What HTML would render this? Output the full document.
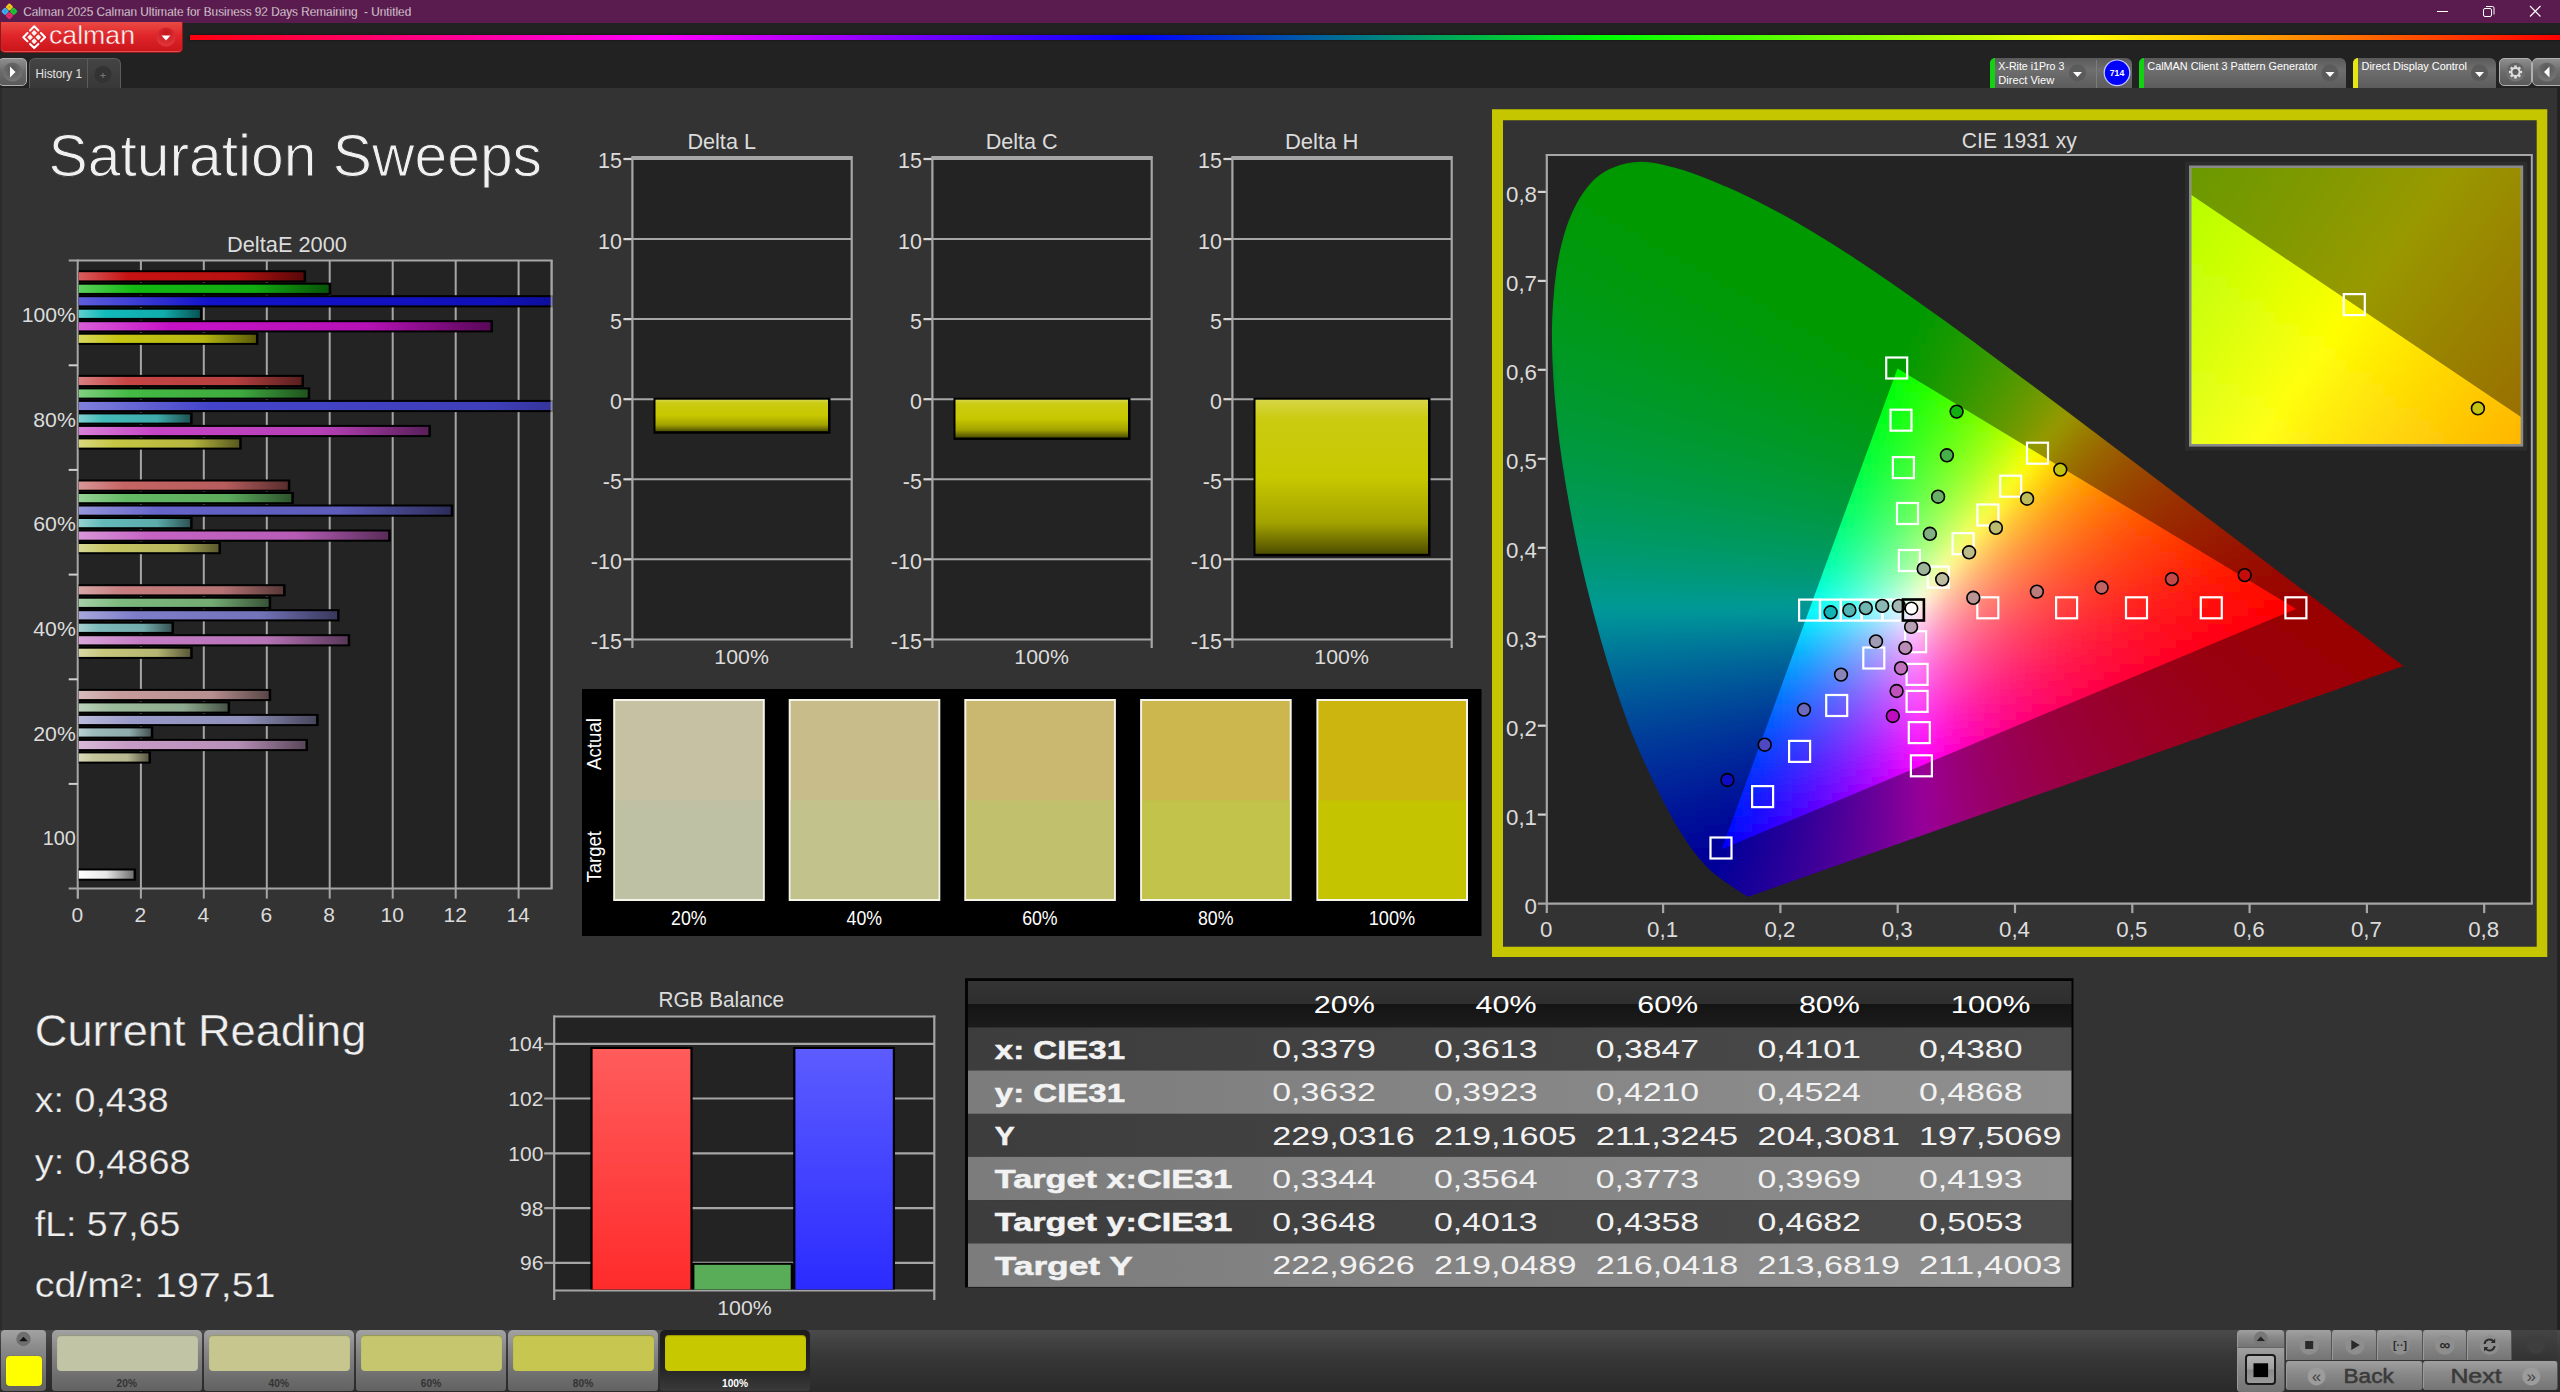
<!DOCTYPE html>
<html><head><meta charset="utf-8"><title>Calman - Saturation Sweeps</title>
<style>
html,body{margin:0;padding:0;background:#333;overflow:hidden}
body{width:2560px;height:1392px;font-family:"Liberation Sans",sans-serif}
#app{position:relative;width:2560px;height:1392px;overflow:hidden;background:#333}
#app div{position:absolute;box-sizing:border-box}
#main{position:absolute;left:0;top:0}
.titlebar{left:0;top:0;width:2560px;height:23px;background:#5a1b4e}
.toolband{left:0;top:23px;width:2560px;height:65px;background:#222}
.redbtn{left:0;top:22px;width:183px;height:31px;border-radius:0 0 5px 5px;background:linear-gradient(#ea4a44,#e0262a 45%,#c8141a);border:1px solid #8c1a1c;border-top:none;box-shadow:inset 0 -1px 0 #e0504c}
.rainbow{left:190px;top:35px;width:2370px;height:5px;background:linear-gradient(90deg,#ff0010,#ff00ff 20%,#0000ff 40%,#00ff00 60%,#ffff00 80%,#ff0000);box-shadow:0 0 3px rgba(0,0,0,.6)}
.gbtn{background:linear-gradient(#8e8e8e,#6a6a6a 50%,#5a5a5a);border:1px solid #b0b0b0;border-radius:5px}
.tab{background:linear-gradient(#444,#383838);border:1px solid #5c5c5c;border-bottom:none;border-radius:6px 6px 0 0}
.dev{background:linear-gradient(#5a5a5a,#6e6e6e 40%,#5c5c5c 100%);border-radius:6px 6px 0 0;top:58px;height:30px}
.strip{left:0;top:1330px;width:2560px;height:62px;background:linear-gradient(#4a4a4a,#383838 40%,#2a2a2a)}
.sbtn{top:1330px;height:61px;width:150px;border-radius:5px 5px 3px 3px;background:linear-gradient(#a2a2a2,#8a8a8a 30%,#6c6c6c 80%,#626262)}
.sbtn.sel{background:linear-gradient(#1c1c1c,#242424 60%,#3a3a3a)}
.sw{left:5.3px;top:5.3px;width:140.5px;height:36px;border-radius:4px;box-shadow:inset 0 1px 1px rgba(0,0,0,.25)}
.cbtn{background:linear-gradient(#a0a0a0,#8a8a8a 40%,#747474);border-right:1px solid #555;border-left:1px solid #999}
.cg rect{width:1.06px;height:1.06px}

</style></head><body>
<div id="app">
<div class="titlebar"></div><div class="toolband"></div><div style="left:2557px;top:88px;width:3px;height:1242px;background:#222"></div><div style="left:0;top:88px;width:2px;height:1242px;background:#2b2b2b"></div><div class="rainbow"></div><div class="redbtn"></div><div class="gbtn" style="left:-2px;top:58px;width:29px;height:28px"></div><div class="tab" style="left:29px;top:58px;width:92px;height:30px"></div><div style="left:87px;top:59px;width:1px;height:29px;background:#5c5c5c"></div><div class="dev" style="left:1990px;width:142px"></div><div style="left:1990px;top:58px;width:5px;height:30px;background:#12d312;border-radius:5px 0 0 0"></div><div style="left:2096px;top:60px;width:1px;height:28px;background:#7c7c7c"></div><div class="dev" style="left:2139px;width:207px"></div><div style="left:2139px;top:58px;width:5px;height:30px;background:#12d312;border-radius:5px 0 0 0"></div><div class="dev" style="left:2353px;width:143px"></div><div style="left:2353px;top:58px;width:5px;height:30px;background:#e6e610;border-radius:5px 0 0 0"></div><div class="gbtn" style="left:2499px;top:58px;width:33px;height:28px"></div><div class="gbtn" style="left:2532px;top:58px;width:33px;height:28px"></div><div class="strip"></div><div class="sbtn" style="left:1px;width:45px;border-radius:4px"></div><div style="left:5.5px;top:1355.5px;width:36px;height:30.5px;border-radius:4px;background:#ffff00;box-shadow:0 0 1px #550"></div><div class="sbtn" style="left:51.8px"><div class="sw" style="background:#c2c4a6"></div></div><div class="sbtn" style="left:203.8px"><div class="sw" style="background:#c6c68e"></div></div><div class="sbtn" style="left:356.0px"><div class="sw" style="background:#c6c66e"></div></div><div class="sbtn" style="left:508.0px"><div class="sw" style="background:#c6c650"></div></div><div class="sbtn sel" style="left:660.0px"><div class="sw" style="background:#c8c800"></div></div><div class="cbtn" style="left:2237px;top:1330px;width:48px;height:18px;border-radius:4px 4px 0 0;border-bottom:1px solid #666"></div><div class="cbtn" style="left:2237px;top:1348px;width:48px;height:44px;border-radius:0 0 4px 4px"></div><div style="left:2245px;top:1354px;width:31px;height:31px;border:2.5px solid #1a1a1a;border-radius:4px;background:linear-gradient(#b4b4b4,#a0a0a0 48%,#8a8a8a 52%,#9a9a9a)"></div><div class="cbtn" style="left:2286px;top:1330px;width:46.3px;height:30px;border-radius:3px 3px 0 0"></div><div class="cbtn" style="left:2332.3px;top:1330px;width:45.0px;height:30px;border-radius:3px 3px 0 0"></div><div class="cbtn" style="left:2377.3px;top:1330px;width:45.3px;height:30px;border-radius:3px 3px 0 0"></div><div class="cbtn" style="left:2422.6px;top:1330px;width:44.5px;height:30px;border-radius:3px 3px 0 0"></div><div class="cbtn" style="left:2467.1px;top:1330px;width:44.9px;height:30px;border-radius:3px 3px 0 0"></div><div style="left:2512px;top:1330px;width:45px;height:30px;background:linear-gradient(#444,#333)"></div><div class="cbtn" style="left:2286px;top:1361px;width:136.6px;height:29px;border-radius:3px"></div><div class="cbtn" style="left:2422.6px;top:1361px;width:135.6px;height:29px;border-radius:3px"></div>
<svg id="main" width="2560" height="1392" viewBox="0 0 2560 1392" font-family='"Liberation Sans", sans-serif'>
<defs>
<radialGradient id="rdc" cx="50%" cy="30%" r="70%"><stop offset="0" stop-color="#c4141c"/><stop offset="1" stop-color="#e4383c"/></radialGradient><radialGradient id="gc" cx="50%" cy="35%" r="70%"><stop offset="0" stop-color="#555"/><stop offset="1" stop-color="#7a7a7a"/></radialGradient><linearGradient id="b1" x1="0" x2="1" y1="0" y2="0"><stop offset="0" stop-color="#d85e5e"/><stop offset=".22" stop-color="#c61212"/><stop offset=".7" stop-color="#b61111"/><stop offset="1" stop-color="#590808"/></linearGradient><linearGradient id="b2" x1="0" x2="1" y1="0" y2="0"><stop offset="0" stop-color="#5ed05e"/><stop offset=".22" stop-color="#12ba12"/><stop offset=".7" stop-color="#11ab11"/><stop offset="1" stop-color="#085408"/></linearGradient><linearGradient id="b3" x1="0" x2="1.25" y1="0" y2="0"><stop offset="0" stop-color="#5e5edb"/><stop offset=".22" stop-color="#1212ca"/><stop offset=".7" stop-color="#1111ba"/><stop offset="1" stop-color="#08085b"/></linearGradient><linearGradient id="b4" x1="0" x2="1" y1="0" y2="0"><stop offset="0" stop-color="#5ed0d0"/><stop offset=".22" stop-color="#12baba"/><stop offset=".7" stop-color="#11abab"/><stop offset="1" stop-color="#085454"/></linearGradient><linearGradient id="b5" x1="0" x2="1" y1="0" y2="0"><stop offset="0" stop-color="#d85ed8"/><stop offset=".22" stop-color="#c612c6"/><stop offset=".7" stop-color="#b611b6"/><stop offset="1" stop-color="#590859"/></linearGradient><linearGradient id="b6" x1="0" x2="1" y1="0" y2="0"><stop offset="0" stop-color="#d8d85e"/><stop offset=".22" stop-color="#c6c612"/><stop offset=".7" stop-color="#b6b611"/><stop offset="1" stop-color="#595908"/></linearGradient><linearGradient id="b7" x1="0" x2="1" y1="0" y2="0"><stop offset="0" stop-color="#d88080"/><stop offset=".22" stop-color="#c64444"/><stop offset=".7" stop-color="#b63f3f"/><stop offset="1" stop-color="#591f1f"/></linearGradient><linearGradient id="b8" x1="0" x2="1" y1="0" y2="0"><stop offset="0" stop-color="#80d080"/><stop offset=".22" stop-color="#44ba44"/><stop offset=".7" stop-color="#3fab3f"/><stop offset="1" stop-color="#1f541f"/></linearGradient><linearGradient id="b9" x1="0" x2="1.25" y1="0" y2="0"><stop offset="0" stop-color="#8080db"/><stop offset=".22" stop-color="#4444ca"/><stop offset=".7" stop-color="#3f3fba"/><stop offset="1" stop-color="#1f1f5b"/></linearGradient><linearGradient id="b10" x1="0" x2="1" y1="0" y2="0"><stop offset="0" stop-color="#80d0d0"/><stop offset=".22" stop-color="#44baba"/><stop offset=".7" stop-color="#3fabab"/><stop offset="1" stop-color="#1f5454"/></linearGradient><linearGradient id="b11" x1="0" x2="1" y1="0" y2="0"><stop offset="0" stop-color="#d880d8"/><stop offset=".22" stop-color="#c644c6"/><stop offset=".7" stop-color="#b63fb6"/><stop offset="1" stop-color="#591f59"/></linearGradient><linearGradient id="b12" x1="0" x2="1" y1="0" y2="0"><stop offset="0" stop-color="#d8d880"/><stop offset=".22" stop-color="#c6c644"/><stop offset=".7" stop-color="#b6b63f"/><stop offset="1" stop-color="#59591f"/></linearGradient><linearGradient id="b13" x1="0" x2="1" y1="0" y2="0"><stop offset="0" stop-color="#d89696"/><stop offset=".22" stop-color="#c66464"/><stop offset=".7" stop-color="#b65c5c"/><stop offset="1" stop-color="#592d2d"/></linearGradient><linearGradient id="b14" x1="0" x2="1" y1="0" y2="0"><stop offset="0" stop-color="#96d096"/><stop offset=".22" stop-color="#64ba64"/><stop offset=".7" stop-color="#5cab5c"/><stop offset="1" stop-color="#2d542d"/></linearGradient><linearGradient id="b15" x1="0" x2="1" y1="0" y2="0"><stop offset="0" stop-color="#9696db"/><stop offset=".22" stop-color="#6464ca"/><stop offset=".7" stop-color="#5c5cba"/><stop offset="1" stop-color="#2d2d5b"/></linearGradient><linearGradient id="b16" x1="0" x2="1" y1="0" y2="0"><stop offset="0" stop-color="#96d0d0"/><stop offset=".22" stop-color="#64baba"/><stop offset=".7" stop-color="#5cabab"/><stop offset="1" stop-color="#2d5454"/></linearGradient><linearGradient id="b17" x1="0" x2="1" y1="0" y2="0"><stop offset="0" stop-color="#d896d8"/><stop offset=".22" stop-color="#c664c6"/><stop offset=".7" stop-color="#b65cb6"/><stop offset="1" stop-color="#592d59"/></linearGradient><linearGradient id="b18" x1="0" x2="1" y1="0" y2="0"><stop offset="0" stop-color="#d8d896"/><stop offset=".22" stop-color="#c6c664"/><stop offset=".7" stop-color="#b6b65c"/><stop offset="1" stop-color="#59592d"/></linearGradient><linearGradient id="b19" x1="0" x2="1" y1="0" y2="0"><stop offset="0" stop-color="#d8a7a7"/><stop offset=".22" stop-color="#c67d7d"/><stop offset=".7" stop-color="#b67373"/><stop offset="1" stop-color="#593838"/></linearGradient><linearGradient id="b20" x1="0" x2="1" y1="0" y2="0"><stop offset="0" stop-color="#a7d0a7"/><stop offset=".22" stop-color="#7dba7d"/><stop offset=".7" stop-color="#73ab73"/><stop offset="1" stop-color="#385438"/></linearGradient><linearGradient id="b21" x1="0" x2="1" y1="0" y2="0"><stop offset="0" stop-color="#a7a7db"/><stop offset=".22" stop-color="#7d7dca"/><stop offset=".7" stop-color="#7373ba"/><stop offset="1" stop-color="#38385b"/></linearGradient><linearGradient id="b22" x1="0" x2="1" y1="0" y2="0"><stop offset="0" stop-color="#a7d0d0"/><stop offset=".22" stop-color="#7dbaba"/><stop offset=".7" stop-color="#73abab"/><stop offset="1" stop-color="#385454"/></linearGradient><linearGradient id="b23" x1="0" x2="1" y1="0" y2="0"><stop offset="0" stop-color="#d8a7d8"/><stop offset=".22" stop-color="#c67dc6"/><stop offset=".7" stop-color="#b673b6"/><stop offset="1" stop-color="#593859"/></linearGradient><linearGradient id="b24" x1="0" x2="1" y1="0" y2="0"><stop offset="0" stop-color="#d8d8a7"/><stop offset=".22" stop-color="#c6c67d"/><stop offset=".7" stop-color="#b6b673"/><stop offset="1" stop-color="#595938"/></linearGradient><linearGradient id="b25" x1="0" x2="1" y1="0" y2="0"><stop offset="0" stop-color="#d8bbbb"/><stop offset=".22" stop-color="#c69b9b"/><stop offset=".7" stop-color="#b68f8f"/><stop offset="1" stop-color="#594646"/></linearGradient><linearGradient id="b26" x1="0" x2="1" y1="0" y2="0"><stop offset="0" stop-color="#bbd0bb"/><stop offset=".22" stop-color="#9bba9b"/><stop offset=".7" stop-color="#8fab8f"/><stop offset="1" stop-color="#465446"/></linearGradient><linearGradient id="b27" x1="0" x2="1" y1="0" y2="0"><stop offset="0" stop-color="#bbbbdb"/><stop offset=".22" stop-color="#9b9bca"/><stop offset=".7" stop-color="#8f8fba"/><stop offset="1" stop-color="#46465b"/></linearGradient><linearGradient id="b28" x1="0" x2="1" y1="0" y2="0"><stop offset="0" stop-color="#bbd0d0"/><stop offset=".22" stop-color="#9bbaba"/><stop offset=".7" stop-color="#8fabab"/><stop offset="1" stop-color="#465454"/></linearGradient><linearGradient id="b29" x1="0" x2="1" y1="0" y2="0"><stop offset="0" stop-color="#d8bbd8"/><stop offset=".22" stop-color="#c69bc6"/><stop offset=".7" stop-color="#b68fb6"/><stop offset="1" stop-color="#594659"/></linearGradient><linearGradient id="b30" x1="0" x2="1" y1="0" y2="0"><stop offset="0" stop-color="#d8d8bb"/><stop offset=".22" stop-color="#c6c69b"/><stop offset=".7" stop-color="#b6b68f"/><stop offset="1" stop-color="#595946"/></linearGradient><linearGradient id="bw" x1="0" x2="1" y1="0" y2="0"><stop offset="0" stop-color="#fff"/><stop offset=".5" stop-color="#e8e8e8"/><stop offset="1" stop-color="#707070"/></linearGradient><linearGradient id="yb" x1="0" x2="0" y1="0" y2="1"><stop offset="0" stop-color="#d6d648"/><stop offset=".12" stop-color="#cbcb12"/><stop offset=".5" stop-color="#c8c800"/><stop offset=".8" stop-color="#a2a200"/><stop offset="1" stop-color="#4e4e00"/></linearGradient><clipPath id="lc"><path d="M1749.0 898.3C1748.9 898.3 1748.8 898.3 1748.7 898.3C1748.5 898.3 1748.4 898.3 1748.2 898.3C1748.0 898.3 1747.8 898.4 1747.6 898.3C1747.4 898.3 1747.1 898.2 1746.8 898.1C1746.4 897.9 1746.0 897.7 1745.5 897.4C1745.0 897.2 1744.5 896.9 1743.9 896.5C1743.2 896.0 1742.4 895.5 1741.5 894.9C1740.6 894.4 1739.7 893.7 1738.6 892.9C1737.4 892.1 1736.2 891.3 1734.7 890.3C1733.2 889.3 1731.4 888.2 1729.4 886.8C1727.5 885.5 1725.3 884.2 1722.9 882.4C1720.4 880.6 1717.7 878.7 1714.7 876.2C1711.6 873.6 1708.6 871.3 1704.7 867.1C1700.8 862.9 1696.4 858.1 1691.3 851.2C1686.3 844.2 1680.8 836.5 1674.4 825.3C1667.9 814.2 1660.9 801.4 1652.9 784.5C1644.9 767.6 1635.4 748.1 1626.4 724.0C1617.5 699.9 1607.9 671.5 1599.1 640.0C1590.3 608.6 1580.7 571.4 1573.4 535.3C1566.2 499.2 1559.3 459.3 1555.5 423.4C1551.7 387.5 1549.4 351.2 1550.5 319.8C1551.6 288.4 1555.4 258.2 1562.2 234.9C1569.0 211.6 1579.7 192.3 1591.5 179.9C1603.3 167.5 1618.3 162.6 1633.0 160.5C1647.7 158.4 1664.0 163.1 1679.7 167.3C1695.4 171.4 1711.8 178.7 1727.2 185.3C1742.6 192.0 1757.3 199.3 1772.0 207.0C1786.6 214.6 1800.8 222.8 1815.0 231.3C1829.2 239.8 1843.4 248.8 1857.4 258.0C1871.5 267.2 1885.4 276.8 1899.4 286.5C1913.3 296.2 1927.2 306.1 1941.2 316.2C1955.2 326.2 1969.2 336.5 1983.2 346.8C1997.1 357.1 2011.0 367.5 2024.9 377.9C2038.8 388.2 2052.7 398.6 2066.4 408.9C2080.1 419.2 2093.7 429.5 2107.1 439.6C2120.4 449.7 2133.7 459.8 2146.6 469.5C2159.4 479.3 2172.2 488.9 2184.4 498.2C2196.7 507.4 2208.7 516.5 2220.0 525.1C2231.4 533.7 2242.4 542.0 2252.5 549.7C2262.6 557.4 2271.9 564.4 2280.7 571.1C2289.6 577.8 2298.0 584.1 2305.6 589.9C2313.2 595.6 2320.0 600.6 2326.2 605.3C2332.4 610.0 2338.0 614.3 2343.0 618.1C2348.0 621.9 2352.3 625.2 2356.3 628.2C2360.3 631.2 2363.8 633.8 2367.0 636.2C2370.2 638.6 2372.9 640.7 2375.6 642.7C2378.2 644.7 2380.5 646.5 2382.7 648.1C2384.9 649.8 2386.8 651.3 2388.6 652.6C2390.3 653.9 2391.9 655.0 2393.3 656.1C2394.6 657.1 2395.7 658.0 2396.8 658.7C2397.8 659.5 2398.7 660.2 2399.5 660.8C2400.2 661.4 2400.9 661.9 2401.5 662.3C2402.0 662.7 2402.4 663.0 2402.7 663.3C2403.1 663.6 2403.5 663.8 2403.8 664.1C2404.1 664.3 2404.4 664.5 2404.6 664.7C2404.9 664.9 2405.2 665.1 2405.4 665.3C2405.7 665.5 2406.0 665.7 2406.1 665.9C2406.3 666.0 2406.5 666.1 2406.6 666.2C2406.7 666.3 2406.8 666.3 2406.9 666.4C2406.9 666.4 2406.9 666.5 2407.0 666.5Z"/></clipPath><filter id="bl" x="-5%" y="-5%" width="110%" height="110%"><feGaussianBlur stdDeviation="6.8"/></filter><clipPath id="ic"><rect x="2191.5" y="168.0" width="329.1999999999998" height="276.1"/></clipPath><filter id="bl2" x="-5%" y="-5%" width="110%" height="110%"><feGaussianBlur stdDeviation="7"/></filter><linearGradient id="gr" x1="0" x2="0" y1="0" y2="1"><stop offset="0" stop-color="#ff5c5c"/><stop offset="1" stop-color="#ff2b2b"/></linearGradient><linearGradient id="gb" x1="0" x2="0" y1="0" y2="1"><stop offset="0" stop-color="#5c5cff"/><stop offset="1" stop-color="#2b2bff"/></linearGradient><linearGradient id="th" x1="0" x2="0" y1="0" y2="1"><stop offset="0" stop-color="#343434"/><stop offset=".49" stop-color="#2e2e2e"/><stop offset=".5" stop-color="#141414"/><stop offset="1" stop-color="#1c1c1c"/></linearGradient><linearGradient id="trd" x1="0" x2="1" y1="0" y2="0"><stop offset="0" stop-color="#3d3d3d"/><stop offset="1" stop-color="#4b4b4b"/></linearGradient><linearGradient id="trl" x1="0" x2="1" y1="0" y2="0"><stop offset="0" stop-color="#7c7c7c"/><stop offset="1" stop-color="#8f8f8f"/></linearGradient>
</defs>
<rect x="6.55" y="4.15" width="5.7" height="5.7" rx="1.2" fill="#f4c51c" transform="rotate(45 9.4 7.0)"/>
<rect x="8.6" y="6.2" width="1.6" height="1.6" fill="#000" fill-opacity=".18" transform="rotate(45 9.4 7.0)"/>
<rect x="2.25" y="8.45" width="5.7" height="5.7" rx="1.2" fill="#3cb0ee" transform="rotate(45 5.1 11.3)"/>
<rect x="4.3" y="10.5" width="1.6" height="1.6" fill="#000" fill-opacity=".18" transform="rotate(45 5.1 11.3)"/>
<rect x="10.85" y="8.45" width="5.7" height="5.7" rx="1.2" fill="#1cc634" transform="rotate(45 13.7 11.3)"/>
<rect x="12.9" y="10.5" width="1.6" height="1.6" fill="#000" fill-opacity=".18" transform="rotate(45 13.7 11.3)"/>
<rect x="6.55" y="12.75" width="5.7" height="5.7" rx="1.2" fill="#e62c6c" transform="rotate(45 9.4 15.6)"/>
<rect x="8.6" y="14.8" width="1.6" height="1.6" fill="#000" fill-opacity=".18" transform="rotate(45 9.4 15.6)"/>
<text x="23.2" y="16.2" font-size="12.6" fill="#fff" textLength="388.0" lengthAdjust="spacingAndGlyphs" xml:space="preserve" style="white-space:pre" stroke="#5a1b4e" stroke-width=".3">Calman 2025 Calman Ultimate for Business 92 Days Remaining  - Untitled</text>
<line x1="2437.0" y1="11.5" x2="2448.0" y2="11.5" stroke="#fff" stroke-width="1" />
<rect x="2483.5" y="8.5" width="8" height="8" rx="1.5" fill="none" stroke="#fff" stroke-width="1"/>
<path d="M2486 6.5h6.5a1.5 1.5 0 0 1 1.5 1.5v6.5" fill="none" stroke="#fff" stroke-width="1"/>
<path d="M2530 6l10.5 10.5M2540.5 6l-10.5 10.5" stroke="#fff" stroke-width="1.1"/>
<g transform="translate(34.2 37.2) rotate(45)"><path d="M-7.7 -1.8V-7.7H-1.8M1.8 -7.7H7.7V-1.8M7.7 1.8V7.7H1.8M-1.8 7.7H-7.7V1.8" fill="none" stroke="#fff" stroke-width="2.1" stroke-linejoin="round" stroke-linecap="round"/><rect x="-5.0" y="-5.0" width="4.2" height="4.2" rx=".7" fill="#fff0f0"/><rect x="-5.0" y="0.8" width="4.2" height="4.2" rx=".7" fill="#fff0f0"/><rect x="0.8" y="-5.0" width="4.2" height="4.2" rx=".7" fill="#fff0f0"/><rect x="0.8" y="0.8" width="4.2" height="4.2" rx=".7" fill="#fff0f0"/></g>
<text x="49.0" y="44.0" font-size="26" fill="#fff" textLength="86.0" lengthAdjust="spacingAndGlyphs" stroke="#d9282b" stroke-width=".5">calman</text>
<circle cx="166" cy="37" r="9.5" fill="url(#rdc)"/>
<path d="M161.5 35.5h9l-4.5 5z" fill="#fff"/>
<circle cx="12.5" cy="72" r="9.5" fill="url(#gc)"/>
<path d="M10 66.5l5.5 5.5l-5.5 5.5z" fill="#fff"/>
<text x="35.5" y="78.0" font-size="13" fill="#e4e4e4" textLength="46.5" lengthAdjust="spacingAndGlyphs">History 1</text>
<circle cx="103" cy="74.5" r="8.5" fill="#333"/>
<path d="M100.5 75.5h5M103 73v5" stroke="#777" stroke-width="1"/>
<circle cx="2077.5" cy="73" r="8.5" fill="#585858" opacity=".8"/>
<path d="M2073.0 72h9l-4.5 5z" fill="#fff"/>
<text x="1998.3" y="69.5" font-size="11.3" fill="#fff" textLength="66.0" lengthAdjust="spacingAndGlyphs">X-Rite i1Pro 3</text>
<text x="1998.3" y="84.0" font-size="11.3" fill="#fff" textLength="56.0" lengthAdjust="spacingAndGlyphs">Direct View</text>
<circle cx="2117" cy="72.8" r="12.8" fill="#0000fe" stroke="#c8c8ff" stroke-width="1.2"/>
<text x="2117.0" y="76.2" font-size="9" fill="#fff" text-anchor="middle" textLength="14.5" lengthAdjust="spacingAndGlyphs" font-weight="bold">714</text>
<circle cx="2330" cy="73" r="8.5" fill="#585858" opacity=".8"/>
<path d="M2325.5 72h9l-4.5 5z" fill="#fff"/>
<text x="2147.3" y="69.5" font-size="11.3" fill="#fff" textLength="170.0" lengthAdjust="spacingAndGlyphs">CalMAN Client 3 Pattern Generator</text>
<circle cx="2479.5" cy="73" r="8.5" fill="#585858" opacity=".8"/>
<path d="M2475.0 72h9l-4.5 5z" fill="#fff"/>
<text x="2361.5" y="69.5" font-size="11.3" fill="#fff" textLength="105.5" lengthAdjust="spacingAndGlyphs">Direct Display Control</text>
<circle cx="2515.5" cy="72" r="9.5" fill="url(#gc)"/>
<circle cx="2547" cy="72" r="9.5" fill="url(#gc)"/>
<g transform="translate(2515.5 72)" fill="#ddd"><rect x="-1.3" y="-6.6" width="2.6" height="3" transform="rotate(0)"/><rect x="-1.3" y="-6.6" width="2.6" height="3" transform="rotate(45)"/><rect x="-1.3" y="-6.6" width="2.6" height="3" transform="rotate(90)"/><rect x="-1.3" y="-6.6" width="2.6" height="3" transform="rotate(135)"/><rect x="-1.3" y="-6.6" width="2.6" height="3" transform="rotate(180)"/><rect x="-1.3" y="-6.6" width="2.6" height="3" transform="rotate(225)"/><rect x="-1.3" y="-6.6" width="2.6" height="3" transform="rotate(270)"/><rect x="-1.3" y="-6.6" width="2.6" height="3" transform="rotate(315)"/><circle r="4" fill="none" stroke="#ddd" stroke-width="1.8"/></g>
<path d="M2549.5 66.5l-5.5 5.5l5.5 5.5z" fill="#fff"/>
<text x="48.5" y="176.3" font-size="59.5" fill="#f0f0f0" textLength="493.5" lengthAdjust="spacingAndGlyphs" stroke="#333" stroke-width="1">Saturation Sweeps</text>
<rect x="77.7" y="260.6" width="473.9" height="628.0" fill="#232323" />
<text x="287.0" y="252.2" font-size="21.5" fill="#dcdcdc" text-anchor="middle" textLength="120.0" lengthAdjust="spacingAndGlyphs">DeltaE 2000</text>
<line x1="140.9" y1="260.6" x2="140.9" y2="888.6" stroke="#a6a6a6" stroke-width="2" />
<line x1="203.8" y1="260.6" x2="203.8" y2="888.6" stroke="#a6a6a6" stroke-width="2" />
<line x1="266.8" y1="260.6" x2="266.8" y2="888.6" stroke="#a6a6a6" stroke-width="2" />
<line x1="329.7" y1="260.6" x2="329.7" y2="888.6" stroke="#a6a6a6" stroke-width="2" />
<line x1="392.7" y1="260.6" x2="392.7" y2="888.6" stroke="#a6a6a6" stroke-width="2" />
<line x1="455.7" y1="260.6" x2="455.7" y2="888.6" stroke="#a6a6a6" stroke-width="2" />
<line x1="518.6" y1="260.6" x2="518.6" y2="888.6" stroke="#a6a6a6" stroke-width="2" />
<line x1="68.7" y1="260.6" x2="552.6" y2="260.6" stroke="#a6a6a6" stroke-width="2" />
<line x1="551.6" y1="260.6" x2="551.6" y2="888.6" stroke="#a6a6a6" stroke-width="2" />
<line x1="77.7" y1="259.6" x2="77.7" y2="898.6" stroke="#a6a6a6" stroke-width="2" />
<line x1="68.7" y1="888.6" x2="552.6" y2="888.6" stroke="#a6a6a6" stroke-width="2" />
<line x1="68.7" y1="365.3" x2="77.7" y2="365.3" stroke="#d0d0d0" stroke-width="2" />
<line x1="68.7" y1="469.9" x2="77.7" y2="469.9" stroke="#d0d0d0" stroke-width="2" />
<line x1="68.7" y1="574.6" x2="77.7" y2="574.6" stroke="#d0d0d0" stroke-width="2" />
<line x1="68.7" y1="679.3" x2="77.7" y2="679.3" stroke="#d0d0d0" stroke-width="2" />
<line x1="68.7" y1="783.9" x2="77.7" y2="783.9" stroke="#d0d0d0" stroke-width="2" />
<line x1="77.9" y1="888.6" x2="77.9" y2="898.6" stroke="#a6a6a6" stroke-width="2" />
<text x="77.4" y="922.0" font-size="21" fill="#dcdcdc" text-anchor="middle">0</text>
<line x1="140.9" y1="888.6" x2="140.9" y2="898.6" stroke="#a6a6a6" stroke-width="2" />
<text x="140.4" y="922.0" font-size="21" fill="#dcdcdc" text-anchor="middle">2</text>
<line x1="203.8" y1="888.6" x2="203.8" y2="898.6" stroke="#a6a6a6" stroke-width="2" />
<text x="203.3" y="922.0" font-size="21" fill="#dcdcdc" text-anchor="middle">4</text>
<line x1="266.8" y1="888.6" x2="266.8" y2="898.6" stroke="#a6a6a6" stroke-width="2" />
<text x="266.3" y="922.0" font-size="21" fill="#dcdcdc" text-anchor="middle">6</text>
<line x1="329.7" y1="888.6" x2="329.7" y2="898.6" stroke="#a6a6a6" stroke-width="2" />
<text x="329.2" y="922.0" font-size="21" fill="#dcdcdc" text-anchor="middle">8</text>
<line x1="392.7" y1="888.6" x2="392.7" y2="898.6" stroke="#a6a6a6" stroke-width="2" />
<text x="392.2" y="922.0" font-size="21" fill="#dcdcdc" text-anchor="middle">10</text>
<line x1="455.7" y1="888.6" x2="455.7" y2="898.6" stroke="#a6a6a6" stroke-width="2" />
<text x="455.2" y="922.0" font-size="21" fill="#dcdcdc" text-anchor="middle">12</text>
<line x1="518.6" y1="888.6" x2="518.6" y2="898.6" stroke="#a6a6a6" stroke-width="2" />
<text x="518.1" y="922.0" font-size="21" fill="#dcdcdc" text-anchor="middle">14</text>
<text x="75.8" y="321.8" font-size="20.5" fill="#dcdcdc" text-anchor="end" textLength="54.0" lengthAdjust="spacingAndGlyphs">100%</text>
<text x="75.8" y="426.5" font-size="20.5" fill="#dcdcdc" text-anchor="end" textLength="42.5" lengthAdjust="spacingAndGlyphs">80%</text>
<text x="75.8" y="531.2" font-size="20.5" fill="#dcdcdc" text-anchor="end" textLength="42.5" lengthAdjust="spacingAndGlyphs">60%</text>
<text x="75.8" y="635.8" font-size="20.5" fill="#dcdcdc" text-anchor="end" textLength="42.5" lengthAdjust="spacingAndGlyphs">40%</text>
<text x="75.8" y="740.5" font-size="20.5" fill="#dcdcdc" text-anchor="end" textLength="42.5" lengthAdjust="spacingAndGlyphs">20%</text>
<text x="75.8" y="845.2" font-size="20.5" fill="#dcdcdc" text-anchor="end" textLength="33.0" lengthAdjust="spacingAndGlyphs">100</text>
<rect x="78.7" y="270.2" width="227.4" height="12.2" fill="#000" />
<rect x="78.7" y="272.2" width="224.9" height="8.2" fill="url(#b1)" />
<rect x="78.7" y="282.7" width="252.5" height="12.2" fill="#000" />
<rect x="78.7" y="284.7" width="250.0" height="8.2" fill="url(#b2)" />
<rect x="78.7" y="295.2" width="473.9" height="12.2" fill="#000" />
<rect x="78.7" y="297.2" width="473.9" height="8.2" fill="url(#b3)" />
<rect x="78.7" y="307.7" width="123.7" height="12.2" fill="#000" />
<rect x="78.7" y="309.7" width="121.2" height="8.2" fill="url(#b4)" />
<rect x="78.7" y="320.2" width="414.3" height="12.2" fill="#000" />
<rect x="78.7" y="322.2" width="411.8" height="8.2" fill="url(#b5)" />
<rect x="78.7" y="332.7" width="179.7" height="12.2" fill="#000" />
<rect x="78.7" y="334.7" width="177.2" height="8.2" fill="url(#b6)" />
<rect x="78.7" y="374.9" width="225.3" height="12.2" fill="#000" />
<rect x="78.7" y="376.9" width="222.8" height="8.2" fill="url(#b7)" />
<rect x="78.7" y="387.4" width="231.5" height="12.2" fill="#000" />
<rect x="78.7" y="389.4" width="229.0" height="8.2" fill="url(#b8)" />
<rect x="78.7" y="399.9" width="473.9" height="12.2" fill="#000" />
<rect x="78.7" y="401.9" width="473.9" height="8.2" fill="url(#b9)" />
<rect x="78.7" y="412.4" width="113.9" height="12.2" fill="#000" />
<rect x="78.7" y="414.4" width="111.4" height="8.2" fill="url(#b10)" />
<rect x="78.7" y="424.9" width="352.2" height="12.2" fill="#000" />
<rect x="78.7" y="426.9" width="349.7" height="8.2" fill="url(#b11)" />
<rect x="78.7" y="437.4" width="163.0" height="12.2" fill="#000" />
<rect x="78.7" y="439.4" width="160.5" height="8.2" fill="url(#b12)" />
<rect x="78.7" y="479.5" width="211.6" height="12.2" fill="#000" />
<rect x="78.7" y="481.5" width="209.1" height="8.2" fill="url(#b13)" />
<rect x="78.7" y="492.0" width="215.1" height="12.2" fill="#000" />
<rect x="78.7" y="494.0" width="212.6" height="8.2" fill="url(#b14)" />
<rect x="78.7" y="504.5" width="374.5" height="12.2" fill="#000" />
<rect x="78.7" y="506.5" width="372.0" height="8.2" fill="url(#b15)" />
<rect x="78.7" y="517.0" width="113.9" height="12.2" fill="#000" />
<rect x="78.7" y="519.0" width="111.4" height="8.2" fill="url(#b16)" />
<rect x="78.7" y="529.5" width="312.0" height="12.2" fill="#000" />
<rect x="78.7" y="531.5" width="309.5" height="8.2" fill="url(#b17)" />
<rect x="78.7" y="542.0" width="142.3" height="12.2" fill="#000" />
<rect x="78.7" y="544.0" width="139.8" height="8.2" fill="url(#b18)" />
<rect x="78.7" y="584.2" width="206.9" height="12.2" fill="#000" />
<rect x="78.7" y="586.2" width="204.4" height="8.2" fill="url(#b19)" />
<rect x="78.7" y="596.7" width="192.5" height="12.2" fill="#000" />
<rect x="78.7" y="598.7" width="190.0" height="8.2" fill="url(#b20)" />
<rect x="78.7" y="609.2" width="260.9" height="12.2" fill="#000" />
<rect x="78.7" y="611.2" width="258.4" height="8.2" fill="url(#b21)" />
<rect x="78.7" y="621.7" width="95.3" height="12.2" fill="#000" />
<rect x="78.7" y="623.7" width="92.8" height="8.2" fill="url(#b22)" />
<rect x="78.7" y="634.2" width="271.5" height="12.2" fill="#000" />
<rect x="78.7" y="636.2" width="269.0" height="8.2" fill="url(#b23)" />
<rect x="78.7" y="646.7" width="114.0" height="12.2" fill="#000" />
<rect x="78.7" y="648.7" width="111.5" height="8.2" fill="url(#b24)" />
<rect x="78.7" y="688.9" width="192.5" height="12.2" fill="#000" />
<rect x="78.7" y="690.9" width="190.0" height="8.2" fill="url(#b25)" />
<rect x="78.7" y="701.4" width="151.4" height="12.2" fill="#000" />
<rect x="78.7" y="703.4" width="148.9" height="8.2" fill="url(#b26)" />
<rect x="78.7" y="713.9" width="239.9" height="12.2" fill="#000" />
<rect x="78.7" y="715.9" width="237.4" height="8.2" fill="url(#b27)" />
<rect x="78.7" y="726.4" width="74.6" height="12.2" fill="#000" />
<rect x="78.7" y="728.4" width="72.1" height="8.2" fill="url(#b28)" />
<rect x="78.7" y="738.9" width="229.3" height="12.2" fill="#000" />
<rect x="78.7" y="740.9" width="226.8" height="8.2" fill="url(#b29)" />
<rect x="78.7" y="751.4" width="72.3" height="12.2" fill="#000" />
<rect x="78.7" y="753.4" width="69.8" height="8.2" fill="url(#b30)" />
<rect x="78.7" y="868.5" width="57.4" height="12.2" fill="#000" />
<rect x="78.7" y="870.5" width="54.9" height="8.2" fill="url(#bw)" />
<line x1="551.6" y1="260.6" x2="551.6" y2="888.6" stroke="#a6a6a6" stroke-width="2" opacity=".75"/>
<rect x="632.4" y="158.0" width="219.3" height="481.4" fill="#232323" />
<text x="721.7" y="149.4" font-size="22.3" fill="#dcdcdc" text-anchor="middle" textLength="68.5" lengthAdjust="spacingAndGlyphs">Delta L</text>
<line x1="632.4" y1="159.0" x2="851.7" y2="159.0" stroke="#a6a6a6" stroke-width="2" />
<line x1="623.4" y1="159.0" x2="632.4" y2="159.0" stroke="#d6d6d6" stroke-width="2.2" />
<text x="621.9" y="168.4" font-size="21.5" fill="#dcdcdc" text-anchor="end">15</text>
<line x1="632.4" y1="239.1" x2="851.7" y2="239.1" stroke="#a6a6a6" stroke-width="2" />
<line x1="623.4" y1="239.1" x2="632.4" y2="239.1" stroke="#d6d6d6" stroke-width="2.2" />
<text x="621.9" y="248.5" font-size="21.5" fill="#dcdcdc" text-anchor="end">10</text>
<line x1="632.4" y1="319.1" x2="851.7" y2="319.1" stroke="#a6a6a6" stroke-width="2" />
<line x1="623.4" y1="319.1" x2="632.4" y2="319.1" stroke="#d6d6d6" stroke-width="2.2" />
<text x="621.9" y="328.5" font-size="21.5" fill="#dcdcdc" text-anchor="end">5</text>
<line x1="632.4" y1="399.2" x2="851.7" y2="399.2" stroke="#a6a6a6" stroke-width="2" />
<line x1="623.4" y1="399.2" x2="632.4" y2="399.2" stroke="#d6d6d6" stroke-width="2.2" />
<text x="621.9" y="408.6" font-size="21.5" fill="#dcdcdc" text-anchor="end">0</text>
<line x1="632.4" y1="479.3" x2="851.7" y2="479.3" stroke="#a6a6a6" stroke-width="2" />
<line x1="623.4" y1="479.3" x2="632.4" y2="479.3" stroke="#d6d6d6" stroke-width="2.2" />
<text x="621.9" y="488.7" font-size="21.5" fill="#dcdcdc" text-anchor="end">-5</text>
<line x1="632.4" y1="559.3" x2="851.7" y2="559.3" stroke="#a6a6a6" stroke-width="2" />
<line x1="623.4" y1="559.3" x2="632.4" y2="559.3" stroke="#d6d6d6" stroke-width="2.2" />
<text x="621.9" y="568.7" font-size="21.5" fill="#dcdcdc" text-anchor="end">-10</text>
<line x1="632.4" y1="639.4" x2="851.7" y2="639.4" stroke="#a6a6a6" stroke-width="2" />
<line x1="623.4" y1="639.4" x2="632.4" y2="639.4" stroke="#d6d6d6" stroke-width="2.2" />
<text x="621.9" y="648.8" font-size="21.5" fill="#dcdcdc" text-anchor="end">-15</text>
<line x1="631.4" y1="157.0" x2="852.7" y2="157.0" stroke="#a6a6a6" stroke-width="2" />
<line x1="632.4" y1="157.0" x2="632.4" y2="648.0" stroke="#a6a6a6" stroke-width="2.2" />
<line x1="851.7" y1="157.0" x2="851.7" y2="648.0" stroke="#a6a6a6" stroke-width="2.2" />
<rect x="653.5" y="397.7" width="177.0" height="36.0" fill="#000" />
<rect x="655.5" y="399.7" width="172.5" height="31.5" fill="url(#yb)" />
<text x="741.6" y="663.5" font-size="21" fill="#dcdcdc" text-anchor="middle" textLength="54.5" lengthAdjust="spacingAndGlyphs">100%</text>
<rect x="932.4" y="158.0" width="219.3" height="481.4" fill="#232323" />
<text x="1021.7" y="149.4" font-size="22.3" fill="#dcdcdc" text-anchor="middle" textLength="72.0" lengthAdjust="spacingAndGlyphs">Delta C</text>
<line x1="932.4" y1="159.0" x2="1151.7" y2="159.0" stroke="#a6a6a6" stroke-width="2" />
<line x1="923.4" y1="159.0" x2="932.4" y2="159.0" stroke="#d6d6d6" stroke-width="2.2" />
<text x="921.9" y="168.4" font-size="21.5" fill="#dcdcdc" text-anchor="end">15</text>
<line x1="932.4" y1="239.1" x2="1151.7" y2="239.1" stroke="#a6a6a6" stroke-width="2" />
<line x1="923.4" y1="239.1" x2="932.4" y2="239.1" stroke="#d6d6d6" stroke-width="2.2" />
<text x="921.9" y="248.5" font-size="21.5" fill="#dcdcdc" text-anchor="end">10</text>
<line x1="932.4" y1="319.1" x2="1151.7" y2="319.1" stroke="#a6a6a6" stroke-width="2" />
<line x1="923.4" y1="319.1" x2="932.4" y2="319.1" stroke="#d6d6d6" stroke-width="2.2" />
<text x="921.9" y="328.5" font-size="21.5" fill="#dcdcdc" text-anchor="end">5</text>
<line x1="932.4" y1="399.2" x2="1151.7" y2="399.2" stroke="#a6a6a6" stroke-width="2" />
<line x1="923.4" y1="399.2" x2="932.4" y2="399.2" stroke="#d6d6d6" stroke-width="2.2" />
<text x="921.9" y="408.6" font-size="21.5" fill="#dcdcdc" text-anchor="end">0</text>
<line x1="932.4" y1="479.3" x2="1151.7" y2="479.3" stroke="#a6a6a6" stroke-width="2" />
<line x1="923.4" y1="479.3" x2="932.4" y2="479.3" stroke="#d6d6d6" stroke-width="2.2" />
<text x="921.9" y="488.7" font-size="21.5" fill="#dcdcdc" text-anchor="end">-5</text>
<line x1="932.4" y1="559.3" x2="1151.7" y2="559.3" stroke="#a6a6a6" stroke-width="2" />
<line x1="923.4" y1="559.3" x2="932.4" y2="559.3" stroke="#d6d6d6" stroke-width="2.2" />
<text x="921.9" y="568.7" font-size="21.5" fill="#dcdcdc" text-anchor="end">-10</text>
<line x1="932.4" y1="639.4" x2="1151.7" y2="639.4" stroke="#a6a6a6" stroke-width="2" />
<line x1="923.4" y1="639.4" x2="932.4" y2="639.4" stroke="#d6d6d6" stroke-width="2.2" />
<text x="921.9" y="648.8" font-size="21.5" fill="#dcdcdc" text-anchor="end">-15</text>
<line x1="931.4" y1="157.0" x2="1152.7" y2="157.0" stroke="#a6a6a6" stroke-width="2" />
<line x1="932.4" y1="157.0" x2="932.4" y2="648.0" stroke="#a6a6a6" stroke-width="2.2" />
<line x1="1151.7" y1="157.0" x2="1151.7" y2="648.0" stroke="#a6a6a6" stroke-width="2.2" />
<rect x="953.5" y="397.7" width="177.0" height="42.3" fill="#000" />
<rect x="955.5" y="399.7" width="172.5" height="37.8" fill="url(#yb)" />
<text x="1041.6" y="663.5" font-size="21" fill="#dcdcdc" text-anchor="middle" textLength="54.5" lengthAdjust="spacingAndGlyphs">100%</text>
<rect x="1232.4" y="158.0" width="219.3" height="481.4" fill="#232323" />
<text x="1321.7" y="149.4" font-size="22.3" fill="#dcdcdc" text-anchor="middle" textLength="73.5" lengthAdjust="spacingAndGlyphs">Delta H</text>
<line x1="1232.4" y1="159.0" x2="1451.7" y2="159.0" stroke="#a6a6a6" stroke-width="2" />
<line x1="1223.4" y1="159.0" x2="1232.4" y2="159.0" stroke="#d6d6d6" stroke-width="2.2" />
<text x="1221.9" y="168.4" font-size="21.5" fill="#dcdcdc" text-anchor="end">15</text>
<line x1="1232.4" y1="239.1" x2="1451.7" y2="239.1" stroke="#a6a6a6" stroke-width="2" />
<line x1="1223.4" y1="239.1" x2="1232.4" y2="239.1" stroke="#d6d6d6" stroke-width="2.2" />
<text x="1221.9" y="248.5" font-size="21.5" fill="#dcdcdc" text-anchor="end">10</text>
<line x1="1232.4" y1="319.1" x2="1451.7" y2="319.1" stroke="#a6a6a6" stroke-width="2" />
<line x1="1223.4" y1="319.1" x2="1232.4" y2="319.1" stroke="#d6d6d6" stroke-width="2.2" />
<text x="1221.9" y="328.5" font-size="21.5" fill="#dcdcdc" text-anchor="end">5</text>
<line x1="1232.4" y1="399.2" x2="1451.7" y2="399.2" stroke="#a6a6a6" stroke-width="2" />
<line x1="1223.4" y1="399.2" x2="1232.4" y2="399.2" stroke="#d6d6d6" stroke-width="2.2" />
<text x="1221.9" y="408.6" font-size="21.5" fill="#dcdcdc" text-anchor="end">0</text>
<line x1="1232.4" y1="479.3" x2="1451.7" y2="479.3" stroke="#a6a6a6" stroke-width="2" />
<line x1="1223.4" y1="479.3" x2="1232.4" y2="479.3" stroke="#d6d6d6" stroke-width="2.2" />
<text x="1221.9" y="488.7" font-size="21.5" fill="#dcdcdc" text-anchor="end">-5</text>
<line x1="1232.4" y1="559.3" x2="1451.7" y2="559.3" stroke="#a6a6a6" stroke-width="2" />
<line x1="1223.4" y1="559.3" x2="1232.4" y2="559.3" stroke="#d6d6d6" stroke-width="2.2" />
<text x="1221.9" y="568.7" font-size="21.5" fill="#dcdcdc" text-anchor="end">-10</text>
<line x1="1232.4" y1="639.4" x2="1451.7" y2="639.4" stroke="#a6a6a6" stroke-width="2" />
<line x1="1223.4" y1="639.4" x2="1232.4" y2="639.4" stroke="#d6d6d6" stroke-width="2.2" />
<text x="1221.9" y="648.8" font-size="21.5" fill="#dcdcdc" text-anchor="end">-15</text>
<line x1="1231.4" y1="157.0" x2="1452.7" y2="157.0" stroke="#a6a6a6" stroke-width="2" />
<line x1="1232.4" y1="157.0" x2="1232.4" y2="648.0" stroke="#a6a6a6" stroke-width="2.2" />
<line x1="1451.7" y1="157.0" x2="1451.7" y2="648.0" stroke="#a6a6a6" stroke-width="2.2" />
<rect x="1253.5" y="397.7" width="177.0" height="158.6" fill="#000" />
<rect x="1255.5" y="399.7" width="172.5" height="154.1" fill="url(#yb)" />
<text x="1341.6" y="663.5" font-size="21" fill="#dcdcdc" text-anchor="middle" textLength="54.5" lengthAdjust="spacingAndGlyphs">100%</text>
<rect x="582.0" y="689.0" width="899.5" height="247.0" fill="#000" />
<rect x="613.2" y="699.0" width="151.6" height="202.0" fill="#f4f4e8" />
<rect x="615.2" y="701.0" width="147.6" height="198.0" fill="#c5c1a2" />
<rect x="615.2" y="800.4" width="147.6" height="98.6" fill="#bfc1a4" />
<text x="688.8" y="924.5" font-size="20" fill="#fff" text-anchor="middle" textLength="35.5" lengthAdjust="spacingAndGlyphs">20%</text>
<rect x="788.7" y="699.0" width="151.6" height="202.0" fill="#f4f4e8" />
<rect x="790.7" y="701.0" width="147.6" height="198.0" fill="#c8bd8a" />
<rect x="790.7" y="800.4" width="147.6" height="98.6" fill="#c2c28c" />
<text x="864.3" y="924.5" font-size="20" fill="#fff" text-anchor="middle" textLength="35.5" lengthAdjust="spacingAndGlyphs">40%</text>
<rect x="964.3" y="699.0" width="151.6" height="202.0" fill="#f4f4e8" />
<rect x="966.3" y="701.0" width="147.6" height="198.0" fill="#cab871" />
<rect x="966.3" y="800.4" width="147.6" height="98.6" fill="#c1c16d" />
<text x="1039.9" y="924.5" font-size="20" fill="#fff" text-anchor="middle" textLength="35.5" lengthAdjust="spacingAndGlyphs">60%</text>
<rect x="1140.1" y="699.0" width="151.6" height="202.0" fill="#f4f4e8" />
<rect x="1142.1" y="701.0" width="147.6" height="198.0" fill="#cbb74d" />
<rect x="1142.1" y="800.4" width="147.6" height="98.6" fill="#c1c34b" />
<text x="1215.7" y="924.5" font-size="20" fill="#fff" text-anchor="middle" textLength="35.5" lengthAdjust="spacingAndGlyphs">80%</text>
<rect x="1316.4" y="699.0" width="151.6" height="202.0" fill="#f4f4e8" />
<rect x="1318.4" y="701.0" width="147.6" height="198.0" fill="#cdb510" />
<rect x="1318.4" y="800.4" width="147.6" height="98.6" fill="#c4c400" />
<text x="1392.0" y="924.5" font-size="20" fill="#fff" text-anchor="middle" textLength="46.5" lengthAdjust="spacingAndGlyphs">100%</text>
<text transform="translate(601.2 770) rotate(-90)" font-size="20" fill="#fff" textLength="52" lengthAdjust="spacingAndGlyphs">Actual</text>
<text transform="translate(601.2 882.5) rotate(-90)" font-size="20" fill="#fff" textLength="51.5" lengthAdjust="spacingAndGlyphs">Target</text>
<path fill-rule="evenodd" fill="#c6c600" d="M1492 109.3H2547.3V957H1492ZM1503 120.3V946.7H2536.7V120.3Z"/>
<rect x="1546.8" y="155.0" width="985.0" height="748.6" fill="#232323" />
<g clip-path="url(#lc)"><g filter="url(#bl)"><g class="cg" transform="scale(8)"><rect x="201" y="19" style="width:11.06px" fill="#00ff00"/><rect x="198" y="20" style="width:16.06px" fill="#00ff00"/><rect x="197" y="21" style="width:20.06px" fill="#00ff00"/><rect x="197" y="22" fill="#00ff01"/><rect x="198" y="22" style="width:21.06px" fill="#00ff00"/><rect x="196" y="23" fill="#00ff04"/><rect x="197" y="23" fill="#00ff03"/><rect x="198" y="23" fill="#00ff01"/><rect x="199" y="23" style="width:22.06px" fill="#00ff00"/><rect x="196" y="24" fill="#00ff06"/><rect x="197" y="24" fill="#00ff05"/><rect x="198" y="24" fill="#00ff03"/><rect x="199" y="24" fill="#00ff02"/><rect x="200" y="24" fill="#00ff01"/><rect x="201" y="24" style="width:22.06px" fill="#00ff00"/><rect x="195" y="25" fill="#00ff09"/><rect x="196" y="25" fill="#00ff08"/><rect x="197" y="25" fill="#00ff07"/><rect x="198" y="25" fill="#00ff06"/><rect x="199" y="25" fill="#00ff04"/><rect x="200" y="25" fill="#00ff03"/><rect x="201" y="25" fill="#00ff02"/><rect x="202" y="25" fill="#00ff01"/><rect x="203" y="25" style="width:22.06px" fill="#00ff00"/><rect x="195" y="26" fill="#00ff0b"/><rect x="196" y="26" fill="#00ff0a"/><rect x="197" y="26" fill="#00ff09"/><rect x="198" y="26" fill="#00ff08"/><rect x="199" y="26" fill="#00ff06"/><rect x="200" y="26" fill="#00ff05"/><rect x="201" y="26" fill="#00ff04"/><rect x="202" y="26" fill="#00ff03"/><rect x="203" y="26" fill="#00ff02"/><rect x="204" y="26" style="width:23.06px" fill="#00ff00"/><rect x="194" y="27" fill="#00ff0e"/><rect x="195" y="27" fill="#00ff0d"/><rect x="196" y="27" fill="#00ff0c"/><rect x="197" y="27" fill="#00ff0b"/><rect x="198" y="27" fill="#00ff0a"/><rect x="199" y="27" fill="#00ff09"/><rect x="200" y="27" fill="#00ff07"/><rect x="201" y="27" fill="#00ff06"/><rect x="202" y="27" fill="#00ff05"/><rect x="203" y="27" fill="#00ff04"/><rect x="204" y="27" fill="#00ff02"/><rect x="205" y="27" fill="#00ff01"/><rect x="206" y="27" style="width:23.06px" fill="#00ff00"/><rect x="194" y="28" fill="#00ff11"/><rect x="195" y="28" fill="#00ff0f"/><rect x="196" y="28" fill="#00ff0e"/><rect x="197" y="28" fill="#00ff0d"/><rect x="198" y="28" fill="#00ff0c"/><rect x="199" y="28" fill="#00ff0b"/><rect x="200" y="28" fill="#00ff0a"/><rect x="201" y="28" fill="#00ff08"/><rect x="202" y="28" fill="#00ff07"/><rect x="203" y="28" fill="#00ff06"/><rect x="204" y="28" fill="#00ff05"/><rect x="205" y="28" fill="#00ff03"/><rect x="206" y="28" fill="#00ff02"/><rect x="207" y="28" fill="#00ff01"/><rect x="208" y="28" style="width:22.06px" fill="#00ff00"/><rect x="194" y="29" fill="#00ff13"/><rect x="195" y="29" fill="#00ff12"/><rect x="196" y="29" fill="#00ff11"/><rect x="197" y="29" fill="#00ff0f"/><rect x="198" y="29" fill="#00ff0e"/><rect x="199" y="29" fill="#00ff0d"/><rect x="200" y="29" fill="#00ff0c"/><rect x="201" y="29" fill="#00ff0b"/><rect x="202" y="29" fill="#00ff09"/><rect x="203" y="29" fill="#00ff08"/><rect x="204" y="29" fill="#00ff07"/><rect x="205" y="29" fill="#00ff06"/><rect x="206" y="29" fill="#00ff04"/><rect x="207" y="29" fill="#00ff03"/><rect x="208" y="29" fill="#00ff02"/><rect x="209" y="29" style="width:23.06px" fill="#00ff00"/><rect x="193" y="30" fill="#00ff16"/><rect x="194" y="30" fill="#00ff15"/><rect x="195" y="30" fill="#00ff14"/><rect x="196" y="30" fill="#00ff13"/><rect x="197" y="30" fill="#00ff12"/><rect x="198" y="30" fill="#00ff10"/><rect x="199" y="30" fill="#00ff0f"/><rect x="200" y="30" fill="#00ff0e"/><rect x="201" y="30" fill="#00ff0d"/><rect x="202" y="30" fill="#00ff0c"/><rect x="203" y="30" fill="#00ff0a"/><rect x="204" y="30" fill="#00ff09"/><rect x="205" y="30" fill="#00ff08"/><rect x="206" y="30" fill="#00ff06"/><rect x="207" y="30" fill="#00ff05"/><rect x="208" y="30" fill="#00ff04"/><rect x="209" y="30" fill="#00ff03"/><rect x="210" y="30" fill="#00ff01"/><rect x="211" y="30" style="width:22.06px" fill="#00ff00"/><rect x="193" y="31" fill="#00ff19"/><rect x="194" y="31" fill="#00ff17"/><rect x="195" y="31" fill="#00ff16"/><rect x="196" y="31" fill="#00ff15"/><rect x="197" y="31" fill="#00ff14"/><rect x="198" y="31" fill="#00ff13"/><rect x="199" y="31" fill="#00ff12"/><rect x="200" y="31" fill="#00ff10"/><rect x="201" y="31" fill="#00ff0f"/><rect x="202" y="31" fill="#00ff0e"/><rect x="203" y="31" fill="#00ff0d"/><rect x="204" y="31" fill="#00ff0b"/><rect x="205" y="31" fill="#00ff0a"/><rect x="206" y="31" fill="#00ff09"/><rect x="207" y="31" fill="#00ff07"/><rect x="208" y="31" fill="#00ff06"/><rect x="209" y="31" fill="#00ff05"/><rect x="210" y="31" fill="#00ff03"/><rect x="211" y="31" fill="#00ff02"/><rect x="212" y="31" fill="#00ff01"/><rect x="213" y="31" style="width:22.06px" fill="#00ff00"/><rect x="193" y="32" fill="#00ff1b"/><rect x="194" y="32" fill="#00ff1a"/><rect x="195" y="32" fill="#00ff19"/><rect x="196" y="32" fill="#00ff18"/><rect x="197" y="32" fill="#00ff16"/><rect x="198" y="32" fill="#00ff15"/><rect x="199" y="32" fill="#00ff14"/><rect x="200" y="32" fill="#00ff13"/><rect x="201" y="32" fill="#00ff12"/><rect x="202" y="32" fill="#00ff10"/><rect x="203" y="32" fill="#00ff0f"/><rect x="204" y="32" fill="#00ff0e"/><rect x="205" y="32" fill="#00ff0c"/><rect x="206" y="32" fill="#00ff0b"/><rect x="207" y="32" fill="#00ff0a"/><rect x="208" y="32" fill="#00ff09"/><rect x="209" y="32" fill="#00ff07"/><rect x="210" y="32" fill="#00ff06"/><rect x="211" y="32" fill="#00ff04"/><rect x="212" y="32" fill="#00ff03"/><rect x="213" y="32" fill="#00ff02"/><rect x="214" y="32" style="width:22.06px" fill="#00ff00"/><rect x="193" y="33" fill="#00ff1e"/><rect x="194" y="33" fill="#00ff1c"/><rect x="195" y="33" fill="#00ff1b"/><rect x="196" y="33" fill="#00ff1a"/><rect x="197" y="33" fill="#00ff19"/><rect x="198" y="33" fill="#00ff18"/><rect x="199" y="33" fill="#00ff16"/><rect x="200" y="33" fill="#00ff15"/><rect x="201" y="33" fill="#00ff14"/><rect x="202" y="33" fill="#00ff13"/><rect x="203" y="33" fill="#00ff11"/><rect x="204" y="33" fill="#00ff10"/><rect x="205" y="33" fill="#00ff0f"/><rect x="206" y="33" fill="#00ff0e"/><rect x="207" y="33" fill="#00ff0c"/><rect x="208" y="33" fill="#00ff0b"/><rect x="209" y="33" fill="#00ff0a"/><rect x="210" y="33" fill="#00ff08"/><rect x="211" y="33" fill="#00ff07"/><rect x="212" y="33" fill="#00ff05"/><rect x="213" y="33" fill="#00ff04"/><rect x="214" y="33" fill="#00ff03"/><rect x="215" y="33" fill="#00ff01"/><rect x="216" y="33" style="width:22.06px" fill="#00ff00"/><rect x="193" y="34" fill="#00ff20"/><rect x="194" y="34" fill="#00ff1f"/><rect x="195" y="34" fill="#00ff1e"/><rect x="196" y="34" fill="#00ff1d"/><rect x="197" y="34" fill="#00ff1b"/><rect x="198" y="34" fill="#00ff1a"/><rect x="199" y="34" fill="#00ff19"/><rect x="200" y="34" fill="#00ff18"/><rect x="201" y="34" fill="#00ff17"/><rect x="202" y="34" fill="#00ff15"/><rect x="203" y="34" fill="#00ff14"/><rect x="204" y="34" fill="#00ff13"/><rect x="205" y="34" fill="#00ff11"/><rect x="206" y="34" fill="#00ff10"/><rect x="207" y="34" fill="#00ff0f"/><rect x="208" y="34" fill="#00ff0d"/><rect x="209" y="34" fill="#00ff0c"/><rect x="210" y="34" fill="#00ff0b"/><rect x="211" y="34" fill="#00ff09"/><rect x="212" y="34" fill="#00ff08"/><rect x="213" y="34" fill="#00ff07"/><rect x="214" y="34" fill="#00ff05"/><rect x="215" y="34" fill="#00ff04"/><rect x="216" y="34" fill="#00ff02"/><rect x="217" y="34" fill="#00ff01"/><rect x="218" y="34" style="width:21.06px" fill="#00ff00"/><rect x="193" y="35" fill="#00ff23"/><rect x="194" y="35" fill="#00ff22"/><rect x="195" y="35" fill="#00ff20"/><rect x="196" y="35" fill="#00ff1f"/><rect x="197" y="35" fill="#00ff1e"/><rect x="198" y="35" fill="#00ff1d"/><rect x="199" y="35" fill="#00ff1c"/><rect x="200" y="35" fill="#00ff1a"/><rect x="201" y="35" fill="#00ff19"/><rect x="202" y="35" fill="#00ff18"/><rect x="203" y="35" fill="#00ff17"/><rect x="204" y="35" fill="#00ff15"/><rect x="205" y="35" fill="#00ff14"/><rect x="206" y="35" fill="#00ff13"/><rect x="207" y="35" fill="#00ff11"/><rect x="208" y="35" fill="#00ff10"/><rect x="209" y="35" fill="#00ff0f"/><rect x="210" y="35" fill="#00ff0d"/><rect x="211" y="35" fill="#00ff0c"/><rect x="212" y="35" fill="#00ff0b"/><rect x="213" y="35" fill="#00ff09"/><rect x="214" y="35" fill="#00ff08"/><rect x="215" y="35" fill="#00ff06"/><rect x="216" y="35" fill="#00ff05"/><rect x="217" y="35" fill="#00ff03"/><rect x="218" y="35" fill="#00ff02"/><rect x="219" y="35" style="width:22.06px" fill="#00ff00"/><rect x="193" y="36" fill="#00ff25"/><rect x="194" y="36" fill="#00ff24"/><rect x="195" y="36" fill="#00ff23"/><rect x="196" y="36" fill="#00ff22"/><rect x="197" y="36" fill="#00ff21"/><rect x="198" y="36" fill="#00ff1f"/><rect x="199" y="36" fill="#00ff1e"/><rect x="200" y="36" fill="#00ff1d"/><rect x="201" y="36" fill="#00ff1c"/><rect x="202" y="36" fill="#00ff1b"/><rect x="203" y="36" fill="#00ff19"/><rect x="204" y="36" fill="#00ff18"/><rect x="205" y="36" fill="#00ff17"/><rect x="206" y="36" fill="#00ff15"/><rect x="207" y="36" fill="#00ff14"/><rect x="208" y="36" fill="#00ff13"/><rect x="209" y="36" fill="#00ff11"/><rect x="210" y="36" fill="#00ff10"/><rect x="211" y="36" fill="#00ff0f"/><rect x="212" y="36" fill="#00ff0d"/><rect x="213" y="36" fill="#00ff0c"/><rect x="214" y="36" fill="#00ff0a"/><rect x="215" y="36" fill="#00ff09"/><rect x="216" y="36" fill="#00ff07"/><rect x="217" y="36" fill="#00ff06"/><rect x="218" y="36" fill="#00ff04"/><rect x="219" y="36" fill="#00ff03"/><rect x="220" y="36" fill="#00ff01"/><rect x="221" y="36" style="width:20.06px" fill="#00ff00"/><rect x="241" y="36" fill="#05ff00"/><rect x="192" y="37" fill="#00ff29"/><rect x="193" y="37" fill="#00ff28"/><rect x="194" y="37" fill="#00ff27"/><rect x="195" y="37" fill="#00ff26"/><rect x="196" y="37" fill="#00ff25"/><rect x="197" y="37" fill="#00ff23"/><rect x="198" y="37" fill="#00ff22"/><rect x="199" y="37" fill="#00ff21"/><rect x="200" y="37" fill="#00ff20"/><rect x="201" y="37" fill="#00ff1f"/><rect x="202" y="37" fill="#00ff1d"/><rect x="203" y="37" fill="#00ff1c"/><rect x="204" y="37" fill="#00ff1b"/><rect x="205" y="37" fill="#00ff19"/><rect x="206" y="37" fill="#00ff18"/><rect x="207" y="37" fill="#00ff17"/><rect x="208" y="37" fill="#00ff15"/><rect x="209" y="37" fill="#00ff14"/><rect x="210" y="37" fill="#00ff13"/><rect x="211" y="37" fill="#00ff11"/><rect x="212" y="37" fill="#00ff10"/><rect x="213" y="37" fill="#00ff0e"/><rect x="214" y="37" fill="#00ff0d"/><rect x="215" y="37" fill="#00ff0c"/><rect x="216" y="37" fill="#00ff0a"/><rect x="217" y="37" fill="#00ff09"/><rect x="218" y="37" fill="#00ff07"/><rect x="219" y="37" fill="#00ff05"/><rect x="220" y="37" fill="#00ff04"/><rect x="221" y="37" fill="#00ff02"/><rect x="222" y="37" fill="#00ff01"/><rect x="223" y="37" style="width:17.06px" fill="#00ff00"/><rect x="240" y="37" fill="#01ff00"/><rect x="241" y="37" fill="#08ff00"/><rect x="242" y="37" fill="#0fff00"/><rect x="192" y="38" fill="#00ff2c"/><rect x="193" y="38" fill="#00ff2b"/><rect x="194" y="38" fill="#00ff2a"/><rect x="195" y="38" fill="#00ff29"/><rect x="196" y="38" fill="#00ff27"/><rect x="197" y="38" fill="#00ff26"/><rect x="198" y="38" fill="#00ff25"/><rect x="199" y="38" fill="#00ff24"/><rect x="200" y="38" fill="#00ff23"/><rect x="201" y="38" fill="#00ff21"/><rect x="202" y="38" fill="#00ff20"/><rect x="203" y="38" fill="#00ff1f"/><rect x="204" y="38" fill="#00ff1d"/><rect x="205" y="38" fill="#00ff1c"/><rect x="206" y="38" fill="#00ff1b"/><rect x="207" y="38" fill="#00ff1a"/><rect x="208" y="38" fill="#00ff18"/><rect x="209" y="38" fill="#00ff17"/><rect x="210" y="38" fill="#00ff15"/><rect x="211" y="38" fill="#00ff14"/><rect x="212" y="38" fill="#00ff13"/><rect x="213" y="38" fill="#00ff11"/><rect x="214" y="38" fill="#00ff10"/><rect x="215" y="38" fill="#00ff0e"/><rect x="216" y="38" fill="#00ff0d"/><rect x="217" y="38" fill="#00ff0b"/><rect x="218" y="38" fill="#00ff0a"/><rect x="219" y="38" fill="#00ff08"/><rect x="220" y="38" fill="#00ff07"/><rect x="221" y="38" fill="#00ff05"/><rect x="222" y="38" fill="#00ff03"/><rect x="223" y="38" fill="#00ff02"/><rect x="224" y="38" style="width:16.06px" fill="#00ff00"/><rect x="240" y="38" fill="#04ff00"/><rect x="241" y="38" fill="#0bff00"/><rect x="242" y="38" fill="#12ff00"/><rect x="243" y="38" fill="#19ff00"/><rect x="244" y="38" fill="#20ff00"/><rect x="192" y="39" fill="#00ff2f"/><rect x="193" y="39" fill="#00ff2e"/><rect x="194" y="39" fill="#00ff2d"/><rect x="195" y="39" fill="#00ff2b"/><rect x="196" y="39" fill="#00ff2a"/><rect x="197" y="39" fill="#00ff29"/><rect x="198" y="39" fill="#00ff28"/><rect x="199" y="39" fill="#00ff27"/><rect x="200" y="39" fill="#00ff25"/><rect x="201" y="39" fill="#00ff24"/><rect x="202" y="39" fill="#00ff23"/><rect x="203" y="39" fill="#00ff22"/><rect x="204" y="39" fill="#00ff20"/><rect x="205" y="39" fill="#00ff1f"/><rect x="206" y="39" fill="#00ff1e"/><rect x="207" y="39" fill="#00ff1c"/><rect x="208" y="39" fill="#00ff1b"/><rect x="209" y="39" fill="#00ff1a"/><rect x="210" y="39" fill="#00ff18"/><rect x="211" y="39" fill="#00ff17"/><rect x="212" y="39" fill="#00ff15"/><rect x="213" y="39" fill="#00ff14"/><rect x="214" y="39" fill="#00ff13"/><rect x="215" y="39" fill="#00ff11"/><rect x="216" y="39" fill="#00ff10"/><rect x="217" y="39" fill="#00ff0e"/><rect x="218" y="39" fill="#00ff0d"/><rect x="219" y="39" fill="#00ff0b"/><rect x="220" y="39" fill="#00ff09"/><rect x="221" y="39" fill="#00ff08"/><rect x="222" y="39" fill="#00ff06"/><rect x="223" y="39" fill="#00ff05"/><rect x="224" y="39" fill="#00ff03"/><rect x="225" y="39" fill="#00ff01"/><rect x="226" y="39" style="width:14.06px" fill="#00ff00"/><rect x="240" y="39" fill="#06ff00"/><rect x="241" y="39" fill="#0eff00"/><rect x="242" y="39" fill="#15ff00"/><rect x="243" y="39" fill="#1cff00"/><rect x="244" y="39" fill="#24ff00"/><rect x="245" y="39" fill="#2bff00"/><rect x="192" y="40" fill="#00ff32"/><rect x="193" y="40" fill="#00ff31"/><rect x="194" y="40" fill="#00ff30"/><rect x="195" y="40" fill="#00ff2e"/><rect x="196" y="40" fill="#00ff2d"/><rect x="197" y="40" fill="#00ff2c"/><rect x="198" y="40" fill="#00ff2b"/><rect x="199" y="40" fill="#00ff2a"/><rect x="200" y="40" fill="#00ff28"/><rect x="201" y="40" fill="#00ff27"/><rect x="202" y="40" fill="#00ff26"/><rect x="203" y="40" fill="#00ff25"/><rect x="204" y="40" fill="#00ff23"/><rect x="205" y="40" fill="#00ff22"/><rect x="206" y="40" fill="#00ff21"/><rect x="207" y="40" fill="#00ff1f"/><rect x="208" y="40" fill="#00ff1e"/><rect x="209" y="40" fill="#00ff1d"/><rect x="210" y="40" fill="#00ff1b"/><rect x="211" y="40" fill="#00ff1a"/><rect x="212" y="40" fill="#00ff18"/><rect x="213" y="40" fill="#00ff17"/><rect x="214" y="40" fill="#00ff16"/><rect x="215" y="40" fill="#00ff14"/><rect x="216" y="40" fill="#00ff13"/><rect x="217" y="40" fill="#00ff11"/><rect x="218" y="40" fill="#00ff10"/><rect x="219" y="40" fill="#00ff0e"/><rect x="220" y="40" fill="#00ff0c"/><rect x="221" y="40" fill="#00ff0b"/><rect x="222" y="40" fill="#00ff09"/><rect x="223" y="40" fill="#00ff08"/><rect x="224" y="40" fill="#00ff06"/><rect x="225" y="40" fill="#00ff04"/><rect x="226" y="40" fill="#00ff03"/><rect x="227" y="40" fill="#00ff01"/><rect x="228" y="40" style="width:11.06px" fill="#00ff00"/><rect x="239" y="40" fill="#02ff00"/><rect x="240" y="40" fill="#09ff00"/><rect x="241" y="40" fill="#10ff00"/><rect x="242" y="40" fill="#18ff00"/><rect x="243" y="40" fill="#1fff00"/><rect x="244" y="40" fill="#27ff00"/><rect x="245" y="40" fill="#2fff00"/><rect x="246" y="40" fill="#37ff00"/><rect x="247" y="40" fill="#3fff00"/><rect x="192" y="41" fill="#00ff35"/><rect x="193" y="41" fill="#00ff34"/><rect x="194" y="41" fill="#00ff33"/><rect x="195" y="41" fill="#00ff31"/><rect x="196" y="41" fill="#00ff30"/><rect x="197" y="41" fill="#00ff2f"/><rect x="198" y="41" fill="#00ff2e"/><rect x="199" y="41" fill="#00ff2d"/><rect x="200" y="41" fill="#00ff2b"/><rect x="201" y="41" fill="#00ff2a"/><rect x="202" y="41" fill="#00ff29"/><rect x="203" y="41" fill="#00ff28"/><rect x="204" y="41" fill="#00ff26"/><rect x="205" y="41" fill="#00ff25"/><rect x="206" y="41" fill="#00ff24"/><rect x="207" y="41" fill="#00ff22"/><rect x="208" y="41" fill="#00ff21"/><rect x="209" y="41" fill="#00ff20"/><rect x="210" y="41" fill="#00ff1e"/><rect x="211" y="41" fill="#00ff1d"/><rect x="212" y="41" fill="#00ff1b"/><rect x="213" y="41" fill="#00ff1a"/><rect x="214" y="41" fill="#00ff19"/><rect x="215" y="41" fill="#00ff17"/><rect x="216" y="41" fill="#00ff16"/><rect x="217" y="41" fill="#00ff14"/><rect x="218" y="41" fill="#00ff13"/><rect x="219" y="41" fill="#00ff11"/><rect x="220" y="41" fill="#00ff0f"/><rect x="221" y="41" fill="#00ff0e"/><rect x="222" y="41" fill="#00ff0c"/><rect x="223" y="41" fill="#00ff0b"/><rect x="224" y="41" fill="#00ff09"/><rect x="225" y="41" fill="#00ff07"/><rect x="226" y="41" fill="#00ff05"/><rect x="227" y="41" fill="#00ff04"/><rect x="228" y="41" fill="#00ff02"/><rect x="229" y="41" style="width:10.06px" fill="#00ff00"/><rect x="239" y="41" fill="#05ff00"/><rect x="240" y="41" fill="#0cff00"/><rect x="241" y="41" fill="#13ff00"/><rect x="242" y="41" fill="#1bff00"/><rect x="243" y="41" fill="#23ff00"/><rect x="244" y="41" fill="#2aff00"/><rect x="245" y="41" fill="#32ff00"/><rect x="246" y="41" fill="#3aff00"/><rect x="247" y="41" fill="#43ff00"/><rect x="248" y="41" fill="#4bff00"/><rect x="192" y="42" fill="#00ff38"/><rect x="193" y="42" fill="#00ff37"/><rect x="194" y="42" fill="#00ff36"/><rect x="195" y="42" fill="#00ff35"/><rect x="196" y="42" fill="#00ff33"/><rect x="197" y="42" fill="#00ff32"/><rect x="198" y="42" fill="#00ff31"/><rect x="199" y="42" fill="#00ff30"/><rect x="200" y="42" fill="#00ff2f"/><rect x="201" y="42" fill="#00ff2d"/><rect x="202" y="42" fill="#00ff2c"/><rect x="203" y="42" fill="#00ff2b"/><rect x="204" y="42" fill="#00ff2a"/><rect x="205" y="42" fill="#00ff28"/><rect x="206" y="42" fill="#00ff27"/><rect x="207" y="42" fill="#00ff26"/><rect x="208" y="42" fill="#00ff24"/><rect x="209" y="42" fill="#00ff23"/><rect x="210" y="42" fill="#00ff21"/><rect x="211" y="42" fill="#00ff20"/><rect x="212" y="42" fill="#00ff1f"/><rect x="213" y="42" fill="#00ff1d"/><rect x="214" y="42" fill="#00ff1c"/><rect x="215" y="42" fill="#00ff1a"/><rect x="216" y="42" fill="#00ff19"/><rect x="217" y="42" fill="#00ff17"/><rect x="218" y="42" fill="#00ff16"/><rect x="219" y="42" fill="#00ff14"/><rect x="220" y="42" fill="#00ff13"/><rect x="221" y="42" fill="#00ff11"/><rect x="222" y="42" fill="#00ff0f"/><rect x="223" y="42" fill="#00ff0e"/><rect x="224" y="42" fill="#00ff0c"/><rect x="225" y="42" fill="#00ff0a"/><rect x="226" y="42" fill="#00ff09"/><rect x="227" y="42" fill="#00ff07"/><rect x="228" y="42" fill="#00ff05"/><rect x="229" y="42" fill="#00ff03"/><rect x="230" y="42" fill="#00ff01"/><rect x="231" y="42" style="width:8.06px" fill="#00ff00"/><rect x="239" y="42" fill="#07ff00"/><rect x="240" y="42" fill="#0fff00"/><rect x="241" y="42" fill="#17ff00"/><rect x="242" y="42" fill="#1eff00"/><rect x="243" y="42" fill="#26ff00"/><rect x="244" y="42" fill="#2eff00"/><rect x="245" y="42" fill="#36ff00"/><rect x="246" y="42" fill="#3eff00"/><rect x="247" y="42" fill="#47ff00"/><rect x="248" y="42" fill="#4fff00"/><rect x="249" y="42" fill="#58ff00"/><rect x="192" y="43" fill="#00ff3b"/><rect x="193" y="43" fill="#00ff3a"/><rect x="194" y="43" fill="#00ff39"/><rect x="195" y="43" fill="#00ff38"/><rect x="196" y="43" fill="#00ff37"/><rect x="197" y="43" fill="#00ff35"/><rect x="198" y="43" fill="#00ff34"/><rect x="199" y="43" fill="#00ff33"/><rect x="200" y="43" fill="#00ff32"/><rect x="201" y="43" fill="#00ff31"/><rect x="202" y="43" fill="#00ff2f"/><rect x="203" y="43" fill="#00ff2e"/><rect x="204" y="43" fill="#00ff2d"/><rect x="205" y="43" fill="#00ff2b"/><rect x="206" y="43" fill="#00ff2a"/><rect x="207" y="43" fill="#00ff29"/><rect x="208" y="43" fill="#00ff27"/><rect x="209" y="43" fill="#00ff26"/><rect x="210" y="43" fill="#00ff25"/><rect x="211" y="43" fill="#00ff23"/><rect x="212" y="43" fill="#00ff22"/><rect x="213" y="43" fill="#00ff20"/><rect x="214" y="43" fill="#00ff1f"/><rect x="215" y="43" fill="#00ff1d"/><rect x="216" y="43" fill="#00ff1c"/><rect x="217" y="43" fill="#00ff1a"/><rect x="218" y="43" fill="#00ff19"/><rect x="219" y="43" fill="#00ff17"/><rect x="220" y="43" fill="#00ff16"/><rect x="221" y="43" fill="#00ff14"/><rect x="222" y="43" fill="#00ff12"/><rect x="223" y="43" fill="#00ff11"/><rect x="224" y="43" fill="#00ff0f"/><rect x="225" y="43" fill="#00ff0d"/><rect x="226" y="43" fill="#00ff0c"/><rect x="227" y="43" fill="#00ff0a"/><rect x="228" y="43" fill="#00ff08"/><rect x="229" y="43" fill="#00ff06"/><rect x="230" y="43" fill="#00ff05"/><rect x="231" y="43" fill="#00ff03"/><rect x="232" y="43" fill="#00ff01"/><rect x="233" y="43" style="width:5.06px" fill="#00ff00"/><rect x="238" y="43" fill="#03ff00"/><rect x="239" y="43" fill="#0aff00"/><rect x="240" y="43" fill="#12ff00"/><rect x="241" y="43" fill="#1aff00"/><rect x="242" y="43" fill="#22ff00"/><rect x="243" y="43" fill="#2aff00"/><rect x="244" y="43" fill="#32ff00"/><rect x="245" y="43" fill="#3aff00"/><rect x="246" y="43" fill="#43ff00"/><rect x="247" y="43" fill="#4bff00"/><rect x="248" y="43" fill="#54ff00"/><rect x="249" y="43" fill="#5dff00"/><rect x="250" y="43" fill="#66ff00"/><rect x="251" y="43" fill="#6fff00"/><rect x="192" y="44" fill="#00ff3f"/><rect x="193" y="44" fill="#00ff3d"/><rect x="194" y="44" fill="#00ff3c"/><rect x="195" y="44" fill="#00ff3b"/><rect x="196" y="44" fill="#00ff3a"/><rect x="197" y="44" fill="#00ff39"/><rect x="198" y="44" fill="#00ff38"/><rect x="199" y="44" fill="#00ff36"/><rect x="200" y="44" fill="#00ff35"/><rect x="201" y="44" fill="#00ff34"/><rect x="202" y="44" fill="#00ff33"/><rect x="203" y="44" fill="#00ff31"/><rect x="204" y="44" fill="#00ff30"/><rect x="205" y="44" fill="#00ff2f"/><rect x="206" y="44" fill="#00ff2d"/><rect x="207" y="44" fill="#00ff2c"/><rect x="208" y="44" fill="#00ff2b"/><rect x="209" y="44" fill="#00ff29"/><rect x="210" y="44" fill="#00ff28"/><rect x="211" y="44" fill="#00ff27"/><rect x="212" y="44" fill="#00ff25"/><rect x="213" y="44" fill="#00ff24"/><rect x="214" y="44" fill="#00ff22"/><rect x="215" y="44" fill="#00ff21"/><rect x="216" y="44" fill="#00ff1f"/><rect x="217" y="44" fill="#00ff1e"/><rect x="218" y="44" fill="#00ff1c"/><rect x="219" y="44" fill="#00ff1b"/><rect x="220" y="44" fill="#00ff19"/><rect x="221" y="44" fill="#00ff17"/><rect x="222" y="44" fill="#00ff16"/><rect x="223" y="44" fill="#00ff14"/><rect x="224" y="44" fill="#00ff12"/><rect x="225" y="44" fill="#00ff11"/><rect x="226" y="44" fill="#00ff0f"/><rect x="227" y="44" fill="#00ff0d"/><rect x="228" y="44" fill="#00ff0b"/><rect x="229" y="44" fill="#00ff0a"/><rect x="230" y="44" fill="#00ff08"/><rect x="231" y="44" fill="#00ff06"/><rect x="232" y="44" fill="#00ff04"/><rect x="233" y="44" fill="#00ff02"/><rect x="234" y="44" style="width:4.06px" fill="#00ff00"/><rect x="238" y="44" fill="#06ff00"/><rect x="239" y="44" fill="#0dff00"/><rect x="240" y="44" fill="#15ff00"/><rect x="241" y="44" fill="#1dff00"/><rect x="242" y="44" fill="#25ff00"/><rect x="243" y="44" fill="#2dff00"/><rect x="244" y="44" fill="#36ff00"/><rect x="245" y="44" fill="#3eff00"/><rect x="246" y="44" fill="#47ff00"/><rect x="247" y="44" fill="#50ff00"/><rect x="248" y="44" fill="#59ff00"/><rect x="249" y="44" fill="#62ff00"/><rect x="250" y="44" fill="#6bff00"/><rect x="251" y="44" fill="#75ff00"/><rect x="252" y="44" fill="#7eff00"/><rect x="193" y="45" fill="#00ff41"/><rect x="194" y="45" fill="#00ff40"/><rect x="195" y="45" fill="#00ff3f"/><rect x="196" y="45" fill="#00ff3d"/><rect x="197" y="45" fill="#00ff3c"/><rect x="198" y="45" fill="#00ff3b"/><rect x="199" y="45" fill="#00ff3a"/><rect x="200" y="45" fill="#00ff39"/><rect x="201" y="45" fill="#00ff37"/><rect x="202" y="45" fill="#00ff36"/><rect x="203" y="45" fill="#00ff35"/><rect x="204" y="45" fill="#00ff34"/><rect x="205" y="45" fill="#00ff32"/><rect x="206" y="45" fill="#00ff31"/><rect x="207" y="45" fill="#00ff30"/><rect x="208" y="45" fill="#00ff2e"/><rect x="209" y="45" fill="#00ff2d"/><rect x="210" y="45" fill="#00ff2b"/><rect x="211" y="45" fill="#00ff2a"/><rect x="212" y="45" fill="#00ff29"/><rect x="213" y="45" fill="#00ff27"/><rect x="214" y="45" fill="#00ff26"/><rect x="215" y="45" fill="#00ff24"/><rect x="216" y="45" fill="#00ff23"/><rect x="217" y="45" fill="#00ff21"/><rect x="218" y="45" fill="#00ff20"/><rect x="219" y="45" fill="#00ff1e"/><rect x="220" y="45" fill="#00ff1c"/><rect x="221" y="45" fill="#00ff1b"/><rect x="222" y="45" fill="#00ff19"/><rect x="223" y="45" fill="#00ff18"/><rect x="224" y="45" fill="#00ff16"/><rect x="225" y="45" fill="#00ff14"/><rect x="226" y="45" fill="#00ff12"/><rect x="227" y="45" fill="#00ff11"/><rect x="228" y="45" fill="#00ff0f"/><rect x="229" y="45" fill="#00ff0d"/><rect x="230" y="45" fill="#00ff0b"/><rect x="231" y="45" fill="#00ff09"/><rect x="232" y="45" fill="#00ff07"/><rect x="233" y="45" fill="#00ff05"/><rect x="234" y="45" fill="#00ff03"/><rect x="235" y="45" fill="#00ff01"/><rect x="236" y="45" fill="#00ff00"/><rect x="237" y="45" fill="#01ff00"/><rect x="238" y="45" fill="#09ff00"/><rect x="239" y="45" fill="#10ff00"/><rect x="240" y="45" fill="#18ff00"/><rect x="241" y="45" fill="#21ff00"/><rect x="242" y="45" fill="#29ff00"/><rect x="243" y="45" fill="#31ff00"/><rect x="244" y="45" fill="#3aff00"/><rect x="245" y="45" fill="#43ff00"/><rect x="246" y="45" fill="#4cff00"/><rect x="247" y="45" fill="#55ff00"/><rect x="248" y="45" fill="#5eff00"/><rect x="249" y="45" fill="#67ff00"/><rect x="250" y="45" fill="#71ff00"/><rect x="251" y="45" fill="#7aff00"/><rect x="252" y="45" fill="#84ff00"/><rect x="253" y="45" fill="#8eff00"/><rect x="193" y="46" fill="#00ff44"/><rect x="194" y="46" fill="#00ff43"/><rect x="195" y="46" fill="#00ff42"/><rect x="196" y="46" fill="#00ff41"/><rect x="197" y="46" fill="#00ff40"/><rect x="198" y="46" fill="#00ff3e"/><rect x="199" y="46" fill="#00ff3d"/><rect x="200" y="46" fill="#00ff3c"/><rect x="201" y="46" fill="#00ff3b"/><rect x="202" y="46" fill="#00ff3a"/><rect x="203" y="46" fill="#00ff38"/><rect x="204" y="46" fill="#00ff37"/><rect x="205" y="46" fill="#00ff36"/><rect x="206" y="46" fill="#00ff34"/><rect x="207" y="46" fill="#00ff33"/><rect x="208" y="46" fill="#00ff32"/><rect x="209" y="46" fill="#00ff30"/><rect x="210" y="46" fill="#00ff2f"/><rect x="211" y="46" fill="#00ff2e"/><rect x="212" y="46" fill="#00ff2c"/><rect x="213" y="46" fill="#00ff2b"/><rect x="214" y="46" fill="#00ff29"/><rect x="215" y="46" fill="#00ff28"/><rect x="216" y="46" fill="#00ff26"/><rect x="217" y="46" fill="#00ff25"/><rect x="218" y="46" fill="#00ff23"/><rect x="219" y="46" fill="#00ff22"/><rect x="220" y="46" fill="#00ff20"/><rect x="221" y="46" fill="#00ff1e"/><rect x="222" y="46" fill="#00ff1d"/><rect x="223" y="46" fill="#00ff1b"/><rect x="224" y="46" fill="#00ff19"/><rect x="225" y="46" fill="#00ff18"/><rect x="226" y="46" fill="#00ff16"/><rect x="227" y="46" fill="#00ff14"/><rect x="228" y="46" fill="#00ff12"/><rect x="229" y="46" fill="#00ff11"/><rect x="230" y="46" fill="#00ff0f"/><rect x="231" y="46" fill="#00ff0d"/><rect x="232" y="46" fill="#00ff0b"/><rect x="233" y="46" fill="#00ff09"/><rect x="234" y="46" fill="#00ff07"/><rect x="235" y="46" fill="#00ff05"/><rect x="236" y="46" fill="#00ff03"/><rect x="237" y="46" fill="#04ff01"/><rect x="238" y="46" fill="#0cff00"/><rect x="239" y="46" fill="#14ff00"/><rect x="240" y="46" fill="#1cff00"/><rect x="241" y="46" fill="#24ff00"/><rect x="242" y="46" fill="#2dff00"/><rect x="243" y="46" fill="#35ff00"/><rect x="244" y="46" fill="#3eff00"/><rect x="245" y="46" fill="#47ff00"/><rect x="246" y="46" fill="#50ff00"/><rect x="247" y="46" fill="#5aff00"/><rect x="248" y="46" fill="#63ff00"/><rect x="249" y="46" fill="#6dff00"/><rect x="250" y="46" fill="#76ff00"/><rect x="251" y="46" fill="#80ff00"/><rect x="252" y="46" fill="#8bff00"/><rect x="253" y="46" fill="#95ff00"/><rect x="254" y="46" fill="#a0ff00"/><rect x="255" y="46" fill="#aaff00"/><rect x="193" y="47" fill="#00ff48"/><rect x="194" y="47" fill="#00ff47"/><rect x="195" y="47" fill="#00ff46"/><rect x="196" y="47" fill="#00ff44"/><rect x="197" y="47" fill="#00ff43"/><rect x="198" y="47" fill="#00ff42"/><rect x="199" y="47" fill="#00ff41"/><rect x="200" y="47" fill="#00ff40"/><rect x="201" y="47" fill="#00ff3e"/><rect x="202" y="47" fill="#00ff3d"/><rect x="203" y="47" fill="#00ff3c"/><rect x="204" y="47" fill="#00ff3b"/><rect x="205" y="47" fill="#00ff39"/><rect x="206" y="47" fill="#00ff38"/><rect x="207" y="47" fill="#00ff37"/><rect x="208" y="47" fill="#00ff35"/><rect x="209" y="47" fill="#00ff34"/><rect x="210" y="47" fill="#00ff33"/><rect x="211" y="47" fill="#00ff31"/><rect x="212" y="47" fill="#00ff30"/><rect x="213" y="47" fill="#00ff2e"/><rect x="214" y="47" fill="#00ff2d"/><rect x="215" y="47" fill="#00ff2b"/><rect x="216" y="47" fill="#00ff2a"/><rect x="217" y="47" fill="#00ff28"/><rect x="218" y="47" fill="#00ff27"/><rect x="219" y="47" fill="#00ff25"/><rect x="220" y="47" fill="#00ff24"/><rect x="221" y="47" fill="#00ff22"/><rect x="222" y="47" fill="#00ff20"/><rect x="223" y="47" fill="#00ff1f"/><rect x="224" y="47" fill="#00ff1d"/><rect x="225" y="47" fill="#00ff1b"/><rect x="226" y="47" fill="#00ff1a"/><rect x="227" y="47" fill="#00ff18"/><rect x="228" y="47" fill="#00ff16"/><rect x="229" y="47" fill="#00ff14"/><rect x="230" y="47" fill="#00ff12"/><rect x="231" y="47" fill="#00ff10"/><rect x="232" y="47" fill="#00ff0e"/><rect x="233" y="47" fill="#00ff0d"/><rect x="234" y="47" fill="#00ff0b"/><rect x="235" y="47" fill="#00ff09"/><rect x="236" y="47" fill="#00ff06"/><rect x="237" y="47" fill="#07ff04"/><rect x="238" y="47" fill="#0fff02"/><rect x="239" y="47" fill="#17ff00"/><rect x="240" y="47" fill="#1fff00"/><rect x="241" y="47" fill="#28ff00"/><rect x="242" y="47" fill="#31ff00"/><rect x="243" y="47" fill="#3aff00"/><rect x="244" y="47" fill="#43ff00"/><rect x="245" y="47" fill="#4cff00"/><rect x="246" y="47" fill="#55ff00"/><rect x="247" y="47" fill="#5fff00"/><rect x="248" y="47" fill="#68ff00"/><rect x="249" y="47" fill="#72ff00"/><rect x="250" y="47" fill="#7cff00"/><rect x="251" y="47" fill="#87ff00"/><rect x="252" y="47" fill="#91ff00"/><rect x="253" y="47" fill="#9cff00"/><rect x="254" y="47" fill="#a7ff00"/><rect x="255" y="47" fill="#b2ff00"/><rect x="256" y="47" fill="#bdff00"/><rect x="193" y="48" fill="#00ff4c"/><rect x="194" y="48" fill="#00ff4a"/><rect x="195" y="48" fill="#00ff49"/><rect x="196" y="48" fill="#00ff48"/><rect x="197" y="48" fill="#00ff47"/><rect x="198" y="48" fill="#00ff46"/><rect x="199" y="48" fill="#00ff45"/><rect x="200" y="48" fill="#00ff43"/><rect x="201" y="48" fill="#00ff42"/><rect x="202" y="48" fill="#00ff41"/><rect x="203" y="48" fill="#00ff40"/><rect x="204" y="48" fill="#00ff3e"/><rect x="205" y="48" fill="#00ff3d"/><rect x="206" y="48" fill="#00ff3c"/><rect x="207" y="48" fill="#00ff3b"/><rect x="208" y="48" fill="#00ff39"/><rect x="209" y="48" fill="#00ff38"/><rect x="210" y="48" fill="#00ff36"/><rect x="211" y="48" fill="#00ff35"/><rect x="212" y="48" fill="#00ff34"/><rect x="213" y="48" fill="#00ff32"/><rect x="214" y="48" fill="#00ff31"/><rect x="215" y="48" fill="#00ff2f"/><rect x="216" y="48" fill="#00ff2e"/><rect x="217" y="48" fill="#00ff2c"/><rect x="218" y="48" fill="#00ff2b"/><rect x="219" y="48" fill="#00ff29"/><rect x="220" y="48" fill="#00ff27"/><rect x="221" y="48" fill="#00ff26"/><rect x="222" y="48" fill="#00ff24"/><rect x="223" y="48" fill="#00ff23"/><rect x="224" y="48" fill="#00ff21"/><rect x="225" y="48" fill="#00ff1f"/><rect x="226" y="48" fill="#00ff1d"/><rect x="227" y="48" fill="#00ff1c"/><rect x="228" y="48" fill="#00ff1a"/><rect x="229" y="48" fill="#00ff18"/><rect x="230" y="48" fill="#00ff16"/><rect x="231" y="48" fill="#00ff14"/><rect x="232" y="48" fill="#00ff12"/><rect x="233" y="48" fill="#00ff10"/><rect x="234" y="48" fill="#00ff0e"/><rect x="235" y="48" fill="#00ff0c"/><rect x="236" y="48" fill="#02ff0a"/><rect x="237" y="48" fill="#0aff08"/><rect x="238" y="48" fill="#12ff06"/><rect x="239" y="48" fill="#1bff04"/><rect x="240" y="48" fill="#23ff02"/><rect x="241" y="48" fill="#2cff00"/><rect x="242" y="48" fill="#35ff00"/><rect x="243" y="48" fill="#3eff00"/><rect x="244" y="48" fill="#47ff00"/><rect x="245" y="48" fill="#51ff00"/><rect x="246" y="48" fill="#5aff00"/><rect x="247" y="48" fill="#64ff00"/><rect x="248" y="48" fill="#6eff00"/><rect x="249" y="48" fill="#78ff00"/><rect x="250" y="48" fill="#83ff00"/><rect x="251" y="48" fill="#8dff00"/><rect x="252" y="48" fill="#98ff00"/><rect x="253" y="48" fill="#a3ff00"/><rect x="254" y="48" fill="#aeff00"/><rect x="255" y="48" fill="#baff00"/><rect x="256" y="48" fill="#c5ff00"/><rect x="257" y="48" fill="#d1ff00"/><rect x="193" y="49" fill="#00ff4f"/><rect x="194" y="49" fill="#00ff4e"/><rect x="195" y="49" fill="#00ff4d"/><rect x="196" y="49" fill="#00ff4c"/><rect x="197" y="49" fill="#00ff4b"/><rect x="198" y="49" fill="#00ff4a"/><rect x="199" y="49" fill="#00ff49"/><rect x="200" y="49" fill="#00ff47"/><rect x="201" y="49" fill="#00ff46"/><rect x="202" y="49" fill="#00ff45"/><rect x="203" y="49" fill="#00ff44"/><rect x="204" y="49" fill="#00ff42"/><rect x="205" y="49" fill="#00ff41"/><rect x="206" y="49" fill="#00ff40"/><rect x="207" y="49" fill="#00ff3e"/><rect x="208" y="49" fill="#00ff3d"/><rect x="209" y="49" fill="#00ff3c"/><rect x="210" y="49" fill="#00ff3a"/><rect x="211" y="49" fill="#00ff39"/><rect x="212" y="49" fill="#00ff38"/><rect x="213" y="49" fill="#00ff36"/><rect x="214" y="49" fill="#00ff35"/><rect x="215" y="49" fill="#00ff33"/><rect x="216" y="49" fill="#00ff32"/><rect x="217" y="49" fill="#00ff30"/><rect x="218" y="49" fill="#00ff2f"/><rect x="219" y="49" fill="#00ff2d"/><rect x="220" y="49" fill="#00ff2b"/><rect x="221" y="49" fill="#00ff2a"/><rect x="222" y="49" fill="#00ff28"/><rect x="223" y="49" fill="#00ff27"/><rect x="224" y="49" fill="#00ff25"/><rect x="225" y="49" fill="#00ff23"/><rect x="226" y="49" fill="#00ff21"/><rect x="227" y="49" fill="#00ff20"/><rect x="228" y="49" fill="#00ff1e"/><rect x="229" y="49" fill="#00ff1c"/><rect x="230" y="49" fill="#00ff1a"/><rect x="231" y="49" fill="#00ff18"/><rect x="232" y="49" fill="#00ff16"/><rect x="233" y="49" fill="#00ff14"/><rect x="234" y="49" fill="#00ff12"/><rect x="235" y="49" fill="#00ff10"/><rect x="236" y="49" fill="#05ff0e"/><rect x="237" y="49" fill="#0dff0c"/><rect x="238" y="49" fill="#16ff0a"/><rect x="239" y="49" fill="#1eff08"/><rect x="240" y="49" fill="#27ff05"/><rect x="241" y="49" fill="#30ff03"/><rect x="242" y="49" fill="#39ff01"/><rect x="243" y="49" fill="#43ff00"/><rect x="244" y="49" fill="#4cff00"/><rect x="245" y="49" fill="#56ff00"/><rect x="246" y="49" fill="#60ff00"/><rect x="247" y="49" fill="#6aff00"/><rect x="248" y="49" fill="#74ff00"/><rect x="249" y="49" fill="#7fff00"/><rect x="250" y="49" fill="#89ff00"/><rect x="251" y="49" fill="#94ff00"/><rect x="252" y="49" fill="#9fff00"/><rect x="253" y="49" fill="#abff00"/><rect x="254" y="49" fill="#b6ff00"/><rect x="255" y="49" fill="#c2ff00"/><rect x="256" y="49" fill="#ceff00"/><rect x="257" y="49" fill="#daff00"/><rect x="258" y="49" fill="#e7ff00"/><rect x="259" y="49" fill="#f4ff00"/><rect x="193" y="50" fill="#00ff53"/><rect x="194" y="50" fill="#00ff52"/><rect x="195" y="50" fill="#00ff51"/><rect x="196" y="50" fill="#00ff50"/><rect x="197" y="50" fill="#00ff4f"/><rect x="198" y="50" fill="#00ff4e"/><rect x="199" y="50" fill="#00ff4d"/><rect x="200" y="50" fill="#00ff4b"/><rect x="201" y="50" fill="#00ff4a"/><rect x="202" y="50" fill="#00ff49"/><rect x="203" y="50" fill="#00ff48"/><rect x="204" y="50" fill="#00ff46"/><rect x="205" y="50" fill="#00ff45"/><rect x="206" y="50" fill="#00ff44"/><rect x="207" y="50" fill="#00ff42"/><rect x="208" y="50" fill="#00ff41"/><rect x="209" y="50" fill="#00ff40"/><rect x="210" y="50" fill="#00ff3e"/><rect x="211" y="50" fill="#00ff3d"/><rect x="212" y="50" fill="#00ff3c"/><rect x="213" y="50" fill="#00ff3a"/><rect x="214" y="50" fill="#00ff39"/><rect x="215" y="50" fill="#00ff37"/><rect x="216" y="50" fill="#00ff36"/><rect x="217" y="50" fill="#00ff34"/><rect x="218" y="50" fill="#00ff33"/><rect x="219" y="50" fill="#00ff31"/><rect x="220" y="50" fill="#00ff30"/><rect x="221" y="50" fill="#00ff2e"/><rect x="222" y="50" fill="#00ff2c"/><rect x="223" y="50" fill="#00ff2b"/><rect x="224" y="50" fill="#00ff29"/><rect x="225" y="50" fill="#00ff27"/><rect x="226" y="50" fill="#00ff25"/><rect x="227" y="50" fill="#00ff24"/><rect x="228" y="50" fill="#00ff22"/><rect x="229" y="50" fill="#00ff20"/><rect x="230" y="50" fill="#00ff1e"/><rect x="231" y="50" fill="#00ff1c"/><rect x="232" y="50" fill="#00ff1a"/><rect x="233" y="50" fill="#00ff18"/><rect x="234" y="50" fill="#00ff16"/><rect x="235" y="50" fill="#00ff14"/><rect x="236" y="50" fill="#08ff12"/><rect x="237" y="50" fill="#10ff10"/><rect x="238" y="50" fill="#19ff0e"/><rect x="239" y="50" fill="#22ff0c"/><rect x="240" y="50" fill="#2bff09"/><rect x="241" y="50" fill="#34ff07"/><rect x="242" y="50" fill="#3eff05"/><rect x="243" y="50" fill="#47ff02"/><rect x="244" y="50" fill="#51ff00"/><rect x="245" y="50" fill="#5bff00"/><rect x="246" y="50" fill="#65ff00"/><rect x="247" y="50" fill="#70ff00"/><rect x="248" y="50" fill="#7aff00"/><rect x="249" y="50" fill="#85ff00"/><rect x="250" y="50" fill="#90ff00"/><rect x="251" y="50" fill="#9bff00"/><rect x="252" y="50" fill="#a7ff00"/><rect x="253" y="50" fill="#b3ff00"/><rect x="254" y="50" fill="#bfff00"/><rect x="255" y="50" fill="#cbff00"/><rect x="256" y="50" fill="#d7ff00"/><rect x="257" y="50" fill="#e4ff00"/><rect x="258" y="50" fill="#f1ff00"/><rect x="259" y="50" fill="#feff00"/><rect x="260" y="50" fill="#fff300"/><rect x="193" y="51" fill="#00ff57"/><rect x="194" y="51" fill="#00ff56"/><rect x="195" y="51" fill="#00ff55"/><rect x="196" y="51" fill="#00ff54"/><rect x="197" y="51" fill="#00ff53"/><rect x="198" y="51" fill="#00ff52"/><rect x="199" y="51" fill="#00ff51"/><rect x="200" y="51" fill="#00ff4f"/><rect x="201" y="51" fill="#00ff4e"/><rect x="202" y="51" fill="#00ff4d"/><rect x="203" y="51" fill="#00ff4c"/><rect x="204" y="51" fill="#00ff4b"/><rect x="205" y="51" fill="#00ff49"/><rect x="206" y="51" fill="#00ff48"/><rect x="207" y="51" fill="#00ff47"/><rect x="208" y="51" fill="#00ff45"/><rect x="209" y="51" fill="#00ff44"/><rect x="210" y="51" fill="#00ff43"/><rect x="211" y="51" fill="#00ff41"/><rect x="212" y="51" fill="#00ff40"/><rect x="213" y="51" fill="#00ff3e"/><rect x="214" y="51" fill="#00ff3d"/><rect x="215" y="51" fill="#00ff3b"/><rect x="216" y="51" fill="#00ff3a"/><rect x="217" y="51" fill="#00ff38"/><rect x="218" y="51" fill="#00ff37"/><rect x="219" y="51" fill="#00ff35"/><rect x="220" y="51" fill="#00ff34"/><rect x="221" y="51" fill="#00ff32"/><rect x="222" y="51" fill="#00ff31"/><rect x="223" y="51" fill="#00ff2f"/><rect x="224" y="51" fill="#00ff2d"/><rect x="225" y="51" fill="#00ff2b"/><rect x="226" y="51" fill="#00ff2a"/><rect x="227" y="51" fill="#00ff28"/><rect x="228" y="51" fill="#00ff26"/><rect x="229" y="51" fill="#00ff24"/><rect x="230" y="51" fill="#00ff22"/><rect x="231" y="51" fill="#00ff20"/><rect x="232" y="51" fill="#00ff1f"/><rect x="233" y="51" fill="#00ff1d"/><rect x="234" y="51" fill="#00ff1b"/><rect x="235" y="51" fill="#03ff18"/><rect x="236" y="51" fill="#0bff16"/><rect x="237" y="51" fill="#14ff14"/><rect x="238" y="51" fill="#1dff12"/><rect x="239" y="51" fill="#26ff10"/><rect x="240" y="51" fill="#2fff0e"/><rect x="241" y="51" fill="#39ff0b"/><rect x="242" y="51" fill="#43ff09"/><rect x="243" y="51" fill="#4cff07"/><rect x="244" y="51" fill="#57ff04"/><rect x="245" y="51" fill="#61ff02"/><rect x="246" y="51" fill="#6bff00"/><rect x="247" y="51" fill="#76ff00"/><rect x="248" y="51" fill="#81ff00"/><rect x="249" y="51" fill="#8cff00"/><rect x="250" y="51" fill="#97ff00"/><rect x="251" y="51" fill="#a3ff00"/><rect x="252" y="51" fill="#afff00"/><rect x="253" y="51" fill="#bbff00"/><rect x="254" y="51" fill="#c7ff00"/><rect x="255" y="51" fill="#d4ff00"/><rect x="256" y="51" fill="#e1ff00"/><rect x="257" y="51" fill="#eeff00"/><rect x="258" y="51" fill="#fcff00"/><rect x="259" y="51" fill="#fff500"/><rect x="260" y="51" fill="#ffe900"/><rect x="261" y="51" fill="#ffdd00"/><rect x="193" y="52" fill="#00ff5c"/><rect x="194" y="52" fill="#00ff5a"/><rect x="195" y="52" fill="#00ff59"/><rect x="196" y="52" fill="#00ff58"/><rect x="197" y="52" fill="#00ff57"/><rect x="198" y="52" fill="#00ff56"/><rect x="199" y="52" fill="#00ff55"/><rect x="200" y="52" fill="#00ff54"/><rect x="201" y="52" fill="#00ff53"/><rect x="202" y="52" fill="#00ff51"/><rect x="203" y="52" fill="#00ff50"/><rect x="204" y="52" fill="#00ff4f"/><rect x="205" y="52" fill="#00ff4e"/><rect x="206" y="52" fill="#00ff4c"/><rect x="207" y="52" fill="#00ff4b"/><rect x="208" y="52" fill="#00ff4a"/><rect x="209" y="52" fill="#00ff48"/><rect x="210" y="52" fill="#00ff47"/><rect x="211" y="52" fill="#00ff46"/><rect x="212" y="52" fill="#00ff44"/><rect x="213" y="52" fill="#00ff43"/><rect x="214" y="52" fill="#00ff41"/><rect x="215" y="52" fill="#00ff40"/><rect x="216" y="52" fill="#00ff3e"/><rect x="217" y="52" fill="#00ff3d"/><rect x="218" y="52" fill="#00ff3b"/><rect x="219" y="52" fill="#00ff3a"/><rect x="220" y="52" fill="#00ff38"/><rect x="221" y="52" fill="#00ff37"/><rect x="222" y="52" fill="#00ff35"/><rect x="223" y="52" fill="#00ff33"/><rect x="224" y="52" fill="#00ff32"/><rect x="225" y="52" fill="#00ff30"/><rect x="226" y="52" fill="#00ff2e"/><rect x="227" y="52" fill="#00ff2c"/><rect x="228" y="52" fill="#00ff2b"/><rect x="229" y="52" fill="#00ff29"/><rect x="230" y="52" fill="#00ff27"/><rect x="231" y="52" fill="#00ff25"/><rect x="232" y="52" fill="#00ff23"/><rect x="233" y="52" fill="#00ff21"/><rect x="234" y="52" fill="#00ff1f"/><rect x="235" y="52" fill="#06ff1d"/><rect x="236" y="52" fill="#0fff1b"/><rect x="237" y="52" fill="#18ff19"/><rect x="238" y="52" fill="#21ff16"/><rect x="239" y="52" fill="#2aff14"/><rect x="240" y="52" fill="#34ff12"/><rect x="241" y="52" fill="#3eff10"/><rect x="242" y="52" fill="#48ff0d"/><rect x="243" y="52" fill="#52ff0b"/><rect x="244" y="52" fill="#5cff09"/><rect x="245" y="52" fill="#67ff06"/><rect x="246" y="52" fill="#71ff03"/><rect x="247" y="52" fill="#7dff01"/><rect x="248" y="52" fill="#88ff00"/><rect x="249" y="52" fill="#93ff00"/><rect x="250" y="52" fill="#9fff00"/><rect x="251" y="52" fill="#abff00"/><rect x="252" y="52" fill="#b7ff00"/><rect x="253" y="52" fill="#c4ff00"/><rect x="254" y="52" fill="#d1ff00"/><rect x="255" y="52" fill="#deff00"/><rect x="256" y="52" fill="#ebff00"/><rect x="257" y="52" fill="#f9ff00"/><rect x="258" y="52" fill="#fff700"/><rect x="259" y="52" fill="#ffeb00"/><rect x="260" y="52" fill="#ffdf00"/><rect x="261" y="52" fill="#ffd400"/><rect x="262" y="52" fill="#ffca00"/><rect x="263" y="52" fill="#ffc000"/><rect x="193" y="53" fill="#00ff60"/><rect x="194" y="53" fill="#00ff5f"/><rect x="195" y="53" fill="#00ff5e"/><rect x="196" y="53" fill="#00ff5d"/><rect x="197" y="53" fill="#00ff5c"/><rect x="198" y="53" fill="#00ff5a"/><rect x="199" y="53" fill="#00ff59"/><rect x="200" y="53" fill="#00ff58"/><rect x="201" y="53" fill="#00ff57"/><rect x="202" y="53" fill="#00ff56"/><rect x="203" y="53" fill="#00ff55"/><rect x="204" y="53" fill="#00ff53"/><rect x="205" y="53" fill="#00ff52"/><rect x="206" y="53" fill="#00ff51"/><rect x="207" y="53" fill="#00ff4f"/><rect x="208" y="53" fill="#00ff4e"/><rect x="209" y="53" fill="#00ff4d"/><rect x="210" y="53" fill="#00ff4b"/><rect x="211" y="53" fill="#00ff4a"/><rect x="212" y="53" fill="#00ff49"/><rect x="213" y="53" fill="#00ff47"/><rect x="214" y="53" fill="#00ff46"/><rect x="215" y="53" fill="#00ff44"/><rect x="216" y="53" fill="#00ff43"/><rect x="217" y="53" fill="#00ff41"/><rect x="218" y="53" fill="#00ff40"/><rect x="219" y="53" fill="#00ff3e"/><rect x="220" y="53" fill="#00ff3d"/><rect x="221" y="53" fill="#00ff3b"/><rect x="222" y="53" fill="#00ff3a"/><rect x="223" y="53" fill="#00ff38"/><rect x="224" y="53" fill="#00ff36"/><rect x="225" y="53" fill="#00ff34"/><rect x="226" y="53" fill="#00ff33"/><rect x="227" y="53" fill="#00ff31"/><rect x="228" y="53" fill="#00ff2f"/><rect x="229" y="53" fill="#00ff2d"/><rect x="230" y="53" fill="#00ff2b"/><rect x="231" y="53" fill="#00ff2a"/><rect x="232" y="53" fill="#00ff28"/><rect x="233" y="53" fill="#00ff26"/><rect x="234" y="53" fill="#00ff24"/><rect x="235" y="53" fill="#09ff22"/><rect x="236" y="53" fill="#12ff1f"/><rect x="237" y="53" fill="#1cff1d"/><rect x="238" y="53" fill="#25ff1b"/><rect x="239" y="53" fill="#2fff19"/><rect x="240" y="53" fill="#39ff17"/><rect x="241" y="53" fill="#43ff14"/><rect x="242" y="53" fill="#4dff12"/><rect x="243" y="53" fill="#57ff10"/><rect x="244" y="53" fill="#62ff0d"/><rect x="245" y="53" fill="#6dff0b"/><rect x="246" y="53" fill="#78ff08"/><rect x="247" y="53" fill="#83ff05"/><rect x="248" y="53" fill="#8fff03"/><rect x="249" y="53" fill="#9bff00"/><rect x="250" y="53" fill="#a7ff00"/><rect x="251" y="53" fill="#b3ff00"/><rect x="252" y="53" fill="#c0ff00"/><rect x="253" y="53" fill="#cdff00"/><rect x="254" y="53" fill="#daff00"/><rect x="255" y="53" fill="#e8ff00"/><rect x="256" y="53" fill="#f6ff00"/><rect x="257" y="53" fill="#fffa00"/><rect x="258" y="53" fill="#ffed00"/><rect x="259" y="53" fill="#ffe100"/><rect x="260" y="53" fill="#ffd500"/><rect x="261" y="53" fill="#ffcb00"/><rect x="262" y="53" fill="#ffc100"/><rect x="263" y="53" fill="#ffb800"/><rect x="264" y="53" fill="#ffb000"/><rect x="193" y="54" fill="#00ff64"/><rect x="194" y="54" fill="#00ff63"/><rect x="195" y="54" fill="#00ff62"/><rect x="196" y="54" fill="#00ff61"/><rect x="197" y="54" fill="#00ff60"/><rect x="198" y="54" fill="#00ff5f"/><rect x="199" y="54" fill="#00ff5e"/><rect x="200" y="54" fill="#00ff5d"/><rect x="201" y="54" fill="#00ff5b"/><rect x="202" y="54" fill="#00ff5a"/><rect x="203" y="54" fill="#00ff59"/><rect x="204" y="54" fill="#00ff58"/><rect x="205" y="54" fill="#00ff57"/><rect x="206" y="54" fill="#00ff55"/><rect x="207" y="54" fill="#00ff54"/><rect x="208" y="54" fill="#00ff53"/><rect x="209" y="54" fill="#00ff52"/><rect x="210" y="54" fill="#00ff50"/><rect x="211" y="54" fill="#00ff4f"/><rect x="212" y="54" fill="#00ff4d"/><rect x="213" y="54" fill="#00ff4c"/><rect x="214" y="54" fill="#00ff4b"/><rect x="215" y="54" fill="#00ff49"/><rect x="216" y="54" fill="#00ff48"/><rect x="217" y="54" fill="#00ff46"/><rect x="218" y="54" fill="#00ff45"/><rect x="219" y="54" fill="#00ff43"/><rect x="220" y="54" fill="#00ff42"/><rect x="221" y="54" fill="#00ff40"/><rect x="222" y="54" fill="#00ff3e"/><rect x="223" y="54" fill="#00ff3d"/><rect x="224" y="54" fill="#00ff3b"/><rect x="225" y="54" fill="#00ff39"/><rect x="226" y="54" fill="#00ff38"/><rect x="227" y="54" fill="#00ff36"/><rect x="228" y="54" fill="#00ff34"/><rect x="229" y="54" fill="#00ff32"/><rect x="230" y="54" fill="#00ff30"/><rect x="231" y="54" fill="#00ff2e"/><rect x="232" y="54" fill="#00ff2c"/><rect x="233" y="54" fill="#00ff2a"/><rect x="234" y="54" fill="#04ff28"/><rect x="235" y="54" fill="#0dff26"/><rect x="236" y="54" fill="#16ff24"/><rect x="237" y="54" fill="#20ff22"/><rect x="238" y="54" fill="#29ff20"/><rect x="239" y="54" fill="#33ff1e"/><rect x="240" y="54" fill="#3dff1b"/><rect x="241" y="54" fill="#48ff19"/><rect x="242" y="54" fill="#52ff17"/><rect x="243" y="54" fill="#5dff14"/><rect x="244" y="54" fill="#68ff12"/><rect x="245" y="54" fill="#73ff0f"/><rect x="246" y="54" fill="#7fff0d"/><rect x="247" y="54" fill="#8bff0a"/><rect x="248" y="54" fill="#97ff07"/><rect x="249" y="54" fill="#a3ff05"/><rect x="250" y="54" fill="#afff02"/><rect x="251" y="54" fill="#bcff00"/><rect x="252" y="54" fill="#c9ff00"/><rect x="253" y="54" fill="#d7ff00"/><rect x="254" y="54" fill="#e5ff00"/><rect x="255" y="54" fill="#f3ff00"/><rect x="256" y="54" fill="#fffd00"/><rect x="257" y="54" fill="#ffef00"/><rect x="258" y="54" fill="#ffe200"/><rect x="259" y="54" fill="#ffd700"/><rect x="260" y="54" fill="#ffcc00"/><rect x="261" y="54" fill="#ffc200"/><rect x="262" y="54" fill="#ffb900"/><rect x="263" y="54" fill="#ffb000"/><rect x="264" y="54" fill="#ffa800"/><rect x="265" y="54" fill="#ffa100"/><rect x="193" y="55" fill="#00ff69"/><rect x="194" y="55" fill="#00ff68"/><rect x="195" y="55" fill="#00ff67"/><rect x="196" y="55" fill="#00ff66"/><rect x="197" y="55" fill="#00ff65"/><rect x="198" y="55" fill="#00ff64"/><rect x="199" y="55" fill="#00ff63"/><rect x="200" y="55" fill="#00ff61"/><rect x="201" y="55" fill="#00ff60"/><rect x="202" y="55" fill="#00ff5f"/><rect x="203" y="55" fill="#00ff5e"/><rect x="204" y="55" fill="#00ff5d"/><rect x="205" y="55" fill="#00ff5b"/><rect x="206" y="55" fill="#00ff5a"/><rect x="207" y="55" fill="#00ff59"/><rect x="208" y="55" fill="#00ff58"/><rect x="209" y="55" fill="#00ff56"/><rect x="210" y="55" fill="#00ff55"/><rect x="211" y="55" fill="#00ff54"/><rect x="212" y="55" fill="#00ff52"/><rect x="213" y="55" fill="#00ff51"/><rect x="214" y="55" fill="#00ff50"/><rect x="215" y="55" fill="#00ff4e"/><rect x="216" y="55" fill="#00ff4d"/><rect x="217" y="55" fill="#00ff4b"/><rect x="218" y="55" fill="#00ff4a"/><rect x="219" y="55" fill="#00ff48"/><rect x="220" y="55" fill="#00ff47"/><rect x="221" y="55" fill="#00ff45"/><rect x="222" y="55" fill="#00ff43"/><rect x="223" y="55" fill="#00ff42"/><rect x="224" y="55" fill="#00ff40"/><rect x="225" y="55" fill="#00ff3e"/><rect x="226" y="55" fill="#00ff3d"/><rect x="227" y="55" fill="#00ff3b"/><rect x="228" y="55" fill="#00ff39"/><rect x="229" y="55" fill="#00ff37"/><rect x="230" y="55" fill="#00ff35"/><rect x="231" y="55" fill="#00ff33"/><rect x="232" y="55" fill="#00ff31"/><rect x="233" y="55" fill="#00ff2f"/><rect x="234" y="55" fill="#07ff2d"/><rect x="235" y="55" fill="#10ff2b"/><rect x="236" y="55" fill="#1aff29"/><rect x="237" y="55" fill="#24ff27"/><rect x="238" y="55" fill="#2eff25"/><rect x="239" y="55" fill="#38ff23"/><rect x="240" y="55" fill="#43ff20"/><rect x="241" y="55" fill="#4dff1e"/><rect x="242" y="55" fill="#58ff1c"/><rect x="243" y="55" fill="#63ff19"/><rect x="244" y="55" fill="#6fff17"/><rect x="245" y="55" fill="#7aff14"/><rect x="246" y="55" fill="#86ff12"/><rect x="247" y="55" fill="#92ff0f"/><rect x="248" y="55" fill="#9fff0c"/><rect x="249" y="55" fill="#abff0a"/><rect x="250" y="55" fill="#b8ff07"/><rect x="251" y="55" fill="#c6ff04"/><rect x="252" y="55" fill="#d3ff01"/><rect x="253" y="55" fill="#e1ff00"/><rect x="254" y="55" fill="#f0ff00"/><rect x="255" y="55" fill="#feff00"/><rect x="256" y="55" fill="#fff200"/><rect x="257" y="55" fill="#ffe500"/><rect x="258" y="55" fill="#ffd800"/><rect x="259" y="55" fill="#ffcd00"/><rect x="260" y="55" fill="#ffc300"/><rect x="261" y="55" fill="#ffba00"/><rect x="262" y="55" fill="#ffb100"/><rect x="263" y="55" fill="#ffa900"/><rect x="264" y="55" fill="#ffa100"/><rect x="265" y="55" fill="#ff9a00"/><rect x="266" y="55" fill="#ff9300"/><rect x="267" y="55" fill="#ff8c00"/><rect x="193" y="56" fill="#00ff6e"/><rect x="194" y="56" fill="#00ff6d"/><rect x="195" y="56" fill="#00ff6c"/><rect x="196" y="56" fill="#00ff6b"/><rect x="197" y="56" fill="#00ff6a"/><rect x="198" y="56" fill="#00ff68"/><rect x="199" y="56" fill="#00ff67"/><rect x="200" y="56" fill="#00ff66"/><rect x="201" y="56" fill="#00ff65"/><rect x="202" y="56" fill="#00ff64"/><rect x="203" y="56" fill="#00ff63"/><rect x="204" y="56" fill="#00ff62"/><rect x="205" y="56" fill="#00ff60"/><rect x="206" y="56" fill="#00ff5f"/><rect x="207" y="56" fill="#00ff5e"/><rect x="208" y="56" fill="#00ff5d"/><rect x="209" y="56" fill="#00ff5b"/><rect x="210" y="56" fill="#00ff5a"/><rect x="211" y="56" fill="#00ff59"/><rect x="212" y="56" fill="#00ff57"/><rect x="213" y="56" fill="#00ff56"/><rect x="214" y="56" fill="#00ff55"/><rect x="215" y="56" fill="#00ff53"/><rect x="216" y="56" fill="#00ff52"/><rect x="217" y="56" fill="#00ff50"/><rect x="218" y="56" fill="#00ff4f"/><rect x="219" y="56" fill="#00ff4d"/><rect x="220" y="56" fill="#00ff4c"/><rect x="221" y="56" fill="#00ff4a"/><rect x="222" y="56" fill="#00ff49"/><rect x="223" y="56" fill="#00ff47"/><rect x="224" y="56" fill="#00ff45"/><rect x="225" y="56" fill="#00ff44"/><rect x="226" y="56" fill="#00ff42"/><rect x="227" y="56" fill="#00ff40"/><rect x="228" y="56" fill="#00ff3e"/><rect x="229" y="56" fill="#00ff3c"/><rect x="230" y="56" fill="#00ff3b"/><rect x="231" y="56" fill="#00ff39"/><rect x="232" y="56" fill="#00ff37"/><rect x="233" y="56" fill="#01ff35"/><rect x="234" y="56" fill="#0bff33"/><rect x="235" y="56" fill="#14ff31"/><rect x="236" y="56" fill="#1eff2f"/><rect x="237" y="56" fill="#28ff2d"/><rect x="238" y="56" fill="#33ff2a"/><rect x="239" y="56" fill="#3dff28"/><rect x="240" y="56" fill="#48ff26"/><rect x="241" y="56" fill="#53ff23"/><rect x="242" y="56" fill="#5eff21"/><rect x="243" y="56" fill="#6aff1f"/><rect x="244" y="56" fill="#75ff1c"/><rect x="245" y="56" fill="#81ff1a"/><rect x="246" y="56" fill="#8eff17"/><rect x="247" y="56" fill="#9aff14"/><rect x="248" y="56" fill="#a7ff12"/><rect x="249" y="56" fill="#b4ff0f"/><rect x="250" y="56" fill="#c2ff0c"/><rect x="251" y="56" fill="#d0ff09"/><rect x="252" y="56" fill="#deff06"/><rect x="253" y="56" fill="#ecff03"/><rect x="254" y="56" fill="#fbff00"/><rect x="255" y="56" fill="#fff400"/><rect x="256" y="56" fill="#ffe700"/><rect x="257" y="56" fill="#ffda00"/><rect x="258" y="56" fill="#ffcf00"/><rect x="259" y="56" fill="#ffc400"/><rect x="260" y="56" fill="#ffba00"/><rect x="261" y="56" fill="#ffb100"/><rect x="262" y="56" fill="#ffa900"/><rect x="263" y="56" fill="#ffa100"/><rect x="264" y="56" fill="#ff9a00"/><rect x="265" y="56" fill="#ff9300"/><rect x="266" y="56" fill="#ff8c00"/><rect x="267" y="56" fill="#ff8600"/><rect x="268" y="56" fill="#ff8000"/><rect x="193" y="57" fill="#00ff73"/><rect x="194" y="57" fill="#00ff72"/><rect x="195" y="57" fill="#00ff71"/><rect x="196" y="57" fill="#00ff70"/><rect x="197" y="57" fill="#00ff6f"/><rect x="198" y="57" fill="#00ff6e"/><rect x="199" y="57" fill="#00ff6c"/><rect x="200" y="57" fill="#00ff6b"/><rect x="201" y="57" fill="#00ff6a"/><rect x="202" y="57" fill="#00ff69"/><rect x="203" y="57" fill="#00ff68"/><rect x="204" y="57" fill="#00ff67"/><rect x="205" y="57" fill="#00ff66"/><rect x="206" y="57" fill="#00ff64"/><rect x="207" y="57" fill="#00ff63"/><rect x="208" y="57" fill="#00ff62"/><rect x="209" y="57" fill="#00ff61"/><rect x="210" y="57" fill="#00ff5f"/><rect x="211" y="57" fill="#00ff5e"/><rect x="212" y="57" fill="#00ff5d"/><rect x="213" y="57" fill="#00ff5b"/><rect x="214" y="57" fill="#00ff5a"/><rect x="215" y="57" fill="#00ff59"/><rect x="216" y="57" fill="#00ff57"/><rect x="217" y="57" fill="#00ff56"/><rect x="218" y="57" fill="#00ff54"/><rect x="219" y="57" fill="#00ff53"/><rect x="220" y="57" fill="#00ff51"/><rect x="221" y="57" fill="#00ff50"/><rect x="222" y="57" fill="#00ff4e"/><rect x="223" y="57" fill="#00ff4c"/><rect x="224" y="57" fill="#00ff4b"/><rect x="225" y="57" fill="#00ff49"/><rect x="226" y="57" fill="#00ff47"/><rect x="227" y="57" fill="#00ff46"/><rect x="228" y="57" fill="#00ff44"/><rect x="229" y="57" fill="#00ff42"/><rect x="230" y="57" fill="#00ff40"/><rect x="231" y="57" fill="#00ff3e"/><rect x="232" y="57" fill="#00ff3c"/><rect x="233" y="57" fill="#05ff3a"/><rect x="234" y="57" fill="#0fff38"/><rect x="235" y="57" fill="#18ff36"/><rect x="236" y="57" fill="#23ff34"/><rect x="237" y="57" fill="#2dff32"/><rect x="238" y="57" fill="#38ff30"/><rect x="239" y="57" fill="#43ff2e"/><rect x="240" y="57" fill="#4eff2b"/><rect x="241" y="57" fill="#59ff29"/><rect x="242" y="57" fill="#65ff27"/><rect x="243" y="57" fill="#70ff24"/><rect x="244" y="57" fill="#7dff22"/><rect x="245" y="57" fill="#89ff1f"/><rect x="246" y="57" fill="#96ff1d"/><rect x="247" y="57" fill="#a3ff1a"/><rect x="248" y="57" fill="#b0ff17"/><rect x="249" y="57" fill="#beff14"/><rect x="250" y="57" fill="#ccff12"/><rect x="251" y="57" fill="#daff0f"/><rect x="252" y="57" fill="#e9ff0c"/><rect x="253" y="57" fill="#f8ff09"/><rect x="254" y="57" fill="#fff705"/><rect x="255" y="57" fill="#ffe902"/><rect x="256" y="57" fill="#ffdc00"/><rect x="257" y="57" fill="#ffd000"/><rect x="258" y="57" fill="#ffc500"/><rect x="259" y="57" fill="#ffbb00"/><rect x="260" y="57" fill="#ffb200"/><rect x="261" y="57" fill="#ffa900"/><rect x="262" y="57" fill="#ffa100"/><rect x="263" y="57" fill="#ff9a00"/><rect x="264" y="57" fill="#ff9300"/><rect x="265" y="57" fill="#ff8c00"/><rect x="266" y="57" fill="#ff8600"/><rect x="267" y="57" fill="#ff8000"/><rect x="268" y="57" fill="#ff7a00"/><rect x="269" y="57" fill="#ff7500"/><rect x="194" y="58" fill="#00ff77"/><rect x="195" y="58" fill="#00ff76"/><rect x="196" y="58" fill="#00ff75"/><rect x="197" y="58" fill="#00ff74"/><rect x="198" y="58" fill="#00ff73"/><rect x="199" y="58" fill="#00ff72"/><rect x="200" y="58" fill="#00ff71"/><rect x="201" y="58" fill="#00ff6f"/><rect x="202" y="58" fill="#00ff6e"/><rect x="203" y="58" fill="#00ff6d"/><rect x="204" y="58" fill="#00ff6c"/><rect x="205" y="58" fill="#00ff6b"/><rect x="206" y="58" fill="#00ff6a"/><rect x="207" y="58" fill="#00ff69"/><rect x="208" y="58" fill="#00ff67"/><rect x="209" y="58" fill="#00ff66"/><rect x="210" y="58" fill="#00ff65"/><rect x="211" y="58" fill="#00ff63"/><rect x="212" y="58" fill="#00ff62"/><rect x="213" y="58" fill="#00ff61"/><rect x="214" y="58" fill="#00ff5f"/><rect x="215" y="58" fill="#00ff5e"/><rect x="216" y="58" fill="#00ff5d"/><rect x="217" y="58" fill="#00ff5b"/><rect x="218" y="58" fill="#00ff5a"/><rect x="219" y="58" fill="#00ff58"/><rect x="220" y="58" fill="#00ff57"/><rect x="221" y="58" fill="#00ff55"/><rect x="222" y="58" fill="#00ff54"/><rect x="223" y="58" fill="#00ff52"/><rect x="224" y="58" fill="#00ff50"/><rect x="225" y="58" fill="#00ff4f"/><rect x="226" y="58" fill="#00ff4d"/><rect x="227" y="58" fill="#00ff4b"/><rect x="228" y="58" fill="#00ff4a"/><rect x="229" y="58" fill="#00ff48"/><rect x="230" y="58" fill="#00ff46"/><rect x="231" y="58" fill="#00ff44"/><rect x="232" y="58" fill="#00ff42"/><rect x="233" y="58" fill="#08ff40"/><rect x="234" y="58" fill="#13ff3e"/><rect x="235" y="58" fill="#1dff3c"/><rect x="236" y="58" fill="#27ff3a"/><rect x="237" y="58" fill="#32ff38"/><rect x="238" y="58" fill="#3dff36"/><rect x="239" y="58" fill="#48ff34"/><rect x="240" y="58" fill="#54ff31"/><rect x="241" y="58" fill="#5fff2f"/><rect x="242" y="58" fill="#6bff2d"/><rect x="243" y="58" fill="#78ff2a"/><rect x="244" y="58" fill="#84ff28"/><rect x="245" y="58" fill="#91ff25"/><rect x="246" y="58" fill="#9eff23"/><rect x="247" y="58" fill="#acff20"/><rect x="248" y="58" fill="#baff1d"/><rect x="249" y="58" fill="#c8ff1a"/><rect x="250" y="58" fill="#d6ff17"/><rect x="251" y="58" fill="#e5ff14"/><rect x="252" y="58" fill="#f5ff11"/><rect x="253" y="58" fill="#fffa0e"/><rect x="254" y="58" fill="#ffeb0a"/><rect x="255" y="58" fill="#ffde07"/><rect x="256" y="58" fill="#ffd204"/><rect x="257" y="58" fill="#ffc701"/><rect x="258" y="58" fill="#ffbc00"/><rect x="259" y="58" fill="#ffb300"/><rect x="260" y="58" fill="#ffaa00"/><rect x="261" y="58" fill="#ffa100"/><rect x="262" y="58" fill="#ff9a00"/><rect x="263" y="58" fill="#ff9300"/><rect x="264" y="58" fill="#ff8c00"/><rect x="265" y="58" fill="#ff8500"/><rect x="266" y="58" fill="#ff7f00"/><rect x="267" y="58" fill="#ff7a00"/><rect x="268" y="58" fill="#ff7400"/><rect x="269" y="58" fill="#ff6f00"/><rect x="270" y="58" fill="#ff6b00"/><rect x="271" y="58" fill="#ff6600"/><rect x="194" y="59" fill="#00ff7c"/><rect x="195" y="59" fill="#00ff7b"/><rect x="196" y="59" fill="#00ff7a"/><rect x="197" y="59" fill="#00ff79"/><rect x="198" y="59" fill="#00ff78"/><rect x="199" y="59" fill="#00ff77"/><rect x="200" y="59" fill="#00ff76"/><rect x="201" y="59" fill="#00ff75"/><rect x="202" y="59" fill="#00ff74"/><rect x="203" y="59" fill="#00ff73"/><rect x="204" y="59" fill="#00ff72"/><rect x="205" y="59" fill="#00ff70"/><rect x="206" y="59" fill="#00ff6f"/><rect x="207" y="59" fill="#00ff6e"/><rect x="208" y="59" fill="#00ff6d"/><rect x="209" y="59" fill="#00ff6c"/><rect x="210" y="59" fill="#00ff6a"/><rect x="211" y="59" fill="#00ff69"/><rect x="212" y="59" fill="#00ff68"/><rect x="213" y="59" fill="#00ff67"/><rect x="214" y="59" fill="#00ff65"/><rect x="215" y="59" fill="#00ff64"/><rect x="216" y="59" fill="#00ff62"/><rect x="217" y="59" fill="#00ff61"/><rect x="218" y="59" fill="#00ff60"/><rect x="219" y="59" fill="#00ff5e"/><rect x="220" y="59" fill="#00ff5d"/><rect x="221" y="59" fill="#00ff5b"/><rect x="222" y="59" fill="#00ff5a"/><rect x="223" y="59" fill="#00ff58"/><rect x="224" y="59" fill="#00ff56"/><rect x="225" y="59" fill="#00ff55"/><rect x="226" y="59" fill="#00ff53"/><rect x="227" y="59" fill="#00ff51"/><rect x="228" y="59" fill="#00ff50"/><rect x="229" y="59" fill="#00ff4e"/><rect x="230" y="59" fill="#00ff4c"/><rect x="231" y="59" fill="#00ff4a"/><rect x="232" y="59" fill="#02ff48"/><rect x="233" y="59" fill="#0cff46"/><rect x="234" y="59" fill="#17ff44"/><rect x="235" y="59" fill="#21ff42"/><rect x="236" y="59" fill="#2cff40"/><rect x="237" y="59" fill="#37ff3e"/><rect x="238" y="59" fill="#43ff3c"/><rect x="239" y="59" fill="#4eff3a"/><rect x="240" y="59" fill="#5aff38"/><rect x="241" y="59" fill="#66ff35"/><rect x="242" y="59" fill="#73ff33"/><rect x="243" y="59" fill="#7fff30"/><rect x="244" y="59" fill="#8cff2e"/><rect x="245" y="59" fill="#9aff2b"/><rect x="246" y="59" fill="#a7ff29"/><rect x="247" y="59" fill="#b5ff26"/><rect x="248" y="59" fill="#c4ff23"/><rect x="249" y="59" fill="#d2ff21"/><rect x="250" y="59" fill="#e2ff1e"/><rect x="251" y="59" fill="#f1ff1b"/><rect x="252" y="59" fill="#fffd17"/><rect x="253" y="59" fill="#ffee13"/><rect x="254" y="59" fill="#ffe00f"/><rect x="255" y="59" fill="#ffd30c"/><rect x="256" y="59" fill="#ffc808"/><rect x="257" y="59" fill="#ffbd05"/><rect x="258" y="59" fill="#ffb302"/><rect x="259" y="59" fill="#ffaa00"/><rect x="260" y="59" fill="#ffa200"/><rect x="261" y="59" fill="#ff9a00"/><rect x="262" y="59" fill="#ff9200"/><rect x="263" y="59" fill="#ff8c00"/><rect x="264" y="59" fill="#ff8500"/><rect x="265" y="59" fill="#ff7f00"/><rect x="266" y="59" fill="#ff7900"/><rect x="267" y="59" fill="#ff7400"/><rect x="268" y="59" fill="#ff6f00"/><rect x="269" y="59" fill="#ff6a00"/><rect x="270" y="59" fill="#ff6500"/><rect x="271" y="59" fill="#ff6100"/><rect x="272" y="59" fill="#ff5d00"/><rect x="194" y="60" fill="#00ff82"/><rect x="195" y="60" fill="#00ff81"/><rect x="196" y="60" fill="#00ff80"/><rect x="197" y="60" fill="#00ff7f"/><rect x="198" y="60" fill="#00ff7e"/><rect x="199" y="60" fill="#00ff7d"/><rect x="200" y="60" fill="#00ff7c"/><rect x="201" y="60" fill="#00ff7b"/><rect x="202" y="60" fill="#00ff7a"/><rect x="203" y="60" fill="#00ff78"/><rect x="204" y="60" fill="#00ff77"/><rect x="205" y="60" fill="#00ff76"/><rect x="206" y="60" fill="#00ff75"/><rect x="207" y="60" fill="#00ff74"/><rect x="208" y="60" fill="#00ff73"/><rect x="209" y="60" fill="#00ff72"/><rect x="210" y="60" fill="#00ff70"/><rect x="211" y="60" fill="#00ff6f"/><rect x="212" y="60" fill="#00ff6e"/><rect x="213" y="60" fill="#00ff6d"/><rect x="214" y="60" fill="#00ff6b"/><rect x="215" y="60" fill="#00ff6a"/><rect x="216" y="60" fill="#00ff69"/><rect x="217" y="60" fill="#00ff67"/><rect x="218" y="60" fill="#00ff66"/><rect x="219" y="60" fill="#00ff64"/><rect x="220" y="60" fill="#00ff63"/><rect x="221" y="60" fill="#00ff61"/><rect x="222" y="60" fill="#00ff60"/><rect x="223" y="60" fill="#00ff5e"/><rect x="224" y="60" fill="#00ff5d"/><rect x="225" y="60" fill="#00ff5b"/><rect x="226" y="60" fill="#00ff59"/><rect x="227" y="60" fill="#00ff58"/><rect x="228" y="60" fill="#00ff56"/><rect x="229" y="60" fill="#00ff54"/><rect x="230" y="60" fill="#00ff52"/><rect x="231" y="60" fill="#00ff51"/><rect x="232" y="60" fill="#06ff4f"/><rect x="233" y="60" fill="#11ff4d"/><rect x="234" y="60" fill="#1bff4b"/><rect x="235" y="60" fill="#26ff49"/><rect x="236" y="60" fill="#31ff47"/><rect x="237" y="60" fill="#3dff45"/><rect x="238" y="60" fill="#48ff43"/><rect x="239" y="60" fill="#54ff40"/><rect x="240" y="60" fill="#61ff3e"/><rect x="241" y="60" fill="#6dff3c"/><rect x="242" y="60" fill="#7aff39"/><rect x="243" y="60" fill="#87ff37"/><rect x="244" y="60" fill="#95ff35"/><rect x="245" y="60" fill="#a3ff32"/><rect x="246" y="60" fill="#b1ff2f"/><rect x="247" y="60" fill="#bfff2d"/><rect x="248" y="60" fill="#ceff2a"/><rect x="249" y="60" fill="#deff27"/><rect x="250" y="60" fill="#eeff24"/><rect x="251" y="60" fill="#feff21"/><rect x="252" y="60" fill="#fff01d"/><rect x="253" y="60" fill="#ffe218"/><rect x="254" y="60" fill="#ffd514"/><rect x="255" y="60" fill="#ffc910"/><rect x="256" y="60" fill="#ffbe0d"/><rect x="257" y="60" fill="#ffb40a"/><rect x="258" y="60" fill="#ffab07"/><rect x="259" y="60" fill="#ffa204"/><rect x="260" y="60" fill="#ff9a01"/><rect x="261" y="60" fill="#ff9200"/><rect x="262" y="60" fill="#ff8b00"/><rect x="263" y="60" fill="#ff8500"/><rect x="264" y="60" fill="#ff7f00"/><rect x="265" y="60" fill="#ff7900"/><rect x="266" y="60" fill="#ff7300"/><rect x="267" y="60" fill="#ff6e00"/><rect x="268" y="60" fill="#ff6900"/><rect x="269" y="60" fill="#ff6500"/><rect x="270" y="60" fill="#ff6000"/><rect x="271" y="60" fill="#ff5c00"/><rect x="272" y="60" fill="#ff5800"/><rect x="273" y="60" fill="#ff5400"/><rect x="194" y="61" fill="#00ff87"/><rect x="195" y="61" fill="#00ff86"/><rect x="196" y="61" style="width:2.06px" fill="#00ff85"/><rect x="198" y="61" fill="#00ff84"/><rect x="199" y="61" fill="#00ff83"/><rect x="200" y="61" fill="#00ff82"/><rect x="201" y="61" fill="#00ff81"/><rect x="202" y="61" fill="#00ff80"/><rect x="203" y="61" fill="#00ff7e"/><rect x="204" y="61" fill="#00ff7d"/><rect x="205" y="61" fill="#00ff7c"/><rect x="206" y="61" fill="#00ff7b"/><rect x="207" y="61" fill="#00ff7a"/><rect x="208" y="61" fill="#00ff79"/><rect x="209" y="61" fill="#00ff78"/><rect x="210" y="61" fill="#00ff77"/><rect x="211" y="61" fill="#00ff75"/><rect x="212" y="61" fill="#00ff74"/><rect x="213" y="61" fill="#00ff73"/><rect x="214" y="61" fill="#00ff72"/><rect x="215" y="61" fill="#00ff70"/><rect x="216" y="61" fill="#00ff6f"/><rect x="217" y="61" fill="#00ff6e"/><rect x="218" y="61" fill="#00ff6c"/><rect x="219" y="61" fill="#00ff6b"/><rect x="220" y="61" fill="#00ff69"/><rect x="221" y="61" fill="#00ff68"/><rect x="222" y="61" fill="#00ff66"/><rect x="223" y="61" fill="#00ff65"/><rect x="224" y="61" fill="#00ff63"/><rect x="225" y="61" fill="#00ff62"/><rect x="226" y="61" fill="#00ff60"/><rect x="227" y="61" fill="#00ff5e"/><rect x="228" y="61" fill="#00ff5d"/><rect x="229" y="61" fill="#00ff5b"/><rect x="230" y="61" fill="#00ff59"/><rect x="231" y="61" fill="#00ff57"/><rect x="232" y="61" fill="#0aff56"/><rect x="233" y="61" fill="#15ff54"/><rect x="234" y="61" fill="#20ff52"/><rect x="235" y="61" fill="#2bff50"/><rect x="236" y="61" fill="#37ff4e"/><rect x="237" y="61" fill="#43ff4c"/><rect x="238" y="61" fill="#4fff4a"/><rect x="239" y="61" fill="#5bff47"/><rect x="240" y="61" fill="#68ff45"/><rect x="241" y="61" fill="#75ff43"/><rect x="242" y="61" fill="#82ff40"/><rect x="243" y="61" fill="#90ff3e"/><rect x="244" y="61" fill="#9eff3c"/><rect x="245" y="61" fill="#acff39"/><rect x="246" y="61" fill="#bbff36"/><rect x="247" y="61" fill="#caff34"/><rect x="248" y="61" fill="#daff31"/><rect x="249" y="61" fill="#eaff2e"/><rect x="250" y="61" fill="#faff2b"/><rect x="251" y="61" fill="#fff327"/><rect x="252" y="61" fill="#ffe421"/><rect x="253" y="61" fill="#ffd71d"/><rect x="254" y="61" fill="#ffca19"/><rect x="255" y="61" fill="#ffbf15"/><rect x="256" y="61" fill="#ffb511"/><rect x="257" y="61" fill="#ffab0e"/><rect x="258" y="61" fill="#ffa20b"/><rect x="259" y="61" fill="#ff9a08"/><rect x="260" y="61" fill="#ff9205"/><rect x="261" y="61" fill="#ff8b03"/><rect x="262" y="61" fill="#ff8401"/><rect x="263" y="61" fill="#ff7e00"/><rect x="264" y="61" fill="#ff7800"/><rect x="265" y="61" fill="#ff7300"/><rect x="266" y="61" fill="#ff6d00"/><rect x="267" y="61" fill="#ff6800"/><rect x="268" y="61" fill="#ff6400"/><rect x="269" y="61" fill="#ff5f00"/><rect x="270" y="61" fill="#ff5b00"/><rect x="271" y="61" fill="#ff5700"/><rect x="272" y="61" fill="#ff5300"/><rect x="273" y="61" fill="#ff5000"/><rect x="274" y="61" fill="#ff4c00"/><rect x="275" y="61" fill="#ff4900"/><rect x="194" y="62" fill="#00ff8d"/><rect x="195" y="62" fill="#00ff8c"/><rect x="196" y="62" style="width:2.06px" fill="#00ff8b"/><rect x="198" y="62" fill="#00ff8a"/><rect x="199" y="62" fill="#00ff89"/><rect x="200" y="62" fill="#00ff88"/><rect x="201" y="62" fill="#00ff87"/><rect x="202" y="62" fill="#00ff86"/><rect x="203" y="62" fill="#00ff85"/><rect x="204" y="62" fill="#00ff84"/><rect x="205" y="62" fill="#00ff83"/><rect x="206" y="62" fill="#00ff81"/><rect x="207" y="62" fill="#00ff80"/><rect x="208" y="62" fill="#00ff7f"/><rect x="209" y="62" fill="#00ff7e"/><rect x="210" y="62" fill="#00ff7d"/><rect x="211" y="62" fill="#00ff7c"/><rect x="212" y="62" fill="#00ff7b"/><rect x="213" y="62" fill="#00ff79"/><rect x="214" y="62" fill="#00ff78"/><rect x="215" y="62" fill="#00ff77"/><rect x="216" y="62" fill="#00ff76"/><rect x="217" y="62" fill="#00ff74"/><rect x="218" y="62" fill="#00ff73"/><rect x="219" y="62" fill="#00ff71"/><rect x="220" y="62" fill="#00ff70"/><rect x="221" y="62" fill="#00ff6f"/><rect x="222" y="62" fill="#00ff6d"/><rect x="223" y="62" fill="#00ff6c"/><rect x="224" y="62" fill="#00ff6a"/><rect x="225" y="62" fill="#00ff69"/><rect x="226" y="62" fill="#00ff67"/><rect x="227" y="62" fill="#00ff65"/><rect x="228" y="62" fill="#00ff64"/><rect x="229" y="62" fill="#00ff62"/><rect x="230" y="62" fill="#00ff60"/><rect x="231" y="62" fill="#03ff5f"/><rect x="232" y="62" fill="#0eff5d"/><rect x="233" y="62" fill="#19ff5b"/><rect x="234" y="62" fill="#25ff59"/><rect x="235" y="62" fill="#30ff57"/><rect x="236" y="62" fill="#3cff55"/><rect x="237" y="62" fill="#49ff53"/><rect x="238" y="62" fill="#55ff51"/><rect x="239" y="62" fill="#62ff4f"/><rect x="240" y="62" fill="#6fff4c"/><rect x="241" y="62" fill="#7dff4a"/><rect x="242" y="62" fill="#8bff48"/><rect x="243" y="62" fill="#99ff46"/><rect x="244" y="62" fill="#a7ff43"/><rect x="245" y="62" fill="#b6ff41"/><rect x="246" y="62" fill="#c6ff3e"/><rect x="247" y="62" fill="#d6ff3b"/><rect x="248" y="62" fill="#e6ff39"/><rect x="249" y="62" fill="#f7ff36"/><rect x="250" y="62" fill="#fff631"/><rect x="251" y="62" fill="#ffe72b"/><rect x="252" y="62" fill="#ffd926"/><rect x="253" y="62" fill="#ffcc21"/><rect x="254" y="62" fill="#ffc01d"/><rect x="255" y="62" fill="#ffb519"/><rect x="256" y="62" fill="#ffac15"/><rect x="257" y="62" fill="#ffa212"/><rect x="258" y="62" fill="#ff9a0f"/><rect x="259" y="62" fill="#ff920c"/><rect x="260" y="62" fill="#ff8b09"/><rect x="261" y="62" fill="#ff8407"/><rect x="262" y="62" fill="#ff7e04"/><rect x="263" y="62" fill="#ff7802"/><rect x="264" y="62" fill="#ff7200"/><rect x="265" y="62" fill="#ff6d00"/><rect x="266" y="62" fill="#ff6800"/><rect x="267" y="62" fill="#ff6300"/><rect x="268" y="62" fill="#ff5e00"/><rect x="269" y="62" fill="#ff5a00"/><rect x="270" y="62" fill="#ff5600"/><rect x="271" y="62" fill="#ff5200"/><rect x="272" y="62" fill="#ff4e00"/><rect x="273" y="62" fill="#ff4b00"/><rect x="274" y="62" fill="#ff4800"/><rect x="275" y="62" fill="#ff4400"/><rect x="276" y="62" fill="#ff4100"/><rect x="194" y="63" style="width:2.06px" fill="#00ff93"/><rect x="196" y="63" fill="#00ff92"/><rect x="197" y="63" fill="#00ff91"/><rect x="198" y="63" fill="#00ff90"/><rect x="199" y="63" fill="#00ff8f"/><rect x="200" y="63" fill="#00ff8e"/><rect x="201" y="63" fill="#00ff8d"/><rect x="202" y="63" fill="#00ff8c"/><rect x="203" y="63" fill="#00ff8b"/><rect x="204" y="63" fill="#00ff8a"/><rect x="205" y="63" fill="#00ff89"/><rect x="206" y="63" fill="#00ff88"/><rect x="207" y="63" fill="#00ff87"/><rect x="208" y="63" fill="#00ff86"/><rect x="209" y="63" fill="#00ff85"/><rect x="210" y="63" fill="#00ff84"/><rect x="211" y="63" fill="#00ff83"/><rect x="212" y="63" fill="#00ff81"/><rect x="213" y="63" fill="#00ff80"/><rect x="214" y="63" fill="#00ff7f"/><rect x="215" y="63" fill="#00ff7e"/><rect x="216" y="63" fill="#00ff7c"/><rect x="217" y="63" fill="#00ff7b"/><rect x="218" y="63" fill="#00ff7a"/><rect x="219" y="63" fill="#00ff79"/><rect x="220" y="63" fill="#00ff77"/><rect x="221" y="63" fill="#00ff76"/><rect x="222" y="63" fill="#00ff74"/><rect x="223" y="63" fill="#00ff73"/><rect x="224" y="63" fill="#00ff71"/><rect x="225" y="63" fill="#00ff70"/><rect x="226" y="63" fill="#00ff6e"/><rect x="227" y="63" fill="#00ff6d"/><rect x="228" y="63" fill="#00ff6b"/><rect x="229" y="63" fill="#00ff69"/><rect x="230" y="63" fill="#00ff68"/><rect x="231" y="63" fill="#08ff66"/><rect x="232" y="63" fill="#13ff64"/><rect x="233" y="63" fill="#1eff62"/><rect x="234" y="63" fill="#2aff61"/><rect x="235" y="63" fill="#36ff5f"/><rect x="236" y="63" fill="#43ff5d"/><rect x="237" y="63" fill="#4fff5b"/><rect x="238" y="63" fill="#5cff59"/><rect x="239" y="63" fill="#6aff57"/><rect x="240" y="63" fill="#77ff54"/><rect x="241" y="63" fill="#85ff52"/><rect x="242" y="63" fill="#94ff50"/><rect x="243" y="63" fill="#a2ff4d"/><rect x="244" y="63" fill="#b2ff4b"/><rect x="245" y="63" fill="#c1ff49"/><rect x="246" y="63" fill="#d1ff46"/><rect x="247" y="63" fill="#e2ff43"/><rect x="248" y="63" fill="#f3ff41"/><rect x="249" y="63" fill="#fffa3d"/><rect x="250" y="63" fill="#ffe936"/><rect x="251" y="63" fill="#ffdb30"/><rect x="252" y="63" fill="#ffcd2b"/><rect x="253" y="63" fill="#ffc126"/><rect x="254" y="63" fill="#ffb621"/><rect x="255" y="63" fill="#ffac1d"/><rect x="256" y="63" fill="#ffa319"/><rect x="257" y="63" fill="#ff9a16"/><rect x="258" y="63" fill="#ff9213"/><rect x="259" y="63" fill="#ff8b10"/><rect x="260" y="63" fill="#ff840d"/><rect x="261" y="63" fill="#ff7d0a"/><rect x="262" y="63" fill="#ff7708"/><rect x="263" y="63" fill="#ff7105"/><rect x="264" y="63" fill="#ff6c03"/><rect x="265" y="63" fill="#ff6701"/><rect x="266" y="63" fill="#ff6200"/><rect x="267" y="63" fill="#ff5d00"/><rect x="268" y="63" fill="#ff5900"/><rect x="269" y="63" fill="#ff5500"/><rect x="270" y="63" fill="#ff5100"/><rect x="271" y="63" fill="#ff4d00"/><rect x="272" y="63" fill="#ff4a00"/><rect x="273" y="63" fill="#ff4600"/><rect x="274" y="63" fill="#ff4300"/><rect x="275" y="63" fill="#ff4000"/><rect x="276" y="63" fill="#ff3d00"/><rect x="277" y="63" fill="#ff3b00"/><rect x="195" y="64" fill="#00ff99"/><rect x="196" y="64" fill="#00ff98"/><rect x="197" y="64" fill="#00ff97"/><rect x="198" y="64" style="width:2.06px" fill="#00ff96"/><rect x="200" y="64" fill="#00ff95"/><rect x="201" y="64" fill="#00ff94"/><rect x="202" y="64" fill="#00ff93"/><rect x="203" y="64" fill="#00ff92"/><rect x="204" y="64" fill="#00ff91"/><rect x="205" y="64" fill="#00ff90"/><rect x="206" y="64" fill="#00ff8f"/><rect x="207" y="64" fill="#00ff8e"/><rect x="208" y="64" fill="#00ff8d"/><rect x="209" y="64" fill="#00ff8c"/><rect x="210" y="64" fill="#00ff8b"/><rect x="211" y="64" fill="#00ff8a"/><rect x="212" y="64" fill="#00ff89"/><rect x="213" y="64" fill="#00ff87"/><rect x="214" y="64" fill="#00ff86"/><rect x="215" y="64" fill="#00ff85"/><rect x="216" y="64" fill="#00ff84"/><rect x="217" y="64" fill="#00ff83"/><rect x="218" y="64" fill="#00ff81"/><rect x="219" y="64" fill="#00ff80"/><rect x="220" y="64" fill="#00ff7f"/><rect x="221" y="64" fill="#00ff7d"/><rect x="222" y="64" fill="#00ff7c"/><rect x="223" y="64" fill="#00ff7b"/><rect x="224" y="64" fill="#00ff79"/><rect x="225" y="64" fill="#00ff78"/><rect x="226" y="64" fill="#00ff76"/><rect x="227" y="64" fill="#00ff75"/><rect x="228" y="64" fill="#00ff73"/><rect x="229" y="64" fill="#00ff71"/><rect x="230" y="64" fill="#01ff70"/><rect x="231" y="64" fill="#0cff6e"/><rect x="232" y="64" fill="#18ff6c"/><rect x="233" y="64" fill="#23ff6a"/><rect x="234" y="64" fill="#30ff69"/><rect x="235" y="64" fill="#3cff67"/><rect x="236" y="64" fill="#49ff65"/><rect x="237" y="64" fill="#56ff63"/><rect x="238" y="64" fill="#64ff61"/><rect x="239" y="64" fill="#71ff5f"/><rect x="240" y="64" fill="#80ff5d"/><rect x="241" y="64" fill="#8eff5b"/><rect x="242" y="64" fill="#9dff58"/><rect x="243" y="64" fill="#adff56"/><rect x="244" y="64" fill="#bdff54"/><rect x="245" y="64" fill="#cdff51"/><rect x="246" y="64" fill="#deff4f"/><rect x="247" y="64" fill="#efff4c"/><rect x="248" y="64" fill="#fffd49"/><rect x="249" y="64" fill="#ffec41"/><rect x="250" y="64" fill="#ffdd3b"/><rect x="251" y="64" fill="#ffcf35"/><rect x="252" y="64" fill="#ffc32f"/><rect x="253" y="64" fill="#ffb72a"/><rect x="254" y="64" fill="#ffad26"/><rect x="255" y="64" fill="#ffa321"/><rect x="256" y="64" fill="#ff9a1d"/><rect x="257" y="64" fill="#ff921a"/><rect x="258" y="64" fill="#ff8a17"/><rect x="259" y="64" fill="#ff8313"/><rect x="260" y="64" fill="#ff7c10"/><rect x="261" y="64" fill="#ff760e"/><rect x="262" y="64" fill="#ff700b"/><rect x="263" y="64" fill="#ff6b09"/><rect x="264" y="64" fill="#ff6607"/><rect x="265" y="64" fill="#ff6104"/><rect x="266" y="64" fill="#ff5c02"/><rect x="267" y="64" fill="#ff5800"/><rect x="268" y="64" fill="#ff5400"/><rect x="269" y="64" fill="#ff5000"/><rect x="270" y="64" fill="#ff4c00"/><rect x="271" y="64" fill="#ff4900"/><rect x="272" y="64" fill="#ff4500"/><rect x="273" y="64" fill="#ff4200"/><rect x="274" y="64" fill="#ff3f00"/><rect x="275" y="64" fill="#ff3c00"/><rect x="276" y="64" fill="#ff3900"/><rect x="277" y="64" fill="#ff3700"/><rect x="278" y="64" fill="#ff3400"/><rect x="195" y="65" fill="#00ffa0"/><rect x="196" y="65" fill="#00ff9f"/><rect x="197" y="65" fill="#00ff9e"/><rect x="198" y="65" fill="#00ff9d"/><rect x="199" y="65" style="width:2.06px" fill="#00ff9c"/><rect x="201" y="65" fill="#00ff9b"/><rect x="202" y="65" fill="#00ff9a"/><rect x="203" y="65" fill="#00ff99"/><rect x="204" y="65" fill="#00ff98"/><rect x="205" y="65" fill="#00ff97"/><rect x="206" y="65" fill="#00ff96"/><rect x="207" y="65" fill="#00ff95"/><rect x="208" y="65" fill="#00ff94"/><rect x="209" y="65" fill="#00ff93"/><rect x="210" y="65" fill="#00ff92"/><rect x="211" y="65" fill="#00ff91"/><rect x="212" y="65" fill="#00ff90"/><rect x="213" y="65" fill="#00ff8f"/><rect x="214" y="65" fill="#00ff8e"/><rect x="215" y="65" fill="#00ff8d"/><rect x="216" y="65" fill="#00ff8b"/><rect x="217" y="65" fill="#00ff8a"/><rect x="218" y="65" fill="#00ff89"/><rect x="219" y="65" fill="#00ff88"/><rect x="220" y="65" fill="#00ff87"/><rect x="221" y="65" fill="#00ff85"/><rect x="222" y="65" fill="#00ff84"/><rect x="223" y="65" fill="#00ff83"/><rect x="224" y="65" fill="#00ff81"/><rect x="225" y="65" fill="#00ff80"/><rect x="226" y="65" fill="#00ff7e"/><rect x="227" y="65" fill="#00ff7d"/><rect x="228" y="65" fill="#00ff7b"/><rect x="229" y="65" fill="#00ff7a"/><rect x="230" y="65" fill="#05ff78"/><rect x="231" y="65" fill="#11ff76"/><rect x="232" y="65" fill="#1dff75"/><rect x="233" y="65" fill="#29ff73"/><rect x="234" y="65" fill="#36ff71"/><rect x="235" y="65" fill="#42ff6f"/><rect x="236" y="65" fill="#50ff6e"/><rect x="237" y="65" fill="#5dff6c"/><rect x="238" y="65" fill="#6cff6a"/><rect x="239" y="65" fill="#7aff68"/><rect x="240" y="65" fill="#89ff66"/><rect x="241" y="65" fill="#98ff63"/><rect x="242" y="65" fill="#a8ff61"/><rect x="243" y="65" fill="#b8ff5f"/><rect x="244" y="65" fill="#c8ff5d"/><rect x="245" y="65" fill="#daff5a"/><rect x="246" y="65" fill="#ebff58"/><rect x="247" y="65" fill="#fdff55"/><rect x="248" y="65" fill="#ffef4e"/><rect x="249" y="65" fill="#ffdf46"/><rect x="250" y="65" fill="#ffd13f"/><rect x="251" y="65" fill="#ffc439"/><rect x="252" y="65" fill="#ffb833"/><rect x="253" y="65" fill="#ffad2e"/><rect x="254" y="65" fill="#ffa32a"/><rect x="255" y="65" fill="#ff9a25"/><rect x="256" y="65" fill="#ff9221"/><rect x="257" y="65" fill="#ff8a1e"/><rect x="258" y="65" fill="#ff831a"/><rect x="259" y="65" fill="#ff7c17"/><rect x="260" y="65" fill="#ff7614"/><rect x="261" y="65" fill="#ff7011"/><rect x="262" y="65" fill="#ff6a0f"/><rect x="263" y="65" fill="#ff650c"/><rect x="264" y="65" fill="#ff600a"/><rect x="265" y="65" fill="#ff5b08"/><rect x="266" y="65" fill="#ff5705"/><rect x="267" y="65" fill="#ff5303"/><rect x="268" y="65" fill="#ff4f02"/><rect x="269" y="65" fill="#ff4b00"/><rect x="270" y="65" fill="#ff4700"/><rect x="271" y="65" fill="#ff4400"/><rect x="272" y="65" fill="#ff4100"/><rect x="273" y="65" fill="#ff3e00"/><rect x="274" y="65" fill="#ff3b00"/><rect x="275" y="65" fill="#ff3800"/><rect x="276" y="65" fill="#ff3500"/><rect x="277" y="65" fill="#ff3300"/><rect x="278" y="65" fill="#ff3000"/><rect x="279" y="65" fill="#ff2e00"/><rect x="280" y="65" fill="#ff2c00"/><rect x="195" y="66" fill="#00ffa7"/><rect x="196" y="66" fill="#00ffa6"/><rect x="197" y="66" fill="#00ffa5"/><rect x="198" y="66" style="width:2.06px" fill="#00ffa4"/><rect x="200" y="66" fill="#00ffa3"/><rect x="201" y="66" fill="#00ffa2"/><rect x="202" y="66" fill="#00ffa1"/><rect x="203" y="66" fill="#00ffa0"/><rect x="204" y="66" style="width:2.06px" fill="#00ff9f"/><rect x="206" y="66" fill="#00ff9e"/><rect x="207" y="66" fill="#00ff9d"/><rect x="208" y="66" fill="#00ff9c"/><rect x="209" y="66" fill="#00ff9b"/><rect x="210" y="66" fill="#00ff9a"/><rect x="211" y="66" fill="#00ff99"/><rect x="212" y="66" fill="#00ff98"/><rect x="213" y="66" fill="#00ff97"/><rect x="214" y="66" fill="#00ff96"/><rect x="215" y="66" fill="#00ff95"/><rect x="216" y="66" fill="#00ff93"/><rect x="217" y="66" fill="#00ff92"/><rect x="218" y="66" fill="#00ff91"/><rect x="219" y="66" fill="#00ff90"/><rect x="220" y="66" fill="#00ff8f"/><rect x="221" y="66" fill="#00ff8e"/><rect x="222" y="66" fill="#00ff8c"/><rect x="223" y="66" fill="#00ff8b"/><rect x="224" y="66" fill="#00ff8a"/><rect x="225" y="66" fill="#00ff88"/><rect x="226" y="66" fill="#00ff87"/><rect x="227" y="66" fill="#00ff85"/><rect x="228" y="66" fill="#00ff84"/><rect x="229" y="66" fill="#00ff82"/><rect x="230" y="66" fill="#09ff81"/><rect x="231" y="66" fill="#15ff7f"/><rect x="232" y="66" fill="#22ff7e"/><rect x="233" y="66" fill="#2fff7c"/><rect x="234" y="66" fill="#3cff7a"/><rect x="235" y="66" fill="#49ff79"/><rect x="236" y="66" fill="#57ff77"/><rect x="237" y="66" fill="#65ff75"/><rect x="238" y="66" fill="#74ff73"/><rect x="239" y="66" fill="#83ff71"/><rect x="240" y="66" fill="#92ff6f"/><rect x="241" y="66" fill="#a2ff6d"/><rect x="242" y="66" fill="#b3ff6b"/><rect x="243" y="66" fill="#c4ff69"/><rect x="244" y="66" fill="#d5ff66"/><rect x="245" y="66" fill="#e7ff64"/><rect x="246" y="66" fill="#f9ff62"/><rect x="247" y="66" fill="#fff25a"/><rect x="248" y="66" fill="#ffe252"/><rect x="249" y="66" fill="#ffd34a"/><rect x="250" y="66" fill="#ffc544"/><rect x="251" y="66" fill="#ffb93d"/><rect x="252" y="66" fill="#ffae38"/><rect x="253" y="66" fill="#ffa432"/><rect x="254" y="66" fill="#ff9a2e"/><rect x="255" y="66" fill="#ff9229"/><rect x="256" y="66" fill="#ff8a25"/><rect x="257" y="66" fill="#ff8221"/><rect x="258" y="66" fill="#ff7b1e"/><rect x="259" y="66" fill="#ff751b"/><rect x="260" y="66" fill="#ff6f17"/><rect x="261" y="66" fill="#ff6915"/><rect x="262" y="66" fill="#ff6412"/><rect x="263" y="66" fill="#ff5f0f"/><rect x="264" y="66" fill="#ff5a0d"/><rect x="265" y="66" fill="#ff560b"/><rect x="266" y="66" fill="#ff5108"/><rect x="267" y="66" fill="#ff4d06"/><rect x="268" y="66" fill="#ff4a05"/><rect x="269" y="66" fill="#ff4603"/><rect x="270" y="66" fill="#ff4301"/><rect x="271" y="66" fill="#ff3f00"/><rect x="272" y="66" fill="#ff3c00"/><rect x="273" y="66" fill="#ff3900"/><rect x="274" y="66" fill="#ff3700"/><rect x="275" y="66" fill="#ff3400"/><rect x="276" y="66" fill="#ff3100"/><rect x="277" y="66" fill="#ff2f00"/><rect x="278" y="66" fill="#ff2c00"/><rect x="279" y="66" fill="#ff2a00"/><rect x="280" y="66" fill="#ff2800"/><rect x="281" y="66" fill="#ff2600"/><rect x="195" y="67" fill="#00ffae"/><rect x="196" y="67" style="width:2.06px" fill="#00ffad"/><rect x="198" y="67" fill="#00ffac"/><rect x="199" y="67" fill="#00ffab"/><rect x="200" y="67" style="width:2.06px" fill="#00ffaa"/><rect x="202" y="67" fill="#00ffa9"/><rect x="203" y="67" fill="#00ffa8"/><rect x="204" y="67" fill="#00ffa7"/><rect x="205" y="67" style="width:2.06px" fill="#00ffa6"/><rect x="207" y="67" fill="#00ffa5"/><rect x="208" y="67" fill="#00ffa4"/><rect x="209" y="67" fill="#00ffa3"/><rect x="210" y="67" fill="#00ffa2"/><rect x="211" y="67" fill="#00ffa1"/><rect x="212" y="67" fill="#00ffa0"/><rect x="213" y="67" fill="#00ff9f"/><rect x="214" y="67" fill="#00ff9e"/><rect x="215" y="67" fill="#00ff9d"/><rect x="216" y="67" fill="#00ff9c"/><rect x="217" y="67" fill="#00ff9b"/><rect x="218" y="67" fill="#00ff9a"/><rect x="219" y="67" fill="#00ff99"/><rect x="220" y="67" fill="#00ff98"/><rect x="221" y="67" fill="#00ff96"/><rect x="222" y="67" fill="#00ff95"/><rect x="223" y="67" fill="#00ff94"/><rect x="224" y="67" fill="#00ff93"/><rect x="225" y="67" fill="#00ff91"/><rect x="226" y="67" fill="#00ff90"/><rect x="227" y="67" fill="#00ff8f"/><rect x="228" y="67" fill="#00ff8d"/><rect x="229" y="67" fill="#02ff8c"/><rect x="230" y="67" fill="#0eff8a"/><rect x="231" y="67" fill="#1bff89"/><rect x="232" y="67" fill="#28ff87"/><rect x="233" y="67" fill="#35ff86"/><rect x="234" y="67" fill="#42ff84"/><rect x="235" y="67" fill="#50ff82"/><rect x="236" y="67" fill="#5fff81"/><rect x="237" y="67" fill="#6eff7f"/><rect x="238" y="67" fill="#7dff7d"/><rect x="239" y="67" fill="#8dff7b"/><rect x="240" y="67" fill="#9dff79"/><rect x="241" y="67" fill="#adff77"/><rect x="242" y="67" fill="#bfff75"/><rect x="243" y="67" fill="#d0ff73"/><rect x="244" y="67" fill="#e3ff71"/><rect x="245" y="67" fill="#f5ff6f"/><rect x="246" y="67" fill="#fff668"/><rect x="247" y="67" fill="#ffe45f"/><rect x="248" y="67" fill="#ffd556"/><rect x="249" y="67" fill="#ffc74f"/><rect x="250" y="67" fill="#ffba48"/><rect x="251" y="67" fill="#ffaf41"/><rect x="252" y="67" fill="#ffa43c"/><rect x="253" y="67" fill="#ff9a36"/><rect x="254" y="67" fill="#ff9131"/><rect x="255" y="67" fill="#ff892d"/><rect x="256" y="67" fill="#ff8229"/><rect x="257" y="67" fill="#ff7b25"/><rect x="258" y="67" fill="#ff7421"/><rect x="259" y="67" fill="#ff6e1e"/><rect x="260" y="67" fill="#ff681b"/><rect x="261" y="67" fill="#ff6318"/><rect x="262" y="67" fill="#ff5e15"/><rect x="263" y="67" fill="#ff5912"/><rect x="264" y="67" fill="#ff5410"/><rect x="265" y="67" fill="#ff500e"/><rect x="266" y="67" fill="#ff4c0b"/><rect x="267" y="67" fill="#ff4809"/><rect x="268" y="67" fill="#ff4507"/><rect x="269" y="67" fill="#ff4105"/><rect x="270" y="67" fill="#ff3e04"/><rect x="271" y="67" fill="#ff3b02"/><rect x="272" y="67" fill="#ff3800"/><rect x="273" y="67" fill="#ff3500"/><rect x="274" y="67" fill="#ff3300"/><rect x="275" y="67" fill="#ff3000"/><rect x="276" y="67" fill="#ff2d00"/><rect x="277" y="67" fill="#ff2b00"/><rect x="278" y="67" fill="#ff2900"/><rect x="279" y="67" fill="#ff2700"/><rect x="280" y="67" fill="#ff2400"/><rect x="281" y="67" fill="#ff2200"/><rect x="282" y="67" fill="#ff2100"/><rect x="195" y="68" fill="#00ffb6"/><rect x="196" y="68" fill="#00ffb5"/><rect x="197" y="68" style="width:2.06px" fill="#00ffb4"/><rect x="199" y="68" fill="#00ffb3"/><rect x="200" y="68" style="width:2.06px" fill="#00ffb2"/><rect x="202" y="68" fill="#00ffb1"/><rect x="203" y="68" fill="#00ffb0"/><rect x="204" y="68" style="width:2.06px" fill="#00ffaf"/><rect x="206" y="68" fill="#00ffae"/><rect x="207" y="68" fill="#00ffad"/><rect x="208" y="68" fill="#00ffac"/><rect x="209" y="68" fill="#00ffab"/><rect x="210" y="68" style="width:2.06px" fill="#00ffaa"/><rect x="212" y="68" fill="#00ffa9"/><rect x="213" y="68" fill="#00ffa8"/><rect x="214" y="68" fill="#00ffa7"/><rect x="215" y="68" fill="#00ffa6"/><rect x="216" y="68" fill="#00ffa5"/><rect x="217" y="68" fill="#00ffa4"/><rect x="218" y="68" fill="#00ffa3"/><rect x="219" y="68" fill="#00ffa2"/><rect x="220" y="68" fill="#00ffa1"/><rect x="221" y="68" fill="#00ffa0"/><rect x="222" y="68" fill="#00ff9f"/><rect x="223" y="68" fill="#00ff9d"/><rect x="224" y="68" fill="#00ff9c"/><rect x="225" y="68" fill="#00ff9b"/><rect x="226" y="68" fill="#00ff9a"/><rect x="227" y="68" fill="#00ff98"/><rect x="228" y="68" fill="#00ff97"/><rect x="229" y="68" fill="#06ff96"/><rect x="230" y="68" fill="#13ff94"/><rect x="231" y="68" fill="#20ff93"/><rect x="232" y="68" fill="#2eff92"/><rect x="233" y="68" fill="#3bff90"/><rect x="234" y="68" fill="#4aff8f"/><rect x="235" y="68" fill="#58ff8d"/><rect x="236" y="68" fill="#67ff8b"/><rect x="237" y="68" fill="#77ff8a"/><rect x="238" y="68" fill="#87ff88"/><rect x="239" y="68" fill="#97ff86"/><rect x="240" y="68" fill="#a8ff84"/><rect x="241" y="68" fill="#b9ff82"/><rect x="242" y="68" fill="#cbff80"/><rect x="243" y="68" fill="#deff7e"/><rect x="244" y="68" fill="#f1ff7c"/><rect x="245" y="68" fill="#fff977"/><rect x="246" y="68" fill="#ffe76d"/><rect x="247" y="68" fill="#ffd763"/><rect x="248" y="68" fill="#ffc85b"/><rect x="249" y="68" fill="#ffbb53"/><rect x="250" y="68" fill="#ffaf4c"/><rect x="251" y="68" fill="#ffa445"/><rect x="252" y="68" fill="#ff9a40"/><rect x="253" y="68" fill="#ff913a"/><rect x="254" y="68" fill="#ff8935"/><rect x="255" y="68" fill="#ff8131"/><rect x="256" y="68" fill="#ff7a2c"/><rect x="257" y="68" fill="#ff7328"/><rect x="258" y="68" fill="#ff6d25"/><rect x="259" y="68" fill="#ff6721"/><rect x="260" y="68" fill="#ff621e"/><rect x="261" y="68" fill="#ff5d1b"/><rect x="262" y="68" fill="#ff5818"/><rect x="263" y="68" fill="#ff5316"/><rect x="264" y="68" fill="#ff4f13"/><rect x="265" y="68" fill="#ff4b11"/><rect x="266" y="68" fill="#ff470e"/><rect x="267" y="68" fill="#ff430c"/><rect x="268" y="68" fill="#ff400a"/><rect x="269" y="68" fill="#ff3d08"/><rect x="270" y="68" fill="#ff3a06"/><rect x="271" y="68" fill="#ff3705"/><rect x="272" y="68" fill="#ff3403"/><rect x="273" y="68" fill="#ff3101"/><rect x="274" y="68" fill="#ff2e00"/><rect x="275" y="68" fill="#ff2c00"/><rect x="276" y="68" fill="#ff2a00"/><rect x="277" y="68" fill="#ff2700"/><rect x="278" y="68" fill="#ff2500"/><rect x="279" y="68" fill="#ff2300"/><rect x="280" y="68" fill="#ff2100"/><rect x="281" y="68" fill="#ff1f00"/><rect x="282" y="68" fill="#ff1d00"/><rect x="283" y="68" fill="#ff1b00"/><rect x="284" y="68" fill="#ff1a00"/><rect x="195" y="69" fill="#00ffbe"/><rect x="196" y="69" fill="#00ffbd"/><rect x="197" y="69" style="width:2.06px" fill="#00ffbc"/><rect x="199" y="69" style="width:2.06px" fill="#00ffbb"/><rect x="201" y="69" fill="#00ffba"/><rect x="202" y="69" style="width:2.06px" fill="#00ffb9"/><rect x="204" y="69" fill="#00ffb8"/><rect x="205" y="69" fill="#00ffb7"/><rect x="206" y="69" style="width:2.06px" fill="#00ffb6"/><rect x="208" y="69" fill="#00ffb5"/><rect x="209" y="69" fill="#00ffb4"/><rect x="210" y="69" style="width:2.06px" fill="#00ffb3"/><rect x="212" y="69" fill="#00ffb2"/><rect x="213" y="69" fill="#00ffb1"/><rect x="214" y="69" fill="#00ffb0"/><rect x="215" y="69" fill="#00ffaf"/><rect x="216" y="69" fill="#00ffae"/><rect x="217" y="69" fill="#00ffad"/><rect x="218" y="69" fill="#00ffac"/><rect x="219" y="69" fill="#00ffab"/><rect x="220" y="69" fill="#00ffaa"/><rect x="221" y="69" fill="#00ffa9"/><rect x="222" y="69" fill="#00ffa8"/><rect x="223" y="69" fill="#00ffa7"/><rect x="224" y="69" fill="#00ffa6"/><rect x="225" y="69" fill="#00ffa5"/><rect x="226" y="69" fill="#00ffa4"/><rect x="227" y="69" fill="#00ffa3"/><rect x="228" y="69" fill="#00ffa2"/><rect x="229" y="69" fill="#0bffa0"/><rect x="230" y="69" fill="#19ff9f"/><rect x="231" y="69" fill="#26ff9e"/><rect x="232" y="69" fill="#34ff9c"/><rect x="233" y="69" fill="#42ff9b"/><rect x="234" y="69" fill="#51ff9a"/><rect x="235" y="69" fill="#60ff98"/><rect x="236" y="69" fill="#70ff97"/><rect x="237" y="69" fill="#80ff95"/><rect x="238" y="69" fill="#91ff93"/><rect x="239" y="69" fill="#a2ff92"/><rect x="240" y="69" fill="#b4ff90"/><rect x="241" y="69" fill="#c6ff8e"/><rect x="242" y="69" fill="#d9ff8d"/><rect x="243" y="69" fill="#edff8b"/><rect x="244" y="69" fill="#fffd88"/><rect x="245" y="69" fill="#ffea7c"/><rect x="246" y="69" fill="#ffd971"/><rect x="247" y="69" fill="#ffca67"/><rect x="248" y="69" fill="#ffbc5f"/><rect x="249" y="69" fill="#ffb057"/><rect x="250" y="69" fill="#ffa550"/><rect x="251" y="69" fill="#ff9b49"/><rect x="252" y="69" fill="#ff9143"/><rect x="253" y="69" fill="#ff893e"/><rect x="254" y="69" fill="#ff8139"/><rect x="255" y="69" fill="#ff7934"/><rect x="256" y="69" fill="#ff7230"/><rect x="257" y="69" fill="#ff6c2c"/><rect x="258" y="69" fill="#ff6628"/><rect x="259" y="69" fill="#ff6125"/><rect x="260" y="69" fill="#ff5b21"/><rect x="261" y="69" fill="#ff571e"/><rect x="262" y="69" fill="#ff521b"/><rect x="263" y="69" fill="#ff4e19"/><rect x="264" y="69" fill="#ff4a16"/><rect x="265" y="69" fill="#ff4614"/><rect x="266" y="69" fill="#ff4211"/><rect x="267" y="69" fill="#ff3f0f"/><rect x="268" y="69" fill="#ff3b0d"/><rect x="269" y="69" fill="#ff380b"/><rect x="270" y="69" fill="#ff3509"/><rect x="271" y="69" fill="#ff3207"/><rect x="272" y="69" fill="#ff3005"/><rect x="273" y="69" fill="#ff2d04"/><rect x="274" y="69" fill="#ff2b02"/><rect x="275" y="69" fill="#ff2801"/><rect x="276" y="69" fill="#ff2600"/><rect x="277" y="69" fill="#ff2400"/><rect x="278" y="69" fill="#ff2200"/><rect x="279" y="69" fill="#ff2000"/><rect x="280" y="69" fill="#ff1e00"/><rect x="281" y="69" fill="#ff1c00"/><rect x="282" y="69" fill="#ff1a00"/><rect x="283" y="69" fill="#ff1800"/><rect x="284" y="69" fill="#ff1700"/><rect x="285" y="69" fill="#ff1500"/><rect x="196" y="70" style="width:2.06px" fill="#00ffc5"/><rect x="198" y="70" style="width:2.06px" fill="#00ffc4"/><rect x="200" y="70" style="width:2.06px" fill="#00ffc3"/><rect x="202" y="70" fill="#00ffc2"/><rect x="203" y="70" style="width:2.06px" fill="#00ffc1"/><rect x="205" y="70" style="width:2.06px" fill="#00ffc0"/><rect x="207" y="70" fill="#00ffbf"/><rect x="208" y="70" style="width:2.06px" fill="#00ffbe"/><rect x="210" y="70" fill="#00ffbd"/><rect x="211" y="70" fill="#00ffbc"/><rect x="212" y="70" style="width:2.06px" fill="#00ffbb"/><rect x="214" y="70" fill="#00ffba"/><rect x="215" y="70" fill="#00ffb9"/><rect x="216" y="70" fill="#00ffb8"/><rect x="217" y="70" style="width:2.06px" fill="#00ffb7"/><rect x="219" y="70" fill="#00ffb6"/><rect x="220" y="70" fill="#00ffb5"/><rect x="221" y="70" fill="#00ffb4"/><rect x="222" y="70" fill="#00ffb3"/><rect x="223" y="70" fill="#00ffb2"/><rect x="224" y="70" fill="#00ffb1"/><rect x="225" y="70" fill="#00ffb0"/><rect x="226" y="70" fill="#00ffaf"/><rect x="227" y="70" fill="#00ffae"/><rect x="228" y="70" fill="#03ffad"/><rect x="229" y="70" fill="#11ffac"/><rect x="230" y="70" fill="#1effab"/><rect x="231" y="70" fill="#2cffa9"/><rect x="232" y="70" fill="#3bffa8"/><rect x="233" y="70" fill="#4affa7"/><rect x="234" y="70" fill="#59ffa6"/><rect x="235" y="70" fill="#69ffa4"/><rect x="236" y="70" fill="#7affa3"/><rect x="237" y="70" fill="#8bffa1"/><rect x="238" y="70" fill="#9cffa0"/><rect x="239" y="70" fill="#aeff9e"/><rect x="240" y="70" fill="#c1ff9d"/><rect x="241" y="70" fill="#d4ff9b"/><rect x="242" y="70" fill="#e8ff9a"/><rect x="243" y="70" fill="#fdff98"/><rect x="244" y="70" fill="#ffed8c"/><rect x="245" y="70" fill="#ffdb7f"/><rect x="246" y="70" fill="#ffcc75"/><rect x="247" y="70" fill="#ffbe6b"/><rect x="248" y="70" fill="#ffb162"/><rect x="249" y="70" fill="#ffa55b"/><rect x="250" y="70" fill="#ff9b53"/><rect x="251" y="70" fill="#ff914d"/><rect x="252" y="70" fill="#ff8847"/><rect x="253" y="70" fill="#ff8041"/><rect x="254" y="70" fill="#ff793c"/><rect x="255" y="70" fill="#ff7238"/><rect x="256" y="70" fill="#ff6b33"/><rect x="257" y="70" fill="#ff652f"/><rect x="258" y="70" fill="#ff602b"/><rect x="259" y="70" fill="#ff5a28"/><rect x="260" y="70" fill="#ff5524"/><rect x="261" y="70" fill="#ff5121"/><rect x="262" y="70" fill="#ff4c1e"/><rect x="263" y="70" fill="#ff481c"/><rect x="264" y="70" fill="#ff4419"/><rect x="265" y="70" fill="#ff4116"/><rect x="266" y="70" fill="#ff3d14"/><rect x="267" y="70" fill="#ff3a12"/><rect x="268" y="70" fill="#ff3710"/><rect x="269" y="70" fill="#ff340e"/><rect x="270" y="70" fill="#ff310c"/><rect x="271" y="70" fill="#ff2e0a"/><rect x="272" y="70" fill="#ff2b08"/><rect x="273" y="70" fill="#ff2906"/><rect x="274" y="70" fill="#ff2705"/><rect x="275" y="70" fill="#ff2403"/><rect x="276" y="70" fill="#ff2202"/><rect x="277" y="70" fill="#ff2000"/><rect x="278" y="70" fill="#ff1e00"/><rect x="279" y="70" fill="#ff1c00"/><rect x="280" y="70" fill="#ff1a00"/><rect x="281" y="70" fill="#ff1800"/><rect x="282" y="70" fill="#ff1700"/><rect x="283" y="70" fill="#ff1500"/><rect x="284" y="70" fill="#ff1400"/><rect x="285" y="70" fill="#ff1200"/><rect x="286" y="70" fill="#ff1000"/><rect x="196" y="71" style="width:2.06px" fill="#00ffce"/><rect x="198" y="71" style="width:2.06px" fill="#00ffcd"/><rect x="200" y="71" style="width:2.06px" fill="#00ffcc"/><rect x="202" y="71" style="width:2.06px" fill="#00ffcb"/><rect x="204" y="71" style="width:2.06px" fill="#00ffca"/><rect x="206" y="71" style="width:2.06px" fill="#00ffc9"/><rect x="208" y="71" fill="#00ffc8"/><rect x="209" y="71" style="width:2.06px" fill="#00ffc7"/><rect x="211" y="71" style="width:2.06px" fill="#00ffc6"/><rect x="213" y="71" fill="#00ffc5"/><rect x="214" y="71" fill="#00ffc4"/><rect x="215" y="71" style="width:2.06px" fill="#00ffc3"/><rect x="217" y="71" fill="#00ffc2"/><rect x="218" y="71" style="width:2.06px" fill="#00ffc1"/><rect x="220" y="71" fill="#00ffc0"/><rect x="221" y="71" fill="#00ffbf"/><rect x="222" y="71" fill="#00ffbe"/><rect x="223" y="71" fill="#00ffbd"/><rect x="224" y="71" style="width:2.06px" fill="#00ffbc"/><rect x="226" y="71" fill="#00ffbb"/><rect x="227" y="71" fill="#00ffba"/><rect x="228" y="71" fill="#08ffb9"/><rect x="229" y="71" fill="#16ffb8"/><rect x="230" y="71" fill="#24ffb7"/><rect x="231" y="71" fill="#33ffb6"/><rect x="232" y="71" fill="#42ffb5"/><rect x="233" y="71" fill="#52ffb4"/><rect x="234" y="71" fill="#62ffb2"/><rect x="235" y="71" fill="#73ffb1"/><rect x="236" y="71" fill="#84ffb0"/><rect x="237" y="71" fill="#96ffaf"/><rect x="238" y="71" fill="#a8ffad"/><rect x="239" y="71" fill="#bbffac"/><rect x="240" y="71" fill="#cfffab"/><rect x="241" y="71" fill="#e3ffa9"/><rect x="242" y="71" fill="#f8ffa8"/><rect x="243" y="71" fill="#fff19d"/><rect x="244" y="71" fill="#ffde8f"/><rect x="245" y="71" fill="#ffce83"/><rect x="246" y="71" fill="#ffbf79"/><rect x="247" y="71" fill="#ffb26f"/><rect x="248" y="71" fill="#ffa666"/><rect x="249" y="71" fill="#ff9b5e"/><rect x="250" y="71" fill="#ff9157"/><rect x="251" y="71" fill="#ff8851"/><rect x="252" y="71" fill="#ff7f4b"/><rect x="253" y="71" fill="#ff7845"/><rect x="254" y="71" fill="#ff7140"/><rect x="255" y="71" fill="#ff6a3b"/><rect x="256" y="71" fill="#ff6437"/><rect x="257" y="71" fill="#ff5e32"/><rect x="258" y="71" fill="#ff592f"/><rect x="259" y="71" fill="#ff542b"/><rect x="260" y="71" fill="#ff4f27"/><rect x="261" y="71" fill="#ff4b24"/><rect x="262" y="71" fill="#ff4721"/><rect x="263" y="71" fill="#ff431e"/><rect x="264" y="71" fill="#ff3f1c"/><rect x="265" y="71" fill="#ff3c19"/><rect x="266" y="71" fill="#ff3817"/><rect x="267" y="71" fill="#ff3514"/><rect x="268" y="71" fill="#ff3212"/><rect x="269" y="71" fill="#ff2f10"/><rect x="270" y="71" fill="#ff2d0e"/><rect x="271" y="71" fill="#ff2a0c"/><rect x="272" y="71" fill="#ff270a"/><rect x="273" y="71" fill="#ff2509"/><rect x="274" y="71" fill="#ff2307"/><rect x="275" y="71" fill="#ff2106"/><rect x="276" y="71" fill="#ff1f04"/><rect x="277" y="71" fill="#ff1d03"/><rect x="278" y="71" fill="#ff1b01"/><rect x="279" y="71" fill="#ff1900"/><rect x="280" y="71" fill="#ff1700"/><rect x="281" y="71" fill="#ff1500"/><rect x="282" y="71" fill="#ff1400"/><rect x="283" y="71" fill="#ff1200"/><rect x="284" y="71" fill="#ff1000"/><rect x="285" y="71" fill="#ff0f00"/><rect x="286" y="71" fill="#ff0e00"/><rect x="287" y="71" fill="#ff0c00"/><rect x="288" y="71" fill="#ff0b00"/><rect x="196" y="72" style="width:3.06px" fill="#00ffd7"/><rect x="199" y="72" style="width:2.06px" fill="#00ffd6"/><rect x="201" y="72" style="width:3.06px" fill="#00ffd5"/><rect x="204" y="72" style="width:2.06px" fill="#00ffd4"/><rect x="206" y="72" style="width:2.06px" fill="#00ffd3"/><rect x="208" y="72" style="width:2.06px" fill="#00ffd2"/><rect x="210" y="72" style="width:2.06px" fill="#00ffd1"/><rect x="212" y="72" style="width:2.06px" fill="#00ffd0"/><rect x="214" y="72" style="width:2.06px" fill="#00ffcf"/><rect x="216" y="72" fill="#00ffce"/><rect x="217" y="72" style="width:2.06px" fill="#00ffcd"/><rect x="219" y="72" fill="#00ffcc"/><rect x="220" y="72" style="width:2.06px" fill="#00ffcb"/><rect x="222" y="72" fill="#00ffca"/><rect x="223" y="72" style="width:2.06px" fill="#00ffc9"/><rect x="225" y="72" fill="#00ffc8"/><rect x="226" y="72" fill="#00ffc7"/><rect x="227" y="72" fill="#00ffc6"/><rect x="228" y="72" fill="#0effc6"/><rect x="229" y="72" fill="#1cffc5"/><rect x="230" y="72" fill="#2bffc4"/><rect x="231" y="72" fill="#3bffc3"/><rect x="232" y="72" fill="#4affc2"/><rect x="233" y="72" fill="#5bffc1"/><rect x="234" y="72" fill="#6cffc0"/><rect x="235" y="72" fill="#7dffbf"/><rect x="236" y="72" fill="#8fffbe"/><rect x="237" y="72" fill="#a2ffbd"/><rect x="238" y="72" fill="#b5ffbc"/><rect x="239" y="72" fill="#c9ffbb"/><rect x="240" y="72" fill="#deffba"/><rect x="241" y="72" fill="#f4ffb8"/><rect x="242" y="72" fill="#fff5b0"/><rect x="243" y="72" fill="#ffe1a0"/><rect x="244" y="72" fill="#ffd093"/><rect x="245" y="72" fill="#ffc087"/><rect x="246" y="72" fill="#ffb27c"/><rect x="247" y="72" fill="#ffa673"/><rect x="248" y="72" fill="#ff9b6a"/><rect x="249" y="72" fill="#ff9162"/><rect x="250" y="72" fill="#ff875b"/><rect x="251" y="72" fill="#ff7f54"/><rect x="252" y="72" fill="#ff774e"/><rect x="253" y="72" fill="#ff7048"/><rect x="254" y="72" fill="#ff6943"/><rect x="255" y="72" fill="#ff633e"/><rect x="256" y="72" fill="#ff5d3a"/><rect x="257" y="72" fill="#ff5836"/><rect x="258" y="72" fill="#ff5332"/><rect x="259" y="72" fill="#ff4e2e"/><rect x="260" y="72" fill="#ff492a"/><rect x="261" y="72" fill="#ff4527"/><rect x="262" y="72" fill="#ff4124"/><rect x="263" y="72" fill="#ff3e21"/><rect x="264" y="72" fill="#ff3a1e"/><rect x="265" y="72" fill="#ff371c"/><rect x="266" y="72" fill="#ff3419"/><rect x="267" y="72" fill="#ff3117"/><rect x="268" y="72" fill="#ff2e15"/><rect x="269" y="72" fill="#ff2b13"/><rect x="270" y="72" fill="#ff2811"/><rect x="271" y="72" fill="#ff260f"/><rect x="272" y="72" fill="#ff230d"/><rect x="273" y="72" fill="#ff210b"/><rect x="274" y="72" fill="#ff1f09"/><rect x="275" y="72" fill="#ff1d08"/><rect x="276" y="72" fill="#ff1b06"/><rect x="277" y="72" fill="#ff1905"/><rect x="278" y="72" fill="#ff1703"/><rect x="279" y="72" fill="#ff1502"/><rect x="280" y="72" fill="#ff1401"/><rect x="281" y="72" fill="#ff1200"/><rect x="282" y="72" fill="#ff1000"/><rect x="283" y="72" fill="#ff0f00"/><rect x="284" y="72" fill="#ff0d00"/><rect x="285" y="72" fill="#ff0c00"/><rect x="286" y="72" fill="#ff0b00"/><rect x="287" y="72" fill="#ff0900"/><rect x="288" y="72" fill="#ff0800"/><rect x="289" y="72" fill="#ff0700"/><rect x="196" y="73" style="width:2.06px" fill="#00ffe1"/><rect x="198" y="73" style="width:4.06px" fill="#00ffe0"/><rect x="202" y="73" style="width:3.06px" fill="#00ffdf"/><rect x="205" y="73" style="width:3.06px" fill="#00ffde"/><rect x="208" y="73" style="width:2.06px" fill="#00ffdd"/><rect x="210" y="73" style="width:3.06px" fill="#00ffdc"/><rect x="213" y="73" style="width:2.06px" fill="#00ffdb"/><rect x="215" y="73" style="width:2.06px" fill="#00ffda"/><rect x="217" y="73" style="width:2.06px" fill="#00ffd9"/><rect x="219" y="73" style="width:2.06px" fill="#00ffd8"/><rect x="221" y="73" style="width:2.06px" fill="#00ffd7"/><rect x="223" y="73" style="width:2.06px" fill="#00ffd6"/><rect x="225" y="73" style="width:2.06px" fill="#00ffd5"/><rect x="227" y="73" fill="#05ffd4"/><rect x="228" y="73" fill="#14ffd3"/><rect x="229" y="73" fill="#23ffd3"/><rect x="230" y="73" fill="#32ffd2"/><rect x="231" y="73" fill="#42ffd1"/><rect x="232" y="73" fill="#53ffd1"/><rect x="233" y="73" fill="#64ffd0"/><rect x="234" y="73" fill="#76ffcf"/><rect x="235" y="73" fill="#88ffce"/><rect x="236" y="73" fill="#9bffce"/><rect x="237" y="73" fill="#afffcd"/><rect x="238" y="73" fill="#c3ffcc"/><rect x="239" y="73" fill="#d9ffcb"/><rect x="240" y="73" fill="#efffca"/><rect x="241" y="73" fill="#fff9c4"/><rect x="242" y="73" fill="#ffe4b3"/><rect x="243" y="73" fill="#ffd2a4"/><rect x="244" y="73" fill="#ffc296"/><rect x="245" y="73" fill="#ffb38a"/><rect x="246" y="73" fill="#ffa780"/><rect x="247" y="73" fill="#ff9b76"/><rect x="248" y="73" fill="#ff916d"/><rect x="249" y="73" fill="#ff8765"/><rect x="250" y="73" fill="#ff7e5e"/><rect x="251" y="73" fill="#ff7657"/><rect x="252" y="73" fill="#ff6f51"/><rect x="253" y="73" fill="#ff684c"/><rect x="254" y="73" fill="#ff6246"/><rect x="255" y="73" fill="#ff5c41"/><rect x="256" y="73" fill="#ff563d"/><rect x="257" y="73" fill="#ff5139"/><rect x="258" y="73" fill="#ff4c35"/><rect x="259" y="73" fill="#ff4831"/><rect x="260" y="73" fill="#ff442d"/><rect x="261" y="73" fill="#ff402a"/><rect x="262" y="73" fill="#ff3c27"/><rect x="263" y="73" fill="#ff3824"/><rect x="264" y="73" fill="#ff3521"/><rect x="265" y="73" fill="#ff321f"/><rect x="266" y="73" fill="#ff2f1c"/><rect x="267" y="73" fill="#ff2c1a"/><rect x="268" y="73" fill="#ff2917"/><rect x="269" y="73" fill="#ff2715"/><rect x="270" y="73" fill="#ff2413"/><rect x="271" y="73" fill="#ff2211"/><rect x="272" y="73" fill="#ff200f"/><rect x="273" y="73" fill="#ff1d0e"/><rect x="274" y="73" fill="#ff1b0c"/><rect x="275" y="73" fill="#ff190a"/><rect x="276" y="73" fill="#ff1709"/><rect x="277" y="73" fill="#ff1607"/><rect x="278" y="73" fill="#ff1406"/><rect x="279" y="73" fill="#ff1204"/><rect x="280" y="73" fill="#ff1003"/><rect x="281" y="73" fill="#ff0f01"/><rect x="282" y="73" fill="#ff0d00"/><rect x="283" y="73" fill="#ff0c00"/><rect x="284" y="73" fill="#ff0b00"/><rect x="285" y="73" fill="#ff0900"/><rect x="286" y="73" fill="#ff0800"/><rect x="287" y="73" fill="#ff0700"/><rect x="288" y="73" fill="#ff0500"/><rect x="289" y="73" fill="#ff0400"/><rect x="290" y="73" fill="#ff0300"/><rect x="197" y="74" style="width:3.06px" fill="#00ffeb"/><rect x="200" y="74" style="width:5.06px" fill="#00ffea"/><rect x="205" y="74" style="width:4.06px" fill="#00ffe9"/><rect x="209" y="74" style="width:4.06px" fill="#00ffe8"/><rect x="213" y="74" style="width:3.06px" fill="#00ffe7"/><rect x="216" y="74" style="width:4.06px" fill="#00ffe6"/><rect x="220" y="74" style="width:3.06px" fill="#00ffe5"/><rect x="223" y="74" style="width:2.06px" fill="#00ffe4"/><rect x="225" y="74" style="width:2.06px" fill="#00ffe3"/><rect x="227" y="74" fill="#0bffe3"/><rect x="228" y="74" fill="#1affe2"/><rect x="229" y="74" fill="#2affe2"/><rect x="230" y="74" fill="#3affe1"/><rect x="231" y="74" fill="#4bffe1"/><rect x="232" y="74" fill="#5cffe0"/><rect x="233" y="74" fill="#6effe0"/><rect x="234" y="74" fill="#81ffdf"/><rect x="235" y="74" fill="#94ffdf"/><rect x="236" y="74" fill="#a9ffde"/><rect x="237" y="74" fill="#bdffde"/><rect x="238" y="74" fill="#d3ffdd"/><rect x="239" y="74" fill="#e9ffdd"/><rect x="240" y="74" fill="#fffdda"/><rect x="241" y="74" fill="#ffe7c7"/><rect x="242" y="74" fill="#ffd4b6"/><rect x="243" y="74" fill="#ffc3a7"/><rect x="244" y="74" fill="#ffb49a"/><rect x="245" y="74" fill="#ffa78e"/><rect x="246" y="74" fill="#ff9b83"/><rect x="247" y="74" fill="#ff9079"/><rect x="248" y="74" fill="#ff8671"/><rect x="249" y="74" fill="#ff7e69"/><rect x="250" y="74" fill="#ff7561"/><rect x="251" y="74" fill="#ff6e5b"/><rect x="252" y="74" fill="#ff6755"/><rect x="253" y="74" fill="#ff604f"/><rect x="254" y="74" fill="#ff5a4a"/><rect x="255" y="74" fill="#ff5545"/><rect x="256" y="74" fill="#ff5040"/><rect x="257" y="74" fill="#ff4b3c"/><rect x="258" y="74" fill="#ff4638"/><rect x="259" y="74" fill="#ff4234"/><rect x="260" y="74" fill="#ff3e30"/><rect x="261" y="74" fill="#ff3a2d"/><rect x="262" y="74" fill="#ff372a"/><rect x="263" y="74" fill="#ff3327"/><rect x="264" y="74" fill="#ff3024"/><rect x="265" y="74" fill="#ff2d21"/><rect x="266" y="74" fill="#ff2a1f"/><rect x="267" y="74" fill="#ff281c"/><rect x="268" y="74" fill="#ff251a"/><rect x="269" y="74" fill="#ff2218"/><rect x="270" y="74" fill="#ff2016"/><rect x="271" y="74" fill="#ff1e14"/><rect x="272" y="74" fill="#ff1c12"/><rect x="273" y="74" fill="#ff1a10"/><rect x="274" y="74" fill="#ff180e"/><rect x="275" y="74" fill="#ff160c"/><rect x="276" y="74" fill="#ff140b"/><rect x="277" y="74" fill="#ff1209"/><rect x="278" y="74" fill="#ff1008"/><rect x="279" y="74" fill="#ff0f06"/><rect x="280" y="74" fill="#ff0d05"/><rect x="281" y="74" fill="#ff0c04"/><rect x="282" y="74" fill="#ff0a02"/><rect x="283" y="74" fill="#ff0901"/><rect x="284" y="74" fill="#ff0800"/><rect x="285" y="74" fill="#ff0600"/><rect x="286" y="74" fill="#ff0500"/><rect x="287" y="74" fill="#ff0400"/><rect x="288" y="74" fill="#ff0300"/><rect x="289" y="74" fill="#ff0100"/><rect x="290" y="74" style="width:3.06px" fill="#ff0000"/><rect x="197" y="75" style="width:4.06px" fill="#00fff6"/><rect x="201" y="75" style="width:11.06px" fill="#00fff5"/><rect x="212" y="75" style="width:8.06px" fill="#00fff4"/><rect x="220" y="75" style="width:6.06px" fill="#00fff3"/><rect x="226" y="75" fill="#01fff3"/><rect x="227" y="75" fill="#11fff2"/><rect x="228" y="75" fill="#21fff2"/><rect x="229" y="75" fill="#31fff2"/><rect x="230" y="75" fill="#42fff2"/><rect x="231" y="75" fill="#54fff2"/><rect x="232" y="75" fill="#66fff1"/><rect x="233" y="75" fill="#79fff1"/><rect x="234" y="75" fill="#8dfff1"/><rect x="235" y="75" fill="#a2fff1"/><rect x="236" y="75" fill="#b7fff1"/><rect x="237" y="75" fill="#cdfff0"/><rect x="238" y="75" fill="#e4fff0"/><rect x="239" y="75" fill="#fcfff0"/><rect x="240" y="75" fill="#ffebdd"/><rect x="241" y="75" fill="#ffd7ca"/><rect x="242" y="75" fill="#ffc5b9"/><rect x="243" y="75" fill="#ffb6aa"/><rect x="244" y="75" fill="#ffa89d"/><rect x="245" y="75" fill="#ff9b91"/><rect x="246" y="75" fill="#ff9086"/><rect x="247" y="75" fill="#ff867d"/><rect x="248" y="75" fill="#ff7d74"/><rect x="249" y="75" fill="#ff746c"/><rect x="250" y="75" fill="#ff6d65"/><rect x="251" y="75" fill="#ff665e"/><rect x="252" y="75" fill="#ff5f58"/><rect x="253" y="75" fill="#ff5952"/><rect x="254" y="75" fill="#ff534d"/><rect x="255" y="75" fill="#ff4e48"/><rect x="256" y="75" fill="#ff4943"/><rect x="257" y="75" fill="#ff453f"/><rect x="258" y="75" fill="#ff403b"/><rect x="259" y="75" fill="#ff3c37"/><rect x="260" y="75" fill="#ff3933"/><rect x="261" y="75" fill="#ff3530"/><rect x="262" y="75" fill="#ff322c"/><rect x="263" y="75" fill="#ff2e29"/><rect x="264" y="75" fill="#ff2b27"/><rect x="265" y="75" fill="#ff2924"/><rect x="266" y="75" fill="#ff2621"/><rect x="267" y="75" fill="#ff231f"/><rect x="268" y="75" fill="#ff211c"/><rect x="269" y="75" fill="#ff1e1a"/><rect x="270" y="75" fill="#ff1c18"/><rect x="271" y="75" fill="#ff1a16"/><rect x="272" y="75" fill="#ff1814"/><rect x="273" y="75" fill="#ff1612"/><rect x="274" y="75" fill="#ff1410"/><rect x="275" y="75" fill="#ff120f"/><rect x="276" y="75" fill="#ff100d"/><rect x="277" y="75" fill="#ff0f0b"/><rect x="278" y="75" fill="#ff0d0a"/><rect x="279" y="75" fill="#ff0c08"/><rect x="280" y="75" fill="#ff0a07"/><rect x="281" y="75" fill="#ff0906"/><rect x="282" y="75" fill="#ff0704"/><rect x="283" y="75" fill="#ff0603"/><rect x="284" y="75" fill="#ff0502"/><rect x="285" y="75" fill="#ff0301"/><rect x="286" y="75" fill="#ff0200"/><rect x="287" y="75" fill="#ff0100"/><rect x="288" y="75" style="width:6.06px" fill="#ff0000"/><rect x="197" y="76" style="width:7.06px" fill="#00fdff"/><rect x="204" y="76" style="width:15.06px" fill="#00fcff"/><rect x="219" y="76" style="width:7.06px" fill="#00fbff"/><rect x="226" y="76" fill="#07fbff"/><rect x="227" y="76" fill="#17fbff"/><rect x="228" y="76" fill="#27fbff"/><rect x="229" y="76" fill="#38faff"/><rect x="230" y="76" fill="#4afaff"/><rect x="231" y="76" fill="#5cfaff"/><rect x="232" y="76" fill="#6ffaff"/><rect x="233" y="76" fill="#83faff"/><rect x="234" y="76" fill="#97faff"/><rect x="235" y="76" fill="#acfaff"/><rect x="236" y="76" fill="#c2f9ff"/><rect x="237" y="76" fill="#d9f9ff"/><rect x="238" y="76" fill="#f1f9ff"/><rect x="239" y="76" fill="#ffeff5"/><rect x="240" y="76" fill="#ffdadf"/><rect x="241" y="76" fill="#ffc7cc"/><rect x="242" y="76" fill="#ffb7bc"/><rect x="243" y="76" fill="#ffa8ad"/><rect x="244" y="76" fill="#ff9ba0"/><rect x="245" y="76" fill="#ff9094"/><rect x="246" y="76" fill="#ff8589"/><rect x="247" y="76" fill="#ff7c80"/><rect x="248" y="76" fill="#ff7377"/><rect x="249" y="76" fill="#ff6c6f"/><rect x="250" y="76" fill="#ff6468"/><rect x="251" y="76" fill="#ff5e61"/><rect x="252" y="76" fill="#ff585b"/><rect x="253" y="76" fill="#ff5255"/><rect x="254" y="76" fill="#ff4d50"/><rect x="255" y="76" fill="#ff484b"/><rect x="256" y="76" fill="#ff4346"/><rect x="257" y="76" fill="#ff3f41"/><rect x="258" y="76" fill="#ff3b3d"/><rect x="259" y="76" fill="#ff3739"/><rect x="260" y="76" fill="#ff3336"/><rect x="261" y="76" fill="#ff3032"/><rect x="262" y="76" fill="#ff2d2f"/><rect x="263" y="76" fill="#ff2a2c"/><rect x="264" y="76" fill="#ff2729"/><rect x="265" y="76" fill="#ff2426"/><rect x="266" y="76" fill="#ff2124"/><rect x="267" y="76" fill="#ff1f21"/><rect x="268" y="76" fill="#ff1d1f"/><rect x="269" y="76" fill="#ff1a1d"/><rect x="270" y="76" fill="#ff181a"/><rect x="271" y="76" fill="#ff1618"/><rect x="272" y="76" fill="#ff1416"/><rect x="273" y="76" fill="#ff1214"/><rect x="274" y="76" fill="#ff1013"/><rect x="275" y="76" fill="#ff0f11"/><rect x="276" y="76" fill="#ff0d0f"/><rect x="277" y="76" fill="#ff0b0d"/><rect x="278" y="76" fill="#ff0a0c"/><rect x="279" y="76" fill="#ff080a"/><rect x="280" y="76" fill="#ff0709"/><rect x="281" y="76" fill="#ff0608"/><rect x="282" y="76" fill="#ff0406"/><rect x="283" y="76" fill="#ff0305"/><rect x="284" y="76" fill="#ff0204"/><rect x="285" y="76" fill="#ff0102"/><rect x="286" y="76" fill="#ff0001"/><rect x="287" y="76" style="width:8.06px" fill="#ff0000"/><rect x="197" y="77" fill="#00f2ff"/><rect x="198" y="77" style="width:6.06px" fill="#00f1ff"/><rect x="204" y="77" style="width:4.06px" fill="#00f0ff"/><rect x="208" y="77" style="width:5.06px" fill="#00efff"/><rect x="213" y="77" style="width:3.06px" fill="#00eeff"/><rect x="216" y="77" style="width:4.06px" fill="#00edff"/><rect x="220" y="77" style="width:3.06px" fill="#00ecff"/><rect x="223" y="77" style="width:3.06px" fill="#00ebff"/><rect x="226" y="77" fill="#0ceaff"/><rect x="227" y="77" fill="#1ceaff"/><rect x="228" y="77" fill="#2ceaff"/><rect x="229" y="77" fill="#3de9ff"/><rect x="230" y="77" fill="#4ee9ff"/><rect x="231" y="77" fill="#60e8ff"/><rect x="232" y="77" fill="#72e8ff"/><rect x="233" y="77" fill="#85e7ff"/><rect x="234" y="77" fill="#99e7ff"/><rect x="235" y="77" fill="#aee6ff"/><rect x="236" y="77" fill="#c3e6ff"/><rect x="237" y="77" fill="#d9e5ff"/><rect x="238" y="77" fill="#f0e5ff"/><rect x="239" y="77" fill="#ffddf6"/><rect x="240" y="77" fill="#ffc9e1"/><rect x="241" y="77" fill="#ffb8cf"/><rect x="242" y="77" fill="#ffa9be"/><rect x="243" y="77" fill="#ff9cb0"/><rect x="244" y="77" fill="#ff90a3"/><rect x="245" y="77" fill="#ff8597"/><rect x="246" y="77" fill="#ff7b8d"/><rect x="247" y="77" fill="#ff7283"/><rect x="248" y="77" fill="#ff6a7a"/><rect x="249" y="77" fill="#ff6372"/><rect x="250" y="77" fill="#ff5c6b"/><rect x="251" y="77" fill="#ff5664"/><rect x="252" y="77" fill="#ff505e"/><rect x="253" y="77" fill="#ff4b58"/><rect x="254" y="77" fill="#ff4653"/><rect x="255" y="77" fill="#ff414d"/><rect x="256" y="77" fill="#ff3d49"/><rect x="257" y="77" fill="#ff3944"/><rect x="258" y="77" fill="#ff3540"/><rect x="259" y="77" fill="#ff313c"/><rect x="260" y="77" fill="#ff2e39"/><rect x="261" y="77" fill="#ff2b35"/><rect x="262" y="77" fill="#ff2832"/><rect x="263" y="77" fill="#ff252f"/><rect x="264" y="77" fill="#ff222c"/><rect x="265" y="77" fill="#ff1f29"/><rect x="266" y="77" fill="#ff1d26"/><rect x="267" y="77" fill="#ff1b24"/><rect x="268" y="77" fill="#ff1821"/><rect x="269" y="77" fill="#ff161f"/><rect x="270" y="77" fill="#ff141d"/><rect x="271" y="77" fill="#ff121b"/><rect x="272" y="77" fill="#ff1019"/><rect x="273" y="77" fill="#ff0f17"/><rect x="274" y="77" fill="#ff0d15"/><rect x="275" y="77" fill="#ff0b13"/><rect x="276" y="77" fill="#ff0a11"/><rect x="277" y="77" fill="#ff0810"/><rect x="278" y="77" fill="#ff070e"/><rect x="279" y="77" fill="#ff050c"/><rect x="280" y="77" fill="#ff040b"/><rect x="281" y="77" fill="#ff030a"/><rect x="282" y="77" fill="#ff0108"/><rect x="283" y="77" fill="#ff0007"/><rect x="284" y="77" fill="#ff0006"/><rect x="285" y="77" fill="#ff0004"/><rect x="286" y="77" fill="#ff0003"/><rect x="287" y="77" fill="#ff0002"/><rect x="288" y="77" fill="#ff0001"/><rect x="289" y="77" style="width:8.06px" fill="#ff0000"/><rect x="198" y="78" style="width:4.06px" fill="#00e6ff"/><rect x="202" y="78" style="width:3.06px" fill="#00e5ff"/><rect x="205" y="78" style="width:3.06px" fill="#00e4ff"/><rect x="208" y="78" style="width:2.06px" fill="#00e3ff"/><rect x="210" y="78" style="width:3.06px" fill="#00e2ff"/><rect x="213" y="78" style="width:2.06px" fill="#00e1ff"/><rect x="215" y="78" style="width:2.06px" fill="#00e0ff"/><rect x="217" y="78" style="width:3.06px" fill="#00dfff"/><rect x="220" y="78" style="width:2.06px" fill="#00deff"/><rect x="222" y="78" fill="#00ddff"/><rect x="223" y="78" style="width:2.06px" fill="#00dcff"/><rect x="225" y="78" fill="#03dbff"/><rect x="226" y="78" fill="#11dbff"/><rect x="227" y="78" fill="#21daff"/><rect x="228" y="78" fill="#30daff"/><rect x="229" y="78" fill="#41d9ff"/><rect x="230" y="78" fill="#51d8ff"/><rect x="231" y="78" fill="#63d8ff"/><rect x="232" y="78" fill="#75d7ff"/><rect x="233" y="78" fill="#87d6ff"/><rect x="234" y="78" fill="#9bd5ff"/><rect x="235" y="78" fill="#afd5ff"/><rect x="236" y="78" fill="#c3d4ff"/><rect x="237" y="78" fill="#d9d3ff"/><rect x="238" y="78" fill="#efd2ff"/><rect x="239" y="78" fill="#ffcbf8"/><rect x="240" y="78" fill="#ffb9e3"/><rect x="241" y="78" fill="#ffaad1"/><rect x="242" y="78" fill="#ff9cc1"/><rect x="243" y="78" fill="#ff8fb2"/><rect x="244" y="78" fill="#ff84a6"/><rect x="245" y="78" fill="#ff7a9a"/><rect x="246" y="78" fill="#ff718f"/><rect x="247" y="78" fill="#ff6986"/><rect x="248" y="78" fill="#ff627d"/><rect x="249" y="78" fill="#ff5b75"/><rect x="250" y="78" fill="#ff546e"/><rect x="251" y="78" fill="#ff4e67"/><rect x="252" y="78" fill="#ff4961"/><rect x="253" y="78" fill="#ff445b"/><rect x="254" y="78" fill="#ff3f55"/><rect x="255" y="78" fill="#ff3b50"/><rect x="256" y="78" fill="#ff374c"/><rect x="257" y="78" fill="#ff3347"/><rect x="258" y="78" fill="#ff2f43"/><rect x="259" y="78" fill="#ff2c3f"/><rect x="260" y="78" fill="#ff293b"/><rect x="261" y="78" fill="#ff2638"/><rect x="262" y="78" fill="#ff2334"/><rect x="263" y="78" fill="#ff2031"/><rect x="264" y="78" fill="#ff1e2e"/><rect x="265" y="78" fill="#ff1b2b"/><rect x="266" y="78" fill="#ff1929"/><rect x="267" y="78" fill="#ff1726"/><rect x="268" y="78" fill="#ff1424"/><rect x="269" y="78" fill="#ff1221"/><rect x="270" y="78" fill="#ff101f"/><rect x="271" y="78" fill="#ff0f1d"/><rect x="272" y="78" fill="#ff0d1b"/><rect x="273" y="78" fill="#ff0b19"/><rect x="274" y="78" fill="#ff0a17"/><rect x="275" y="78" fill="#ff0815"/><rect x="276" y="78" fill="#ff0613"/><rect x="277" y="78" fill="#ff0512"/><rect x="278" y="78" fill="#ff0410"/><rect x="279" y="78" fill="#ff020e"/><rect x="280" y="78" fill="#ff010d"/><rect x="281" y="78" fill="#ff000b"/><rect x="282" y="78" fill="#ff000a"/><rect x="283" y="78" fill="#ff0009"/><rect x="284" y="78" fill="#ff0007"/><rect x="285" y="78" fill="#ff0006"/><rect x="286" y="78" fill="#ff0005"/><rect x="287" y="78" fill="#ff0004"/><rect x="288" y="78" fill="#ff0003"/><rect x="289" y="78" fill="#ff0002"/><rect x="290" y="78" style="width:8.06px" fill="#ff0000"/><rect x="198" y="79" fill="#00dcff"/><rect x="199" y="79" style="width:3.06px" fill="#00dbff"/><rect x="202" y="79" style="width:2.06px" fill="#00daff"/><rect x="204" y="79" style="width:2.06px" fill="#00d9ff"/><rect x="206" y="79" style="width:2.06px" fill="#00d8ff"/><rect x="208" y="79" style="width:2.06px" fill="#00d7ff"/><rect x="210" y="79" style="width:2.06px" fill="#00d6ff"/><rect x="212" y="79" style="width:2.06px" fill="#00d5ff"/><rect x="214" y="79" style="width:2.06px" fill="#00d4ff"/><rect x="216" y="79" fill="#00d3ff"/><rect x="217" y="79" style="width:2.06px" fill="#00d2ff"/><rect x="219" y="79" fill="#00d1ff"/><rect x="220" y="79" style="width:2.06px" fill="#00d0ff"/><rect x="222" y="79" fill="#00cfff"/><rect x="223" y="79" style="width:2.06px" fill="#00ceff"/><rect x="225" y="79" fill="#08cdff"/><rect x="226" y="79" fill="#16ccff"/><rect x="227" y="79" fill="#25cbff"/><rect x="228" y="79" fill="#35caff"/><rect x="229" y="79" fill="#44c9ff"/><rect x="230" y="79" fill="#55c9ff"/><rect x="231" y="79" fill="#66c8ff"/><rect x="232" y="79" fill="#77c7ff"/><rect x="233" y="79" fill="#8ac6ff"/><rect x="234" y="79" fill="#9cc5ff"/><rect x="235" y="79" fill="#b0c4ff"/><rect x="236" y="79" fill="#c4c2ff"/><rect x="237" y="79" fill="#d9c1ff"/><rect x="238" y="79" fill="#eec0ff"/><rect x="239" y="79" fill="#ffbbfa"/><rect x="240" y="79" fill="#ffaae5"/><rect x="241" y="79" fill="#ff9cd3"/><rect x="242" y="79" fill="#ff8fc3"/><rect x="243" y="79" fill="#ff84b5"/><rect x="244" y="79" fill="#ff79a8"/><rect x="245" y="79" fill="#ff709d"/><rect x="246" y="79" fill="#ff6892"/><rect x="247" y="79" fill="#ff6089"/><rect x="248" y="79" fill="#ff5980"/><rect x="249" y="79" fill="#ff5378"/><rect x="250" y="79" fill="#ff4d71"/><rect x="251" y="79" fill="#ff476a"/><rect x="252" y="79" fill="#ff4264"/><rect x="253" y="79" fill="#ff3d5e"/><rect x="254" y="79" fill="#ff3958"/><rect x="255" y="79" fill="#ff3553"/><rect x="256" y="79" fill="#ff314e"/><rect x="257" y="79" fill="#ff2d4a"/><rect x="258" y="79" fill="#ff2a45"/><rect x="259" y="79" fill="#ff2741"/><rect x="260" y="79" fill="#ff243e"/><rect x="261" y="79" fill="#ff213a"/><rect x="262" y="79" fill="#ff1e37"/><rect x="263" y="79" fill="#ff1c34"/><rect x="264" y="79" fill="#ff1931"/><rect x="265" y="79" fill="#ff172e"/><rect x="266" y="79" fill="#ff152b"/><rect x="267" y="79" fill="#ff1228"/><rect x="268" y="79" fill="#ff1026"/><rect x="269" y="79" fill="#ff0f23"/><rect x="270" y="79" fill="#ff0d21"/><rect x="271" y="79" fill="#ff0b1f"/><rect x="272" y="79" fill="#ff091d"/><rect x="273" y="79" fill="#ff081b"/><rect x="274" y="79" fill="#ff0619"/><rect x="275" y="79" fill="#ff0517"/><rect x="276" y="79" fill="#ff0315"/><rect x="277" y="79" fill="#ff0214"/><rect x="278" y="79" fill="#ff0112"/><rect x="279" y="79" fill="#ff0010"/><rect x="280" y="79" fill="#ff000f"/><rect x="281" y="79" fill="#ff000d"/><rect x="282" y="79" fill="#ff000c"/><rect x="283" y="79" fill="#ff000b"/><rect x="284" y="79" fill="#ff0009"/><rect x="285" y="79" fill="#ff0008"/><rect x="286" y="79" fill="#ff0007"/><rect x="287" y="79" fill="#ff0006"/><rect x="288" y="79" fill="#ff0004"/><rect x="289" y="79" fill="#ff0003"/><rect x="290" y="79" fill="#ff0002"/><rect x="291" y="79" fill="#ff0001"/><rect x="292" y="79" style="width:7.06px" fill="#ff0000"/><rect x="198" y="80" fill="#00d2ff"/><rect x="199" y="80" style="width:2.06px" fill="#00d1ff"/><rect x="201" y="80" style="width:2.06px" fill="#00d0ff"/><rect x="203" y="80" fill="#00cfff"/><rect x="204" y="80" style="width:2.06px" fill="#00ceff"/><rect x="206" y="80" style="width:2.06px" fill="#00cdff"/><rect x="208" y="80" fill="#00ccff"/><rect x="209" y="80" style="width:2.06px" fill="#00cbff"/><rect x="211" y="80" fill="#00caff"/><rect x="212" y="80" style="width:2.06px" fill="#00c9ff"/><rect x="214" y="80" fill="#00c8ff"/><rect x="215" y="80" style="width:2.06px" fill="#00c7ff"/><rect x="217" y="80" fill="#00c6ff"/><rect x="218" y="80" fill="#00c5ff"/><rect x="219" y="80" fill="#00c4ff"/><rect x="220" y="80" style="width:2.06px" fill="#00c3ff"/><rect x="222" y="80" fill="#00c2ff"/><rect x="223" y="80" fill="#00c1ff"/><rect x="224" y="80" fill="#00c0ff"/><rect x="225" y="80" fill="#0dbfff"/><rect x="226" y="80" fill="#1bbeff"/><rect x="227" y="80" fill="#29bdff"/><rect x="228" y="80" fill="#39bcff"/><rect x="229" y="80" fill="#48bbff"/><rect x="230" y="80" fill="#58baff"/><rect x="231" y="80" fill="#69b9ff"/><rect x="232" y="80" fill="#7ab7ff"/><rect x="233" y="80" fill="#8bb6ff"/><rect x="234" y="80" fill="#9eb5ff"/><rect x="235" y="80" fill="#b1b4ff"/><rect x="236" y="80" fill="#c4b2ff"/><rect x="237" y="80" fill="#d8b1ff"/><rect x="238" y="80" fill="#edafff"/><rect x="239" y="80" fill="#ffabfb"/><rect x="240" y="80" fill="#ff9ce7"/><rect x="241" y="80" fill="#ff8fd5"/><rect x="242" y="80" fill="#ff83c6"/><rect x="243" y="80" fill="#ff78b7"/><rect x="244" y="80" fill="#ff6fab"/><rect x="245" y="80" fill="#ff669f"/><rect x="246" y="80" fill="#ff5e95"/><rect x="247" y="80" fill="#ff578b"/><rect x="248" y="80" fill="#ff5183"/><rect x="249" y="80" fill="#ff4b7b"/><rect x="250" y="80" fill="#ff4573"/><rect x="251" y="80" fill="#ff406d"/><rect x="252" y="80" fill="#ff3b66"/><rect x="253" y="80" fill="#ff3760"/><rect x="254" y="80" fill="#ff335b"/><rect x="255" y="80" fill="#ff2f56"/><rect x="256" y="80" fill="#ff2b51"/><rect x="257" y="80" fill="#ff284c"/><rect x="258" y="80" fill="#ff2548"/><rect x="259" y="80" fill="#ff2244"/><rect x="260" y="80" fill="#ff1f40"/><rect x="261" y="80" fill="#ff1c3d"/><rect x="262" y="80" fill="#ff1939"/><rect x="263" y="80" fill="#ff1736"/><rect x="264" y="80" fill="#ff1533"/><rect x="265" y="80" fill="#ff1330"/><rect x="266" y="80" fill="#ff102d"/><rect x="267" y="80" fill="#ff0e2b"/><rect x="268" y="80" fill="#ff0d28"/><rect x="269" y="80" fill="#ff0b26"/><rect x="270" y="80" fill="#ff0923"/><rect x="271" y="80" fill="#ff0721"/><rect x="272" y="80" fill="#ff061f"/><rect x="273" y="80" fill="#ff041d"/><rect x="274" y="80" fill="#ff031b"/><rect x="275" y="80" fill="#ff0119"/><rect x="276" y="80" fill="#ff0017"/><rect x="277" y="80" fill="#ff0016"/><rect x="278" y="80" fill="#ff0014"/><rect x="279" y="80" fill="#ff0012"/><rect x="280" y="80" fill="#ff0011"/><rect x="281" y="80" fill="#ff000f"/><rect x="282" y="80" fill="#ff000e"/><rect x="283" y="80" fill="#ff000c"/><rect x="284" y="80" fill="#ff000b"/><rect x="285" y="80" fill="#ff000a"/><rect x="286" y="80" fill="#ff0009"/><rect x="287" y="80" fill="#ff0007"/><rect x="288" y="80" fill="#ff0006"/><rect x="289" y="80" fill="#ff0005"/><rect x="290" y="80" fill="#ff0004"/><rect x="291" y="80" fill="#ff0003"/><rect x="292" y="80" fill="#ff0002"/><rect x="293" y="80" fill="#ff0001"/><rect x="294" y="80" style="width:7.06px" fill="#ff0000"/><rect x="198" y="81" fill="#00c8ff"/><rect x="199" y="81" style="width:2.06px" fill="#00c7ff"/><rect x="201" y="81" fill="#00c6ff"/><rect x="202" y="81" style="width:2.06px" fill="#00c5ff"/><rect x="204" y="81" fill="#00c4ff"/><rect x="205" y="81" style="width:2.06px" fill="#00c3ff"/><rect x="207" y="81" fill="#00c2ff"/><rect x="208" y="81" fill="#00c1ff"/><rect x="209" y="81" style="width:2.06px" fill="#00c0ff"/><rect x="211" y="81" fill="#00bfff"/><rect x="212" y="81" fill="#00beff"/><rect x="213" y="81" fill="#00bdff"/><rect x="214" y="81" style="width:2.06px" fill="#00bcff"/><rect x="216" y="81" fill="#00bbff"/><rect x="217" y="81" fill="#00baff"/><rect x="218" y="81" fill="#00b9ff"/><rect x="219" y="81" fill="#00b8ff"/><rect x="220" y="81" fill="#00b7ff"/><rect x="221" y="81" fill="#00b6ff"/><rect x="222" y="81" fill="#00b5ff"/><rect x="223" y="81" fill="#00b4ff"/><rect x="224" y="81" fill="#04b3ff"/><rect x="225" y="81" fill="#11b2ff"/><rect x="226" y="81" fill="#1fb1ff"/><rect x="227" y="81" fill="#2dafff"/><rect x="228" y="81" fill="#3caeff"/><rect x="229" y="81" fill="#4cadff"/><rect x="230" y="81" fill="#5bacff"/><rect x="231" y="81" fill="#6baaff"/><rect x="232" y="81" fill="#7ca9ff"/><rect x="233" y="81" fill="#8da7ff"/><rect x="234" y="81" fill="#9fa6ff"/><rect x="235" y="81" fill="#b2a4ff"/><rect x="236" y="81" fill="#c5a3ff"/><rect x="237" y="81" fill="#d8a1ff"/><rect x="238" y="81" fill="#eda0ff"/><rect x="239" y="81" fill="#ff9cfc"/><rect x="240" y="81" fill="#ff8ee9"/><rect x="241" y="81" fill="#ff82d7"/><rect x="242" y="81" fill="#ff77c8"/><rect x="243" y="81" fill="#ff6eba"/><rect x="244" y="81" fill="#ff65ad"/><rect x="245" y="81" fill="#ff5da2"/><rect x="246" y="81" fill="#ff5698"/><rect x="247" y="81" fill="#ff4f8e"/><rect x="248" y="81" fill="#ff4985"/><rect x="249" y="81" fill="#ff437e"/><rect x="250" y="81" fill="#ff3e76"/><rect x="251" y="81" fill="#ff396f"/><rect x="252" y="81" fill="#ff3569"/><rect x="253" y="81" fill="#ff3163"/><rect x="254" y="81" fill="#ff2d5d"/><rect x="255" y="81" fill="#ff2958"/><rect x="256" y="81" fill="#ff2653"/><rect x="257" y="81" fill="#ff224f"/><rect x="258" y="81" fill="#ff1f4b"/><rect x="259" y="81" fill="#ff1d47"/><rect x="260" y="81" fill="#ff1a43"/><rect x="261" y="81" fill="#ff173f"/><rect x="262" y="81" fill="#ff153c"/><rect x="263" y="81" fill="#ff1338"/><rect x="264" y="81" fill="#ff1035"/><rect x="265" y="81" fill="#ff0e32"/><rect x="266" y="81" fill="#ff0c30"/><rect x="267" y="81" fill="#ff0b2d"/><rect x="268" y="81" fill="#ff092a"/><rect x="269" y="81" fill="#ff0728"/><rect x="270" y="81" fill="#ff0526"/><rect x="271" y="81" fill="#ff0423"/><rect x="272" y="81" fill="#ff0221"/><rect x="273" y="81" fill="#ff011f"/><rect x="274" y="81" fill="#ff001d"/><rect x="275" y="81" fill="#ff001b"/><rect x="276" y="81" fill="#ff0019"/><rect x="277" y="81" fill="#ff0018"/><rect x="278" y="81" fill="#ff0016"/><rect x="279" y="81" fill="#ff0014"/><rect x="280" y="81" fill="#ff0013"/><rect x="281" y="81" fill="#ff0011"/><rect x="282" y="81" fill="#ff0010"/><rect x="283" y="81" fill="#ff000e"/><rect x="284" y="81" fill="#ff000d"/><rect x="285" y="81" fill="#ff000c"/><rect x="286" y="81" fill="#ff000a"/><rect x="287" y="81" fill="#ff0009"/><rect x="288" y="81" fill="#ff0008"/><rect x="289" y="81" fill="#ff0007"/><rect x="290" y="81" fill="#ff0006"/><rect x="291" y="81" fill="#ff0004"/><rect x="292" y="81" fill="#ff0003"/><rect x="293" y="81" fill="#ff0002"/><rect x="294" y="81" fill="#ff0001"/><rect x="295" y="81" style="width:7.06px" fill="#ff0000"/><rect x="199" y="82" fill="#00beff"/><rect x="200" y="82" fill="#00bdff"/><rect x="201" y="82" fill="#00bcff"/><rect x="202" y="82" style="width:2.06px" fill="#00bbff"/><rect x="204" y="82" fill="#00baff"/><rect x="205" y="82" fill="#00b9ff"/><rect x="206" y="82" fill="#00b8ff"/><rect x="207" y="82" style="width:2.06px" fill="#00b7ff"/><rect x="209" y="82" fill="#00b6ff"/><rect x="210" y="82" fill="#00b5ff"/><rect x="211" y="82" fill="#00b4ff"/><rect x="212" y="82" fill="#00b3ff"/><rect x="213" y="82" fill="#00b2ff"/><rect x="214" y="82" fill="#00b1ff"/><rect x="215" y="82" fill="#00b0ff"/><rect x="216" y="82" fill="#00afff"/><rect x="217" y="82" fill="#00aeff"/><rect x="218" y="82" fill="#00adff"/><rect x="219" y="82" fill="#00acff"/><rect x="220" y="82" fill="#00abff"/><rect x="221" y="82" fill="#00aaff"/><rect x="222" y="82" fill="#00a9ff"/><rect x="223" y="82" fill="#00a8ff"/><rect x="224" y="82" fill="#08a6ff"/><rect x="225" y="82" fill="#16a5ff"/><rect x="226" y="82" fill="#23a4ff"/><rect x="227" y="82" fill="#31a2ff"/><rect x="228" y="82" fill="#40a1ff"/><rect x="229" y="82" fill="#4fa0ff"/><rect x="230" y="82" fill="#5e9eff"/><rect x="231" y="82" fill="#6e9dff"/><rect x="232" y="82" fill="#7e9bff"/><rect x="233" y="82" fill="#8f9aff"/><rect x="234" y="82" fill="#a098ff"/><rect x="235" y="82" fill="#b296ff"/><rect x="236" y="82" fill="#c594ff"/><rect x="237" y="82" fill="#d893ff"/><rect x="238" y="82" fill="#ec91ff"/><rect x="239" y="82" fill="#ff8efe"/><rect x="240" y="82" fill="#ff81ea"/><rect x="241" y="82" fill="#ff76d9"/><rect x="242" y="82" fill="#ff6cca"/><rect x="243" y="82" fill="#ff63bc"/><rect x="244" y="82" fill="#ff5bb0"/><rect x="245" y="82" fill="#ff54a4"/><rect x="246" y="82" fill="#ff4d9a"/><rect x="247" y="82" fill="#ff4791"/><rect x="248" y="82" fill="#ff4188"/><rect x="249" y="82" fill="#ff3c80"/><rect x="250" y="82" fill="#ff3779"/><rect x="251" y="82" fill="#ff3272"/><rect x="252" y="82" fill="#ff2e6c"/><rect x="253" y="82" fill="#ff2a66"/><rect x="254" y="82" fill="#ff2760"/><rect x="255" y="82" fill="#ff235b"/><rect x="256" y="82" fill="#ff2056"/><rect x="257" y="82" fill="#ff1d51"/><rect x="258" y="82" fill="#ff1a4d"/><rect x="259" y="82" fill="#ff1849"/><rect x="260" y="82" fill="#ff1545"/><rect x="261" y="82" fill="#ff1342"/><rect x="262" y="82" fill="#ff103e"/><rect x="263" y="82" fill="#ff0e3b"/><rect x="264" y="82" fill="#ff0c38"/><rect x="265" y="82" fill="#ff0a35"/><rect x="266" y="82" fill="#ff0832"/><rect x="267" y="82" fill="#ff072f"/><rect x="268" y="82" fill="#ff052d"/><rect x="269" y="82" fill="#ff032a"/><rect x="270" y="82" fill="#ff0228"/><rect x="271" y="82" fill="#ff0025"/><rect x="272" y="82" fill="#ff0023"/><rect x="273" y="82" fill="#ff0021"/><rect x="274" y="82" fill="#ff001f"/><rect x="275" y="82" fill="#ff001d"/><rect x="276" y="82" fill="#ff001b"/><rect x="277" y="82" fill="#ff001a"/><rect x="278" y="82" fill="#ff0018"/><rect x="279" y="82" fill="#ff0016"/><rect x="280" y="82" fill="#ff0015"/><rect x="281" y="82" fill="#ff0013"/><rect x="282" y="82" fill="#ff0012"/><rect x="283" y="82" fill="#ff0010"/><rect x="284" y="82" fill="#ff000f"/><rect x="285" y="82" fill="#ff000d"/><rect x="286" y="82" fill="#ff000c"/><rect x="287" y="82" fill="#ff000b"/><rect x="288" y="82" fill="#ff000a"/><rect x="289" y="82" fill="#ff0008"/><rect x="290" y="82" fill="#ff0007"/><rect x="291" y="82" fill="#ff0006"/><rect x="292" y="82" fill="#ff0005"/><rect x="293" y="82" fill="#ff0004"/><rect x="294" y="82" fill="#ff0003"/><rect x="295" y="82" fill="#ff0002"/><rect x="296" y="82" fill="#ff0001"/><rect x="297" y="82" style="width:4.06px" fill="#ff0000"/><rect x="199" y="83" fill="#00b4ff"/><rect x="200" y="83" style="width:2.06px" fill="#00b3ff"/><rect x="202" y="83" fill="#00b2ff"/><rect x="203" y="83" fill="#00b1ff"/><rect x="204" y="83" fill="#00b0ff"/><rect x="205" y="83" fill="#00afff"/><rect x="206" y="83" fill="#00aeff"/><rect x="207" y="83" style="width:2.06px" fill="#00adff"/><rect x="209" y="83" fill="#00acff"/><rect x="210" y="83" fill="#00abff"/><rect x="211" y="83" fill="#00aaff"/><rect x="212" y="83" fill="#00a9ff"/><rect x="213" y="83" fill="#00a8ff"/><rect x="214" y="83" fill="#00a7ff"/><rect x="215" y="83" fill="#00a5ff"/><rect x="216" y="83" fill="#00a4ff"/><rect x="217" y="83" fill="#00a3ff"/><rect x="218" y="83" fill="#00a2ff"/><rect x="219" y="83" fill="#00a1ff"/><rect x="220" y="83" fill="#00a0ff"/><rect x="221" y="83" fill="#009eff"/><rect x="222" y="83" fill="#009dff"/><rect x="223" y="83" fill="#009cff"/><rect x="224" y="83" fill="#0d9aff"/><rect x="225" y="83" fill="#1a99ff"/><rect x="226" y="83" fill="#2798ff"/><rect x="227" y="83" fill="#3596ff"/><rect x="228" y="83" fill="#4395ff"/><rect x="229" y="83" fill="#5293ff"/><rect x="230" y="83" fill="#6191ff"/><rect x="231" y="83" fill="#7090ff"/><rect x="232" y="83" fill="#808eff"/><rect x="233" y="83" fill="#918cff"/><rect x="234" y="83" fill="#a28aff"/><rect x="235" y="83" fill="#b389ff"/><rect x="236" y="83" fill="#c587ff"/><rect x="237" y="83" fill="#d885ff"/><rect x="238" y="83" fill="#eb83ff"/><rect x="239" y="83" fill="#ff81ff"/><rect x="240" y="83" fill="#ff75ec"/><rect x="241" y="83" fill="#ff6bdb"/><rect x="242" y="83" fill="#ff61cc"/><rect x="243" y="83" fill="#ff59be"/><rect x="244" y="83" fill="#ff52b2"/><rect x="245" y="83" fill="#ff4ba7"/><rect x="246" y="83" fill="#ff449d"/><rect x="247" y="83" fill="#ff3f93"/><rect x="248" y="83" fill="#ff398b"/><rect x="249" y="83" fill="#ff3583"/><rect x="250" y="83" fill="#ff307b"/><rect x="251" y="83" fill="#ff2c74"/><rect x="252" y="83" fill="#ff286e"/><rect x="253" y="83" fill="#ff2468"/><rect x="254" y="83" fill="#ff2163"/><rect x="255" y="83" fill="#ff1e5d"/><rect x="256" y="83" fill="#ff1b58"/><rect x="257" y="83" fill="#ff1854"/><rect x="258" y="83" fill="#ff1550"/><rect x="259" y="83" fill="#ff134b"/><rect x="260" y="83" fill="#ff1048"/><rect x="261" y="83" fill="#ff0e44"/><rect x="262" y="83" fill="#ff0c40"/><rect x="263" y="83" fill="#ff0a3d"/><rect x="264" y="83" fill="#ff083a"/><rect x="265" y="83" fill="#ff0637"/><rect x="266" y="83" fill="#ff0534"/><rect x="267" y="83" fill="#ff0331"/><rect x="268" y="83" fill="#ff012f"/><rect x="269" y="83" fill="#ff002c"/><rect x="270" y="83" fill="#ff002a"/><rect x="271" y="83" fill="#ff0027"/><rect x="272" y="83" fill="#ff0025"/><rect x="273" y="83" fill="#ff0023"/><rect x="274" y="83" fill="#ff0021"/><rect x="275" y="83" fill="#ff001f"/><rect x="276" y="83" fill="#ff001d"/><rect x="277" y="83" fill="#ff001c"/><rect x="278" y="83" fill="#ff001a"/><rect x="279" y="83" fill="#ff0018"/><rect x="280" y="83" fill="#ff0016"/><rect x="281" y="83" fill="#ff0015"/><rect x="282" y="83" fill="#ff0013"/><rect x="283" y="83" fill="#ff0012"/><rect x="284" y="83" fill="#ff0011"/><rect x="285" y="83" fill="#ff000f"/><rect x="286" y="83" fill="#ff000e"/><rect x="287" y="83" fill="#ff000d"/><rect x="288" y="83" fill="#ff000b"/><rect x="289" y="83" fill="#ff000a"/><rect x="290" y="83" fill="#ff0009"/><rect x="291" y="83" fill="#ff0008"/><rect x="292" y="83" fill="#ff0007"/><rect x="293" y="83" fill="#ff0006"/><rect x="294" y="83" fill="#ff0005"/><rect x="295" y="83" fill="#ff0004"/><rect x="296" y="83" fill="#ff0003"/><rect x="297" y="83" fill="#ff0002"/><rect x="298" y="83" fill="#ff0001"/><rect x="299" y="83" style="width:3.06px" fill="#ff0000"/><rect x="199" y="84" fill="#00abff"/><rect x="200" y="84" fill="#00aaff"/><rect x="201" y="84" style="width:2.06px" fill="#00a9ff"/><rect x="203" y="84" fill="#00a8ff"/><rect x="204" y="84" fill="#00a7ff"/><rect x="205" y="84" fill="#00a6ff"/><rect x="206" y="84" fill="#00a5ff"/><rect x="207" y="84" fill="#00a4ff"/><rect x="208" y="84" fill="#00a3ff"/><rect x="209" y="84" fill="#00a2ff"/><rect x="210" y="84" fill="#00a1ff"/><rect x="211" y="84" fill="#00a0ff"/><rect x="212" y="84" fill="#009fff"/><rect x="213" y="84" fill="#009dff"/><rect x="214" y="84" fill="#009cff"/><rect x="215" y="84" fill="#009bff"/><rect x="216" y="84" fill="#009aff"/><rect x="217" y="84" fill="#0099ff"/><rect x="218" y="84" fill="#0097ff"/><rect x="219" y="84" fill="#0096ff"/><rect x="220" y="84" fill="#0095ff"/><rect x="221" y="84" fill="#0093ff"/><rect x="222" y="84" fill="#0092ff"/><rect x="223" y="84" fill="#0590ff"/><rect x="224" y="84" fill="#118fff"/><rect x="225" y="84" fill="#1e8dff"/><rect x="226" y="84" fill="#2b8cff"/><rect x="227" y="84" fill="#398aff"/><rect x="228" y="84" fill="#4789ff"/><rect x="229" y="84" fill="#5587ff"/><rect x="230" y="84" fill="#6485ff"/><rect x="231" y="84" fill="#7383ff"/><rect x="232" y="84" fill="#8282ff"/><rect x="233" y="84" fill="#9280ff"/><rect x="234" y="84" fill="#a37eff"/><rect x="235" y="84" fill="#b47cff"/><rect x="236" y="84" fill="#c67aff"/><rect x="237" y="84" fill="#d878ff"/><rect x="238" y="84" fill="#ea75ff"/><rect x="239" y="84" fill="#fe73ff"/><rect x="240" y="84" fill="#ff69ee"/><rect x="241" y="84" fill="#ff60dd"/><rect x="242" y="84" fill="#ff57ce"/><rect x="243" y="84" fill="#ff4fc1"/><rect x="244" y="84" fill="#ff48b4"/><rect x="245" y="84" fill="#ff42a9"/><rect x="246" y="84" fill="#ff3c9f"/><rect x="247" y="84" fill="#ff3796"/><rect x="248" y="84" fill="#ff328d"/><rect x="249" y="84" fill="#ff2e85"/><rect x="250" y="84" fill="#ff297e"/><rect x="251" y="84" fill="#ff2677"/><rect x="252" y="84" fill="#ff2271"/><rect x="253" y="84" fill="#ff1f6b"/><rect x="254" y="84" fill="#ff1b65"/><rect x="255" y="84" fill="#ff1860"/><rect x="256" y="84" fill="#ff165b"/><rect x="257" y="84" fill="#ff1356"/><rect x="258" y="84" fill="#ff1052"/><rect x="259" y="84" fill="#ff0e4e"/><rect x="260" y="84" fill="#ff0c4a"/><rect x="261" y="84" fill="#ff0a46"/><rect x="262" y="84" fill="#ff0843"/><rect x="263" y="84" fill="#ff063f"/><rect x="264" y="84" fill="#ff043c"/><rect x="265" y="84" fill="#ff0239"/><rect x="266" y="84" fill="#ff0136"/><rect x="267" y="84" fill="#ff0033"/><rect x="268" y="84" fill="#ff0031"/><rect x="269" y="84" fill="#ff002e"/><rect x="270" y="84" fill="#ff002c"/><rect x="271" y="84" fill="#ff002a"/><rect x="272" y="84" fill="#ff0027"/><rect x="273" y="84" fill="#ff0025"/><rect x="274" y="84" fill="#ff0023"/><rect x="275" y="84" fill="#ff0021"/><rect x="276" y="84" fill="#ff001f"/><rect x="277" y="84" fill="#ff001d"/><rect x="278" y="84" fill="#ff001c"/><rect x="279" y="84" fill="#ff001a"/><rect x="280" y="84" fill="#ff0018"/><rect x="281" y="84" fill="#ff0017"/><rect x="282" y="84" fill="#ff0015"/><rect x="283" y="84" fill="#ff0014"/><rect x="284" y="84" fill="#ff0012"/><rect x="285" y="84" fill="#ff0011"/><rect x="286" y="84" fill="#ff0010"/><rect x="287" y="84" fill="#ff000e"/><rect x="288" y="84" fill="#ff000d"/><rect x="289" y="84" fill="#ff000c"/><rect x="290" y="84" fill="#ff000b"/><rect x="291" y="84" fill="#ff0009"/><rect x="292" y="84" fill="#ff0008"/><rect x="293" y="84" fill="#ff0007"/><rect x="294" y="84" fill="#ff0006"/><rect x="295" y="84" fill="#ff0005"/><rect x="296" y="84" fill="#ff0004"/><rect x="297" y="84" fill="#ff0003"/><rect x="298" y="84" fill="#ff0002"/><rect x="299" y="84" fill="#ff0001"/><rect x="300" y="84" style="width:2.06px" fill="#ff0000"/><rect x="200" y="85" fill="#00a2ff"/><rect x="201" y="85" fill="#00a1ff"/><rect x="202" y="85" fill="#00a0ff"/><rect x="203" y="85" fill="#009fff"/><rect x="204" y="85" fill="#009eff"/><rect x="205" y="85" fill="#009dff"/><rect x="206" y="85" fill="#009cff"/><rect x="207" y="85" fill="#009aff"/><rect x="208" y="85" fill="#0099ff"/><rect x="209" y="85" fill="#0098ff"/><rect x="210" y="85" fill="#0097ff"/><rect x="211" y="85" fill="#0096ff"/><rect x="212" y="85" fill="#0095ff"/><rect x="213" y="85" fill="#0094ff"/><rect x="214" y="85" fill="#0092ff"/><rect x="215" y="85" fill="#0091ff"/><rect x="216" y="85" fill="#0090ff"/><rect x="217" y="85" fill="#008eff"/><rect x="218" y="85" fill="#008dff"/><rect x="219" y="85" fill="#008cff"/><rect x="220" y="85" fill="#008aff"/><rect x="221" y="85" fill="#0089ff"/><rect x="222" y="85" fill="#0087ff"/><rect x="223" y="85" fill="#0986ff"/><rect x="224" y="85" fill="#1584ff"/><rect x="225" y="85" fill="#2282ff"/><rect x="226" y="85" fill="#2f81ff"/><rect x="227" y="85" fill="#3c7fff"/><rect x="228" y="85" fill="#4a7dff"/><rect x="229" y="85" fill="#587cff"/><rect x="230" y="85" fill="#667aff"/><rect x="231" y="85" fill="#7578ff"/><rect x="232" y="85" fill="#8476ff"/><rect x="233" y="85" fill="#9474ff"/><rect x="234" y="85" fill="#a472ff"/><rect x="235" y="85" fill="#b570ff"/><rect x="236" y="85" fill="#c66dff"/><rect x="237" y="85" fill="#d86bff"/><rect x="238" y="85" fill="#ea69ff"/><rect x="239" y="85" fill="#fd66ff"/><rect x="240" y="85" fill="#ff5eef"/><rect x="241" y="85" fill="#ff55df"/><rect x="242" y="85" fill="#ff4dd0"/><rect x="243" y="85" fill="#ff46c3"/><rect x="244" y="85" fill="#ff40b6"/><rect x="245" y="85" fill="#ff3aab"/><rect x="246" y="85" fill="#ff34a1"/><rect x="247" y="85" fill="#ff3098"/><rect x="248" y="85" fill="#ff2b90"/><rect x="249" y="85" fill="#ff2788"/><rect x="250" y="85" fill="#ff2380"/><rect x="251" y="85" fill="#ff1f79"/><rect x="252" y="85" fill="#ff1c73"/><rect x="253" y="85" fill="#ff196d"/><rect x="254" y="85" fill="#ff1667"/><rect x="255" y="85" fill="#ff1362"/><rect x="256" y="85" fill="#ff105d"/><rect x="257" y="85" fill="#ff0e59"/><rect x="258" y="85" fill="#ff0c54"/><rect x="259" y="85" fill="#ff0a50"/><rect x="260" y="85" fill="#ff074c"/><rect x="261" y="85" fill="#ff0548"/><rect x="262" y="85" fill="#ff0445"/><rect x="263" y="85" fill="#ff0242"/><rect x="264" y="85" fill="#ff003e"/><rect x="265" y="85" fill="#ff003b"/><rect x="266" y="85" fill="#ff0038"/><rect x="267" y="85" fill="#ff0036"/><rect x="268" y="85" fill="#ff0033"/><rect x="269" y="85" fill="#ff0030"/><rect x="270" y="85" fill="#ff002e"/><rect x="271" y="85" fill="#ff002c"/><rect x="272" y="85" fill="#ff0029"/><rect x="273" y="85" fill="#ff0027"/><rect x="274" y="85" fill="#ff0025"/><rect x="275" y="85" fill="#ff0023"/><rect x="276" y="85" fill="#ff0021"/><rect x="277" y="85" fill="#ff001f"/><rect x="278" y="85" fill="#ff001d"/><rect x="279" y="85" fill="#ff001c"/><rect x="280" y="85" fill="#ff001a"/><rect x="281" y="85" fill="#ff0018"/><rect x="282" y="85" fill="#ff0017"/><rect x="283" y="85" fill="#ff0015"/><rect x="284" y="85" fill="#ff0014"/><rect x="285" y="85" fill="#ff0013"/><rect x="286" y="85" fill="#ff0011"/><rect x="287" y="85" fill="#ff0010"/><rect x="288" y="85" fill="#ff000f"/><rect x="289" y="85" fill="#ff000d"/><rect x="290" y="85" fill="#ff000c"/><rect x="291" y="85" fill="#ff000b"/><rect x="292" y="85" fill="#ff000a"/><rect x="293" y="85" fill="#ff0009"/><rect x="294" y="85" fill="#ff0008"/><rect x="295" y="85" fill="#ff0007"/><rect x="296" y="85" fill="#ff0006"/><rect x="297" y="85" fill="#ff0005"/><rect x="298" y="85" fill="#ff0004"/><rect x="299" y="85" fill="#ff0003"/><rect x="200" y="86" fill="#0099ff"/><rect x="201" y="86" fill="#0098ff"/><rect x="202" y="86" fill="#0097ff"/><rect x="203" y="86" fill="#0096ff"/><rect x="204" y="86" fill="#0095ff"/><rect x="205" y="86" fill="#0094ff"/><rect x="206" y="86" fill="#0093ff"/><rect x="207" y="86" fill="#0091ff"/><rect x="208" y="86" fill="#0090ff"/><rect x="209" y="86" fill="#008fff"/><rect x="210" y="86" fill="#008eff"/><rect x="211" y="86" fill="#008dff"/><rect x="212" y="86" fill="#008bff"/><rect x="213" y="86" fill="#008aff"/><rect x="214" y="86" fill="#0089ff"/><rect x="215" y="86" fill="#0087ff"/><rect x="216" y="86" fill="#0086ff"/><rect x="217" y="86" fill="#0085ff"/><rect x="218" y="86" fill="#0083ff"/><rect x="219" y="86" fill="#0082ff"/><rect x="220" y="86" fill="#0080ff"/><rect x="221" y="86" fill="#007fff"/><rect x="222" y="86" fill="#017dff"/><rect x="223" y="86" fill="#0d7bff"/><rect x="224" y="86" fill="#197aff"/><rect x="225" y="86" fill="#2578ff"/><rect x="226" y="86" fill="#3276ff"/><rect x="227" y="86" fill="#3f74ff"/><rect x="228" y="86" fill="#4d72ff"/><rect x="229" y="86" fill="#5a71ff"/><rect x="230" y="86" fill="#696fff"/><rect x="231" y="86" fill="#776dff"/><rect x="232" y="86" fill="#866aff"/><rect x="233" y="86" fill="#9568ff"/><rect x="234" y="86" fill="#a566ff"/><rect x="235" y="86" fill="#b564ff"/><rect x="236" y="86" fill="#c662ff"/><rect x="237" y="86" fill="#d75fff"/><rect x="238" y="86" fill="#e95dff"/><rect x="239" y="86" fill="#fc5aff"/><rect x="240" y="86" fill="#ff53f0"/><rect x="241" y="86" fill="#ff4be0"/><rect x="242" y="86" fill="#ff43d2"/><rect x="243" y="86" fill="#ff3dc5"/><rect x="244" y="86" fill="#ff37b9"/><rect x="245" y="86" fill="#ff32ae"/><rect x="246" y="86" fill="#ff2da4"/><rect x="247" y="86" fill="#ff289a"/><rect x="248" y="86" fill="#ff2492"/><rect x="249" y="86" fill="#ff208a"/><rect x="250" y="86" fill="#ff1d83"/><rect x="251" y="86" fill="#ff197c"/><rect x="252" y="86" fill="#ff1675"/><rect x="253" y="86" fill="#ff136f"/><rect x="254" y="86" fill="#ff106a"/><rect x="255" y="86" fill="#ff0e65"/><rect x="256" y="86" fill="#ff0b60"/><rect x="257" y="86" fill="#ff095b"/><rect x="258" y="86" fill="#ff0757"/><rect x="259" y="86" fill="#ff0552"/><rect x="260" y="86" fill="#ff034e"/><rect x="261" y="86" fill="#ff014b"/><rect x="262" y="86" fill="#ff0047"/><rect x="263" y="86" fill="#ff0044"/><rect x="264" y="86" fill="#ff0040"/><rect x="265" y="86" fill="#ff003d"/><rect x="266" y="86" fill="#ff003a"/><rect x="267" y="86" fill="#ff0038"/><rect x="268" y="86" fill="#ff0035"/><rect x="269" y="86" fill="#ff0032"/><rect x="270" y="86" fill="#ff0030"/><rect x="271" y="86" fill="#ff002e"/><rect x="272" y="86" fill="#ff002b"/><rect x="273" y="86" fill="#ff0029"/><rect x="274" y="86" fill="#ff0027"/><rect x="275" y="86" fill="#ff0025"/><rect x="276" y="86" fill="#ff0023"/><rect x="277" y="86" fill="#ff0021"/><rect x="278" y="86" fill="#ff001f"/><rect x="279" y="86" fill="#ff001e"/><rect x="280" y="86" fill="#ff001c"/><rect x="281" y="86" fill="#ff001a"/><rect x="282" y="86" fill="#ff0019"/><rect x="283" y="86" fill="#ff0017"/><rect x="284" y="86" fill="#ff0016"/><rect x="285" y="86" fill="#ff0014"/><rect x="286" y="86" fill="#ff0013"/><rect x="287" y="86" fill="#ff0012"/><rect x="288" y="86" fill="#ff0010"/><rect x="289" y="86" fill="#ff000f"/><rect x="290" y="86" fill="#ff000e"/><rect x="291" y="86" fill="#ff000d"/><rect x="292" y="86" fill="#ff000b"/><rect x="293" y="86" fill="#ff000a"/><rect x="294" y="86" fill="#ff0009"/><rect x="295" y="86" fill="#ff0008"/><rect x="296" y="86" fill="#ff0007"/><rect x="297" y="86" fill="#ff0006"/><rect x="200" y="87" fill="#0091ff"/><rect x="201" y="87" fill="#0090ff"/><rect x="202" y="87" fill="#008fff"/><rect x="203" y="87" fill="#008dff"/><rect x="204" y="87" fill="#008cff"/><rect x="205" y="87" fill="#008bff"/><rect x="206" y="87" fill="#008aff"/><rect x="207" y="87" fill="#0089ff"/><rect x="208" y="87" fill="#0088ff"/><rect x="209" y="87" fill="#0086ff"/><rect x="210" y="87" fill="#0085ff"/><rect x="211" y="87" fill="#0084ff"/><rect x="212" y="87" fill="#0082ff"/><rect x="213" y="87" fill="#0081ff"/><rect x="214" y="87" fill="#0080ff"/><rect x="215" y="87" fill="#007eff"/><rect x="216" y="87" fill="#007dff"/><rect x="217" y="87" fill="#007bff"/><rect x="218" y="87" fill="#007aff"/><rect x="219" y="87" fill="#0078ff"/><rect x="220" y="87" fill="#0076ff"/><rect x="221" y="87" fill="#0075ff"/><rect x="222" y="87" fill="#0573ff"/><rect x="223" y="87" fill="#1171ff"/><rect x="224" y="87" fill="#1d70ff"/><rect x="225" y="87" fill="#296eff"/><rect x="226" y="87" fill="#366cff"/><rect x="227" y="87" fill="#426aff"/><rect x="228" y="87" fill="#5068ff"/><rect x="229" y="87" fill="#5d66ff"/><rect x="230" y="87" fill="#6b64ff"/><rect x="231" y="87" fill="#7962ff"/><rect x="232" y="87" fill="#8860ff"/><rect x="233" y="87" fill="#975dff"/><rect x="234" y="87" fill="#a65bff"/><rect x="235" y="87" fill="#b659ff"/><rect x="236" y="87" fill="#c656ff"/><rect x="237" y="87" fill="#d754ff"/><rect x="238" y="87" fill="#e951ff"/><rect x="239" y="87" fill="#fa4fff"/><rect x="240" y="87" fill="#ff48f2"/><rect x="241" y="87" fill="#ff41e2"/><rect x="242" y="87" fill="#ff3ad4"/><rect x="243" y="87" fill="#ff34c7"/><rect x="244" y="87" fill="#ff2fbb"/><rect x="245" y="87" fill="#ff2ab0"/><rect x="246" y="87" fill="#ff25a6"/><rect x="247" y="87" fill="#ff219d"/><rect x="248" y="87" fill="#ff1d94"/><rect x="249" y="87" fill="#ff1a8c"/><rect x="250" y="87" fill="#ff1685"/><rect x="251" y="87" fill="#ff137e"/><rect x="252" y="87" fill="#ff1078"/><rect x="253" y="87" fill="#ff0e72"/><rect x="254" y="87" fill="#ff0b6c"/><rect x="255" y="87" fill="#ff0967"/><rect x="256" y="87" fill="#ff0762"/><rect x="257" y="87" fill="#ff045d"/><rect x="258" y="87" fill="#ff0259"/><rect x="259" y="87" fill="#ff0155"/><rect x="260" y="87" fill="#ff0051"/><rect x="261" y="87" fill="#ff004d"/><rect x="262" y="87" fill="#ff0049"/><rect x="263" y="87" fill="#ff0046"/><rect x="264" y="87" fill="#ff0043"/><rect x="265" y="87" fill="#ff003f"/><rect x="266" y="87" fill="#ff003c"/><rect x="267" y="87" fill="#ff003a"/><rect x="268" y="87" fill="#ff0037"/><rect x="269" y="87" fill="#ff0034"/><rect x="270" y="87" fill="#ff0032"/><rect x="271" y="87" fill="#ff002f"/><rect x="272" y="87" fill="#ff002d"/><rect x="273" y="87" fill="#ff002b"/><rect x="274" y="87" fill="#ff0029"/><rect x="275" y="87" fill="#ff0027"/><rect x="276" y="87" fill="#ff0025"/><rect x="277" y="87" fill="#ff0023"/><rect x="278" y="87" fill="#ff0021"/><rect x="279" y="87" fill="#ff001f"/><rect x="280" y="87" fill="#ff001e"/><rect x="281" y="87" fill="#ff001c"/><rect x="282" y="87" fill="#ff001a"/><rect x="283" y="87" fill="#ff0019"/><rect x="284" y="87" fill="#ff0017"/><rect x="285" y="87" fill="#ff0016"/><rect x="286" y="87" fill="#ff0015"/><rect x="287" y="87" fill="#ff0013"/><rect x="288" y="87" fill="#ff0012"/><rect x="289" y="87" fill="#ff0011"/><rect x="290" y="87" fill="#ff000f"/><rect x="291" y="87" fill="#ff000e"/><rect x="292" y="87" fill="#ff000d"/><rect x="293" y="87" fill="#ff000c"/><rect x="294" y="87" fill="#ff000b"/><rect x="201" y="88" fill="#0088ff"/><rect x="202" y="88" fill="#0086ff"/><rect x="203" y="88" fill="#0085ff"/><rect x="204" y="88" fill="#0084ff"/><rect x="205" y="88" fill="#0083ff"/><rect x="206" y="88" fill="#0082ff"/><rect x="207" y="88" fill="#0080ff"/><rect x="208" y="88" fill="#007fff"/><rect x="209" y="88" fill="#007eff"/><rect x="210" y="88" fill="#007cff"/><rect x="211" y="88" fill="#007bff"/><rect x="212" y="88" fill="#007aff"/><rect x="213" y="88" fill="#0078ff"/><rect x="214" y="88" fill="#0077ff"/><rect x="215" y="88" fill="#0075ff"/><rect x="216" y="88" fill="#0074ff"/><rect x="217" y="88" fill="#0072ff"/><rect x="218" y="88" fill="#0070ff"/><rect x="219" y="88" fill="#006fff"/><rect x="220" y="88" fill="#006dff"/><rect x="221" y="88" fill="#006bff"/><rect x="222" y="88" fill="#096aff"/><rect x="223" y="88" fill="#1568ff"/><rect x="224" y="88" fill="#2066ff"/><rect x="225" y="88" fill="#2c64ff"/><rect x="226" y="88" fill="#3962ff"/><rect x="227" y="88" fill="#4560ff"/><rect x="228" y="88" fill="#525eff"/><rect x="229" y="88" fill="#605cff"/><rect x="230" y="88" fill="#6d5aff"/><rect x="231" y="88" fill="#7b58ff"/><rect x="232" y="88" fill="#8955ff"/><rect x="233" y="88" fill="#9853ff"/><rect x="234" y="88" fill="#a751ff"/><rect x="235" y="88" fill="#b74eff"/><rect x="236" y="88" fill="#c74cff"/><rect x="237" y="88" fill="#d749ff"/><rect x="238" y="88" fill="#e846ff"/><rect x="239" y="88" fill="#f944ff"/><rect x="240" y="88" fill="#ff3ef3"/><rect x="241" y="88" fill="#ff37e3"/><rect x="242" y="88" fill="#ff31d5"/><rect x="243" y="88" fill="#ff2cc8"/><rect x="244" y="88" fill="#ff27bd"/><rect x="245" y="88" fill="#ff22b2"/><rect x="246" y="88" fill="#ff1ea8"/><rect x="247" y="88" fill="#ff1a9f"/><rect x="248" y="88" fill="#ff1796"/><rect x="249" y="88" fill="#ff148e"/><rect x="250" y="88" fill="#ff1087"/><rect x="251" y="88" fill="#ff0e80"/><rect x="252" y="88" fill="#ff0b7a"/><rect x="253" y="88" fill="#ff0874"/><rect x="254" y="88" fill="#ff066e"/><rect x="255" y="88" fill="#ff0469"/><rect x="256" y="88" fill="#ff0264"/><rect x="257" y="88" fill="#ff005f"/><rect x="258" y="88" fill="#ff005b"/><rect x="259" y="88" fill="#ff0057"/><rect x="260" y="88" fill="#ff0053"/><rect x="261" y="88" fill="#ff004f"/><rect x="262" y="88" fill="#ff004b"/><rect x="263" y="88" fill="#ff0048"/><rect x="264" y="88" fill="#ff0045"/><rect x="265" y="88" fill="#ff0042"/><rect x="266" y="88" fill="#ff003f"/><rect x="267" y="88" fill="#ff003c"/><rect x="268" y="88" fill="#ff0039"/><rect x="269" y="88" fill="#ff0036"/><rect x="270" y="88" fill="#ff0034"/><rect x="271" y="88" fill="#ff0031"/><rect x="272" y="88" fill="#ff002f"/><rect x="273" y="88" fill="#ff002d"/><rect x="274" y="88" fill="#ff002b"/><rect x="275" y="88" fill="#ff0029"/><rect x="276" y="88" fill="#ff0027"/><rect x="277" y="88" fill="#ff0025"/><rect x="278" y="88" fill="#ff0023"/><rect x="279" y="88" fill="#ff0021"/><rect x="280" y="88" fill="#ff001f"/><rect x="281" y="88" fill="#ff001e"/><rect x="282" y="88" fill="#ff001c"/><rect x="283" y="88" fill="#ff001b"/><rect x="284" y="88" fill="#ff0019"/><rect x="285" y="88" fill="#ff0018"/><rect x="286" y="88" fill="#ff0016"/><rect x="287" y="88" fill="#ff0015"/><rect x="288" y="88" fill="#ff0013"/><rect x="289" y="88" fill="#ff0012"/><rect x="290" y="88" fill="#ff0011"/><rect x="291" y="88" fill="#ff0010"/><rect x="201" y="89" fill="#0080ff"/><rect x="202" y="89" fill="#007fff"/><rect x="203" y="89" fill="#007dff"/><rect x="204" y="89" fill="#007cff"/><rect x="205" y="89" fill="#007bff"/><rect x="206" y="89" fill="#007aff"/><rect x="207" y="89" fill="#0078ff"/><rect x="208" y="89" fill="#0077ff"/><rect x="209" y="89" fill="#0075ff"/><rect x="210" y="89" fill="#0074ff"/><rect x="211" y="89" fill="#0073ff"/><rect x="212" y="89" fill="#0071ff"/><rect x="213" y="89" fill="#0070ff"/><rect x="214" y="89" fill="#006eff"/><rect x="215" y="89" fill="#006dff"/><rect x="216" y="89" fill="#006bff"/><rect x="217" y="89" fill="#0069ff"/><rect x="218" y="89" fill="#0068ff"/><rect x="219" y="89" fill="#0066ff"/><rect x="220" y="89" fill="#0064ff"/><rect x="221" y="89" fill="#0262ff"/><rect x="222" y="89" fill="#0d60ff"/><rect x="223" y="89" fill="#185fff"/><rect x="224" y="89" fill="#245dff"/><rect x="225" y="89" fill="#305bff"/><rect x="226" y="89" fill="#3c59ff"/><rect x="227" y="89" fill="#4857ff"/><rect x="228" y="89" fill="#5555ff"/><rect x="229" y="89" fill="#6252ff"/><rect x="230" y="89" fill="#6f50ff"/><rect x="231" y="89" fill="#7d4eff"/><rect x="232" y="89" fill="#8b4cff"/><rect x="233" y="89" fill="#9949ff"/><rect x="234" y="89" fill="#a847ff"/><rect x="235" y="89" fill="#b744ff"/><rect x="236" y="89" fill="#c742ff"/><rect x="237" y="89" fill="#d73fff"/><rect x="238" y="89" fill="#e83cff"/><rect x="239" y="89" fill="#f939ff"/><rect x="240" y="89" fill="#ff34f4"/><rect x="241" y="89" fill="#ff2ee5"/><rect x="242" y="89" fill="#ff29d7"/><rect x="243" y="89" fill="#ff24ca"/><rect x="244" y="89" fill="#ff1fbf"/><rect x="245" y="89" fill="#ff1bb4"/><rect x="246" y="89" fill="#ff17aa"/><rect x="247" y="89" fill="#ff14a1"/><rect x="248" y="89" fill="#ff1098"/><rect x="249" y="89" fill="#ff0d91"/><rect x="250" y="89" fill="#ff0b89"/><rect x="251" y="89" fill="#ff0883"/><rect x="252" y="89" fill="#ff067c"/><rect x="253" y="89" fill="#ff0376"/><rect x="254" y="89" fill="#ff0171"/><rect x="255" y="89" fill="#ff006b"/><rect x="256" y="89" fill="#ff0066"/><rect x="257" y="89" fill="#ff0062"/><rect x="258" y="89" fill="#ff005d"/><rect x="259" y="89" fill="#ff0059"/><rect x="260" y="89" fill="#ff0055"/><rect x="261" y="89" fill="#ff0051"/><rect x="262" y="89" fill="#ff004d"/><rect x="263" y="89" fill="#ff004a"/><rect x="264" y="89" fill="#ff0047"/><rect x="265" y="89" fill="#ff0044"/><rect x="266" y="89" fill="#ff0041"/><rect x="267" y="89" fill="#ff003e"/><rect x="268" y="89" fill="#ff003b"/><rect x="269" y="89" fill="#ff0038"/><rect x="270" y="89" fill="#ff0036"/><rect x="271" y="89" fill="#ff0033"/><rect x="272" y="89" fill="#ff0031"/><rect x="273" y="89" fill="#ff002f"/><rect x="274" y="89" fill="#ff002d"/><rect x="275" y="89" fill="#ff002a"/><rect x="276" y="89" fill="#ff0028"/><rect x="277" y="89" fill="#ff0027"/><rect x="278" y="89" fill="#ff0025"/><rect x="279" y="89" fill="#ff0023"/><rect x="280" y="89" fill="#ff0021"/><rect x="281" y="89" fill="#ff001f"/><rect x="282" y="89" fill="#ff001e"/><rect x="283" y="89" fill="#ff001c"/><rect x="284" y="89" fill="#ff001b"/><rect x="285" y="89" fill="#ff0019"/><rect x="286" y="89" fill="#ff0018"/><rect x="287" y="89" fill="#ff0016"/><rect x="288" y="89" fill="#ff0015"/><rect x="201" y="90" fill="#0078ff"/><rect x="202" y="90" fill="#0077ff"/><rect x="203" y="90" fill="#0076ff"/><rect x="204" y="90" fill="#0074ff"/><rect x="205" y="90" fill="#0073ff"/><rect x="206" y="90" fill="#0072ff"/><rect x="207" y="90" fill="#0070ff"/><rect x="208" y="90" fill="#006fff"/><rect x="209" y="90" fill="#006dff"/><rect x="210" y="90" fill="#006cff"/><rect x="211" y="90" fill="#006aff"/><rect x="212" y="90" fill="#0069ff"/><rect x="213" y="90" fill="#0067ff"/><rect x="214" y="90" fill="#0066ff"/><rect x="215" y="90" fill="#0064ff"/><rect x="216" y="90" fill="#0062ff"/><rect x="217" y="90" fill="#0061ff"/><rect x="218" y="90" fill="#005fff"/><rect x="219" y="90" fill="#005dff"/><rect x="220" y="90" fill="#005bff"/><rect x="221" y="90" fill="#065aff"/><rect x="222" y="90" fill="#1158ff"/><rect x="223" y="90" fill="#1c56ff"/><rect x="224" y="90" fill="#2754ff"/><rect x="225" y="90" fill="#3352ff"/><rect x="226" y="90" fill="#3f50ff"/><rect x="227" y="90" fill="#4b4eff"/><rect x="228" y="90" fill="#574bff"/><rect x="229" y="90" fill="#6449ff"/><rect x="230" y="90" fill="#7147ff"/><rect x="231" y="90" fill="#7f44ff"/><rect x="232" y="90" fill="#8c42ff"/><rect x="233" y="90" fill="#9b40ff"/><rect x="234" y="90" fill="#a93dff"/><rect x="235" y="90" fill="#b83aff"/><rect x="236" y="90" fill="#c738ff"/><rect x="237" y="90" fill="#d735ff"/><rect x="238" y="90" fill="#e732ff"/><rect x="239" y="90" fill="#f82fff"/><rect x="240" y="90" fill="#ff2bf6"/><rect x="241" y="90" fill="#ff25e6"/><rect x="242" y="90" fill="#ff20d9"/><rect x="243" y="90" fill="#ff1ccc"/><rect x="244" y="90" fill="#ff18c0"/><rect x="245" y="90" fill="#ff14b6"/><rect x="246" y="90" fill="#ff10ac"/><rect x="247" y="90" fill="#ff0da3"/><rect x="248" y="90" fill="#ff0a9b"/><rect x="249" y="90" fill="#ff0893"/><rect x="250" y="90" fill="#ff058b"/><rect x="251" y="90" fill="#ff0385"/><rect x="252" y="90" fill="#ff007e"/><rect x="253" y="90" fill="#ff0078"/><rect x="254" y="90" fill="#ff0073"/><rect x="255" y="90" fill="#ff006d"/><rect x="256" y="90" fill="#ff0068"/><rect x="257" y="90" fill="#ff0064"/><rect x="258" y="90" fill="#ff005f"/><rect x="259" y="90" fill="#ff005b"/><rect x="260" y="90" fill="#ff0057"/><rect x="261" y="90" fill="#ff0053"/><rect x="262" y="90" fill="#ff004f"/><rect x="263" y="90" fill="#ff004c"/><rect x="264" y="90" fill="#ff0049"/><rect x="265" y="90" fill="#ff0046"/><rect x="266" y="90" fill="#ff0042"/><rect x="267" y="90" fill="#ff0040"/><rect x="268" y="90" fill="#ff003d"/><rect x="269" y="90" fill="#ff003a"/><rect x="270" y="90" fill="#ff0038"/><rect x="271" y="90" fill="#ff0035"/><rect x="272" y="90" fill="#ff0033"/><rect x="273" y="90" fill="#ff0031"/><rect x="274" y="90" fill="#ff002e"/><rect x="275" y="90" fill="#ff002c"/><rect x="276" y="90" fill="#ff002a"/><rect x="277" y="90" fill="#ff0028"/><rect x="278" y="90" fill="#ff0026"/><rect x="279" y="90" fill="#ff0025"/><rect x="280" y="90" fill="#ff0023"/><rect x="281" y="90" fill="#ff0021"/><rect x="282" y="90" fill="#ff001f"/><rect x="283" y="90" fill="#ff001e"/><rect x="284" y="90" fill="#ff001c"/><rect x="285" y="90" fill="#ff001b"/><rect x="202" y="91" fill="#0070ff"/><rect x="203" y="91" fill="#006eff"/><rect x="204" y="91" fill="#006dff"/><rect x="205" y="91" fill="#006cff"/><rect x="206" y="91" fill="#006aff"/><rect x="207" y="91" fill="#0069ff"/><rect x="208" y="91" fill="#0067ff"/><rect x="209" y="91" fill="#0066ff"/><rect x="210" y="91" fill="#0064ff"/><rect x="211" y="91" fill="#0063ff"/><rect x="212" y="91" fill="#0061ff"/><rect x="213" y="91" fill="#005fff"/><rect x="214" y="91" fill="#005eff"/><rect x="215" y="91" fill="#005cff"/><rect x="216" y="91" fill="#005aff"/><rect x="217" y="91" fill="#0059ff"/><rect x="218" y="91" fill="#0057ff"/><rect x="219" y="91" fill="#0055ff"/><rect x="220" y="91" fill="#0053ff"/><rect x="221" y="91" fill="#0a51ff"/><rect x="222" y="91" fill="#144fff"/><rect x="223" y="91" fill="#1f4dff"/><rect x="224" y="91" fill="#2a4bff"/><rect x="225" y="91" fill="#3649ff"/><rect x="226" y="91" fill="#4247ff"/><rect x="227" y="91" fill="#4e45ff"/><rect x="228" y="91" fill="#5a43ff"/><rect x="229" y="91" fill="#6640ff"/><rect x="230" y="91" fill="#733eff"/><rect x="231" y="91" fill="#803bff"/><rect x="232" y="91" fill="#8e39ff"/><rect x="233" y="91" fill="#9c36ff"/><rect x="234" y="91" fill="#aa34ff"/><rect x="235" y="91" fill="#b931ff"/><rect x="236" y="91" fill="#c72eff"/><rect x="237" y="91" fill="#d72cff"/><rect x="238" y="91" fill="#e729ff"/><rect x="239" y="91" fill="#f726ff"/><rect x="240" y="91" fill="#ff22f7"/><rect x="241" y="91" fill="#ff1de8"/><rect x="242" y="91" fill="#ff18da"/><rect x="243" y="91" fill="#ff14ce"/><rect x="244" y="91" fill="#ff10c2"/><rect x="245" y="91" fill="#ff0db8"/><rect x="246" y="91" fill="#ff0aae"/><rect x="247" y="91" fill="#ff07a5"/><rect x="248" y="91" fill="#ff049d"/><rect x="249" y="91" fill="#ff0295"/><rect x="250" y="91" fill="#ff008e"/><rect x="251" y="91" fill="#ff0087"/><rect x="252" y="91" fill="#ff0080"/><rect x="253" y="91" fill="#ff007a"/><rect x="254" y="91" fill="#ff0075"/><rect x="255" y="91" fill="#ff006f"/><rect x="256" y="91" fill="#ff006a"/><rect x="257" y="91" fill="#ff0066"/><rect x="258" y="91" fill="#ff0061"/><rect x="259" y="91" fill="#ff005d"/><rect x="260" y="91" fill="#ff0059"/><rect x="261" y="91" fill="#ff0055"/><rect x="262" y="91" fill="#ff0051"/><rect x="263" y="91" fill="#ff004e"/><rect x="264" y="91" fill="#ff004b"/><rect x="265" y="91" fill="#ff0047"/><rect x="266" y="91" fill="#ff0044"/><rect x="267" y="91" fill="#ff0042"/><rect x="268" y="91" fill="#ff003f"/><rect x="269" y="91" fill="#ff003c"/><rect x="270" y="91" fill="#ff0039"/><rect x="271" y="91" fill="#ff0037"/><rect x="272" y="91" fill="#ff0035"/><rect x="273" y="91" fill="#ff0032"/><rect x="274" y="91" fill="#ff0030"/><rect x="275" y="91" fill="#ff002e"/><rect x="276" y="91" fill="#ff002c"/><rect x="277" y="91" fill="#ff002a"/><rect x="278" y="91" fill="#ff0028"/><rect x="279" y="91" fill="#ff0026"/><rect x="280" y="91" fill="#ff0024"/><rect x="281" y="91" fill="#ff0023"/><rect x="282" y="91" fill="#ff0021"/><rect x="202" y="92" fill="#0068ff"/><rect x="203" y="92" fill="#0067ff"/><rect x="204" y="92" fill="#0066ff"/><rect x="205" y="92" fill="#0064ff"/><rect x="206" y="92" fill="#0063ff"/><rect x="207" y="92" fill="#0061ff"/><rect x="208" y="92" fill="#0060ff"/><rect x="209" y="92" fill="#005eff"/><rect x="210" y="92" fill="#005dff"/><rect x="211" y="92" fill="#005bff"/><rect x="212" y="92" fill="#0059ff"/><rect x="213" y="92" fill="#0058ff"/><rect x="214" y="92" fill="#0056ff"/><rect x="215" y="92" fill="#0054ff"/><rect x="216" y="92" fill="#0053ff"/><rect x="217" y="92" fill="#0051ff"/><rect x="218" y="92" fill="#004fff"/><rect x="219" y="92" fill="#004dff"/><rect x="220" y="92" fill="#034bff"/><rect x="221" y="92" fill="#0d49ff"/><rect x="222" y="92" fill="#1847ff"/><rect x="223" y="92" fill="#2345ff"/><rect x="224" y="92" fill="#2e43ff"/><rect x="225" y="92" fill="#3941ff"/><rect x="226" y="92" fill="#443fff"/><rect x="227" y="92" fill="#503cff"/><rect x="228" y="92" fill="#5c3aff"/><rect x="229" y="92" fill="#6838ff"/><rect x="230" y="92" fill="#7535ff"/><rect x="231" y="92" fill="#8233ff"/><rect x="232" y="92" fill="#8f30ff"/><rect x="233" y="92" fill="#9d2eff"/><rect x="234" y="92" fill="#ab2bff"/><rect x="235" y="92" fill="#b928ff"/><rect x="236" y="92" fill="#c826ff"/><rect x="237" y="92" fill="#d723ff"/><rect x="238" y="92" fill="#e620ff"/><rect x="239" y="92" fill="#f61dff"/><rect x="240" y="92" fill="#ff19f8"/><rect x="241" y="92" fill="#ff15e9"/><rect x="242" y="92" fill="#ff10dc"/><rect x="243" y="92" fill="#ff0dcf"/><rect x="244" y="92" fill="#ff09c4"/><rect x="245" y="92" fill="#ff06b9"/><rect x="246" y="92" fill="#ff03b0"/><rect x="247" y="92" fill="#ff01a7"/><rect x="248" y="92" fill="#ff009f"/><rect x="249" y="92" fill="#ff0097"/><rect x="250" y="92" fill="#ff0090"/><rect x="251" y="92" fill="#ff0089"/><rect x="252" y="92" fill="#ff0082"/><rect x="253" y="92" fill="#ff007c"/><rect x="254" y="92" fill="#ff0077"/><rect x="255" y="92" fill="#ff0072"/><rect x="256" y="92" fill="#ff006d"/><rect x="257" y="92" fill="#ff0068"/><rect x="258" y="92" fill="#ff0063"/><rect x="259" y="92" fill="#ff005f"/><rect x="260" y="92" fill="#ff005b"/><rect x="261" y="92" fill="#ff0057"/><rect x="262" y="92" fill="#ff0053"/><rect x="263" y="92" fill="#ff0050"/><rect x="264" y="92" fill="#ff004d"/><rect x="265" y="92" fill="#ff0049"/><rect x="266" y="92" fill="#ff0046"/><rect x="267" y="92" fill="#ff0043"/><rect x="268" y="92" fill="#ff0041"/><rect x="269" y="92" fill="#ff003e"/><rect x="270" y="92" fill="#ff003b"/><rect x="271" y="92" fill="#ff0039"/><rect x="272" y="92" fill="#ff0036"/><rect x="273" y="92" fill="#ff0034"/><rect x="274" y="92" fill="#ff0032"/><rect x="275" y="92" fill="#ff0030"/><rect x="276" y="92" fill="#ff002e"/><rect x="277" y="92" fill="#ff002c"/><rect x="278" y="92" fill="#ff002a"/><rect x="279" y="92" fill="#ff0028"/><rect x="280" y="92" fill="#ff0026"/><rect x="202" y="93" fill="#0062ff"/><rect x="203" y="93" fill="#0060ff"/><rect x="204" y="93" fill="#005fff"/><rect x="205" y="93" fill="#005dff"/><rect x="206" y="93" fill="#005cff"/><rect x="207" y="93" fill="#005aff"/><rect x="208" y="93" fill="#0059ff"/><rect x="209" y="93" fill="#0057ff"/><rect x="210" y="93" fill="#0055ff"/><rect x="211" y="93" fill="#0054ff"/><rect x="212" y="93" fill="#0052ff"/><rect x="213" y="93" fill="#0050ff"/><rect x="214" y="93" fill="#004fff"/><rect x="215" y="93" fill="#004dff"/><rect x="216" y="93" fill="#004bff"/><rect x="217" y="93" fill="#0049ff"/><rect x="218" y="93" fill="#0047ff"/><rect x="219" y="93" fill="#0045ff"/><rect x="220" y="93" fill="#0743ff"/><rect x="221" y="93" fill="#1141ff"/><rect x="222" y="93" fill="#1b3fff"/><rect x="223" y="93" fill="#263dff"/><rect x="224" y="93" fill="#313bff"/><rect x="225" y="93" fill="#3c39ff"/><rect x="226" y="93" fill="#4737ff"/><rect x="227" y="93" fill="#5334ff"/><rect x="228" y="93" fill="#5e32ff"/><rect x="229" y="93" fill="#6b30ff"/><rect x="230" y="93" fill="#772dff"/><rect x="231" y="93" fill="#842bff"/><rect x="232" y="93" fill="#9128ff"/><rect x="233" y="93" fill="#9e25ff"/><rect x="234" y="93" fill="#ac23ff"/><rect x="235" y="93" fill="#ba20ff"/><rect x="236" y="93" fill="#c81dff"/><rect x="237" y="93" fill="#d71aff"/><rect x="238" y="93" fill="#e617ff"/><rect x="239" y="93" fill="#f514ff"/><rect x="240" y="93" fill="#ff10f9"/><rect x="241" y="93" fill="#ff0dea"/><rect x="242" y="93" fill="#ff09dd"/><rect x="243" y="93" fill="#ff06d1"/><rect x="244" y="93" fill="#ff03c6"/><rect x="245" y="93" fill="#ff00bb"/><rect x="246" y="93" fill="#ff00b2"/><rect x="247" y="93" fill="#ff00a9"/><rect x="248" y="93" fill="#ff00a0"/><rect x="249" y="93" fill="#ff0099"/><rect x="250" y="93" fill="#ff0092"/><rect x="251" y="93" fill="#ff008b"/><rect x="252" y="93" fill="#ff0084"/><rect x="253" y="93" fill="#ff007e"/><rect x="254" y="93" fill="#ff0079"/><rect x="255" y="93" fill="#ff0074"/><rect x="256" y="93" fill="#ff006f"/><rect x="257" y="93" fill="#ff006a"/><rect x="258" y="93" fill="#ff0065"/><rect x="259" y="93" fill="#ff0061"/><rect x="260" y="93" fill="#ff005d"/><rect x="261" y="93" fill="#ff0059"/><rect x="262" y="93" fill="#ff0055"/><rect x="263" y="93" fill="#ff0052"/><rect x="264" y="93" fill="#ff004f"/><rect x="265" y="93" fill="#ff004b"/><rect x="266" y="93" fill="#ff0048"/><rect x="267" y="93" fill="#ff0045"/><rect x="268" y="93" fill="#ff0042"/><rect x="269" y="93" fill="#ff0040"/><rect x="270" y="93" fill="#ff003d"/><rect x="271" y="93" fill="#ff003b"/><rect x="272" y="93" fill="#ff0038"/><rect x="273" y="93" fill="#ff0036"/><rect x="274" y="93" fill="#ff0034"/><rect x="275" y="93" fill="#ff0031"/><rect x="276" y="93" fill="#ff002f"/><rect x="277" y="93" fill="#ff002d"/><rect x="203" y="94" fill="#0059ff"/><rect x="204" y="94" fill="#0058ff"/><rect x="205" y="94" fill="#0056ff"/><rect x="206" y="94" fill="#0055ff"/><rect x="207" y="94" fill="#0053ff"/><rect x="208" y="94" fill="#0052ff"/><rect x="209" y="94" fill="#0050ff"/><rect x="210" y="94" fill="#004eff"/><rect x="211" y="94" fill="#004dff"/><rect x="212" y="94" fill="#004bff"/><rect x="213" y="94" fill="#0049ff"/><rect x="214" y="94" fill="#0047ff"/><rect x="215" y="94" fill="#0046ff"/><rect x="216" y="94" fill="#0044ff"/><rect x="217" y="94" fill="#0042ff"/><rect x="218" y="94" fill="#0040ff"/><rect x="219" y="94" fill="#003eff"/><rect x="220" y="94" fill="#0a3cff"/><rect x="221" y="94" fill="#143aff"/><rect x="222" y="94" fill="#1e38ff"/><rect x="223" y="94" fill="#2936ff"/><rect x="224" y="94" fill="#3333ff"/><rect x="225" y="94" fill="#3e31ff"/><rect x="226" y="94" fill="#4a2fff"/><rect x="227" y="94" fill="#552cff"/><rect x="228" y="94" fill="#612aff"/><rect x="229" y="94" fill="#6c28ff"/><rect x="230" y="94" fill="#7925ff"/><rect x="231" y="94" fill="#8523ff"/><rect x="232" y="94" fill="#9220ff"/><rect x="233" y="94" fill="#9f1dff"/><rect x="234" y="94" fill="#ac1bff"/><rect x="235" y="94" fill="#ba18ff"/><rect x="236" y="94" fill="#c815ff"/><rect x="237" y="94" fill="#d712ff"/><rect x="238" y="94" fill="#e50fff"/><rect x="239" y="94" fill="#f40cff"/><rect x="240" y="94" fill="#ff08fa"/><rect x="241" y="94" fill="#ff05ec"/><rect x="242" y="94" fill="#ff02de"/><rect x="243" y="94" fill="#ff00d2"/><rect x="244" y="94" fill="#ff00c7"/><rect x="245" y="94" fill="#ff00bd"/><rect x="246" y="94" fill="#ff00b3"/><rect x="247" y="94" fill="#ff00ab"/><rect x="248" y="94" fill="#ff00a2"/><rect x="249" y="94" fill="#ff009b"/><rect x="250" y="94" fill="#ff0093"/><rect x="251" y="94" fill="#ff008d"/><rect x="252" y="94" fill="#ff0086"/><rect x="253" y="94" fill="#ff0080"/><rect x="254" y="94" fill="#ff007b"/><rect x="255" y="94" fill="#ff0076"/><rect x="256" y="94" fill="#ff0071"/><rect x="257" y="94" fill="#ff006c"/><rect x="258" y="94" fill="#ff0067"/><rect x="259" y="94" fill="#ff0063"/><rect x="260" y="94" fill="#ff005f"/><rect x="261" y="94" fill="#ff005b"/><rect x="262" y="94" fill="#ff0057"/><rect x="263" y="94" fill="#ff0054"/><rect x="264" y="94" fill="#ff0050"/><rect x="265" y="94" fill="#ff004d"/><rect x="266" y="94" fill="#ff004a"/><rect x="267" y="94" fill="#ff0047"/><rect x="268" y="94" fill="#ff0044"/><rect x="269" y="94" fill="#ff0042"/><rect x="270" y="94" fill="#ff003f"/><rect x="271" y="94" fill="#ff003c"/><rect x="272" y="94" fill="#ff003a"/><rect x="273" y="94" fill="#ff0038"/><rect x="274" y="94" fill="#ff0035"/><rect x="203" y="95" fill="#0053ff"/><rect x="204" y="95" fill="#0051ff"/><rect x="205" y="95" fill="#0050ff"/><rect x="206" y="95" fill="#004eff"/><rect x="207" y="95" fill="#004cff"/><rect x="208" y="95" fill="#004bff"/><rect x="209" y="95" fill="#0049ff"/><rect x="210" y="95" fill="#0047ff"/><rect x="211" y="95" fill="#0046ff"/><rect x="212" y="95" fill="#0044ff"/><rect x="213" y="95" fill="#0042ff"/><rect x="214" y="95" fill="#0040ff"/><rect x="215" y="95" fill="#003eff"/><rect x="216" y="95" fill="#003dff"/><rect x="217" y="95" fill="#003bff"/><rect x="218" y="95" fill="#0039ff"/><rect x="219" y="95" fill="#0437ff"/><rect x="220" y="95" fill="#0d35ff"/><rect x="221" y="95" fill="#1733ff"/><rect x="222" y="95" fill="#2130ff"/><rect x="223" y="95" fill="#2c2eff"/><rect x="224" y="95" fill="#362cff"/><rect x="225" y="95" fill="#412aff"/><rect x="226" y="95" fill="#4c27ff"/><rect x="227" y="95" fill="#5725ff"/><rect x="228" y="95" fill="#6323ff"/><rect x="229" y="95" fill="#6e20ff"/><rect x="230" y="95" fill="#7a1eff"/><rect x="231" y="95" fill="#871bff"/><rect x="232" y="95" fill="#9318ff"/><rect x="233" y="95" fill="#a016ff"/><rect x="234" y="95" fill="#ad13ff"/><rect x="235" y="95" fill="#bb10ff"/><rect x="236" y="95" fill="#c80dff"/><rect x="237" y="95" fill="#d60aff"/><rect x="238" y="95" fill="#e507ff"/><rect x="239" y="95" fill="#f404ff"/><rect x="240" y="95" fill="#ff01fb"/><rect x="241" y="95" fill="#ff00ed"/><rect x="242" y="95" fill="#ff00e0"/><rect x="243" y="95" fill="#ff00d4"/><rect x="244" y="95" fill="#ff00c9"/><rect x="245" y="95" fill="#ff00bf"/><rect x="246" y="95" fill="#ff00b5"/><rect x="247" y="95" fill="#ff00ac"/><rect x="248" y="95" fill="#ff00a4"/><rect x="249" y="95" fill="#ff009d"/><rect x="250" y="95" fill="#ff0095"/><rect x="251" y="95" fill="#ff008f"/><rect x="252" y="95" fill="#ff0088"/><rect x="253" y="95" fill="#ff0082"/><rect x="254" y="95" fill="#ff007d"/><rect x="255" y="95" fill="#ff0077"/><rect x="256" y="95" fill="#ff0072"/><rect x="257" y="95" fill="#ff006e"/><rect x="258" y="95" fill="#ff0069"/><rect x="259" y="95" fill="#ff0065"/><rect x="260" y="95" fill="#ff0061"/><rect x="261" y="95" fill="#ff005d"/><rect x="262" y="95" fill="#ff0059"/><rect x="263" y="95" fill="#ff0056"/><rect x="264" y="95" fill="#ff0052"/><rect x="265" y="95" fill="#ff004f"/><rect x="266" y="95" fill="#ff004c"/><rect x="267" y="95" fill="#ff0049"/><rect x="268" y="95" fill="#ff0046"/><rect x="269" y="95" fill="#ff0043"/><rect x="270" y="95" fill="#ff0041"/><rect x="271" y="95" fill="#ff003e"/><rect x="204" y="96" fill="#004bff"/><rect x="205" y="96" fill="#0049ff"/><rect x="206" y="96" fill="#0048ff"/><rect x="207" y="96" fill="#0046ff"/><rect x="208" y="96" fill="#0044ff"/><rect x="209" y="96" fill="#0043ff"/><rect x="210" y="96" fill="#0041ff"/><rect x="211" y="96" fill="#003fff"/><rect x="212" y="96" fill="#003dff"/><rect x="213" y="96" fill="#003bff"/><rect x="214" y="96" fill="#003aff"/><rect x="215" y="96" fill="#0038ff"/><rect x="216" y="96" fill="#0036ff"/><rect x="217" y="96" fill="#0034ff"/><rect x="218" y="96" fill="#0032ff"/><rect x="219" y="96" fill="#0730ff"/><rect x="220" y="96" fill="#112eff"/><rect x="221" y="96" fill="#1a2bff"/><rect x="222" y="96" fill="#2429ff"/><rect x="223" y="96" fill="#2f27ff"/><rect x="224" y="96" fill="#3925ff"/><rect x="225" y="96" fill="#4322ff"/><rect x="226" y="96" fill="#4e20ff"/><rect x="227" y="96" fill="#591eff"/><rect x="228" y="96" fill="#651bff"/><rect x="229" y="96" fill="#7019ff"/><rect x="230" y="96" fill="#7c16ff"/><rect x="231" y="96" fill="#8814ff"/><rect x="232" y="96" fill="#9411ff"/><rect x="233" y="96" fill="#a10eff"/><rect x="234" y="96" fill="#ae0bff"/><rect x="235" y="96" fill="#bb08ff"/><rect x="236" y="96" fill="#c905ff"/><rect x="237" y="96" fill="#d602ff"/><rect x="238" y="96" fill="#e500ff"/><rect x="239" y="96" fill="#f300ff"/><rect x="240" y="96" fill="#ff00fc"/><rect x="241" y="96" fill="#ff00ee"/><rect x="242" y="96" fill="#ff00e1"/><rect x="243" y="96" fill="#ff00d5"/><rect x="244" y="96" fill="#ff00ca"/><rect x="245" y="96" fill="#ff00c0"/><rect x="246" y="96" fill="#ff00b7"/><rect x="247" y="96" fill="#ff00ae"/><rect x="248" y="96" fill="#ff00a6"/><rect x="249" y="96" fill="#ff009e"/><rect x="250" y="96" fill="#ff0097"/><rect x="251" y="96" fill="#ff0091"/><rect x="252" y="96" fill="#ff008a"/><rect x="253" y="96" fill="#ff0084"/><rect x="254" y="96" fill="#ff007f"/><rect x="255" y="96" fill="#ff0079"/><rect x="256" y="96" fill="#ff0074"/><rect x="257" y="96" fill="#ff0070"/><rect x="258" y="96" fill="#ff006b"/><rect x="259" y="96" fill="#ff0067"/><rect x="260" y="96" fill="#ff0063"/><rect x="261" y="96" fill="#ff005f"/><rect x="262" y="96" fill="#ff005b"/><rect x="263" y="96" fill="#ff0057"/><rect x="264" y="96" fill="#ff0054"/><rect x="265" y="96" fill="#ff0051"/><rect x="266" y="96" fill="#ff004e"/><rect x="267" y="96" fill="#ff004b"/><rect x="268" y="96" fill="#ff0048"/><rect x="204" y="97" fill="#0044ff"/><rect x="205" y="97" fill="#0043ff"/><rect x="206" y="97" fill="#0041ff"/><rect x="207" y="97" fill="#0040ff"/><rect x="208" y="97" fill="#003eff"/><rect x="209" y="97" fill="#003cff"/><rect x="210" y="97" fill="#003aff"/><rect x="211" y="97" fill="#0039ff"/><rect x="212" y="97" fill="#0037ff"/><rect x="213" y="97" fill="#0035ff"/><rect x="214" y="97" fill="#0033ff"/><rect x="215" y="97" fill="#0031ff"/><rect x="216" y="97" fill="#002fff"/><rect x="217" y="97" fill="#002dff"/><rect x="218" y="97" fill="#012bff"/><rect x="219" y="97" fill="#0a29ff"/><rect x="220" y="97" fill="#1427ff"/><rect x="221" y="97" fill="#1d25ff"/><rect x="222" y="97" fill="#2722ff"/><rect x="223" y="97" fill="#3120ff"/><rect x="224" y="97" fill="#3c1eff"/><rect x="225" y="97" fill="#461cff"/><rect x="226" y="97" fill="#5119ff"/><rect x="227" y="97" fill="#5b17ff"/><rect x="228" y="97" fill="#6714ff"/><rect x="229" y="97" fill="#7212ff"/><rect x="230" y="97" fill="#7d0fff"/><rect x="231" y="97" fill="#890cff"/><rect x="232" y="97" fill="#950aff"/><rect x="233" y="97" fill="#a207ff"/><rect x="234" y="97" fill="#ae04ff"/><rect x="235" y="97" fill="#bb01ff"/><rect x="236" y="97" fill="#c900ff"/><rect x="237" y="97" fill="#d600ff"/><rect x="238" y="97" fill="#e400ff"/><rect x="239" y="97" fill="#f200ff"/><rect x="240" y="97" fill="#ff00fd"/><rect x="241" y="97" fill="#ff00ef"/><rect x="242" y="97" fill="#ff00e2"/><rect x="243" y="97" fill="#ff00d7"/><rect x="244" y="97" fill="#ff00cc"/><rect x="245" y="97" fill="#ff00c2"/><rect x="246" y="97" fill="#ff00b9"/><rect x="247" y="97" fill="#ff00b0"/><rect x="248" y="97" fill="#ff00a8"/><rect x="249" y="97" fill="#ff00a0"/><rect x="250" y="97" fill="#ff0099"/><rect x="251" y="97" fill="#ff0092"/><rect x="252" y="97" fill="#ff008c"/><rect x="253" y="97" fill="#ff0086"/><rect x="254" y="97" fill="#ff0081"/><rect x="255" y="97" fill="#ff007b"/><rect x="256" y="97" fill="#ff0076"/><rect x="257" y="97" fill="#ff0071"/><rect x="258" y="97" fill="#ff006d"/><rect x="259" y="97" fill="#ff0069"/><rect x="260" y="97" fill="#ff0064"/><rect x="261" y="97" fill="#ff0061"/><rect x="262" y="97" fill="#ff005d"/><rect x="263" y="97" fill="#ff0059"/><rect x="264" y="97" fill="#ff0056"/><rect x="265" y="97" fill="#ff0053"/><rect x="205" y="98" fill="#003dff"/><rect x="206" y="98" fill="#003bff"/><rect x="207" y="98" fill="#0039ff"/><rect x="208" y="98" fill="#0038ff"/><rect x="209" y="98" fill="#0036ff"/><rect x="210" y="98" fill="#0034ff"/><rect x="211" y="98" fill="#0032ff"/><rect x="212" y="98" fill="#0030ff"/><rect x="213" y="98" fill="#002fff"/><rect x="214" y="98" fill="#002dff"/><rect x="215" y="98" fill="#002bff"/><rect x="216" y="98" fill="#0029ff"/><rect x="217" y="98" fill="#0027ff"/><rect x="218" y="98" fill="#0425ff"/><rect x="219" y="98" fill="#0e22ff"/><rect x="220" y="98" fill="#1720ff"/><rect x="221" y="98" fill="#201eff"/><rect x="222" y="98" fill="#2a1cff"/><rect x="223" y="98" fill="#341aff"/><rect x="224" y="98" fill="#3e17ff"/><rect x="225" y="98" fill="#4815ff"/><rect x="226" y="98" fill="#5312ff"/><rect x="227" y="98" fill="#5d10ff"/><rect x="228" y="98" fill="#680dff"/><rect x="229" y="98" fill="#740bff"/><rect x="230" y="98" fill="#7f08ff"/><rect x="231" y="98" fill="#8b06ff"/><rect x="232" y="98" fill="#9703ff"/><rect x="233" y="98" fill="#a300ff"/><rect x="234" y="98" fill="#af00ff"/><rect x="235" y="98" fill="#bc00ff"/><rect x="236" y="98" fill="#c900ff"/><rect x="237" y="98" fill="#d600ff"/><rect x="238" y="98" fill="#e400ff"/><rect x="239" y="98" fill="#f200ff"/><rect x="240" y="98" fill="#ff00fe"/><rect x="241" y="98" fill="#ff00f0"/><rect x="242" y="98" fill="#ff00e4"/><rect x="243" y="98" fill="#ff00d8"/><rect x="244" y="98" fill="#ff00cd"/><rect x="245" y="98" fill="#ff00c3"/><rect x="246" y="98" fill="#ff00ba"/><rect x="247" y="98" fill="#ff00b1"/><rect x="248" y="98" fill="#ff00a9"/><rect x="249" y="98" fill="#ff00a2"/><rect x="250" y="98" fill="#ff009b"/><rect x="251" y="98" fill="#ff0094"/><rect x="252" y="98" fill="#ff008e"/><rect x="253" y="98" fill="#ff0088"/><rect x="254" y="98" fill="#ff0082"/><rect x="255" y="98" fill="#ff007d"/><rect x="256" y="98" fill="#ff0078"/><rect x="257" y="98" fill="#ff0073"/><rect x="258" y="98" fill="#ff006f"/><rect x="259" y="98" fill="#ff006a"/><rect x="260" y="98" fill="#ff0066"/><rect x="261" y="98" fill="#ff0062"/><rect x="262" y="98" fill="#ff005f"/><rect x="263" y="98" fill="#ff005b"/><rect x="205" y="99" fill="#0037ff"/><rect x="206" y="99" fill="#0035ff"/><rect x="207" y="99" fill="#0033ff"/><rect x="208" y="99" fill="#0032ff"/><rect x="209" y="99" fill="#0030ff"/><rect x="210" y="99" fill="#002eff"/><rect x="211" y="99" fill="#002cff"/><rect x="212" y="99" fill="#002aff"/><rect x="213" y="99" fill="#0028ff"/><rect x="214" y="99" fill="#0026ff"/><rect x="215" y="99" fill="#0024ff"/><rect x="216" y="99" fill="#0022ff"/><rect x="217" y="99" fill="#0020ff"/><rect x="218" y="99" fill="#081eff"/><rect x="219" y="99" fill="#111cff"/><rect x="220" y="99" fill="#1a1aff"/><rect x="221" y="99" fill="#2318ff"/><rect x="222" y="99" fill="#2d15ff"/><rect x="223" y="99" fill="#3613ff"/><rect x="224" y="99" fill="#4011ff"/><rect x="225" y="99" fill="#4b0eff"/><rect x="226" y="99" fill="#550cff"/><rect x="227" y="99" fill="#5f09ff"/><rect x="228" y="99" fill="#6a07ff"/><rect x="229" y="99" fill="#7504ff"/><rect x="230" y="99" fill="#8002ff"/><rect x="231" y="99" fill="#8c00ff"/><rect x="232" y="99" fill="#9800ff"/><rect x="233" y="99" fill="#a400ff"/><rect x="234" y="99" fill="#b000ff"/><rect x="235" y="99" fill="#bc00ff"/><rect x="236" y="99" fill="#c900ff"/><rect x="237" y="99" fill="#d600ff"/><rect x="238" y="99" fill="#e300ff"/><rect x="239" y="99" fill="#f100ff"/><rect x="240" y="99" fill="#ff00ff"/><rect x="241" y="99" fill="#ff00f1"/><rect x="242" y="99" fill="#ff00e5"/><rect x="243" y="99" fill="#ff00d9"/><rect x="244" y="99" fill="#ff00cf"/><rect x="245" y="99" fill="#ff00c5"/><rect x="246" y="99" fill="#ff00bc"/><rect x="247" y="99" fill="#ff00b3"/><rect x="248" y="99" fill="#ff00ab"/><rect x="249" y="99" fill="#ff00a4"/><rect x="250" y="99" fill="#ff009d"/><rect x="251" y="99" fill="#ff0096"/><rect x="252" y="99" fill="#ff0090"/><rect x="253" y="99" fill="#ff008a"/><rect x="254" y="99" fill="#ff0084"/><rect x="255" y="99" fill="#ff007f"/><rect x="256" y="99" fill="#ff007a"/><rect x="257" y="99" fill="#ff0075"/><rect x="258" y="99" fill="#ff0070"/><rect x="259" y="99" fill="#ff006c"/><rect x="260" y="99" fill="#ff0068"/><rect x="206" y="100" fill="#002fff"/><rect x="207" y="100" fill="#002eff"/><rect x="208" y="100" fill="#002cff"/><rect x="209" y="100" fill="#002aff"/><rect x="210" y="100" fill="#0028ff"/><rect x="211" y="100" fill="#0026ff"/><rect x="212" y="100" fill="#0024ff"/><rect x="213" y="100" fill="#0022ff"/><rect x="214" y="100" fill="#0020ff"/><rect x="215" y="100" fill="#001eff"/><rect x="216" y="100" fill="#001cff"/><rect x="217" y="100" fill="#021aff"/><rect x="218" y="100" fill="#0b18ff"/><rect x="219" y="100" fill="#1416ff"/><rect x="220" y="100" fill="#1d14ff"/><rect x="221" y="100" fill="#2612ff"/><rect x="222" y="100" fill="#2f0fff"/><rect x="223" y="100" fill="#390dff"/><rect x="224" y="100" fill="#430bff"/><rect x="225" y="100" fill="#4d08ff"/><rect x="226" y="100" fill="#5706ff"/><rect x="227" y="100" fill="#6103ff"/><rect x="228" y="100" fill="#6c01ff"/><rect x="229" y="100" fill="#7700ff"/><rect x="230" y="100" fill="#8200ff"/><rect x="231" y="100" fill="#8d00ff"/><rect x="232" y="100" fill="#9900ff"/><rect x="233" y="100" fill="#a400ff"/><rect x="234" y="100" fill="#b000ff"/><rect x="235" y="100" fill="#bd00ff"/><rect x="236" y="100" fill="#c900ff"/><rect x="237" y="100" fill="#d600ff"/><rect x="238" y="100" fill="#e300ff"/><rect x="239" y="100" fill="#f100ff"/><rect x="240" y="100" fill="#fe00ff"/><rect x="241" y="100" fill="#ff00f2"/><rect x="242" y="100" fill="#ff00e6"/><rect x="243" y="100" fill="#ff00db"/><rect x="244" y="100" fill="#ff00d0"/><rect x="245" y="100" fill="#ff00c6"/><rect x="246" y="100" fill="#ff00bd"/><rect x="247" y="100" fill="#ff00b5"/><rect x="248" y="100" fill="#ff00ad"/><rect x="249" y="100" fill="#ff00a5"/><rect x="250" y="100" fill="#ff009e"/><rect x="251" y="100" fill="#ff0098"/><rect x="252" y="100" fill="#ff0091"/><rect x="253" y="100" fill="#ff008b"/><rect x="254" y="100" fill="#ff0086"/><rect x="255" y="100" fill="#ff0081"/><rect x="256" y="100" fill="#ff007c"/><rect x="257" y="100" fill="#ff0077"/><rect x="206" y="101" fill="#002aff"/><rect x="207" y="101" fill="#0028ff"/><rect x="208" y="101" fill="#0026ff"/><rect x="209" y="101" fill="#0024ff"/><rect x="210" y="101" fill="#0022ff"/><rect x="211" y="101" fill="#0020ff"/><rect x="212" y="101" fill="#001fff"/><rect x="213" y="101" fill="#001dff"/><rect x="214" y="101" fill="#001bff"/><rect x="215" y="101" fill="#0019ff"/><rect x="216" y="101" fill="#0016ff"/><rect x="217" y="101" fill="#0514ff"/><rect x="218" y="101" fill="#0e12ff"/><rect x="219" y="101" fill="#1610ff"/><rect x="220" y="101" fill="#1f0eff"/><rect x="221" y="101" fill="#290cff"/><rect x="222" y="101" fill="#3209ff"/><rect x="223" y="101" fill="#3b07ff"/><rect x="224" y="101" fill="#4504ff"/><rect x="225" y="101" fill="#4f02ff"/><rect x="226" y="101" fill="#5900ff"/><rect x="227" y="101" fill="#6300ff"/><rect x="228" y="101" fill="#6e00ff"/><rect x="229" y="101" fill="#7800ff"/><rect x="230" y="101" fill="#8300ff"/><rect x="231" y="101" fill="#8e00ff"/><rect x="232" y="101" fill="#9a00ff"/><rect x="233" y="101" fill="#a500ff"/><rect x="234" y="101" fill="#b100ff"/><rect x="235" y="101" fill="#bd00ff"/><rect x="236" y="101" fill="#c900ff"/><rect x="237" y="101" fill="#d600ff"/><rect x="238" y="101" fill="#e300ff"/><rect x="239" y="101" fill="#f000ff"/><rect x="240" y="101" fill="#fd00ff"/><rect x="241" y="101" fill="#ff00f3"/><rect x="242" y="101" fill="#ff00e7"/><rect x="243" y="101" fill="#ff00dc"/><rect x="244" y="101" fill="#ff00d1"/><rect x="245" y="101" fill="#ff00c8"/><rect x="246" y="101" fill="#ff00bf"/><rect x="247" y="101" fill="#ff00b6"/><rect x="248" y="101" fill="#ff00ae"/><rect x="249" y="101" fill="#ff00a7"/><rect x="250" y="101" fill="#ff00a0"/><rect x="251" y="101" fill="#ff0099"/><rect x="252" y="101" fill="#ff0093"/><rect x="253" y="101" fill="#ff008d"/><rect x="254" y="101" fill="#ff0088"/><rect x="207" y="102" fill="#0022ff"/><rect x="208" y="102" fill="#0020ff"/><rect x="209" y="102" fill="#001fff"/><rect x="210" y="102" fill="#001dff"/><rect x="211" y="102" fill="#001bff"/><rect x="212" y="102" fill="#0019ff"/><rect x="213" y="102" fill="#0017ff"/><rect x="214" y="102" fill="#0015ff"/><rect x="215" y="102" fill="#0013ff"/><rect x="216" y="102" fill="#0011ff"/><rect x="217" y="102" fill="#080fff"/><rect x="218" y="102" fill="#110cff"/><rect x="219" y="102" fill="#190aff"/><rect x="220" y="102" fill="#2208ff"/><rect x="221" y="102" fill="#2b06ff"/><rect x="222" y="102" fill="#3403ff"/><rect x="223" y="102" fill="#3e01ff"/><rect x="224" y="102" fill="#4700ff"/><rect x="225" y="102" fill="#5100ff"/><rect x="226" y="102" fill="#5b00ff"/><rect x="227" y="102" fill="#6500ff"/><rect x="228" y="102" fill="#6f00ff"/><rect x="229" y="102" fill="#7a00ff"/><rect x="230" y="102" fill="#8400ff"/><rect x="231" y="102" fill="#8f00ff"/><rect x="232" y="102" fill="#9b00ff"/><rect x="233" y="102" fill="#a600ff"/><rect x="234" y="102" fill="#b200ff"/><rect x="235" y="102" fill="#bd00ff"/><rect x="236" y="102" fill="#ca00ff"/><rect x="237" y="102" fill="#d600ff"/><rect x="238" y="102" fill="#e300ff"/><rect x="239" y="102" fill="#ef00ff"/><rect x="240" y="102" fill="#fd00ff"/><rect x="241" y="102" fill="#ff00f4"/><rect x="242" y="102" fill="#ff00e8"/><rect x="243" y="102" fill="#ff00dd"/><rect x="244" y="102" fill="#ff00d3"/><rect x="245" y="102" fill="#ff00c9"/><rect x="246" y="102" fill="#ff00c0"/><rect x="247" y="102" fill="#ff00b8"/><rect x="248" y="102" fill="#ff00b0"/><rect x="249" y="102" fill="#ff00a8"/><rect x="250" y="102" fill="#ff00a1"/><rect x="251" y="102" fill="#ff009b"/><rect x="207" y="103" fill="#001dff"/><rect x="208" y="103" fill="#001bff"/><rect x="209" y="103" fill="#0019ff"/><rect x="210" y="103" fill="#0017ff"/><rect x="211" y="103" fill="#0015ff"/><rect x="212" y="103" fill="#0013ff"/><rect x="213" y="103" fill="#0011ff"/><rect x="214" y="103" fill="#000fff"/><rect x="215" y="103" fill="#000dff"/><rect x="216" y="103" fill="#030bff"/><rect x="217" y="103" fill="#0b09ff"/><rect x="218" y="103" fill="#1307ff"/><rect x="219" y="103" fill="#1c05ff"/><rect x="220" y="103" fill="#2502ff"/><rect x="221" y="103" fill="#2e00ff"/><rect x="222" y="103" fill="#3700ff"/><rect x="223" y="103" fill="#4000ff"/><rect x="224" y="103" fill="#4900ff"/><rect x="225" y="103" fill="#5300ff"/><rect x="226" y="103" fill="#5d00ff"/><rect x="227" y="103" fill="#6700ff"/><rect x="228" y="103" fill="#7100ff"/><rect x="229" y="103" fill="#7b00ff"/><rect x="230" y="103" fill="#8600ff"/><rect x="231" y="103" fill="#9000ff"/><rect x="232" y="103" fill="#9b00ff"/><rect x="233" y="103" fill="#a700ff"/><rect x="234" y="103" fill="#b200ff"/><rect x="235" y="103" fill="#be00ff"/><rect x="236" y="103" fill="#ca00ff"/><rect x="237" y="103" fill="#d600ff"/><rect x="238" y="103" fill="#e200ff"/><rect x="239" y="103" fill="#ef00ff"/><rect x="240" y="103" fill="#fc00ff"/><rect x="241" y="103" fill="#ff00f5"/><rect x="242" y="103" fill="#ff00e9"/><rect x="243" y="103" fill="#ff00de"/><rect x="244" y="103" fill="#ff00d4"/><rect x="245" y="103" fill="#ff00ca"/><rect x="246" y="103" fill="#ff00c2"/><rect x="247" y="103" fill="#ff00b9"/><rect x="248" y="103" fill="#ff00b1"/><rect x="208" y="104" fill="#0016ff"/><rect x="209" y="104" fill="#0014ff"/><rect x="210" y="104" fill="#0012ff"/><rect x="211" y="104" fill="#0010ff"/><rect x="212" y="104" fill="#000eff"/><rect x="213" y="104" fill="#000cff"/><rect x="214" y="104" fill="#000aff"/><rect x="215" y="104" fill="#0008ff"/><rect x="216" y="104" fill="#0606ff"/><rect x="217" y="104" fill="#0e04ff"/><rect x="218" y="104" fill="#1601ff"/><rect x="219" y="104" fill="#1f00ff"/><rect x="220" y="104" fill="#2700ff"/><rect x="221" y="104" fill="#3000ff"/><rect x="222" y="104" fill="#3900ff"/><rect x="223" y="104" fill="#4200ff"/><rect x="224" y="104" fill="#4b00ff"/><rect x="225" y="104" fill="#5500ff"/><rect x="226" y="104" fill="#5f00ff"/><rect x="227" y="104" fill="#6800ff"/><rect x="228" y="104" fill="#7200ff"/><rect x="229" y="104" fill="#7d00ff"/><rect x="230" y="104" fill="#8700ff"/><rect x="231" y="104" fill="#9200ff"/><rect x="232" y="104" fill="#9c00ff"/><rect x="233" y="104" fill="#a700ff"/><rect x="234" y="104" fill="#b300ff"/><rect x="235" y="104" fill="#be00ff"/><rect x="236" y="104" fill="#ca00ff"/><rect x="237" y="104" fill="#d600ff"/><rect x="238" y="104" fill="#e200ff"/><rect x="239" y="104" fill="#ee00ff"/><rect x="240" y="104" fill="#fb00ff"/><rect x="241" y="104" fill="#ff00f6"/><rect x="242" y="104" fill="#ff00ea"/><rect x="243" y="104" fill="#ff00df"/><rect x="244" y="104" fill="#ff00d5"/><rect x="245" y="104" fill="#ff00cc"/><rect x="208" y="105" fill="#0011ff"/><rect x="209" y="105" fill="#000fff"/><rect x="210" y="105" fill="#000dff"/><rect x="211" y="105" fill="#000bff"/><rect x="212" y="105" fill="#0009ff"/><rect x="213" y="105" fill="#0007ff"/><rect x="214" y="105" fill="#0005ff"/><rect x="215" y="105" fill="#0003ff"/><rect x="216" y="105" fill="#0801ff"/><rect x="217" y="105" fill="#1100ff"/><rect x="218" y="105" fill="#1900ff"/><rect x="219" y="105" fill="#2100ff"/><rect x="220" y="105" fill="#2a00ff"/><rect x="221" y="105" fill="#3200ff"/><rect x="222" y="105" fill="#3b00ff"/><rect x="223" y="105" fill="#4400ff"/><rect x="224" y="105" fill="#4d00ff"/><rect x="225" y="105" fill="#5700ff"/><rect x="226" y="105" fill="#6000ff"/><rect x="227" y="105" fill="#6a00ff"/><rect x="228" y="105" fill="#7400ff"/><rect x="229" y="105" fill="#7e00ff"/><rect x="230" y="105" fill="#8800ff"/><rect x="231" y="105" fill="#9300ff"/><rect x="232" y="105" fill="#9d00ff"/><rect x="233" y="105" fill="#a800ff"/><rect x="234" y="105" fill="#b300ff"/><rect x="235" y="105" fill="#be00ff"/><rect x="236" y="105" fill="#ca00ff"/><rect x="237" y="105" fill="#d600ff"/><rect x="238" y="105" fill="#e200ff"/><rect x="239" y="105" fill="#ee00ff"/><rect x="240" y="105" fill="#fa00ff"/><rect x="241" y="105" fill="#ff00f7"/><rect x="242" y="105" fill="#ff00eb"/><rect x="243" y="105" fill="#ff00e1"/><rect x="209" y="106" fill="#000aff"/><rect x="210" y="106" fill="#0008ff"/><rect x="211" y="106" fill="#0006ff"/><rect x="212" y="106" fill="#0004ff"/><rect x="213" y="106" fill="#0002ff"/><rect x="214" y="106" fill="#0000ff"/><rect x="215" y="106" fill="#0300ff"/><rect x="216" y="106" fill="#0b00ff"/><rect x="217" y="106" fill="#1300ff"/><rect x="218" y="106" fill="#1b00ff"/><rect x="219" y="106" fill="#2400ff"/><rect x="220" y="106" fill="#2c00ff"/><rect x="221" y="106" fill="#3500ff"/><rect x="222" y="106" fill="#3d00ff"/><rect x="223" y="106" fill="#4600ff"/><rect x="224" y="106" fill="#4f00ff"/><rect x="225" y="106" fill="#5900ff"/><rect x="226" y="106" fill="#6200ff"/><rect x="227" y="106" fill="#6c00ff"/><rect x="228" y="106" fill="#7500ff"/><rect x="229" y="106" fill="#7f00ff"/><rect x="230" y="106" fill="#8900ff"/><rect x="231" y="106" fill="#9400ff"/><rect x="232" y="106" fill="#9e00ff"/><rect x="233" y="106" fill="#a900ff"/><rect x="234" y="106" fill="#b400ff"/><rect x="235" y="106" fill="#bf00ff"/><rect x="236" y="106" fill="#ca00ff"/><rect x="237" y="106" fill="#d600ff"/><rect x="238" y="106" fill="#e100ff"/><rect x="239" y="106" fill="#ed00ff"/><rect x="240" y="106" fill="#fa00ff"/><rect x="210" y="107" fill="#0003ff"/><rect x="211" y="107" fill="#0001ff"/><rect x="212" y="107" style="width:3.06px" fill="#0000ff"/><rect x="215" y="107" fill="#0600ff"/><rect x="216" y="107" fill="#0e00ff"/><rect x="217" y="107" fill="#1600ff"/><rect x="218" y="107" fill="#1e00ff"/><rect x="219" y="107" fill="#2600ff"/><rect x="220" y="107" fill="#2e00ff"/><rect x="221" y="107" fill="#3700ff"/><rect x="222" y="107" fill="#4000ff"/><rect x="223" y="107" fill="#4800ff"/><rect x="224" y="107" fill="#5100ff"/><rect x="225" y="107" fill="#5a00ff"/><rect x="226" y="107" fill="#6400ff"/><rect x="227" y="107" fill="#6d00ff"/><rect x="228" y="107" fill="#7700ff"/><rect x="229" y="107" fill="#8000ff"/><rect x="230" y="107" fill="#8a00ff"/><rect x="231" y="107" fill="#9500ff"/><rect x="232" y="107" fill="#9f00ff"/><rect x="233" y="107" fill="#a900ff"/><rect x="234" y="107" fill="#b400ff"/><rect x="235" y="107" fill="#bf00ff"/><rect x="236" y="107" fill="#ca00ff"/><rect x="237" y="107" fill="#d600ff"/><rect x="210" y="108" style="width:4.06px" fill="#0000ff"/><rect x="214" y="108" fill="#0100ff"/><rect x="215" y="108" fill="#0900ff"/><rect x="216" y="108" fill="#1000ff"/><rect x="217" y="108" fill="#1800ff"/><rect x="218" y="108" fill="#2000ff"/><rect x="219" y="108" fill="#2800ff"/><rect x="220" y="108" fill="#3100ff"/><rect x="221" y="108" fill="#3900ff"/><rect x="222" y="108" fill="#4200ff"/><rect x="223" y="108" fill="#4a00ff"/><rect x="224" y="108" fill="#5300ff"/><rect x="225" y="108" fill="#5c00ff"/><rect x="226" y="108" fill="#6500ff"/><rect x="227" y="108" fill="#6f00ff"/><rect x="228" y="108" fill="#7800ff"/><rect x="229" y="108" fill="#8200ff"/><rect x="230" y="108" fill="#8b00ff"/><rect x="231" y="108" fill="#9500ff"/><rect x="232" y="108" fill="#a000ff"/><rect x="233" y="108" fill="#aa00ff"/><rect x="234" y="108" fill="#b500ff"/><rect x="211" y="109" style="width:3.06px" fill="#0000ff"/><rect x="214" y="109" fill="#0400ff"/><rect x="215" y="109" fill="#0b00ff"/><rect x="216" y="109" fill="#1300ff"/><rect x="217" y="109" fill="#1b00ff"/><rect x="218" y="109" fill="#2300ff"/><rect x="219" y="109" fill="#2b00ff"/><rect x="220" y="109" fill="#3300ff"/><rect x="221" y="109" fill="#3b00ff"/><rect x="222" y="109" fill="#4400ff"/><rect x="223" y="109" fill="#4c00ff"/><rect x="224" y="109" fill="#5500ff"/><rect x="225" y="109" fill="#5e00ff"/><rect x="226" y="109" fill="#6700ff"/><rect x="227" y="109" fill="#7000ff"/><rect x="228" y="109" fill="#7900ff"/><rect x="229" y="109" fill="#8300ff"/><rect x="230" y="109" fill="#8d00ff"/><rect x="231" y="109" fill="#9600ff"/><rect x="212" y="110" style="width:2.06px" fill="#0000ff"/><rect x="214" y="110" fill="#0600ff"/><rect x="215" y="110" fill="#0e00ff"/><rect x="216" y="110" fill="#1500ff"/><rect x="217" y="110" fill="#1d00ff"/><rect x="218" y="110" fill="#2500ff"/><rect x="219" y="110" fill="#2d00ff"/><rect x="220" y="110" fill="#3500ff"/><rect x="221" y="110" fill="#3d00ff"/><rect x="222" y="110" fill="#4600ff"/><rect x="223" y="110" fill="#4e00ff"/><rect x="224" y="110" fill="#5700ff"/><rect x="225" y="110" fill="#5f00ff"/><rect x="226" y="110" fill="#6800ff"/><rect x="227" y="110" fill="#7100ff"/><rect x="228" y="110" fill="#7b00ff"/><rect x="213" y="111" fill="#0200ff"/><rect x="214" y="111" fill="#0900ff"/><rect x="215" y="111" fill="#1000ff"/><rect x="216" y="111" fill="#1800ff"/><rect x="217" y="111" fill="#2000ff"/><rect x="218" y="111" fill="#2700ff"/><rect x="219" y="111" fill="#2f00ff"/><rect x="220" y="111" fill="#3700ff"/><rect x="221" y="111" fill="#3f00ff"/><rect x="222" y="111" fill="#4700ff"/><rect x="223" y="111" fill="#5000ff"/><rect x="224" y="111" fill="#5800ff"/><rect x="225" y="111" fill="#6100ff"/><rect x="226" y="111" fill="#6a00ff"/><rect x="215" y="112" fill="#1300ff"/><rect x="216" y="112" fill="#1a00ff"/><rect x="217" y="112" fill="#2200ff"/><rect x="218" y="112" fill="#2900ff"/><rect x="219" y="112" fill="#3100ff"/><rect x="220" y="112" fill="#3900ff"/><rect x="221" y="112" fill="#4100ff"/><rect x="222" y="112" fill="#4900ff"/><rect x="223" y="112" fill="#5200ff"/><rect x="216" y="113" fill="#1a00ff"/><rect x="217" y="113" fill="#2200ff"/><rect x="218" y="113" fill="#2900ff"/><rect x="219" y="113" fill="#3100ff"/><rect x="220" y="113" fill="#3900ff"/></g></g><path fill-rule="evenodd" fill="#000" fill-opacity=".4" d="M1540 150H2540V910H1540ZM2296.0 608.9L1897.5 368.6L1721.7 849.2Z"/></g><path d="M1749.0 898.3C1748.9 898.3 1748.8 898.3 1748.7 898.3C1748.5 898.3 1748.4 898.3 1748.2 898.3C1748.0 898.3 1747.8 898.4 1747.6 898.3C1747.4 898.3 1747.1 898.2 1746.8 898.1C1746.4 897.9 1746.0 897.7 1745.5 897.4C1745.0 897.2 1744.5 896.9 1743.9 896.5C1743.2 896.0 1742.4 895.5 1741.5 894.9C1740.6 894.4 1739.7 893.7 1738.6 892.9C1737.4 892.1 1736.2 891.3 1734.7 890.3C1733.2 889.3 1731.4 888.2 1729.4 886.8C1727.5 885.5 1725.3 884.2 1722.9 882.4C1720.4 880.6 1717.7 878.7 1714.7 876.2C1711.6 873.6 1708.6 871.3 1704.7 867.1C1700.8 862.9 1696.4 858.1 1691.3 851.2C1686.3 844.2 1680.8 836.5 1674.4 825.3C1667.9 814.2 1660.9 801.4 1652.9 784.5C1644.9 767.6 1635.4 748.1 1626.4 724.0C1617.5 699.9 1607.9 671.5 1599.1 640.0C1590.3 608.6 1580.7 571.4 1573.4 535.3C1566.2 499.2 1559.3 459.3 1555.5 423.4C1551.7 387.5 1549.4 351.2 1550.5 319.8C1551.6 288.4 1555.4 258.2 1562.2 234.9C1569.0 211.6 1579.7 192.3 1591.5 179.9C1603.3 167.5 1618.3 162.6 1633.0 160.5C1647.7 158.4 1664.0 163.1 1679.7 167.3C1695.4 171.4 1711.8 178.7 1727.2 185.3C1742.6 192.0 1757.3 199.3 1772.0 207.0C1786.6 214.6 1800.8 222.8 1815.0 231.3C1829.2 239.8 1843.4 248.8 1857.4 258.0C1871.5 267.2 1885.4 276.8 1899.4 286.5C1913.3 296.2 1927.2 306.1 1941.2 316.2C1955.2 326.2 1969.2 336.5 1983.2 346.8C1997.1 357.1 2011.0 367.5 2024.9 377.9C2038.8 388.2 2052.7 398.6 2066.4 408.9C2080.1 419.2 2093.7 429.5 2107.1 439.6C2120.4 449.7 2133.7 459.8 2146.6 469.5C2159.4 479.3 2172.2 488.9 2184.4 498.2C2196.7 507.4 2208.7 516.5 2220.0 525.1C2231.4 533.7 2242.4 542.0 2252.5 549.7C2262.6 557.4 2271.9 564.4 2280.7 571.1C2289.6 577.8 2298.0 584.1 2305.6 589.9C2313.2 595.6 2320.0 600.6 2326.2 605.3C2332.4 610.0 2338.0 614.3 2343.0 618.1C2348.0 621.9 2352.3 625.2 2356.3 628.2C2360.3 631.2 2363.8 633.8 2367.0 636.2C2370.2 638.6 2372.9 640.7 2375.6 642.7C2378.2 644.7 2380.5 646.5 2382.7 648.1C2384.9 649.8 2386.8 651.3 2388.6 652.6C2390.3 653.9 2391.9 655.0 2393.3 656.1C2394.6 657.1 2395.7 658.0 2396.8 658.7C2397.8 659.5 2398.7 660.2 2399.5 660.8C2400.2 661.4 2400.9 661.9 2401.5 662.3C2402.0 662.7 2402.4 663.0 2402.7 663.3C2403.1 663.6 2403.5 663.8 2403.8 664.1C2404.1 664.3 2404.4 664.5 2404.6 664.7C2404.9 664.9 2405.2 665.1 2405.4 665.3C2405.7 665.5 2406.0 665.7 2406.1 665.9C2406.3 666.0 2406.5 666.1 2406.6 666.2C2406.7 666.3 2406.8 666.3 2406.9 666.4C2406.9 666.4 2406.9 666.5 2407.0 666.5Z" fill="none" stroke="#232323" stroke-width="3.4"/>
<text x="2019.3" y="147.6" font-size="22.3" fill="#dcdcdc" text-anchor="middle" textLength="115.0" lengthAdjust="spacingAndGlyphs">CIE 1931 xy</text>
<line x1="1545.8" y1="155.0" x2="2532.8" y2="155.0" stroke="#a6a6a6" stroke-width="2" />
<line x1="2531.8" y1="155.0" x2="2531.8" y2="903.6" stroke="#a6a6a6" stroke-width="2" />
<line x1="1546.8" y1="154.0" x2="1546.8" y2="913.1" stroke="#a6a6a6" stroke-width="2.2" />
<line x1="1537.8" y1="903.6" x2="2532.8" y2="903.6" stroke="#a6a6a6" stroke-width="2.2" />
<text x="1546.3" y="937.0" font-size="22.3" fill="#dcdcdc" text-anchor="middle">0</text>
<text x="1537.0" y="913.7" font-size="22.3" fill="#dcdcdc" text-anchor="end">0</text>
<line x1="1663.1" y1="903.6" x2="1663.1" y2="913.1" stroke="#a6a6a6" stroke-width="2.2" />
<line x1="1537.8" y1="814.6" x2="1545.8" y2="814.6" stroke="#d4d4d4" stroke-width="2.2" />
<text x="1662.6" y="937.0" font-size="22.3" fill="#dcdcdc" text-anchor="middle">0,1</text>
<text x="1537.0" y="824.7" font-size="22.3" fill="#dcdcdc" text-anchor="end">0,1</text>
<line x1="1780.4" y1="903.6" x2="1780.4" y2="913.1" stroke="#a6a6a6" stroke-width="2.2" />
<line x1="1537.8" y1="725.7" x2="1545.8" y2="725.7" stroke="#d4d4d4" stroke-width="2.2" />
<text x="1779.9" y="937.0" font-size="22.3" fill="#dcdcdc" text-anchor="middle">0,2</text>
<text x="1537.0" y="735.8" font-size="22.3" fill="#dcdcdc" text-anchor="end">0,2</text>
<line x1="1897.7" y1="903.6" x2="1897.7" y2="913.1" stroke="#a6a6a6" stroke-width="2.2" />
<line x1="1537.8" y1="636.7" x2="1545.8" y2="636.7" stroke="#d4d4d4" stroke-width="2.2" />
<text x="1897.2" y="937.0" font-size="22.3" fill="#dcdcdc" text-anchor="middle">0,3</text>
<text x="1537.0" y="646.8" font-size="22.3" fill="#dcdcdc" text-anchor="end">0,3</text>
<line x1="2015.0" y1="903.6" x2="2015.0" y2="913.1" stroke="#a6a6a6" stroke-width="2.2" />
<line x1="1537.8" y1="547.8" x2="1545.8" y2="547.8" stroke="#d4d4d4" stroke-width="2.2" />
<text x="2014.5" y="937.0" font-size="22.3" fill="#dcdcdc" text-anchor="middle">0,4</text>
<text x="1537.0" y="557.9" font-size="22.3" fill="#dcdcdc" text-anchor="end">0,4</text>
<line x1="2132.3" y1="903.6" x2="2132.3" y2="913.1" stroke="#a6a6a6" stroke-width="2.2" />
<line x1="1537.8" y1="458.8" x2="1545.8" y2="458.8" stroke="#d4d4d4" stroke-width="2.2" />
<text x="2131.8" y="937.0" font-size="22.3" fill="#dcdcdc" text-anchor="middle">0,5</text>
<text x="1537.0" y="468.9" font-size="22.3" fill="#dcdcdc" text-anchor="end">0,5</text>
<line x1="2249.6" y1="903.6" x2="2249.6" y2="913.1" stroke="#a6a6a6" stroke-width="2.2" />
<line x1="1537.8" y1="369.8" x2="1545.8" y2="369.8" stroke="#d4d4d4" stroke-width="2.2" />
<text x="2249.1" y="937.0" font-size="22.3" fill="#dcdcdc" text-anchor="middle">0,6</text>
<text x="1537.0" y="379.9" font-size="22.3" fill="#dcdcdc" text-anchor="end">0,6</text>
<line x1="2366.9" y1="903.6" x2="2366.9" y2="913.1" stroke="#a6a6a6" stroke-width="2.2" />
<line x1="1537.8" y1="280.9" x2="1545.8" y2="280.9" stroke="#d4d4d4" stroke-width="2.2" />
<text x="2366.4" y="937.0" font-size="22.3" fill="#dcdcdc" text-anchor="middle">0,7</text>
<text x="1537.0" y="291.0" font-size="22.3" fill="#dcdcdc" text-anchor="end">0,7</text>
<line x1="2484.2" y1="903.6" x2="2484.2" y2="913.1" stroke="#a6a6a6" stroke-width="2.2" />
<line x1="1537.8" y1="191.9" x2="1545.8" y2="191.9" stroke="#d4d4d4" stroke-width="2.2" />
<text x="2483.7" y="937.0" font-size="22.3" fill="#dcdcdc" text-anchor="middle">0,8</text>
<text x="1537.0" y="202.0" font-size="22.3" fill="#dcdcdc" text-anchor="end">0,8</text>
<rect x="1886.2" y="357.5" width="21" height="21" fill="none" stroke="#fff" stroke-width="2.2"/>
<rect x="1890.5" y="409.7" width="21" height="21" fill="none" stroke="#fff" stroke-width="2.2"/>
<rect x="1892.9" y="457.1" width="21" height="21" fill="none" stroke="#fff" stroke-width="2.2"/>
<rect x="1897.0" y="503.0" width="21" height="21" fill="none" stroke="#fff" stroke-width="2.2"/>
<rect x="1898.9" y="550.0" width="21" height="21" fill="none" stroke="#fff" stroke-width="2.2"/>
<rect x="2027.0" y="442.7" width="21" height="21" fill="none" stroke="#fff" stroke-width="2.2"/>
<rect x="2000.2" y="475.7" width="21" height="21" fill="none" stroke="#fff" stroke-width="2.2"/>
<rect x="1977.4" y="504.5" width="21" height="21" fill="none" stroke="#fff" stroke-width="2.2"/>
<rect x="1952.6" y="533.2" width="21" height="21" fill="none" stroke="#fff" stroke-width="2.2"/>
<rect x="1927.8" y="566.6" width="21" height="21" fill="none" stroke="#fff" stroke-width="2.2"/>
<rect x="1799.1" y="599.6" width="21" height="21" fill="none" stroke="#fff" stroke-width="2.2"/>
<rect x="1819.9" y="599.6" width="21" height="21" fill="none" stroke="#fff" stroke-width="2.2"/>
<rect x="1840.8" y="599.6" width="21" height="21" fill="none" stroke="#fff" stroke-width="2.2"/>
<rect x="1861.6" y="599.6" width="21" height="21" fill="none" stroke="#fff" stroke-width="2.2"/>
<rect x="1882.4" y="599.6" width="21" height="21" fill="none" stroke="#fff" stroke-width="2.2"/>
<rect x="2285.4" y="597.3" width="21" height="21" fill="none" stroke="#fff" stroke-width="2.2"/>
<rect x="2200.8" y="597.3" width="21" height="21" fill="none" stroke="#fff" stroke-width="2.2"/>
<rect x="2126.0" y="597.3" width="21" height="21" fill="none" stroke="#fff" stroke-width="2.2"/>
<rect x="2056.1" y="597.3" width="21" height="21" fill="none" stroke="#fff" stroke-width="2.2"/>
<rect x="1977.3" y="597.3" width="21" height="21" fill="none" stroke="#fff" stroke-width="2.2"/>
<rect x="1710.5" y="837.5" width="21" height="21" fill="none" stroke="#fff" stroke-width="2.2"/>
<rect x="1752.1" y="786.1" width="21" height="21" fill="none" stroke="#fff" stroke-width="2.2"/>
<rect x="1789.1" y="740.9" width="21" height="21" fill="none" stroke="#fff" stroke-width="2.2"/>
<rect x="1826.2" y="695.0" width="21" height="21" fill="none" stroke="#fff" stroke-width="2.2"/>
<rect x="1863.3" y="647.5" width="21" height="21" fill="none" stroke="#fff" stroke-width="2.2"/>
<rect x="1910.9" y="755.3" width="21" height="21" fill="none" stroke="#fff" stroke-width="2.2"/>
<rect x="1908.8" y="722.1" width="21" height="21" fill="none" stroke="#fff" stroke-width="2.2"/>
<rect x="1906.6" y="690.9" width="21" height="21" fill="none" stroke="#fff" stroke-width="2.2"/>
<rect x="1906.6" y="663.9" width="21" height="21" fill="none" stroke="#fff" stroke-width="2.2"/>
<rect x="1905.1" y="631.2" width="21" height="21" fill="none" stroke="#fff" stroke-width="2.2"/>
<circle cx="1956.6" cy="411.6" r="6.4" fill="#10b010" stroke="#000" stroke-width="1.6"/>
<circle cx="1946.9" cy="455.3" r="6.4" fill="#48b048" stroke="#000" stroke-width="1.6"/>
<circle cx="1938.1" cy="496.7" r="6.4" fill="#68b068" stroke="#000" stroke-width="1.6"/>
<circle cx="1929.9" cy="533.8" r="6.4" fill="#80b080" stroke="#000" stroke-width="1.6"/>
<circle cx="1923.7" cy="568.9" r="6.4" fill="#9cb49c" stroke="#000" stroke-width="1.6"/>
<circle cx="2060.3" cy="469.6" r="6.4" fill="#c4c410" stroke="#000" stroke-width="1.6"/>
<circle cx="2027.1" cy="498.7" r="6.4" fill="#bcbc58" stroke="#000" stroke-width="1.6"/>
<circle cx="1995.9" cy="527.8" r="6.4" fill="#bcbc70" stroke="#000" stroke-width="1.6"/>
<circle cx="1969.1" cy="552.3" r="6.4" fill="#bcbc88" stroke="#000" stroke-width="1.6"/>
<circle cx="1942.2" cy="579.3" r="6.4" fill="#bcbca0" stroke="#000" stroke-width="1.6"/>
<circle cx="1830.6" cy="612.3" r="6.4" fill="#10b4b4" stroke="#000" stroke-width="1.6"/>
<circle cx="1849.4" cy="610.2" r="6.4" fill="#50b4b0" stroke="#000" stroke-width="1.6"/>
<circle cx="1865.8" cy="608.1" r="6.4" fill="#70b4b0" stroke="#000" stroke-width="1.6"/>
<circle cx="1882.2" cy="605.9" r="6.4" fill="#8cb8b4" stroke="#000" stroke-width="1.6"/>
<circle cx="1898.8" cy="605.9" r="6.4" fill="#a4b8b4" stroke="#000" stroke-width="1.6"/>
<circle cx="2244.7" cy="575.1" r="6.4" fill="#c40c0c" stroke="#000" stroke-width="1.6"/>
<circle cx="2171.9" cy="579.1" r="6.4" fill="#c44848" stroke="#000" stroke-width="1.6"/>
<circle cx="2101.6" cy="587.5" r="6.4" fill="#c06464" stroke="#000" stroke-width="1.6"/>
<circle cx="2036.9" cy="591.6" r="6.4" fill="#bc7c7c" stroke="#000" stroke-width="1.6"/>
<circle cx="1973.3" cy="597.8" r="6.4" fill="#b89494" stroke="#000" stroke-width="1.6"/>
<circle cx="1727.4" cy="780.0" r="6.4" fill="#0c0cc4" stroke="#000" stroke-width="1.6"/>
<circle cx="1764.7" cy="744.7" r="6.4" fill="#5048c0" stroke="#000" stroke-width="1.6"/>
<circle cx="1804.0" cy="709.6" r="6.4" fill="#6c68bc" stroke="#000" stroke-width="1.6"/>
<circle cx="1841.0" cy="674.6" r="6.4" fill="#8884b8" stroke="#000" stroke-width="1.6"/>
<circle cx="1876.0" cy="641.4" r="6.4" fill="#a09cb4" stroke="#000" stroke-width="1.6"/>
<circle cx="1892.8" cy="716.0" r="6.4" fill="#c00cc0" stroke="#000" stroke-width="1.6"/>
<circle cx="1896.6" cy="691.0" r="6.4" fill="#c050bc" stroke="#000" stroke-width="1.6"/>
<circle cx="1901.0" cy="668.2" r="6.4" fill="#c070bc" stroke="#000" stroke-width="1.6"/>
<circle cx="1905.3" cy="647.9" r="6.4" fill="#bc8cb8" stroke="#000" stroke-width="1.6"/>
<circle cx="1911.1" cy="626.8" r="6.4" fill="#b8a0b4" stroke="#000" stroke-width="1.6"/>
<rect x="1902.9" y="599.5" width="21" height="21" fill="none" stroke="#000" stroke-width="2.6"/>
<circle cx="1911.4" cy="608.4" r="6.2" fill="#fff" stroke="#000" stroke-width="1.6"/>
<rect x="2185.0" y="161.5" width="342.2" height="289.1" fill="#2c2c2c" />
<rect x="2189.0" y="165.5" width="334.2" height="281.1" fill="#8a8a8a" />
<g clip-path="url(#ic)"><g filter="url(#bl2)"><g class="cg" transform="translate(2191.5 168.0) scale(12)"><rect x="-2" y="-2" fill="#a9ff00"/><rect x="-1" y="-2" fill="#adff00"/><rect x="0" y="-2" fill="#b0ff00"/><rect x="1" y="-2" fill="#b3ff00"/><rect x="2" y="-2" fill="#b7ff00"/><rect x="3" y="-2" fill="#baff00"/><rect x="4" y="-2" fill="#bdff00"/><rect x="5" y="-2" fill="#c1ff00"/><rect x="6" y="-2" fill="#c4ff00"/><rect x="7" y="-2" fill="#c8ff00"/><rect x="8" y="-2" fill="#cbff00"/><rect x="9" y="-2" fill="#cfff00"/><rect x="10" y="-2" fill="#d2ff00"/><rect x="11" y="-2" fill="#d6ff00"/><rect x="12" y="-2" fill="#d9ff00"/><rect x="13" y="-2" fill="#ddff00"/><rect x="14" y="-2" fill="#e0ff00"/><rect x="15" y="-2" fill="#e4ff00"/><rect x="16" y="-2" fill="#e8ff00"/><rect x="17" y="-2" fill="#ebff00"/><rect x="18" y="-2" fill="#efff00"/><rect x="19" y="-2" fill="#f3ff00"/><rect x="20" y="-2" fill="#f6ff00"/><rect x="21" y="-2" fill="#faff00"/><rect x="22" y="-2" fill="#feff00"/><rect x="23" y="-2" fill="#fffc00"/><rect x="24" y="-2" fill="#fff900"/><rect x="25" y="-2" fill="#fff500"/><rect x="26" y="-2" fill="#fff200"/><rect x="27" y="-2" fill="#ffee00"/><rect x="28" y="-2" fill="#ffeb00"/><rect x="29" y="-2" fill="#ffe700"/><rect x="-2" y="-1" fill="#abff00"/><rect x="-1" y="-1" fill="#afff00"/><rect x="0" y="-1" fill="#b2ff00"/><rect x="1" y="-1" fill="#b5ff00"/><rect x="2" y="-1" fill="#b9ff00"/><rect x="3" y="-1" fill="#bcff00"/><rect x="4" y="-1" fill="#bfff00"/><rect x="5" y="-1" fill="#c3ff00"/><rect x="6" y="-1" fill="#c6ff00"/><rect x="7" y="-1" fill="#caff00"/><rect x="8" y="-1" fill="#cdff00"/><rect x="9" y="-1" fill="#d1ff00"/><rect x="10" y="-1" fill="#d4ff00"/><rect x="11" y="-1" fill="#d8ff00"/><rect x="12" y="-1" fill="#dcff00"/><rect x="13" y="-1" fill="#dfff00"/><rect x="14" y="-1" fill="#e3ff00"/><rect x="15" y="-1" fill="#e6ff00"/><rect x="16" y="-1" fill="#eaff00"/><rect x="17" y="-1" fill="#eeff00"/><rect x="18" y="-1" fill="#f1ff00"/><rect x="19" y="-1" fill="#f5ff00"/><rect x="20" y="-1" fill="#f9ff00"/><rect x="21" y="-1" fill="#fdff00"/><rect x="22" y="-1" fill="#fffd00"/><rect x="23" y="-1" fill="#fffa00"/><rect x="24" y="-1" fill="#fff600"/><rect x="25" y="-1" fill="#fff200"/><rect x="26" y="-1" fill="#ffef00"/><rect x="27" y="-1" fill="#ffec00"/><rect x="28" y="-1" fill="#ffe800"/><rect x="29" y="-1" fill="#ffe500"/><rect x="-2" y="0" fill="#adff00"/><rect x="-1" y="0" fill="#b1ff00"/><rect x="0" y="0" fill="#b4ff00"/><rect x="1" y="0" fill="#b7ff00"/><rect x="2" y="0" fill="#bbff00"/><rect x="3" y="0" fill="#beff00"/><rect x="4" y="0" fill="#c2ff00"/><rect x="5" y="0" fill="#c5ff00"/><rect x="6" y="0" fill="#c9ff00"/><rect x="7" y="0" fill="#ccff00"/><rect x="8" y="0" fill="#d0ff00"/><rect x="9" y="0" fill="#d3ff00"/><rect x="10" y="0" fill="#d7ff00"/><rect x="11" y="0" fill="#daff00"/><rect x="12" y="0" fill="#deff00"/><rect x="13" y="0" fill="#e2ff00"/><rect x="14" y="0" fill="#e5ff00"/><rect x="15" y="0" fill="#e9ff00"/><rect x="16" y="0" fill="#edff00"/><rect x="17" y="0" fill="#f0ff00"/><rect x="18" y="0" fill="#f4ff00"/><rect x="19" y="0" fill="#f8ff00"/><rect x="20" y="0" fill="#fcff00"/><rect x="21" y="0" fill="#fffe00"/><rect x="22" y="0" fill="#fffb00"/><rect x="23" y="0" fill="#fff700"/><rect x="24" y="0" fill="#fff300"/><rect x="25" y="0" fill="#fff000"/><rect x="26" y="0" fill="#ffec00"/><rect x="27" y="0" fill="#ffe900"/><rect x="28" y="0" fill="#ffe600"/><rect x="29" y="0" fill="#ffe300"/><rect x="-2" y="1" fill="#afff00"/><rect x="-1" y="1" fill="#b3ff00"/><rect x="0" y="1" fill="#b6ff00"/><rect x="1" y="1" fill="#baff00"/><rect x="2" y="1" fill="#bdff00"/><rect x="3" y="1" fill="#c0ff00"/><rect x="4" y="1" fill="#c4ff00"/><rect x="5" y="1" fill="#c7ff00"/><rect x="6" y="1" fill="#cbff00"/><rect x="7" y="1" fill="#ceff00"/><rect x="8" y="1" fill="#d2ff00"/><rect x="9" y="1" fill="#d6ff00"/><rect x="10" y="1" fill="#d9ff00"/><rect x="11" y="1" fill="#ddff00"/><rect x="12" y="1" fill="#e0ff00"/><rect x="13" y="1" fill="#e4ff00"/><rect x="14" y="1" fill="#e8ff00"/><rect x="15" y="1" fill="#ebff00"/><rect x="16" y="1" fill="#efff00"/><rect x="17" y="1" fill="#f3ff00"/><rect x="18" y="1" fill="#f7ff00"/><rect x="19" y="1" fill="#fbff00"/><rect x="20" y="1" fill="#feff00"/><rect x="21" y="1" fill="#fffc00"/><rect x="22" y="1" fill="#fff800"/><rect x="23" y="1" fill="#fff400"/><rect x="24" y="1" fill="#fff100"/><rect x="25" y="1" fill="#ffed00"/><rect x="26" y="1" fill="#ffea00"/><rect x="27" y="1" fill="#ffe700"/><rect x="28" y="1" fill="#ffe300"/><rect x="29" y="1" fill="#ffe000"/><rect x="-2" y="2" fill="#b1ff01"/><rect x="-1" y="2" fill="#b5ff01"/><rect x="0" y="2" fill="#b8ff00"/><rect x="1" y="2" fill="#bcff00"/><rect x="2" y="2" fill="#bfff00"/><rect x="3" y="2" fill="#c3ff00"/><rect x="4" y="2" fill="#c6ff00"/><rect x="5" y="2" fill="#caff00"/><rect x="6" y="2" fill="#cdff00"/><rect x="7" y="2" fill="#d1ff00"/><rect x="8" y="2" fill="#d4ff00"/><rect x="9" y="2" fill="#d8ff00"/><rect x="10" y="2" fill="#dcff00"/><rect x="11" y="2" fill="#dfff00"/><rect x="12" y="2" fill="#e3ff00"/><rect x="13" y="2" fill="#e7ff00"/><rect x="14" y="2" fill="#eaff00"/><rect x="15" y="2" fill="#eeff00"/><rect x="16" y="2" fill="#f2ff00"/><rect x="17" y="2" fill="#f6ff00"/><rect x="18" y="2" fill="#f9ff00"/><rect x="19" y="2" fill="#fdff00"/><rect x="20" y="2" fill="#fffd00"/><rect x="21" y="2" fill="#fff900"/><rect x="22" y="2" fill="#fff500"/><rect x="23" y="2" fill="#fff200"/><rect x="24" y="2" fill="#ffee00"/><rect x="25" y="2" fill="#ffeb00"/><rect x="26" y="2" fill="#ffe700"/><rect x="27" y="2" fill="#ffe400"/><rect x="28" y="2" fill="#ffe100"/><rect x="29" y="2" fill="#ffde00"/><rect x="-2" y="3" fill="#b4ff03"/><rect x="-1" y="3" fill="#b7ff02"/><rect x="0" y="3" fill="#baff01"/><rect x="1" y="3" fill="#beff00"/><rect x="2" y="3" fill="#c1ff00"/><rect x="3" y="3" fill="#c5ff00"/><rect x="4" y="3" fill="#c8ff00"/><rect x="5" y="3" fill="#ccff00"/><rect x="6" y="3" fill="#cfff00"/><rect x="7" y="3" fill="#d3ff00"/><rect x="8" y="3" fill="#d7ff00"/><rect x="9" y="3" fill="#daff00"/><rect x="10" y="3" fill="#deff00"/><rect x="11" y="3" fill="#e2ff00"/><rect x="12" y="3" fill="#e5ff00"/><rect x="13" y="3" fill="#e9ff00"/><rect x="14" y="3" fill="#edff00"/><rect x="15" y="3" fill="#f1ff00"/><rect x="16" y="3" fill="#f4ff00"/><rect x="17" y="3" fill="#f8ff00"/><rect x="18" y="3" fill="#fcff00"/><rect x="19" y="3" fill="#fffe00"/><rect x="20" y="3" fill="#fffa00"/><rect x="21" y="3" fill="#fff600"/><rect x="22" y="3" fill="#fff300"/><rect x="23" y="3" fill="#ffef00"/><rect x="24" y="3" fill="#ffec00"/><rect x="25" y="3" fill="#ffe800"/><rect x="26" y="3" fill="#ffe500"/><rect x="27" y="3" fill="#ffe200"/><rect x="28" y="3" fill="#ffdf00"/><rect x="29" y="3" fill="#ffdb00"/><rect x="-2" y="4" fill="#b6ff04"/><rect x="-1" y="4" fill="#b9ff03"/><rect x="0" y="4" fill="#bdff02"/><rect x="1" y="4" fill="#c0ff01"/><rect x="2" y="4" fill="#c4ff01"/><rect x="3" y="4" fill="#c7ff00"/><rect x="4" y="4" fill="#cbff00"/><rect x="5" y="4" fill="#ceff00"/><rect x="6" y="4" fill="#d2ff00"/><rect x="7" y="4" fill="#d5ff00"/><rect x="8" y="4" fill="#d9ff00"/><rect x="9" y="4" fill="#ddff00"/><rect x="10" y="4" fill="#e0ff00"/><rect x="11" y="4" fill="#e4ff00"/><rect x="12" y="4" fill="#e8ff00"/><rect x="13" y="4" fill="#ecff00"/><rect x="14" y="4" fill="#f0ff00"/><rect x="15" y="4" fill="#f3ff00"/><rect x="16" y="4" fill="#f7ff00"/><rect x="17" y="4" fill="#fbff00"/><rect x="18" y="4" fill="#ffff00"/><rect x="19" y="4" fill="#fffb00"/><rect x="20" y="4" fill="#fff700"/><rect x="21" y="4" fill="#fff400"/><rect x="22" y="4" fill="#fff000"/><rect x="23" y="4" fill="#ffed00"/><rect x="24" y="4" fill="#ffe900"/><rect x="25" y="4" fill="#ffe600"/><rect x="26" y="4" fill="#ffe300"/><rect x="27" y="4" fill="#ffdf00"/><rect x="28" y="4" fill="#ffdc00"/><rect x="29" y="4" fill="#ffd900"/><rect x="-2" y="5" fill="#b8ff05"/><rect x="-1" y="5" fill="#bbff04"/><rect x="0" y="5" fill="#bfff03"/><rect x="1" y="5" fill="#c2ff03"/><rect x="2" y="5" fill="#c6ff02"/><rect x="3" y="5" fill="#c9ff01"/><rect x="4" y="5" fill="#cdff00"/><rect x="5" y="5" fill="#d1ff00"/><rect x="6" y="5" fill="#d4ff00"/><rect x="7" y="5" fill="#d8ff00"/><rect x="8" y="5" fill="#dcff00"/><rect x="9" y="5" fill="#dfff00"/><rect x="10" y="5" fill="#e3ff00"/><rect x="11" y="5" fill="#e7ff00"/><rect x="12" y="5" fill="#ebff00"/><rect x="13" y="5" fill="#eeff00"/><rect x="14" y="5" fill="#f2ff00"/><rect x="15" y="5" fill="#f6ff00"/><rect x="16" y="5" fill="#faff00"/><rect x="17" y="5" fill="#feff00"/><rect x="18" y="5" fill="#fffc00"/><rect x="19" y="5" fill="#fff800"/><rect x="20" y="5" fill="#fff500"/><rect x="21" y="5" fill="#fff100"/><rect x="22" y="5" fill="#ffee00"/><rect x="23" y="5" fill="#ffea00"/><rect x="24" y="5" fill="#ffe700"/><rect x="25" y="5" fill="#ffe300"/><rect x="26" y="5" fill="#ffe000"/><rect x="27" y="5" fill="#ffdd00"/><rect x="28" y="5" fill="#ffda00"/><rect x="29" y="5" fill="#ffd700"/><rect x="-2" y="6" fill="#baff06"/><rect x="-1" y="6" fill="#bdff05"/><rect x="0" y="6" fill="#c1ff05"/><rect x="1" y="6" fill="#c5ff04"/><rect x="2" y="6" fill="#c8ff03"/><rect x="3" y="6" fill="#ccff02"/><rect x="4" y="6" fill="#cfff01"/><rect x="5" y="6" fill="#d3ff01"/><rect x="6" y="6" fill="#d7ff00"/><rect x="7" y="6" fill="#daff00"/><rect x="8" y="6" fill="#deff00"/><rect x="9" y="6" fill="#e2ff00"/><rect x="10" y="6" fill="#e6ff00"/><rect x="11" y="6" fill="#e9ff00"/><rect x="12" y="6" fill="#edff00"/><rect x="13" y="6" fill="#f1ff00"/><rect x="14" y="6" fill="#f5ff00"/><rect x="15" y="6" fill="#f9ff00"/><rect x="16" y="6" fill="#fdff00"/><rect x="17" y="6" fill="#fffd00"/><rect x="18" y="6" fill="#fffa00"/><rect x="19" y="6" fill="#fff600"/><rect x="20" y="6" fill="#fff200"/><rect x="21" y="6" fill="#ffef00"/><rect x="22" y="6" fill="#ffeb00"/><rect x="23" y="6" fill="#ffe800"/><rect x="24" y="6" fill="#ffe400"/><rect x="25" y="6" fill="#ffe100"/><rect x="26" y="6" fill="#ffde00"/><rect x="27" y="6" fill="#ffdb00"/><rect x="28" y="6" fill="#ffd800"/><rect x="29" y="6" fill="#ffd500"/><rect x="-2" y="7" fill="#bcff07"/><rect x="-1" y="7" fill="#c0ff07"/><rect x="0" y="7" fill="#c3ff06"/><rect x="1" y="7" fill="#c7ff05"/><rect x="2" y="7" fill="#caff04"/><rect x="3" y="7" fill="#ceff03"/><rect x="4" y="7" fill="#d2ff03"/><rect x="5" y="7" fill="#d5ff02"/><rect x="6" y="7" fill="#d9ff01"/><rect x="7" y="7" fill="#ddff00"/><rect x="8" y="7" fill="#e1ff00"/><rect x="9" y="7" fill="#e4ff00"/><rect x="10" y="7" fill="#e8ff00"/><rect x="11" y="7" fill="#ecff00"/><rect x="12" y="7" fill="#f0ff00"/><rect x="13" y="7" fill="#f4ff00"/><rect x="14" y="7" fill="#f8ff00"/><rect x="15" y="7" fill="#fcff00"/><rect x="16" y="7" fill="#ffff00"/><rect x="17" y="7" fill="#fffb00"/><rect x="18" y="7" fill="#fff700"/><rect x="19" y="7" fill="#fff300"/><rect x="20" y="7" fill="#ffef00"/><rect x="21" y="7" fill="#ffec00"/><rect x="22" y="7" fill="#ffe800"/><rect x="23" y="7" fill="#ffe500"/><rect x="24" y="7" fill="#ffe200"/><rect x="25" y="7" fill="#ffde00"/><rect x="26" y="7" fill="#ffdb00"/><rect x="27" y="7" fill="#ffd800"/><rect x="28" y="7" fill="#ffd500"/><rect x="29" y="7" fill="#ffd200"/><rect x="-2" y="8" fill="#beff09"/><rect x="-1" y="8" fill="#c2ff08"/><rect x="0" y="8" fill="#c6ff07"/><rect x="1" y="8" fill="#c9ff06"/><rect x="2" y="8" fill="#cdff05"/><rect x="3" y="8" fill="#d0ff05"/><rect x="4" y="8" fill="#d4ff04"/><rect x="5" y="8" fill="#d8ff03"/><rect x="6" y="8" fill="#dcff02"/><rect x="7" y="8" fill="#dfff01"/><rect x="8" y="8" fill="#e3ff01"/><rect x="9" y="8" fill="#e7ff00"/><rect x="10" y="8" fill="#ebff00"/><rect x="11" y="8" fill="#efff00"/><rect x="12" y="8" fill="#f3ff00"/><rect x="13" y="8" fill="#f6ff00"/><rect x="14" y="8" fill="#faff00"/><rect x="15" y="8" fill="#feff00"/><rect x="16" y="8" fill="#fffc00"/><rect x="17" y="8" fill="#fff800"/><rect x="18" y="8" fill="#fff400"/><rect x="19" y="8" fill="#fff000"/><rect x="20" y="8" fill="#ffed00"/><rect x="21" y="8" fill="#ffe900"/><rect x="22" y="8" fill="#ffe600"/><rect x="23" y="8" fill="#ffe300"/><rect x="24" y="8" fill="#ffdf00"/><rect x="25" y="8" fill="#ffdc00"/><rect x="26" y="8" fill="#ffd900"/><rect x="27" y="8" fill="#ffd600"/><rect x="28" y="8" fill="#ffd300"/><rect x="29" y="8" fill="#ffd000"/><rect x="-2" y="9" fill="#c1ff0a"/><rect x="-1" y="9" fill="#c4ff09"/><rect x="0" y="9" fill="#c8ff08"/><rect x="1" y="9" fill="#ccff07"/><rect x="2" y="9" fill="#cfff07"/><rect x="3" y="9" fill="#d3ff06"/><rect x="4" y="9" fill="#d7ff05"/><rect x="5" y="9" fill="#daff04"/><rect x="6" y="9" fill="#deff03"/><rect x="7" y="9" fill="#e2ff03"/><rect x="8" y="9" fill="#e6ff02"/><rect x="9" y="9" fill="#eaff01"/><rect x="10" y="9" fill="#edff00"/><rect x="11" y="9" fill="#f1ff00"/><rect x="12" y="9" fill="#f5ff00"/><rect x="13" y="9" fill="#f9ff00"/><rect x="14" y="9" fill="#fdff00"/><rect x="15" y="9" fill="#fffd00"/><rect x="16" y="9" fill="#fff900"/><rect x="17" y="9" fill="#fff500"/><rect x="18" y="9" fill="#fff100"/><rect x="19" y="9" fill="#ffee00"/><rect x="20" y="9" fill="#ffea00"/><rect x="21" y="9" fill="#ffe700"/><rect x="22" y="9" fill="#ffe300"/><rect x="23" y="9" fill="#ffe000"/><rect x="24" y="9" fill="#ffdd00"/><rect x="25" y="9" fill="#ffda00"/><rect x="26" y="9" fill="#ffd700"/><rect x="27" y="9" fill="#ffd400"/><rect x="28" y="9" fill="#ffd100"/><rect x="29" y="9" fill="#ffce00"/><rect x="-2" y="10" fill="#c3ff0b"/><rect x="-1" y="10" fill="#c7ff0a"/><rect x="0" y="10" fill="#caff09"/><rect x="1" y="10" fill="#ceff09"/><rect x="2" y="10" fill="#d2ff08"/><rect x="3" y="10" fill="#d5ff07"/><rect x="4" y="10" fill="#d9ff06"/><rect x="5" y="10" fill="#ddff06"/><rect x="6" y="10" fill="#e1ff05"/><rect x="7" y="10" fill="#e5ff04"/><rect x="8" y="10" fill="#e8ff03"/><rect x="9" y="10" fill="#ecff02"/><rect x="10" y="10" fill="#f0ff01"/><rect x="11" y="10" fill="#f4ff01"/><rect x="12" y="10" fill="#f8ff00"/><rect x="13" y="10" fill="#fcff00"/><rect x="14" y="10" fill="#fffe00"/><rect x="15" y="10" fill="#fffa00"/><rect x="16" y="10" fill="#fff600"/><rect x="17" y="10" fill="#fff200"/><rect x="18" y="10" fill="#ffef00"/><rect x="19" y="10" fill="#ffeb00"/><rect x="20" y="10" fill="#ffe800"/><rect x="21" y="10" fill="#ffe400"/><rect x="22" y="10" fill="#ffe100"/><rect x="23" y="10" fill="#ffde00"/><rect x="24" y="10" fill="#ffda00"/><rect x="25" y="10" fill="#ffd700"/><rect x="26" y="10" fill="#ffd400"/><rect x="27" y="10" fill="#ffd100"/><rect x="28" y="10" fill="#ffce00"/><rect x="29" y="10" fill="#ffcb00"/><rect x="-2" y="11" fill="#c5ff0c"/><rect x="-1" y="11" fill="#c9ff0c"/><rect x="0" y="11" fill="#cdff0b"/><rect x="1" y="11" fill="#d0ff0a"/><rect x="2" y="11" fill="#d4ff09"/><rect x="3" y="11" fill="#d8ff08"/><rect x="4" y="11" fill="#dcff08"/><rect x="5" y="11" fill="#dfff07"/><rect x="6" y="11" fill="#e3ff06"/><rect x="7" y="11" fill="#e7ff05"/><rect x="8" y="11" fill="#ebff04"/><rect x="9" y="11" fill="#efff04"/><rect x="10" y="11" fill="#f3ff03"/><rect x="11" y="11" fill="#f7ff02"/><rect x="12" y="11" fill="#fbff01"/><rect x="13" y="11" fill="#ffff00"/><rect x="14" y="11" fill="#fffb00"/><rect x="15" y="11" fill="#fff700"/><rect x="16" y="11" fill="#fff300"/><rect x="17" y="11" fill="#fff000"/><rect x="18" y="11" fill="#ffec00"/><rect x="19" y="11" fill="#ffe900"/><rect x="20" y="11" fill="#ffe500"/><rect x="21" y="11" fill="#ffe200"/><rect x="22" y="11" fill="#ffde00"/><rect x="23" y="11" fill="#ffdb00"/><rect x="24" y="11" fill="#ffd800"/><rect x="25" y="11" fill="#ffd500"/><rect x="26" y="11" fill="#ffd200"/><rect x="27" y="11" fill="#ffcf00"/><rect x="28" y="11" fill="#ffcc00"/><rect x="29" y="11" fill="#ffc900"/><rect x="-2" y="12" fill="#c8ff0e"/><rect x="-1" y="12" fill="#cbff0d"/><rect x="0" y="12" fill="#cfff0c"/><rect x="1" y="12" fill="#d3ff0b"/><rect x="2" y="12" fill="#d7ff0a"/><rect x="3" y="12" fill="#daff0a"/><rect x="4" y="12" fill="#deff09"/><rect x="5" y="12" fill="#e2ff08"/><rect x="6" y="12" fill="#e6ff07"/><rect x="7" y="12" fill="#eaff06"/><rect x="8" y="12" fill="#eeff06"/><rect x="9" y="12" fill="#f2ff05"/><rect x="10" y="12" fill="#f6ff04"/><rect x="11" y="12" fill="#faff03"/><rect x="12" y="12" fill="#feff02"/><rect x="13" y="12" fill="#fffc01"/><rect x="14" y="12" fill="#fff801"/><rect x="15" y="12" fill="#fff400"/><rect x="16" y="12" fill="#fff100"/><rect x="17" y="12" fill="#ffed00"/><rect x="18" y="12" fill="#ffe900"/><rect x="19" y="12" fill="#ffe600"/><rect x="20" y="12" fill="#ffe300"/><rect x="21" y="12" fill="#ffdf00"/><rect x="22" y="12" fill="#ffdc00"/><rect x="23" y="12" fill="#ffd900"/><rect x="24" y="12" fill="#ffd600"/><rect x="25" y="12" fill="#ffd300"/><rect x="26" y="12" fill="#ffd000"/><rect x="27" y="12" fill="#ffcd00"/><rect x="28" y="12" fill="#ffca00"/><rect x="29" y="12" fill="#ffc700"/><rect x="-2" y="13" fill="#caff0f"/><rect x="-1" y="13" fill="#ceff0e"/><rect x="0" y="13" fill="#d2ff0d"/><rect x="1" y="13" fill="#d5ff0d"/><rect x="2" y="13" fill="#d9ff0c"/><rect x="3" y="13" fill="#ddff0b"/><rect x="4" y="13" fill="#e1ff0a"/><rect x="5" y="13" fill="#e5ff09"/><rect x="6" y="13" fill="#e9ff09"/><rect x="7" y="13" fill="#edff08"/><rect x="8" y="13" fill="#f1ff07"/><rect x="9" y="13" fill="#f5ff06"/><rect x="10" y="13" fill="#f9ff05"/><rect x="11" y="13" fill="#fdff04"/><rect x="12" y="13" fill="#fffd04"/><rect x="13" y="13" fill="#fff903"/><rect x="14" y="13" fill="#fff502"/><rect x="15" y="13" fill="#fff201"/><rect x="16" y="13" fill="#ffee00"/><rect x="17" y="13" fill="#ffea00"/><rect x="18" y="13" fill="#ffe700"/><rect x="19" y="13" fill="#ffe300"/><rect x="20" y="13" fill="#ffe000"/><rect x="21" y="13" fill="#ffdd00"/><rect x="22" y="13" fill="#ffda00"/><rect x="23" y="13" fill="#ffd600"/><rect x="24" y="13" fill="#ffd300"/><rect x="25" y="13" fill="#ffd000"/><rect x="26" y="13" fill="#ffcd00"/><rect x="27" y="13" fill="#ffca00"/><rect x="28" y="13" fill="#ffc800"/><rect x="29" y="13" fill="#ffc500"/><rect x="-2" y="14" fill="#ccff10"/><rect x="-1" y="14" fill="#d0ff0f"/><rect x="0" y="14" fill="#d4ff0f"/><rect x="1" y="14" fill="#d8ff0e"/><rect x="2" y="14" fill="#dcff0d"/><rect x="3" y="14" fill="#e0ff0c"/><rect x="4" y="14" fill="#e3ff0c"/><rect x="5" y="14" fill="#e7ff0b"/><rect x="6" y="14" fill="#ebff0a"/><rect x="7" y="14" fill="#efff09"/><rect x="8" y="14" fill="#f3ff08"/><rect x="9" y="14" fill="#f7ff07"/><rect x="10" y="14" fill="#fbff07"/><rect x="11" y="14" fill="#ffff06"/><rect x="12" y="14" fill="#fffa05"/><rect x="13" y="14" fill="#fff704"/><rect x="14" y="14" fill="#fff303"/><rect x="15" y="14" fill="#ffef02"/><rect x="16" y="14" fill="#ffeb01"/><rect x="17" y="14" fill="#ffe801"/><rect x="18" y="14" fill="#ffe400"/><rect x="19" y="14" fill="#ffe100"/><rect x="20" y="14" fill="#ffde00"/><rect x="21" y="14" fill="#ffda00"/><rect x="22" y="14" fill="#ffd700"/><rect x="23" y="14" fill="#ffd400"/><rect x="24" y="14" fill="#ffd100"/><rect x="25" y="14" fill="#ffce00"/><rect x="26" y="14" fill="#ffcb00"/><rect x="27" y="14" fill="#ffc800"/><rect x="28" y="14" fill="#ffc500"/><rect x="29" y="14" fill="#ffc300"/><rect x="-2" y="15" fill="#cfff12"/><rect x="-1" y="15" fill="#d3ff11"/><rect x="0" y="15" fill="#d7ff10"/><rect x="1" y="15" fill="#daff0f"/><rect x="2" y="15" fill="#deff0e"/><rect x="3" y="15" fill="#e2ff0e"/><rect x="4" y="15" fill="#e6ff0d"/><rect x="5" y="15" fill="#eaff0c"/><rect x="6" y="15" fill="#eeff0b"/><rect x="7" y="15" fill="#f2ff0a"/><rect x="8" y="15" fill="#f6ff0a"/><rect x="9" y="15" fill="#faff09"/><rect x="10" y="15" fill="#feff08"/><rect x="11" y="15" fill="#fffc07"/><rect x="12" y="15" fill="#fff806"/><rect x="13" y="15" fill="#fff405"/><rect x="14" y="15" fill="#fff004"/><rect x="15" y="15" fill="#ffec03"/><rect x="16" y="15" fill="#ffe903"/><rect x="17" y="15" fill="#ffe502"/><rect x="18" y="15" fill="#ffe201"/><rect x="19" y="15" fill="#ffde00"/><rect x="20" y="15" fill="#ffdb00"/><rect x="21" y="15" fill="#ffd800"/><rect x="22" y="15" fill="#ffd500"/><rect x="23" y="15" fill="#ffd200"/><rect x="24" y="15" fill="#ffcf00"/><rect x="25" y="15" fill="#ffcc00"/><rect x="26" y="15" fill="#ffc900"/><rect x="27" y="15" fill="#ffc600"/><rect x="28" y="15" fill="#ffc300"/><rect x="29" y="15" fill="#ffc000"/><rect x="-2" y="16" fill="#d1ff13"/><rect x="-1" y="16" fill="#d5ff12"/><rect x="0" y="16" fill="#d9ff11"/><rect x="1" y="16" fill="#ddff11"/><rect x="2" y="16" fill="#e1ff10"/><rect x="3" y="16" fill="#e5ff0f"/><rect x="4" y="16" fill="#e9ff0e"/><rect x="5" y="16" fill="#edff0d"/><rect x="6" y="16" fill="#f1ff0d"/><rect x="7" y="16" fill="#f5ff0c"/><rect x="8" y="16" fill="#f9ff0b"/><rect x="9" y="16" fill="#fdff0a"/><rect x="10" y="16" fill="#fffd09"/><rect x="11" y="16" fill="#fff908"/><rect x="12" y="16" fill="#fff507"/><rect x="13" y="16" fill="#fff106"/><rect x="14" y="16" fill="#ffed05"/><rect x="15" y="16" fill="#ffea05"/><rect x="16" y="16" fill="#ffe604"/><rect x="17" y="16" fill="#ffe303"/><rect x="18" y="16" fill="#ffdf02"/><rect x="19" y="16" fill="#ffdc01"/><rect x="20" y="16" fill="#ffd900"/><rect x="21" y="16" fill="#ffd500"/><rect x="22" y="16" fill="#ffd200"/><rect x="23" y="16" fill="#ffcf00"/><rect x="24" y="16" fill="#ffcc00"/><rect x="25" y="16" fill="#ffc900"/><rect x="26" y="16" fill="#ffc700"/><rect x="27" y="16" fill="#ffc400"/><rect x="28" y="16" fill="#ffc100"/><rect x="29" y="16" fill="#ffbe00"/><rect x="-2" y="17" fill="#d4ff14"/><rect x="-1" y="17" fill="#d8ff14"/><rect x="0" y="17" fill="#dcff13"/><rect x="1" y="17" fill="#e0ff12"/><rect x="2" y="17" fill="#e4ff11"/><rect x="3" y="17" fill="#e8ff10"/><rect x="4" y="17" fill="#ecff10"/><rect x="5" y="17" fill="#f0ff0f"/><rect x="6" y="17" fill="#f4ff0e"/><rect x="7" y="17" fill="#f8ff0d"/><rect x="8" y="17" fill="#fcff0c"/><rect x="9" y="17" fill="#fffe0b"/><rect x="10" y="17" fill="#fffa0a"/><rect x="11" y="17" fill="#fff609"/><rect x="12" y="17" fill="#fff208"/><rect x="13" y="17" fill="#ffee08"/><rect x="14" y="17" fill="#ffeb07"/><rect x="15" y="17" fill="#ffe706"/><rect x="16" y="17" fill="#ffe305"/><rect x="17" y="17" fill="#ffe004"/><rect x="18" y="17" fill="#ffdd03"/><rect x="19" y="17" fill="#ffd902"/><rect x="20" y="17" fill="#ffd602"/><rect x="21" y="17" fill="#ffd301"/><rect x="22" y="17" fill="#ffd000"/><rect x="23" y="17" fill="#ffcd00"/><rect x="24" y="17" fill="#ffca00"/><rect x="25" y="17" fill="#ffc700"/><rect x="26" y="17" fill="#ffc400"/><rect x="27" y="17" fill="#ffc200"/><rect x="28" y="17" fill="#ffbf00"/><rect x="29" y="17" fill="#ffbc00"/><rect x="-2" y="18" fill="#d7ff16"/><rect x="-1" y="18" fill="#daff15"/><rect x="0" y="18" fill="#deff14"/><rect x="1" y="18" fill="#e2ff13"/><rect x="2" y="18" fill="#e6ff13"/><rect x="3" y="18" fill="#eaff12"/><rect x="4" y="18" fill="#eeff11"/><rect x="5" y="18" fill="#f2ff10"/><rect x="6" y="18" fill="#f7ff0f"/><rect x="7" y="18" fill="#fbff0f"/><rect x="8" y="18" fill="#ffff0e"/><rect x="9" y="18" fill="#fffb0d"/><rect x="10" y="18" fill="#fff70c"/><rect x="11" y="18" fill="#fff30b"/><rect x="12" y="18" fill="#ffef0a"/><rect x="13" y="18" fill="#ffec09"/><rect x="14" y="18" fill="#ffe808"/><rect x="15" y="18" fill="#ffe407"/><rect x="16" y="18" fill="#ffe106"/><rect x="17" y="18" fill="#ffdd05"/><rect x="18" y="18" fill="#ffda04"/><rect x="19" y="18" fill="#ffd704"/><rect x="20" y="18" fill="#ffd403"/><rect x="21" y="18" fill="#ffd102"/><rect x="22" y="18" fill="#ffce01"/><rect x="23" y="18" fill="#ffcb00"/><rect x="24" y="18" fill="#ffc800"/><rect x="25" y="18" fill="#ffc500"/><rect x="26" y="18" fill="#ffc200"/><rect x="27" y="18" fill="#ffbf00"/><rect x="28" y="18" fill="#ffbd00"/><rect x="29" y="18" fill="#ffba00"/><rect x="-2" y="19" fill="#d9ff17"/><rect x="-1" y="19" fill="#ddff16"/><rect x="0" y="19" fill="#e1ff16"/><rect x="1" y="19" fill="#e5ff15"/><rect x="2" y="19" fill="#e9ff14"/><rect x="3" y="19" fill="#edff13"/><rect x="4" y="19" fill="#f1ff12"/><rect x="5" y="19" fill="#f5ff12"/><rect x="6" y="19" fill="#f9ff11"/><rect x="7" y="19" fill="#feff10"/><rect x="8" y="19" fill="#fffc0f"/><rect x="9" y="19" fill="#fff80e"/><rect x="10" y="19" fill="#fff40d"/><rect x="11" y="19" fill="#fff00c"/><rect x="12" y="19" fill="#ffec0b"/><rect x="13" y="19" fill="#ffe90a"/><rect x="14" y="19" fill="#ffe509"/><rect x="15" y="19" fill="#ffe208"/><rect x="16" y="19" fill="#ffde07"/><rect x="17" y="19" fill="#ffdb06"/><rect x="18" y="19" fill="#ffd805"/><rect x="19" y="19" fill="#ffd405"/><rect x="20" y="19" fill="#ffd104"/><rect x="21" y="19" fill="#ffce03"/><rect x="22" y="19" fill="#ffcb02"/><rect x="23" y="19" fill="#ffc802"/><rect x="24" y="19" fill="#ffc501"/><rect x="25" y="19" fill="#ffc300"/><rect x="26" y="19" fill="#ffc000"/><rect x="27" y="19" fill="#ffbd00"/><rect x="28" y="19" fill="#ffbb00"/><rect x="29" y="19" fill="#ffb800"/><rect x="-2" y="20" fill="#dcff19"/><rect x="-1" y="20" fill="#e0ff18"/><rect x="0" y="20" fill="#e4ff17"/><rect x="1" y="20" fill="#e8ff16"/><rect x="2" y="20" fill="#ecff15"/><rect x="3" y="20" fill="#f0ff15"/><rect x="4" y="20" fill="#f4ff14"/><rect x="5" y="20" fill="#f8ff13"/><rect x="6" y="20" fill="#fcff12"/><rect x="7" y="20" fill="#fffd11"/><rect x="8" y="20" fill="#fff910"/><rect x="9" y="20" fill="#fff50f"/><rect x="10" y="20" fill="#fff10e"/><rect x="11" y="20" fill="#ffed0d"/><rect x="12" y="20" fill="#ffea0c"/><rect x="13" y="20" fill="#ffe60b"/><rect x="14" y="20" fill="#ffe30a"/><rect x="15" y="20" fill="#ffdf09"/><rect x="16" y="20" fill="#ffdc08"/><rect x="17" y="20" fill="#ffd807"/><rect x="18" y="20" fill="#ffd507"/><rect x="19" y="20" fill="#ffd206"/><rect x="20" y="20" fill="#ffcf05"/><rect x="21" y="20" fill="#ffcc04"/><rect x="22" y="20" fill="#ffc903"/><rect x="23" y="20" fill="#ffc603"/><rect x="24" y="20" fill="#ffc302"/><rect x="25" y="20" fill="#ffc001"/><rect x="26" y="20" fill="#ffbe00"/><rect x="27" y="20" fill="#ffbb00"/><rect x="28" y="20" fill="#ffb800"/><rect x="29" y="20" fill="#ffb600"/><rect x="-2" y="21" fill="#deff1a"/><rect x="-1" y="21" fill="#e2ff19"/><rect x="0" y="21" fill="#e7ff19"/><rect x="1" y="21" fill="#ebff18"/><rect x="2" y="21" fill="#efff17"/><rect x="3" y="21" fill="#f3ff16"/><rect x="4" y="21" fill="#f7ff15"/><rect x="5" y="21" fill="#fbff15"/><rect x="6" y="21" fill="#ffff14"/><rect x="7" y="21" fill="#fffa13"/><rect x="8" y="21" fill="#fff611"/><rect x="9" y="21" fill="#fff210"/><rect x="10" y="21" fill="#ffee0f"/><rect x="11" y="21" fill="#ffeb0e"/><rect x="12" y="21" fill="#ffe70d"/><rect x="13" y="21" fill="#ffe30c"/><rect x="14" y="21" fill="#ffe00b"/><rect x="15" y="21" fill="#ffdc0a"/><rect x="16" y="21" fill="#ffd90a"/><rect x="17" y="21" fill="#ffd609"/><rect x="18" y="21" fill="#ffd308"/><rect x="19" y="21" fill="#ffd007"/><rect x="20" y="21" fill="#ffcd06"/><rect x="21" y="21" fill="#ffca05"/><rect x="22" y="21" fill="#ffc704"/><rect x="23" y="21" fill="#ffc404"/><rect x="24" y="21" fill="#ffc103"/><rect x="25" y="21" fill="#ffbe02"/><rect x="26" y="21" fill="#ffbc01"/><rect x="27" y="21" fill="#ffb901"/><rect x="28" y="21" fill="#ffb600"/><rect x="29" y="21" fill="#ffb400"/><rect x="-2" y="22" fill="#e1ff1c"/><rect x="-1" y="22" fill="#e5ff1b"/><rect x="0" y="22" fill="#e9ff1a"/><rect x="1" y="22" fill="#edff19"/><rect x="2" y="22" fill="#f2ff18"/><rect x="3" y="22" fill="#f6ff18"/><rect x="4" y="22" fill="#faff17"/><rect x="5" y="22" fill="#feff16"/><rect x="6" y="22" fill="#fffc15"/><rect x="7" y="22" fill="#fff714"/><rect x="8" y="22" fill="#fff313"/><rect x="9" y="22" fill="#fff012"/><rect x="10" y="22" fill="#ffec10"/><rect x="11" y="22" fill="#ffe80f"/><rect x="12" y="22" fill="#ffe40e"/><rect x="13" y="22" fill="#ffe10d"/><rect x="14" y="22" fill="#ffdd0c"/><rect x="15" y="22" fill="#ffda0c"/><rect x="16" y="22" fill="#ffd70b"/><rect x="17" y="22" fill="#ffd30a"/><rect x="18" y="22" fill="#ffd009"/><rect x="19" y="22" fill="#ffcd08"/><rect x="20" y="22" fill="#ffca07"/><rect x="21" y="22" fill="#ffc706"/><rect x="22" y="22" fill="#ffc406"/><rect x="23" y="22" fill="#ffc105"/><rect x="24" y="22" fill="#ffbf04"/><rect x="25" y="22" fill="#ffbc03"/><rect x="26" y="22" fill="#ffb902"/><rect x="27" y="22" fill="#ffb702"/><rect x="28" y="22" fill="#ffb401"/><rect x="29" y="22" fill="#ffb200"/><rect x="-2" y="23" fill="#e4ff1d"/><rect x="-1" y="23" fill="#e8ff1c"/><rect x="0" y="23" fill="#ecff1c"/><rect x="1" y="23" fill="#f0ff1b"/><rect x="2" y="23" fill="#f5ff1a"/><rect x="3" y="23" fill="#f9ff19"/><rect x="4" y="23" fill="#fdff18"/><rect x="5" y="23" fill="#fffd17"/><rect x="6" y="23" fill="#fff916"/><rect x="7" y="23" fill="#fff515"/><rect x="8" y="23" fill="#fff114"/><rect x="9" y="23" fill="#ffed13"/><rect x="10" y="23" fill="#ffe912"/><rect x="11" y="23" fill="#ffe511"/><rect x="12" y="23" fill="#ffe210"/><rect x="13" y="23" fill="#ffde0f"/><rect x="14" y="23" fill="#ffdb0e"/><rect x="15" y="23" fill="#ffd70d"/><rect x="16" y="23" fill="#ffd40c"/><rect x="17" y="23" fill="#ffd10b"/><rect x="18" y="23" fill="#ffce0a"/><rect x="19" y="23" fill="#ffcb09"/><rect x="20" y="23" fill="#ffc808"/><rect x="21" y="23" fill="#ffc507"/><rect x="22" y="23" fill="#ffc207"/><rect x="23" y="23" fill="#ffbf06"/><rect x="24" y="23" fill="#ffbd05"/><rect x="25" y="23" fill="#ffba04"/><rect x="26" y="23" fill="#ffb704"/><rect x="27" y="23" fill="#ffb503"/><rect x="28" y="23" fill="#ffb202"/><rect x="29" y="23" fill="#ffb001"/><rect x="-2" y="24" fill="#e7ff1f"/><rect x="-1" y="24" fill="#ebff1e"/><rect x="0" y="24" fill="#efff1d"/><rect x="1" y="24" fill="#f3ff1c"/><rect x="2" y="24" fill="#f7ff1c"/><rect x="3" y="24" fill="#fcff1b"/><rect x="4" y="24" fill="#fffe1a"/><rect x="5" y="24" fill="#fffa19"/><rect x="6" y="24" fill="#fff617"/><rect x="7" y="24" fill="#fff216"/><rect x="8" y="24" fill="#ffee15"/><rect x="9" y="24" fill="#ffea14"/><rect x="10" y="24" fill="#ffe613"/><rect x="11" y="24" fill="#ffe312"/><rect x="12" y="24" fill="#ffdf11"/><rect x="13" y="24" fill="#ffdc10"/><rect x="14" y="24" fill="#ffd80f"/><rect x="15" y="24" fill="#ffd50e"/><rect x="16" y="24" fill="#ffd20d"/><rect x="17" y="24" fill="#ffcf0c"/><rect x="18" y="24" fill="#ffcb0b"/><rect x="19" y="24" fill="#ffc80a"/><rect x="20" y="24" fill="#ffc509"/><rect x="21" y="24" fill="#ffc308"/><rect x="22" y="24" fill="#ffc008"/><rect x="23" y="24" fill="#ffbd07"/><rect x="24" y="24" fill="#ffba06"/><rect x="25" y="24" fill="#ffb805"/><rect x="26" y="24" fill="#ffb505"/><rect x="27" y="24" fill="#ffb304"/><rect x="28" y="24" fill="#ffb003"/><rect x="29" y="24" fill="#ffae02"/><rect x="-2" y="25" fill="#eaff20"/><rect x="-1" y="25" fill="#eeff1f"/><rect x="0" y="25" fill="#f2ff1f"/><rect x="1" y="25" fill="#f6ff1e"/><rect x="2" y="25" fill="#fbff1d"/><rect x="3" y="25" fill="#ffff1c"/><rect x="4" y="25" fill="#fffb1b"/><rect x="5" y="25" fill="#fff71a"/><rect x="6" y="25" fill="#fff319"/><rect x="7" y="25" fill="#ffef17"/><rect x="8" y="25" fill="#ffeb16"/><rect x="9" y="25" fill="#ffe715"/><rect x="10" y="25" fill="#ffe314"/><rect x="11" y="25" fill="#ffe013"/><rect x="12" y="25" fill="#ffdc12"/><rect x="13" y="25" fill="#ffd911"/><rect x="14" y="25" fill="#ffd610"/><rect x="15" y="25" fill="#ffd20f"/><rect x="16" y="25" fill="#ffcf0e"/><rect x="17" y="25" fill="#ffcc0d"/><rect x="18" y="25" fill="#ffc90c"/><rect x="19" y="25" fill="#ffc60b"/><rect x="20" y="25" fill="#ffc30a"/><rect x="21" y="25" fill="#ffc00a"/><rect x="22" y="25" fill="#ffbe09"/><rect x="23" y="25" fill="#ffbb08"/><rect x="24" y="25" fill="#ffb807"/><rect x="25" y="25" fill="#ffb606"/><rect x="26" y="25" fill="#ffb306"/><rect x="27" y="25" fill="#ffb005"/><rect x="28" y="25" fill="#ffae04"/><rect x="29" y="25" fill="#ffac03"/></g></g><path fill="#000" fill-opacity=".4" d="M1954.3 35.4L2754.3 574.2V100H1954.3Z"/></g>
<rect x="2343.8" y="294.1" width="21" height="21" fill="none" stroke="#fff" stroke-width="2.2"/>
<circle cx="2477.9" cy="408.4" r="6.4" fill="#c4c410" stroke="#000" stroke-width="1.6"/>
<text x="34.8" y="1046.3" font-size="43.5" fill="#f0f0f0" textLength="331.5" lengthAdjust="spacingAndGlyphs" stroke="#333" stroke-width=".4">Current Reading</text>
<text x="34.8" y="1111.8" font-size="34.5" fill="#efefef" textLength="133.8" lengthAdjust="spacingAndGlyphs" stroke="#333" stroke-width=".25">x: 0,438</text>
<text x="34.8" y="1174.0" font-size="34.5" fill="#efefef" textLength="155.7" lengthAdjust="spacingAndGlyphs" stroke="#333" stroke-width=".25">y: 0,4868</text>
<text x="34.8" y="1235.6" font-size="34.5" fill="#efefef" textLength="145.5" lengthAdjust="spacingAndGlyphs" stroke="#333" stroke-width=".25">fL: 57,65</text>
<text x="34.8" y="1297.4" font-size="34.5" fill="#efefef" textLength="240.7" lengthAdjust="spacingAndGlyphs" stroke="#333" stroke-width=".25">cd/m²: 197,51</text>
<rect x="554.2" y="1016.6" width="380.1" height="273.9" fill="#232323" />
<text x="721.3" y="1007.2" font-size="21.5" fill="#dcdcdc" text-anchor="middle" textLength="125.5" lengthAdjust="spacingAndGlyphs">RGB Balance</text>
<line x1="544.2" y1="1262.8" x2="934.3" y2="1262.8" stroke="#a6a6a6" stroke-width="2.2" />
<text x="543.4" y="1270.4" font-size="21" fill="#dcdcdc" text-anchor="end">96</text>
<line x1="544.2" y1="1208.1" x2="934.3" y2="1208.1" stroke="#a6a6a6" stroke-width="2.2" />
<text x="543.4" y="1215.7" font-size="21" fill="#dcdcdc" text-anchor="end">98</text>
<line x1="544.2" y1="1153.3" x2="934.3" y2="1153.3" stroke="#a6a6a6" stroke-width="2.2" />
<text x="543.4" y="1160.9" font-size="21" fill="#dcdcdc" text-anchor="end">100</text>
<line x1="544.2" y1="1098.5" x2="934.3" y2="1098.5" stroke="#a6a6a6" stroke-width="2.2" />
<text x="543.4" y="1106.1" font-size="21" fill="#dcdcdc" text-anchor="end">102</text>
<line x1="544.2" y1="1043.8" x2="934.3" y2="1043.8" stroke="#a6a6a6" stroke-width="2.2" />
<text x="543.4" y="1051.4" font-size="21" fill="#dcdcdc" text-anchor="end">104</text>
<line x1="553.2" y1="1016.6" x2="935.3" y2="1016.6" stroke="#a6a6a6" stroke-width="2" />
<line x1="554.2" y1="1015.6" x2="554.2" y2="1300.0" stroke="#a6a6a6" stroke-width="2.2" />
<line x1="934.3" y1="1015.6" x2="934.3" y2="1300.0" stroke="#a6a6a6" stroke-width="2.2" />
<line x1="554.2" y1="1290.5" x2="934.3" y2="1290.5" stroke="#a6a6a6" stroke-width="2.2" />
<rect x="590.4" y="1047.0" width="102.2" height="242.5" fill="#000" />
<rect x="592.6" y="1049.0" width="97.8" height="240.5" fill="url(#gr)" />
<rect x="692.2" y="1262.8" width="100.7" height="26.7" fill="#000" />
<rect x="694.4" y="1264.8" width="96.3" height="24.7" fill="#59ad59" />
<rect x="793.2" y="1047.0" width="101.8" height="242.5" fill="#000" />
<rect x="795.4" y="1049.0" width="97.4" height="240.5" fill="url(#gb)" />
<text x="744.5" y="1314.6" font-size="21" fill="#dcdcdc" text-anchor="middle" textLength="54.5" lengthAdjust="spacingAndGlyphs">100%</text>
<rect x="965.0" y="978.2" width="1108.5" height="309.2" fill="#040404" />
<rect x="968.0" y="981.0" width="1103.5" height="46.3" fill="url(#th)" />
<text x="1374.8" y="1013.4" font-size="24" fill="#fff" text-anchor="end" textLength="61.0" lengthAdjust="spacingAndGlyphs">20%</text>
<text x="1536.5" y="1013.4" font-size="24" fill="#fff" text-anchor="end" textLength="61.0" lengthAdjust="spacingAndGlyphs">40%</text>
<text x="1698.2" y="1013.4" font-size="24" fill="#fff" text-anchor="end" textLength="61.0" lengthAdjust="spacingAndGlyphs">60%</text>
<text x="1859.9" y="1013.4" font-size="24" fill="#fff" text-anchor="end" textLength="61.0" lengthAdjust="spacingAndGlyphs">80%</text>
<text x="2030.3" y="1013.4" font-size="24" fill="#fff" text-anchor="end" textLength="79.5" lengthAdjust="spacingAndGlyphs">100%</text>
<rect x="968.0" y="1027.3" width="1103.5" height="43.5" fill="url(#trd)" />
<text x="994.8" y="1058.5" font-size="25" fill="#f2f2f2" textLength="130.3" lengthAdjust="spacingAndGlyphs" font-weight="bold" stroke="#f2f2f2" stroke-width=".5">x: CIE31</text>
<text x="1272.3" y="1058.1" font-size="25" fill="#f2f2f2" textLength="103.5" lengthAdjust="spacingAndGlyphs">0,3379</text>
<text x="1434.0" y="1058.1" font-size="25" fill="#f2f2f2" textLength="103.5" lengthAdjust="spacingAndGlyphs">0,3613</text>
<text x="1595.7" y="1058.1" font-size="25" fill="#f2f2f2" textLength="103.5" lengthAdjust="spacingAndGlyphs">0,3847</text>
<text x="1757.4" y="1058.1" font-size="25" fill="#f2f2f2" textLength="103.5" lengthAdjust="spacingAndGlyphs">0,4101</text>
<text x="1919.0" y="1058.1" font-size="25" fill="#f2f2f2" textLength="103.5" lengthAdjust="spacingAndGlyphs">0,4380</text>
<rect x="968.0" y="1070.5" width="1103.5" height="43.5" fill="url(#trl)" />
<text x="994.8" y="1101.7" font-size="25" fill="#f2f2f2" textLength="130.3" lengthAdjust="spacingAndGlyphs" font-weight="bold" stroke="#f2f2f2" stroke-width=".5">y: CIE31</text>
<text x="1272.3" y="1101.3" font-size="25" fill="#f2f2f2" textLength="103.5" lengthAdjust="spacingAndGlyphs">0,3632</text>
<text x="1434.0" y="1101.3" font-size="25" fill="#f2f2f2" textLength="103.5" lengthAdjust="spacingAndGlyphs">0,3923</text>
<text x="1595.7" y="1101.3" font-size="25" fill="#f2f2f2" textLength="103.5" lengthAdjust="spacingAndGlyphs">0,4210</text>
<text x="1757.4" y="1101.3" font-size="25" fill="#f2f2f2" textLength="103.5" lengthAdjust="spacingAndGlyphs">0,4524</text>
<text x="1919.0" y="1101.3" font-size="25" fill="#f2f2f2" textLength="103.5" lengthAdjust="spacingAndGlyphs">0,4868</text>
<rect x="968.0" y="1113.7" width="1103.5" height="43.5" fill="url(#trd)" />
<text x="994.8" y="1144.9" font-size="25" fill="#f2f2f2" textLength="20.0" lengthAdjust="spacingAndGlyphs" font-weight="bold" stroke="#f2f2f2" stroke-width=".5">Y</text>
<text x="1272.3" y="1144.5" font-size="25" fill="#f2f2f2" textLength="142.5" lengthAdjust="spacingAndGlyphs">229,0316</text>
<text x="1434.0" y="1144.5" font-size="25" fill="#f2f2f2" textLength="142.5" lengthAdjust="spacingAndGlyphs">219,1605</text>
<text x="1595.7" y="1144.5" font-size="25" fill="#f2f2f2" textLength="142.5" lengthAdjust="spacingAndGlyphs">211,3245</text>
<text x="1757.4" y="1144.5" font-size="25" fill="#f2f2f2" textLength="142.5" lengthAdjust="spacingAndGlyphs">204,3081</text>
<text x="1919.0" y="1144.5" font-size="25" fill="#f2f2f2" textLength="142.5" lengthAdjust="spacingAndGlyphs">197,5069</text>
<rect x="968.0" y="1156.9" width="1103.5" height="43.5" fill="url(#trl)" />
<text x="994.8" y="1188.1" font-size="25" fill="#f2f2f2" textLength="237.5" lengthAdjust="spacingAndGlyphs" font-weight="bold" stroke="#f2f2f2" stroke-width=".5">Target x:CIE31</text>
<text x="1272.3" y="1187.7" font-size="25" fill="#f2f2f2" textLength="103.5" lengthAdjust="spacingAndGlyphs">0,3344</text>
<text x="1434.0" y="1187.7" font-size="25" fill="#f2f2f2" textLength="103.5" lengthAdjust="spacingAndGlyphs">0,3564</text>
<text x="1595.7" y="1187.7" font-size="25" fill="#f2f2f2" textLength="103.5" lengthAdjust="spacingAndGlyphs">0,3773</text>
<text x="1757.4" y="1187.7" font-size="25" fill="#f2f2f2" textLength="103.5" lengthAdjust="spacingAndGlyphs">0,3969</text>
<text x="1919.0" y="1187.7" font-size="25" fill="#f2f2f2" textLength="103.5" lengthAdjust="spacingAndGlyphs">0,4193</text>
<rect x="968.0" y="1200.2" width="1103.5" height="43.5" fill="url(#trd)" />
<text x="994.8" y="1231.4" font-size="25" fill="#f2f2f2" textLength="237.5" lengthAdjust="spacingAndGlyphs" font-weight="bold" stroke="#f2f2f2" stroke-width=".5">Target y:CIE31</text>
<text x="1272.3" y="1231.0" font-size="25" fill="#f2f2f2" textLength="103.5" lengthAdjust="spacingAndGlyphs">0,3648</text>
<text x="1434.0" y="1231.0" font-size="25" fill="#f2f2f2" textLength="103.5" lengthAdjust="spacingAndGlyphs">0,4013</text>
<text x="1595.7" y="1231.0" font-size="25" fill="#f2f2f2" textLength="103.5" lengthAdjust="spacingAndGlyphs">0,4358</text>
<text x="1757.4" y="1231.0" font-size="25" fill="#f2f2f2" textLength="103.5" lengthAdjust="spacingAndGlyphs">0,4682</text>
<text x="1919.0" y="1231.0" font-size="25" fill="#f2f2f2" textLength="103.5" lengthAdjust="spacingAndGlyphs">0,5053</text>
<rect x="968.0" y="1243.4" width="1103.5" height="43.5" fill="url(#trl)" />
<text x="994.8" y="1274.6" font-size="25" fill="#f2f2f2" textLength="138.0" lengthAdjust="spacingAndGlyphs" font-weight="bold" stroke="#f2f2f2" stroke-width=".5">Target Y</text>
<text x="1272.3" y="1274.2" font-size="25" fill="#f2f2f2" textLength="142.5" lengthAdjust="spacingAndGlyphs">222,9626</text>
<text x="1434.0" y="1274.2" font-size="25" fill="#f2f2f2" textLength="142.5" lengthAdjust="spacingAndGlyphs">219,0489</text>
<text x="1595.7" y="1274.2" font-size="25" fill="#f2f2f2" textLength="142.5" lengthAdjust="spacingAndGlyphs">216,0418</text>
<text x="1757.4" y="1274.2" font-size="25" fill="#f2f2f2" textLength="142.5" lengthAdjust="spacingAndGlyphs">213,6819</text>
<text x="1919.0" y="1274.2" font-size="25" fill="#f2f2f2" textLength="142.5" lengthAdjust="spacingAndGlyphs">211,4003</text>
<circle cx="23.5" cy="1339" r="7.2" fill="#6e6e6e"/>
<path d="M19.3 1341.3h8.4l-4.2-4.6z" fill="#111"/>
<text x="126.8" y="1386.6" font-size="10.2" fill="#333" text-anchor="middle" font-weight="bold">20%</text>
<text x="278.8" y="1386.6" font-size="10.2" fill="#333" text-anchor="middle" font-weight="bold">40%</text>
<text x="431.0" y="1386.6" font-size="10.2" fill="#333" text-anchor="middle" font-weight="bold">60%</text>
<text x="583.0" y="1386.6" font-size="10.2" fill="#333" text-anchor="middle" font-weight="bold">80%</text>
<text x="735.0" y="1386.6" font-size="10.2" fill="#fff" text-anchor="middle" font-weight="bold">100%</text>
<circle cx="2260.8" cy="1338.6" r="7" fill="#777"/>
<path d="M2256.6 1341h8.4l-4.2-4.6z" fill="#222"/>
<rect x="2253.5" y="1363.3" width="14.6" height="13.8" fill="#000" />
<circle cx="2309.2" cy="1345" r="9.8" fill="#8e8e8e"/>
<circle cx="2354.8" cy="1345" r="9.8" fill="#8e8e8e"/>
<circle cx="2399.9" cy="1345" r="9.8" fill="#8e8e8e"/>
<circle cx="2444.8" cy="1345" r="9.8" fill="#8e8e8e"/>
<circle cx="2489.6" cy="1345" r="9.8" fill="#8e8e8e"/>
<circle cx="2535.8" cy="1344.6" r="9.5" fill="#3e3e3e"/>
<rect x="2305.2" y="1341.0" width="8.0" height="8.0" fill="#2a2a2a" />
<path d="M2351.3 1340l8.5 5l-8.5 5z" fill="#2a2a2a"/>
<text x="2399.9" y="1348.6" font-size="10.5" fill="#2a2a2a" text-anchor="middle" font-weight="bold">[··]</text>
<text x="2444.8" y="1349.8" font-size="15" fill="#2a2a2a" text-anchor="middle" font-weight="bold">∞</text>
<g fill="none" stroke="#2a2a2a" stroke-width="2"><path d="M2484.6 1344a5 5 0 0 1 9-2.5"/><path d="M2494.6 1346a5 5 0 0 1 -9 2.5"/></g>
<path d="M2495.2 1338.5v4.4h-4.4zM2484.0 1351.5v-4.4h4.4z" fill="#2a2a2a"/>
<circle cx="2316.5" cy="1376.4" r="9" fill="#9c9c9c"/>
<circle cx="2531.3" cy="1376.4" r="9" fill="#9c9c9c"/>
<text x="2316.5" y="1381.5" font-size="17" fill="#444" text-anchor="middle">«</text>
<text x="2531.3" y="1381.5" font-size="17" fill="#444" text-anchor="middle">»</text>
<text x="2343.5" y="1383.2" font-size="19.5" fill="#3a3a3a" textLength="50.3" lengthAdjust="spacingAndGlyphs" stroke="#3a3a3a" stroke-width=".5">Back</text>
<text x="2450.4" y="1383.2" font-size="19.5" fill="#3a3a3a" textLength="51.2" lengthAdjust="spacingAndGlyphs" stroke="#3a3a3a" stroke-width=".5">Next</text>
</svg>
</div>
</body></html>
